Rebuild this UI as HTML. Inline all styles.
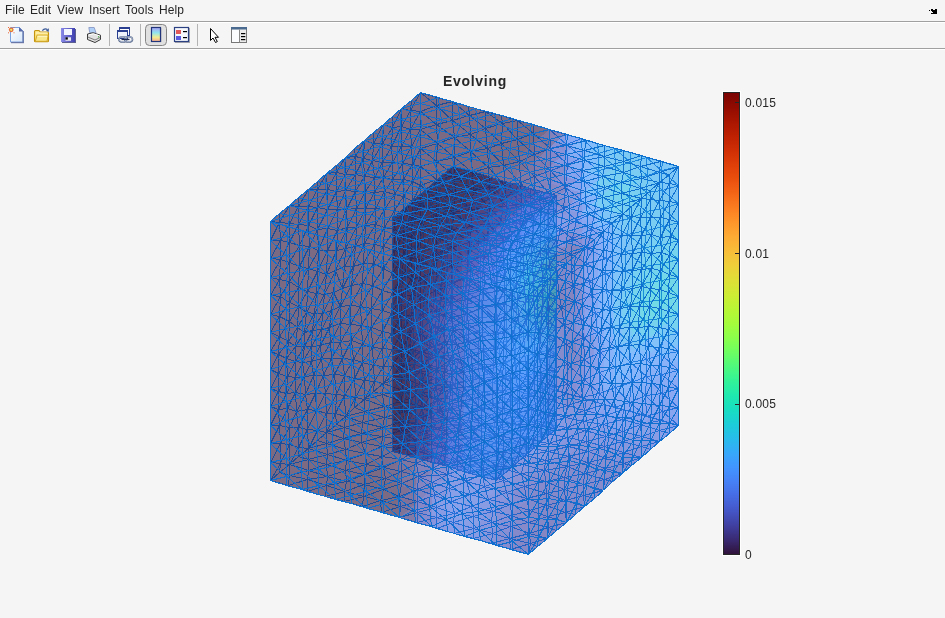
<!DOCTYPE html>
<html><head><meta charset="utf-8">
<style>
html,body{-webkit-font-smoothing:antialiased;margin:0;padding:0;width:945px;height:618px;overflow:hidden;background:#f5f5f5;font-family:"Liberation Sans",sans-serif;}
.abs{position:absolute;}
.gs{will-change:transform;}
#menu span{will-change:transform;position:absolute;top:2px;font-size:12px;color:#262626;line-height:16px;letter-spacing:0.1px}
.hl{position:absolute;left:0;width:945px;height:1px;}
.vs{position:absolute;top:24px;width:1px;height:22px;background:#b4b4b4;}
.lbl{will-change:transform;position:absolute;left:745px;font-size:12px;letter-spacing:0.2px;color:#262626;line-height:14px;}
</style></head><body>
<div id="menu">
<span style="left:5px">File</span>
<span style="left:30px">Edit</span>
<span style="left:57px">View</span>
<span style="left:89px">Insert</span>
<span style="left:125px">Tools</span>
<span style="left:159px">Help</span>
</div>
<svg class="abs" style="left:0;top:0" width="945" height="22">
<g fill="#000" shape-rendering="crispEdges">
<rect x="931" y="9" width="2" height="1"/><rect x="929" y="10" width="1" height="1"/>
<rect x="931" y="10" width="3" height="1"/><rect x="935" y="9" width="2" height="5"/>
<rect x="932" y="11" width="3" height="1"/><rect x="933" y="12" width="4" height="1"/>
<rect x="931" y="13" width="6" height="1"/><rect x="934" y="10" width="1" height="1"/>
</g></svg>
<div class="hl" style="top:21px;background:#a0a0a0"></div>
<div class="hl" style="top:22px;background:#ffffff"></div>
<div class="hl" style="top:48px;background:#a0a0a0"></div>
<div class="hl" style="top:49px;background:#ffffff"></div>
<div class="vs" style="left:109px"></div>
<div class="vs" style="left:140px"></div>
<div class="vs" style="left:197px"></div>
<svg class="abs" style="left:0;top:22px" width="260" height="26" viewBox="0 22 260 26">
<defs>
<linearGradient id="pg" x1="0" y1="0" x2="1" y2="1"><stop offset="0" stop-color="#ffffff"/><stop offset="1" stop-color="#d6e6fa"/></linearGradient>
<linearGradient id="fg" x1="0" y1="0" x2="0" y2="1"><stop offset="0" stop-color="#fff3b0"/><stop offset="1" stop-color="#f2d060"/></linearGradient>
<linearGradient id="sg" x1="0" y1="0" x2="1" y2="0"><stop offset="0" stop-color="#8a8ae8"/><stop offset="1" stop-color="#4040b0"/></linearGradient>
<linearGradient id="cbg" x1="0" y1="0" x2="0" y2="1"><stop offset="0" stop-color="#a99ff6"/><stop offset="0.38" stop-color="#8fe6f0"/><stop offset="0.7" stop-color="#f2ee90"/><stop offset="1" stop-color="#f8a890"/></linearGradient>
</defs>
<!-- new file -->
<path d="M11.5 27.5 H19.5 L23.5 31.5 V42.5 H11.5 Z" fill="#6a78a8" transform="translate(0.5,0.5)"/>
<path d="M10.5 27.5 H19.5 L23 31 V42 H10.5 Z" fill="url(#pg)" stroke="#7aa0e0" stroke-width="1"/>
<path d="M19 27 L23.5 31.5 H19 Z" fill="#5a6aa8"/>
<rect x="22.5" y="31" width="1.2" height="12" fill="#6a78a8"/>
<rect x="11" y="42" width="13" height="1.2" fill="#6a78a8"/>
<circle cx="11.2" cy="29.8" r="2.4" fill="#e8703a"/><circle cx="11.2" cy="29.8" r="1.1" fill="#e8f070"/>
<g fill="#e86a40"><rect x="8" y="27" width="1" height="1"/><rect x="13.5" y="27" width="1" height="1"/><rect x="8" y="32.3" width="1" height="1"/><rect x="13.5" y="32.3" width="1" height="1"/></g>
<!-- open folder -->
<path d="M34.5 31.5 Q34.5 30.5 35.5 30.5 H39 L40.2 32 H47.5 Q48.5 32 48.5 33 V41 Q48.5 41.8 47.5 41.8 H35.5 Q34.5 41.8 34.5 41 Z" fill="#fbe27a" stroke="#c49410" stroke-width="1.1"/>
<path d="M35.8 33 H47.5" stroke="#fff8d0" stroke-width="1"/>
<path d="M37 35.2 H48.2 L47 41.3 H35.3 Z" fill="#fae88c" stroke="#cfa21c" stroke-width="0.9"/>
<path d="M37.5 36.2 H47.2" stroke="#fffbe0" stroke-width="0.9"/>
<path d="M42.3 30.6 Q44.8 27.6 47.4 29.6" fill="none" stroke="#3c5a98" stroke-width="1.2"/>
<path d="M46 30.6 L48.9 28.3 L48.7 31.9 Z" fill="#3c5a98"/>
<!-- save -->
<rect x="62" y="29" width="14" height="14" fill="#5c6090"/>
<rect x="61" y="28" width="14" height="14" fill="url(#sg)"/>
<rect x="64" y="29" width="8" height="6" fill="#f4f6ff"/>
<rect x="65.5" y="37.3" width="5.5" height="3.5" fill="#e8e8f0"/><rect x="65.5" y="37.3" width="2.3" height="2.3" fill="#000"/>
<!-- print -->
<path d="M88.8 27.5 H94.2 L96 32.8 H89.8 Z" fill="#b0d0f8" stroke="#8090c0" stroke-width="0.8"/>
<path d="M87.5 34 L93 32.8 L100.5 35.2 V39.5 L95 42.5 L87.5 39.5 Z" fill="#e2e2e2" stroke="#3a3a3a" stroke-width="1"/>
<path d="M87.8 37 L95 40 L100.3 37.4" fill="none" stroke="#707070" stroke-width="0.9"/>
<path d="M89 34.8 L93.5 33.8 L99.5 35.8" fill="none" stroke="#ffffff" stroke-width="1"/>
<rect x="98" y="36.2" width="1.2" height="1.2" fill="#40b040"/>
<!-- link -->
<rect x="119.5" y="27.5" width="10" height="8" fill="#fff" stroke="#2a3f8f" stroke-width="1"/>
<rect x="119" y="27" width="11" height="2" fill="#2a3f8f"/>
<rect x="117.5" y="30.5" width="10" height="8" fill="#eef2fa" stroke="#2a3f8f" stroke-width="1"/>
<rect x="117" y="30" width="11" height="2" fill="#2a3f8f"/>
<ellipse cx="122.8" cy="39.4" rx="3.9" ry="2.6" fill="none" stroke="#5a6a8a" stroke-width="1.6"/>
<ellipse cx="128.6" cy="39.4" rx="3.9" ry="2.6" fill="none" stroke="#5a6a8a" stroke-width="1.6"/>
<ellipse cx="122.8" cy="39.2" rx="3.9" ry="2.5" fill="none" stroke="#c8d4ec" stroke-width="0.6"/>
<ellipse cx="128.6" cy="39.2" rx="3.9" ry="2.5" fill="none" stroke="#c8d4ec" stroke-width="0.6"/>
<rect x="121.5" y="38.8" width="8" height="1.3" fill="#1e2a50"/>
<!-- colorbar button -->
<rect x="145.5" y="24.5" width="21" height="21" rx="4" fill="#e0e0e0" stroke="#858585" stroke-width="1"/>
<rect x="151.5" y="27.5" width="9" height="14" fill="url(#cbg)" stroke="#22357a" stroke-width="1.2"/>
<rect x="161" y="28" width="0.8" height="14" fill="#b8b8c0"/>
<!-- legend -->
<rect x="175" y="28" width="15" height="15" fill="#a8a8b0"/>
<rect x="174.5" y="27.5" width="14" height="14" fill="#f6f8fc" stroke="#2a4080" stroke-width="1.2"/>
<rect x="176" y="30" width="5" height="4" fill="#e25858"/>
<rect x="176" y="36" width="5" height="4" fill="#5a5ae0"/>
<rect x="183" y="31" width="4" height="1.2" fill="#000"/>
<rect x="183" y="37" width="4" height="1.2" fill="#000"/>
<!-- arrow -->
<path d="M210.5 28.5 V40.5 L213 38 L215.5 42.5 L217.3 41.6 L215 37.3 H218.5 Z" fill="#fff" stroke="#000" stroke-width="1" stroke-linejoin="miter"/>
<!-- property inspector -->
<rect x="231.5" y="27.5" width="15" height="15" fill="#ececec" stroke="#777" stroke-width="1"/>
<rect x="231" y="27" width="16" height="2.5" fill="#4a6a90"/>
<rect x="232" y="30" width="7" height="12" fill="#fafcfe"/>
<rect x="239" y="29.5" width="1" height="13" fill="#888"/>
<rect x="241" y="33" width="4.3" height="1.2" fill="#000"/>
<rect x="241" y="36" width="4.3" height="1.2" fill="#000"/>
<rect x="241" y="39" width="4.3" height="1.2" fill="#000"/>
</svg>
<div class="abs gs" style="left:443px;top:73px;font-size:14px;font-weight:bold;color:#262626;letter-spacing:0.7px">Evolving</div>
<svg class="abs" style="left:0;top:0" width="945" height="618" viewBox="0 0 945 618">
<g fill-opacity="0.375" shape-rendering="crispEdges">
<path d="M420.5 351.5L411 359.5L411 343.5L420.5 335.5Z" fill="#33184a"/>
<path d="M420.5 335.5L411 343.5L411 327L420.5 319Z" fill="#341b51"/>
<path d="M420.5 319L411 327L411 311L420.5 303Z" fill="#341b51"/>
<path d="M420.5 303L411 311L411 295L420.5 287Z" fill="#341b51"/>
<path d="M420.5 287L411 295L411 278.5L420.5 270.5Z" fill="#33184a"/>
<path d="M420.5 270.5L411 278.5L411 262.5L420.5 254.5Z" fill="#321543"/>
<path d="M420.5 254.5L411 262.5L411 246L420.5 238Z" fill="#30123b"/>
<path d="M420.5 238L411 246L411 230L420.5 222Z" fill="#30123b"/>
<path d="M420.5 222L411 230L411 214L420.5 206Z" fill="#30123b"/>
<path d="M420.5 206L411 214L411 197.5L420.5 189.5Z" fill="#30123b"/>
<path d="M420.5 189.5L411 197.5L411 181.5L420.5 173.5Z" fill="#30123b"/>
<path d="M420.5 173.5L411 181.5L411 165.5L420.5 157Z" fill="#30123b"/>
<path d="M420.5 157L411 165.5L411 149L420.5 141Z" fill="#30123b"/>
<path d="M420.5 141L411 149L411 133L420.5 125Z" fill="#30123b"/>
<path d="M420.5 125L411 133L411 117L420.5 108.5Z" fill="#30123b"/>
<path d="M420.5 108.5L411 117L411 100.5L420.5 92.5Z" fill="#30123b"/>
<path d="M411 359.5L402 367.5L402 351.5L411 343.5Z" fill="#30123b"/>
<path d="M411 343.5L402 351.5L402 335L411 327Z" fill="#30123b"/>
<path d="M411 327L402 335L402 319L411 311Z" fill="#321543"/>
<path d="M411 311L402 319L402 303L411 295Z" fill="#33184a"/>
<path d="M411 295L402 303L402 286.5L411 278.5Z" fill="#321543"/>
<path d="M411 278.5L402 286.5L402 270.5L411 262.5Z" fill="#30123b"/>
<path d="M411 262.5L402 270.5L402 254.5L411 246Z" fill="#30123b"/>
<path d="M411 246L402 254.5L402 238L411 230Z" fill="#30123b"/>
<path d="M411 230L402 238L402 222L411 214Z" fill="#30123b"/>
<path d="M411 214L402 222L402 206L411 197.5Z" fill="#30123b"/>
<path d="M411 197.5L402 206L402 189.5L411 181.5Z" fill="#30123b"/>
<path d="M411 181.5L402 189.5L402 173.5L411 165.5Z" fill="#30123b"/>
<path d="M411 165.5L402 173.5L402 157L411 149Z" fill="#30123b"/>
<path d="M411 149L402 157L402 141L411 133Z" fill="#30123b"/>
<path d="M411 133L402 141L402 125L411 117Z" fill="#30123b"/>
<path d="M411 117L402 125L402 108.5L411 100.5Z" fill="#30123b"/>
<path d="M402 367.5L392.5 375.5L392.5 359.5L402 351.5Z" fill="#30123b"/>
<path d="M402 351.5L392.5 359.5L392.5 343.5L402 335Z" fill="#30123b"/>
<path d="M402 335L392.5 343.5L392.5 327L402 319Z" fill="#30123b"/>
<path d="M402 319L392.5 327L392.5 311L402 303Z" fill="#30123b"/>
<path d="M402 303L392.5 311L392.5 295L402 286.5Z" fill="#321543"/>
<path d="M402 286.5L392.5 295L392.5 278.5L402 270.5Z" fill="#30123b"/>
<path d="M402 270.5L392.5 278.5L392.5 262.5L402 254.5Z" fill="#30123b"/>
<path d="M402 254.5L392.5 262.5L392.5 246L402 238Z" fill="#30123b"/>
<path d="M402 238L392.5 246L392.5 230L402 222Z" fill="#30123b"/>
<path d="M402 222L392.5 230L392.5 214L402 206Z" fill="#30123b"/>
<path d="M402 206L392.5 214L392.5 197.5L402 189.5Z" fill="#30123b"/>
<path d="M402 189.5L392.5 197.5L392.5 181.5L402 173.5Z" fill="#30123b"/>
<path d="M402 173.5L392.5 181.5L392.5 165L402 157Z" fill="#30123b"/>
<path d="M402 157L392.5 165L392.5 149L402 141Z" fill="#30123b"/>
<path d="M402 141L392.5 149L392.5 133L402 125Z" fill="#30123b"/>
<path d="M402 125L392.5 133L392.5 116.5L402 108.5Z" fill="#30123b"/>
<path d="M392.5 375.5L383 384L383 367.5L392.5 359.5Z" fill="#30123b"/>
<path d="M392.5 359.5L383 367.5L383 351.5L392.5 343.5Z" fill="#30123b"/>
<path d="M392.5 343.5L383 351.5L383 335L392.5 327Z" fill="#30123b"/>
<path d="M392.5 327L383 335L383 319L392.5 311Z" fill="#30123b"/>
<path d="M392.5 311L383 319L383 303L392.5 295Z" fill="#30123b"/>
<path d="M392.5 295L383 303L383 286.5L392.5 278.5Z" fill="#30123b"/>
<path d="M392.5 278.5L383 286.5L383 270.5L392.5 262.5Z" fill="#30123b"/>
<path d="M392.5 262.5L383 270.5L383 254L392.5 246Z" fill="#30123b"/>
<path d="M392.5 246L383 254L383 238L392.5 230Z" fill="#30123b"/>
<path d="M392.5 230L383 238L383 222L392.5 214Z" fill="#30123b"/>
<path d="M392.5 214L383 222L383 205.5L392.5 197.5Z" fill="#30123b"/>
<path d="M392.5 197.5L383 205.5L383 189.5L392.5 181.5Z" fill="#30123b"/>
<path d="M392.5 181.5L383 189.5L383 173.5L392.5 165Z" fill="#30123b"/>
<path d="M392.5 165L383 173.5L383 157L392.5 149Z" fill="#30123b"/>
<path d="M392.5 149L383 157L383 141L392.5 133Z" fill="#30123b"/>
<path d="M392.5 133L383 141L383 125L392.5 116.5Z" fill="#30123b"/>
<path d="M383 384L373.5 392L373.5 375.5L383 367.5Z" fill="#30123b"/>
<path d="M383 367.5L373.5 375.5L373.5 359.5L383 351.5Z" fill="#30123b"/>
<path d="M383 351.5L373.5 359.5L373.5 343L383 335Z" fill="#30123b"/>
<path d="M383 335L373.5 343L373.5 327L383 319Z" fill="#30123b"/>
<path d="M383 319L373.5 327L373.5 311L383 303Z" fill="#30123b"/>
<path d="M383 303L373.5 311L373.5 294.5L383 286.5Z" fill="#30123b"/>
<path d="M383 286.5L373.5 294.5L373.5 278.5L383 270.5Z" fill="#30123b"/>
<path d="M383 270.5L373.5 278.5L373.5 262.5L383 254Z" fill="#30123b"/>
<path d="M383 254L373.5 262.5L373.5 246L383 238Z" fill="#30123b"/>
<path d="M383 238L373.5 246L373.5 230L383 222Z" fill="#30123b"/>
<path d="M383 222L373.5 230L373.5 214L383 205.5Z" fill="#30123b"/>
<path d="M383 205.5L373.5 214L373.5 197.5L383 189.5Z" fill="#30123b"/>
<path d="M383 189.5L373.5 197.5L373.5 181.5L383 173.5Z" fill="#30123b"/>
<path d="M383 173.5L373.5 181.5L373.5 165L383 157Z" fill="#30123b"/>
<path d="M383 157L373.5 165L373.5 149L383 141Z" fill="#30123b"/>
<path d="M383 141L373.5 149L373.5 133L383 125Z" fill="#30123b"/>
<path d="M373.5 392L364 400L364 383.5L373.5 375.5Z" fill="#30123b"/>
<path d="M373.5 375.5L364 383.5L364 367.5L373.5 359.5Z" fill="#30123b"/>
<path d="M373.5 359.5L364 367.5L364 351.5L373.5 343Z" fill="#30123b"/>
<path d="M373.5 343L364 351.5L364 335L373.5 327Z" fill="#30123b"/>
<path d="M373.5 327L364 335L364 319L373.5 311Z" fill="#30123b"/>
<path d="M373.5 311L364 319L364 303L373.5 294.5Z" fill="#30123b"/>
<path d="M373.5 294.5L364 303L364 286.5L373.5 278.5Z" fill="#30123b"/>
<path d="M373.5 278.5L364 286.5L364 270.5L373.5 262.5Z" fill="#30123b"/>
<path d="M373.5 262.5L364 270.5L364 254L373.5 246Z" fill="#30123b"/>
<path d="M373.5 246L364 254L364 238L373.5 230Z" fill="#30123b"/>
<path d="M373.5 230L364 238L364 222L373.5 214Z" fill="#30123b"/>
<path d="M373.5 214L364 222L364 205.5L373.5 197.5Z" fill="#30123b"/>
<path d="M373.5 197.5L364 205.5L364 189.5L373.5 181.5Z" fill="#30123b"/>
<path d="M373.5 181.5L364 189.5L364 173L373.5 165Z" fill="#30123b"/>
<path d="M373.5 165L364 173L364 157L373.5 149Z" fill="#30123b"/>
<path d="M373.5 149L364 157L364 141L373.5 133Z" fill="#30123b"/>
<path d="M364 400L355 408L355 392L364 383.5Z" fill="#30123b"/>
<path d="M364 383.5L355 392L355 375.5L364 367.5Z" fill="#30123b"/>
<path d="M364 367.5L355 375.5L355 359.5L364 351.5Z" fill="#30123b"/>
<path d="M364 351.5L355 359.5L355 343L364 335Z" fill="#30123b"/>
<path d="M364 335L355 343L355 327L364 319Z" fill="#30123b"/>
<path d="M364 319L355 327L355 311L364 303Z" fill="#30123b"/>
<path d="M364 303L355 311L355 294.5L364 286.5Z" fill="#30123b"/>
<path d="M364 286.5L355 294.5L355 278.5L364 270.5Z" fill="#30123b"/>
<path d="M364 270.5L355 278.5L355 262L364 254Z" fill="#30123b"/>
<path d="M364 254L355 262L355 246L364 238Z" fill="#30123b"/>
<path d="M364 238L355 246L355 230L364 222Z" fill="#30123b"/>
<path d="M364 222L355 230L355 213.5L364 205.5Z" fill="#30123b"/>
<path d="M364 205.5L355 213.5L355 197.5L364 189.5Z" fill="#30123b"/>
<path d="M364 189.5L355 197.5L355 181.5L364 173Z" fill="#30123b"/>
<path d="M364 173L355 181.5L355 165L364 157Z" fill="#30123b"/>
<path d="M364 157L355 165L355 149L364 141Z" fill="#30123b"/>
<path d="M355 408L345.5 416L345.5 400L355 392Z" fill="#30123b"/>
<path d="M355 392L345.5 400L345.5 383.5L355 375.5Z" fill="#30123b"/>
<path d="M355 375.5L345.5 383.5L345.5 367.5L355 359.5Z" fill="#30123b"/>
<path d="M355 359.5L345.5 367.5L345.5 351L355 343Z" fill="#30123b"/>
<path d="M355 343L345.5 351L345.5 335L355 327Z" fill="#30123b"/>
<path d="M355 327L345.5 335L345.5 319L355 311Z" fill="#30123b"/>
<path d="M355 311L345.5 319L345.5 302.5L355 294.5Z" fill="#30123b"/>
<path d="M355 294.5L345.5 302.5L345.5 286.5L355 278.5Z" fill="#30123b"/>
<path d="M355 278.5L345.5 286.5L345.5 270.5L355 262Z" fill="#30123b"/>
<path d="M355 262L345.5 270.5L345.5 254L355 246Z" fill="#30123b"/>
<path d="M355 246L345.5 254L345.5 238L355 230Z" fill="#30123b"/>
<path d="M355 230L345.5 238L345.5 222L355 213.5Z" fill="#30123b"/>
<path d="M355 213.5L345.5 222L345.5 205.5L355 197.5Z" fill="#30123b"/>
<path d="M355 197.5L345.5 205.5L345.5 189.5L355 181.5Z" fill="#30123b"/>
<path d="M355 181.5L345.5 189.5L345.5 173L355 165Z" fill="#30123b"/>
<path d="M355 165L345.5 173L345.5 157L355 149Z" fill="#30123b"/>
<path d="M345.5 416L336 424L336 408L345.5 400Z" fill="#30123b"/>
<path d="M345.5 400L336 408L336 391.5L345.5 383.5Z" fill="#30123b"/>
<path d="M345.5 383.5L336 391.5L336 375.5L345.5 367.5Z" fill="#30123b"/>
<path d="M345.5 367.5L336 375.5L336 359.5L345.5 351Z" fill="#30123b"/>
<path d="M345.5 351L336 359.5L336 343L345.5 335Z" fill="#30123b"/>
<path d="M345.5 335L336 343L336 327L345.5 319Z" fill="#30123b"/>
<path d="M345.5 319L336 327L336 311L345.5 302.5Z" fill="#30123b"/>
<path d="M345.5 302.5L336 311L336 294.5L345.5 286.5Z" fill="#30123b"/>
<path d="M345.5 286.5L336 294.5L336 278.5L345.5 270.5Z" fill="#30123b"/>
<path d="M345.5 270.5L336 278.5L336 262L345.5 254Z" fill="#30123b"/>
<path d="M345.5 254L336 262L336 246L345.5 238Z" fill="#30123b"/>
<path d="M345.5 238L336 246L336 230L345.5 222Z" fill="#30123b"/>
<path d="M345.5 222L336 230L336 213.5L345.5 205.5Z" fill="#30123b"/>
<path d="M345.5 205.5L336 213.5L336 197.5L345.5 189.5Z" fill="#30123b"/>
<path d="M345.5 189.5L336 197.5L336 181L345.5 173Z" fill="#30123b"/>
<path d="M345.5 173L336 181L336 165L345.5 157Z" fill="#30123b"/>
<path d="M336 424L327 432L327 416L336 408Z" fill="#30123b"/>
<path d="M336 408L327 416L327 400L336 391.5Z" fill="#30123b"/>
<path d="M336 391.5L327 400L327 383.5L336 375.5Z" fill="#30123b"/>
<path d="M336 375.5L327 383.5L327 367.5L336 359.5Z" fill="#30123b"/>
<path d="M336 359.5L327 367.5L327 351L336 343Z" fill="#30123b"/>
<path d="M336 343L327 351L327 335L336 327Z" fill="#30123b"/>
<path d="M336 327L327 335L327 319L336 311Z" fill="#30123b"/>
<path d="M336 311L327 319L327 302.5L336 294.5Z" fill="#30123b"/>
<path d="M336 294.5L327 302.5L327 286.5L336 278.5Z" fill="#30123b"/>
<path d="M336 278.5L327 286.5L327 270L336 262Z" fill="#30123b"/>
<path d="M336 262L327 270L327 254L336 246Z" fill="#30123b"/>
<path d="M336 246L327 254L327 238L336 230Z" fill="#30123b"/>
<path d="M336 230L327 238L327 221.5L336 213.5Z" fill="#30123b"/>
<path d="M336 213.5L327 221.5L327 205.5L336 197.5Z" fill="#30123b"/>
<path d="M336 197.5L327 205.5L327 189.5L336 181Z" fill="#30123b"/>
<path d="M336 181L327 189.5L327 173L336 165Z" fill="#30123b"/>
<path d="M327 432L317.5 440L317.5 424L327 416Z" fill="#30123b"/>
<path d="M327 416L317.5 424L317.5 408L327 400Z" fill="#30123b"/>
<path d="M327 400L317.5 408L317.5 391.5L327 383.5Z" fill="#30123b"/>
<path d="M327 383.5L317.5 391.5L317.5 375.5L327 367.5Z" fill="#30123b"/>
<path d="M327 367.5L317.5 375.5L317.5 359L327 351Z" fill="#30123b"/>
<path d="M327 351L317.5 359L317.5 343L327 335Z" fill="#30123b"/>
<path d="M327 335L317.5 343L317.5 327L327 319Z" fill="#30123b"/>
<path d="M327 319L317.5 327L317.5 310.5L327 302.5Z" fill="#30123b"/>
<path d="M327 302.5L317.5 310.5L317.5 294.5L327 286.5Z" fill="#30123b"/>
<path d="M327 286.5L317.5 294.5L317.5 278.5L327 270Z" fill="#30123b"/>
<path d="M327 270L317.5 278.5L317.5 262L327 254Z" fill="#30123b"/>
<path d="M327 254L317.5 262L317.5 246L327 238Z" fill="#30123b"/>
<path d="M327 238L317.5 246L317.5 230L327 221.5Z" fill="#30123b"/>
<path d="M327 221.5L317.5 230L317.5 213.5L327 205.5Z" fill="#30123b"/>
<path d="M327 205.5L317.5 213.5L317.5 197.5L327 189.5Z" fill="#30123b"/>
<path d="M327 189.5L317.5 197.5L317.5 181L327 173Z" fill="#30123b"/>
<path d="M317.5 440L308 448L308 432L317.5 424Z" fill="#30123b"/>
<path d="M317.5 424L308 432L308 416L317.5 408Z" fill="#30123b"/>
<path d="M317.5 408L308 416L308 399.5L317.5 391.5Z" fill="#30123b"/>
<path d="M317.5 391.5L308 399.5L308 383.5L317.5 375.5Z" fill="#30123b"/>
<path d="M317.5 375.5L308 383.5L308 367.5L317.5 359Z" fill="#30123b"/>
<path d="M317.5 359L308 367.5L308 351L317.5 343Z" fill="#30123b"/>
<path d="M317.5 343L308 351L308 335L317.5 327Z" fill="#30123b"/>
<path d="M317.5 327L308 335L308 319L317.5 310.5Z" fill="#30123b"/>
<path d="M317.5 310.5L308 319L308 302.5L317.5 294.5Z" fill="#30123b"/>
<path d="M317.5 294.5L308 302.5L308 286.5L317.5 278.5Z" fill="#30123b"/>
<path d="M317.5 278.5L308 286.5L308 270L317.5 262Z" fill="#30123b"/>
<path d="M317.5 262L308 270L308 254L317.5 246Z" fill="#30123b"/>
<path d="M317.5 246L308 254L308 238L317.5 230Z" fill="#30123b"/>
<path d="M317.5 230L308 238L308 221.5L317.5 213.5Z" fill="#30123b"/>
<path d="M317.5 213.5L308 221.5L308 205.5L317.5 197.5Z" fill="#30123b"/>
<path d="M317.5 197.5L308 205.5L308 189L317.5 181Z" fill="#30123b"/>
<path d="M308 448L298.5 456.5L298.5 440L308 432Z" fill="#30123b"/>
<path d="M308 432L298.5 440L298.5 424L308 416Z" fill="#30123b"/>
<path d="M308 416L298.5 424L298.5 408L308 399.5Z" fill="#30123b"/>
<path d="M308 399.5L298.5 408L298.5 391.5L308 383.5Z" fill="#30123b"/>
<path d="M308 383.5L298.5 391.5L298.5 375.5L308 367.5Z" fill="#30123b"/>
<path d="M308 367.5L298.5 375.5L298.5 359L308 351Z" fill="#30123b"/>
<path d="M308 351L298.5 359L298.5 343L308 335Z" fill="#30123b"/>
<path d="M308 335L298.5 343L298.5 327L308 319Z" fill="#30123b"/>
<path d="M308 319L298.5 327L298.5 310.5L308 302.5Z" fill="#30123b"/>
<path d="M308 302.5L298.5 310.5L298.5 294.5L308 286.5Z" fill="#30123b"/>
<path d="M308 286.5L298.5 294.5L298.5 278L308 270Z" fill="#30123b"/>
<path d="M308 270L298.5 278L298.5 262L308 254Z" fill="#30123b"/>
<path d="M308 254L298.5 262L298.5 246L308 238Z" fill="#30123b"/>
<path d="M308 238L298.5 246L298.5 229.5L308 221.5Z" fill="#30123b"/>
<path d="M308 221.5L298.5 229.5L298.5 213.5L308 205.5Z" fill="#30123b"/>
<path d="M308 205.5L298.5 213.5L298.5 197.5L308 189Z" fill="#30123b"/>
<path d="M298.5 456.5L289 464.5L289 448L298.5 440Z" fill="#30123b"/>
<path d="M298.5 440L289 448L289 432L298.5 424Z" fill="#30123b"/>
<path d="M298.5 424L289 432L289 416L298.5 408Z" fill="#30123b"/>
<path d="M298.5 408L289 416L289 399.5L298.5 391.5Z" fill="#30123b"/>
<path d="M298.5 391.5L289 399.5L289 383.5L298.5 375.5Z" fill="#30123b"/>
<path d="M298.5 375.5L289 383.5L289 367L298.5 359Z" fill="#30123b"/>
<path d="M298.5 359L289 367L289 351L298.5 343Z" fill="#30123b"/>
<path d="M298.5 343L289 351L289 335L298.5 327Z" fill="#30123b"/>
<path d="M298.5 327L289 335L289 318.5L298.5 310.5Z" fill="#30123b"/>
<path d="M298.5 310.5L289 318.5L289 302.5L298.5 294.5Z" fill="#30123b"/>
<path d="M298.5 294.5L289 302.5L289 286.5L298.5 278Z" fill="#30123b"/>
<path d="M298.5 278L289 286.5L289 270L298.5 262Z" fill="#30123b"/>
<path d="M298.5 262L289 270L289 254L298.5 246Z" fill="#30123b"/>
<path d="M298.5 246L289 254L289 238L298.5 229.5Z" fill="#30123b"/>
<path d="M298.5 229.5L289 238L289 221.5L298.5 213.5Z" fill="#30123b"/>
<path d="M298.5 213.5L289 221.5L289 205.5L298.5 197.5Z" fill="#30123b"/>
<path d="M289 464.5L280 472.5L280 456L289 448Z" fill="#30123b"/>
<path d="M289 448L280 456L280 440L289 432Z" fill="#30123b"/>
<path d="M289 432L280 440L280 424L289 416Z" fill="#30123b"/>
<path d="M289 416L280 424L280 407.5L289 399.5Z" fill="#30123b"/>
<path d="M289 399.5L280 407.5L280 391.5L289 383.5Z" fill="#30123b"/>
<path d="M289 383.5L280 391.5L280 375.5L289 367Z" fill="#30123b"/>
<path d="M289 367L280 375.5L280 359L289 351Z" fill="#30123b"/>
<path d="M289 351L280 359L280 343L289 335Z" fill="#30123b"/>
<path d="M289 335L280 343L280 327L289 318.5Z" fill="#30123b"/>
<path d="M289 318.5L280 327L280 310.5L289 302.5Z" fill="#30123b"/>
<path d="M289 302.5L280 310.5L280 294.5L289 286.5Z" fill="#30123b"/>
<path d="M289 286.5L280 294.5L280 278L289 270Z" fill="#30123b"/>
<path d="M289 270L280 278L280 262L289 254Z" fill="#30123b"/>
<path d="M289 254L280 262L280 246L289 238Z" fill="#30123b"/>
<path d="M289 238L280 246L280 229.5L289 221.5Z" fill="#30123b"/>
<path d="M289 221.5L280 229.5L280 213.5L289 205.5Z" fill="#30123b"/>
<path d="M280 472.5L270.5 480.5L270.5 464.5L280 456Z" fill="#30123b"/>
<path d="M280 456L270.5 464.5L270.5 448L280 440Z" fill="#30123b"/>
<path d="M280 440L270.5 448L270.5 432L280 424Z" fill="#30123b"/>
<path d="M280 424L270.5 432L270.5 416L280 407.5Z" fill="#30123b"/>
<path d="M280 407.5L270.5 416L270.5 399.5L280 391.5Z" fill="#30123b"/>
<path d="M280 391.5L270.5 399.5L270.5 383.5L280 375.5Z" fill="#30123b"/>
<path d="M280 375.5L270.5 383.5L270.5 367L280 359Z" fill="#30123b"/>
<path d="M280 359L270.5 367L270.5 351L280 343Z" fill="#30123b"/>
<path d="M280 343L270.5 351L270.5 335L280 327Z" fill="#30123b"/>
<path d="M280 327L270.5 335L270.5 318.5L280 310.5Z" fill="#30123b"/>
<path d="M280 310.5L270.5 318.5L270.5 302.5L280 294.5Z" fill="#30123b"/>
<path d="M280 294.5L270.5 302.5L270.5 286L280 278Z" fill="#30123b"/>
<path d="M280 278L270.5 286L270.5 270L280 262Z" fill="#30123b"/>
<path d="M280 262L270.5 270L270.5 254L280 246Z" fill="#30123b"/>
<path d="M280 246L270.5 254L270.5 237.5L280 229.5Z" fill="#30123b"/>
<path d="M280 229.5L270.5 237.5L270.5 221.5L280 213.5Z" fill="#30123b"/>
<path d="M420.5 351.5L436.5 356L436.5 340L420.5 335.5Z" fill="#372466"/>
<path d="M420.5 335.5L436.5 340L436.5 324L420.5 319Z" fill="#372466"/>
<path d="M420.5 319L436.5 324L436.5 307.5L420.5 303Z" fill="#372466"/>
<path d="M420.5 303L436.5 307.5L436.5 291.5L420.5 287Z" fill="#372466"/>
<path d="M420.5 287L436.5 291.5L436.5 275L420.5 270.5Z" fill="#36215f"/>
<path d="M420.5 270.5L436.5 275L436.5 259L420.5 254.5Z" fill="#341b51"/>
<path d="M420.5 254.5L436.5 259L436.5 243L420.5 238Z" fill="#321543"/>
<path d="M420.5 238L436.5 243L436.5 226.5L420.5 222Z" fill="#30123b"/>
<path d="M420.5 222L436.5 226.5L436.5 210.5L420.5 206Z" fill="#30123b"/>
<path d="M420.5 206L436.5 210.5L436.5 194L420.5 189.5Z" fill="#30123b"/>
<path d="M420.5 189.5L436.5 194L436.5 178L420.5 173.5Z" fill="#30123b"/>
<path d="M420.5 173.5L436.5 178L436.5 162L420.5 157Z" fill="#30123b"/>
<path d="M420.5 157L436.5 162L436.5 145.5L420.5 141Z" fill="#30123b"/>
<path d="M420.5 141L436.5 145.5L436.5 129.5L420.5 125Z" fill="#30123b"/>
<path d="M420.5 125L436.5 129.5L436.5 113.5L420.5 108.5Z" fill="#30123b"/>
<path d="M420.5 108.5L436.5 113.5L436.5 97L420.5 92.5Z" fill="#30123b"/>
<path d="M436.5 356L453 361L453 344.5L436.5 340Z" fill="#3d358b"/>
<path d="M436.5 340L453 344.5L453 328.5L436.5 324Z" fill="#3d358b"/>
<path d="M436.5 324L453 328.5L453 312L436.5 307.5Z" fill="#3c3286"/>
<path d="M436.5 307.5L453 312L453 296L436.5 291.5Z" fill="#3b2f80"/>
<path d="M436.5 291.5L453 296L453 280L436.5 275Z" fill="#3b2f80"/>
<path d="M436.5 275L453 280L453 263.5L436.5 259Z" fill="#392a73"/>
<path d="M436.5 259L453 263.5L453 247.5L436.5 243Z" fill="#372466"/>
<path d="M436.5 243L453 247.5L453 231L436.5 226.5Z" fill="#351e58"/>
<path d="M436.5 226.5L453 231L453 215L436.5 210.5Z" fill="#321543"/>
<path d="M436.5 210.5L453 215L453 199L436.5 194Z" fill="#30123b"/>
<path d="M436.5 194L453 199L453 182.5L436.5 178Z" fill="#30123b"/>
<path d="M436.5 178L453 182.5L453 166.5L436.5 162Z" fill="#30123b"/>
<path d="M436.5 162L453 166.5L453 150.5L436.5 145.5Z" fill="#30123b"/>
<path d="M436.5 145.5L453 150.5L453 134L436.5 129.5Z" fill="#30123b"/>
<path d="M436.5 129.5L453 134L453 118L436.5 113.5Z" fill="#30123b"/>
<path d="M436.5 113.5L453 118L453 102L436.5 97Z" fill="#30123b"/>
<path d="M453 361L469 365.5L469 349L453 344.5Z" fill="#424bb5"/>
<path d="M453 344.5L469 349L469 333L453 328.5Z" fill="#4249b1"/>
<path d="M453 328.5L469 333L469 317L453 312Z" fill="#4146ac"/>
<path d="M453 312L469 317L469 300.5L453 296Z" fill="#4040a2"/>
<path d="M453 296L469 300.5L469 284.5L453 280Z" fill="#4040a2"/>
<path d="M453 280L469 284.5L469 268L453 263.5Z" fill="#3f3e9c"/>
<path d="M453 263.5L469 268L469 252L453 247.5Z" fill="#3f3b97"/>
<path d="M453 247.5L469 252L469 236L453 231Z" fill="#3c3286"/>
<path d="M453 231L469 236L469 219.5L453 215Z" fill="#372466"/>
<path d="M453 215L469 219.5L469 203.5L453 199Z" fill="#33184a"/>
<path d="M453 199L469 203.5L469 187.5L453 182.5Z" fill="#30123b"/>
<path d="M453 182.5L469 187.5L469 171L453 166.5Z" fill="#30123b"/>
<path d="M453 166.5L469 171L469 155L453 150.5Z" fill="#30123b"/>
<path d="M453 150.5L469 155L469 139L453 134Z" fill="#30123b"/>
<path d="M453 134L469 139L469 122.5L453 118Z" fill="#30123b"/>
<path d="M453 118L469 122.5L469 106.5L453 102Z" fill="#30123b"/>
<path d="M469 365.5L485 370L485 354L469 349Z" fill="#4661d6"/>
<path d="M469 349L485 354L485 337.5L469 333Z" fill="#455ed3"/>
<path d="M469 333L485 337.5L485 321.5L469 317Z" fill="#4559cb"/>
<path d="M469 317L485 321.5L485 305L469 300.5Z" fill="#4454c3"/>
<path d="M469 300.5L485 305L485 289L469 284.5Z" fill="#4454c3"/>
<path d="M469 284.5L485 289L485 273L469 268Z" fill="#4454c3"/>
<path d="M469 268L485 273L485 256.5L469 252Z" fill="#4451bf"/>
<path d="M469 252L485 256.5L485 240.5L469 236Z" fill="#4249b1"/>
<path d="M469 236L485 240.5L485 224.5L469 219.5Z" fill="#3f3e9c"/>
<path d="M469 219.5L485 224.5L485 208L469 203.5Z" fill="#3a2d79"/>
<path d="M469 203.5L485 208L485 192L469 187.5Z" fill="#351e58"/>
<path d="M469 187.5L485 192L485 176L469 171Z" fill="#30123b"/>
<path d="M469 171L485 176L485 159.5L469 155Z" fill="#30123b"/>
<path d="M469 155L485 159.5L485 143.5L469 139Z" fill="#30123b"/>
<path d="M469 139L485 143.5L485 127L469 122.5Z" fill="#30123b"/>
<path d="M469 122.5L485 127L485 111L469 106.5Z" fill="#30123b"/>
<path d="M485 370L501 374.5L501 358.5L485 354Z" fill="#4773eb"/>
<path d="M485 354L501 358.5L501 342L485 337.5Z" fill="#4773eb"/>
<path d="M485 337.5L501 342L501 326L485 321.5Z" fill="#476ee6"/>
<path d="M485 321.5L501 326L501 310L485 305Z" fill="#4666dd"/>
<path d="M485 305L501 310L501 293.5L485 289Z" fill="#4664da"/>
<path d="M485 289L501 293.5L501 277.5L485 273Z" fill="#4669e0"/>
<path d="M485 273L501 277.5L501 261.5L485 256.5Z" fill="#4669e0"/>
<path d="M485 256.5L501 261.5L501 245L485 240.5Z" fill="#4664da"/>
<path d="M485 240.5L501 245L501 229L485 224.5Z" fill="#4456c7"/>
<path d="M485 224.5L501 229L501 213L485 208Z" fill="#4143a7"/>
<path d="M485 208L501 213L501 196.5L485 192Z" fill="#3b2f80"/>
<path d="M485 192L501 196.5L501 180.5L485 176Z" fill="#36215f"/>
<path d="M485 176L501 180.5L501 164L485 159.5Z" fill="#321543"/>
<path d="M485 159.5L501 164L501 148L485 143.5Z" fill="#30123b"/>
<path d="M485 143.5L501 148L501 132L485 127Z" fill="#30123b"/>
<path d="M485 127L501 132L501 115.5L485 111Z" fill="#30123b"/>
<path d="M501 374.5L517 379L517 363L501 358.5Z" fill="#4680f6"/>
<path d="M501 358.5L517 363L517 347L501 342Z" fill="#4682f8"/>
<path d="M501 342L517 347L517 330.5L501 326Z" fill="#467df4"/>
<path d="M501 326L517 330.5L517 314.5L501 310Z" fill="#4773eb"/>
<path d="M501 310L517 314.5L517 298.5L501 293.5Z" fill="#4771e9"/>
<path d="M501 293.5L517 298.5L517 282L501 277.5Z" fill="#4778f0"/>
<path d="M501 277.5L517 282L517 266L501 261.5Z" fill="#467df4"/>
<path d="M501 261.5L517 266L517 250L501 245Z" fill="#4778f0"/>
<path d="M501 245L517 250L517 233.5L501 229Z" fill="#466be3"/>
<path d="M501 229L517 233.5L517 217.5L501 213Z" fill="#4559cb"/>
<path d="M501 213L517 217.5L517 201L501 196.5Z" fill="#4143a7"/>
<path d="M501 196.5L517 201L517 185L501 180.5Z" fill="#3b2f80"/>
<path d="M501 180.5L517 185L517 169L501 164Z" fill="#351e58"/>
<path d="M501 164L517 169L517 152.5L501 148Z" fill="#30123b"/>
<path d="M501 148L517 152.5L517 136.5L501 132Z" fill="#30123b"/>
<path d="M501 132L517 136.5L517 120L501 115.5Z" fill="#30123b"/>
<path d="M517 379L533.5 384L533.5 367.5L517 363Z" fill="#4680f6"/>
<path d="M517 363L533.5 367.5L533.5 351.5L517 347Z" fill="#4687fb"/>
<path d="M517 347L533.5 351.5L533.5 335.5L517 330.5Z" fill="#4685fa"/>
<path d="M517 330.5L533.5 335.5L533.5 319L517 314.5Z" fill="#4776ee"/>
<path d="M517 314.5L533.5 319L533.5 303L517 298.5Z" fill="#4771e9"/>
<path d="M517 298.5L533.5 303L533.5 287L517 282Z" fill="#477bf2"/>
<path d="M517 282L533.5 287L533.5 270.5L517 266Z" fill="#4687fb"/>
<path d="M517 266L533.5 270.5L533.5 254.5L517 250Z" fill="#4680f6"/>
<path d="M517 250L533.5 254.5L533.5 238L517 233.5Z" fill="#477bf2"/>
<path d="M517 233.5L533.5 238L533.5 222L517 217.5Z" fill="#476ee6"/>
<path d="M517 217.5L533.5 222L533.5 206L517 201Z" fill="#4456c7"/>
<path d="M517 201L533.5 206L533.5 189.5L517 185Z" fill="#3f3e9c"/>
<path d="M517 185L533.5 189.5L533.5 173.5L517 169Z" fill="#392a73"/>
<path d="M517 169L533.5 173.5L533.5 157L517 152.5Z" fill="#351e58"/>
<path d="M517 152.5L533.5 157L533.5 141L517 136.5Z" fill="#30123b"/>
<path d="M517 136.5L533.5 141L533.5 125L517 120Z" fill="#30123b"/>
<path d="M533.5 384L549.5 388.5L549.5 372.5L533.5 367.5Z" fill="#476ee6"/>
<path d="M533.5 367.5L549.5 372.5L549.5 356L533.5 351.5Z" fill="#4776ee"/>
<path d="M533.5 351.5L549.5 356L549.5 340L533.5 335.5Z" fill="#4778f0"/>
<path d="M533.5 335.5L549.5 340L549.5 324L533.5 319Z" fill="#4669e0"/>
<path d="M533.5 319L549.5 324L549.5 307.5L533.5 303Z" fill="#455ccf"/>
<path d="M533.5 303L549.5 307.5L549.5 291.5L533.5 287Z" fill="#455ed3"/>
<path d="M533.5 287L549.5 291.5L549.5 275L533.5 270.5Z" fill="#4669e0"/>
<path d="M533.5 270.5L549.5 275L549.5 259L533.5 254.5Z" fill="#4669e0"/>
<path d="M533.5 254.5L549.5 259L549.5 243L533.5 238Z" fill="#476ee6"/>
<path d="M533.5 238L549.5 243L549.5 226.5L533.5 222Z" fill="#4778f0"/>
<path d="M533.5 222L549.5 226.5L549.5 210.5L533.5 206Z" fill="#4666dd"/>
<path d="M533.5 206L549.5 210.5L549.5 194L533.5 189.5Z" fill="#4249b1"/>
<path d="M533.5 189.5L549.5 194L549.5 178L533.5 173.5Z" fill="#3e3891"/>
<path d="M533.5 173.5L549.5 178L549.5 162L533.5 157Z" fill="#3b2f80"/>
<path d="M533.5 157L549.5 162L549.5 145.5L533.5 141Z" fill="#38276d"/>
<path d="M533.5 141L549.5 145.5L549.5 129.5L533.5 125Z" fill="#33184a"/>
<path d="M549.5 388.5L565.5 393L565.5 377L549.5 372.5Z" fill="#4454c3"/>
<path d="M549.5 372.5L565.5 377L565.5 361L549.5 356Z" fill="#4454c3"/>
<path d="M549.5 356L565.5 361L565.5 344.5L549.5 340Z" fill="#434eba"/>
<path d="M549.5 340L565.5 344.5L565.5 328.5L549.5 324Z" fill="#434eba"/>
<path d="M549.5 324L565.5 328.5L565.5 312L549.5 307.5Z" fill="#4146ac"/>
<path d="M549.5 307.5L565.5 312L565.5 296L549.5 291.5Z" fill="#3f3b97"/>
<path d="M549.5 291.5L565.5 296L565.5 280L549.5 275Z" fill="#4143a7"/>
<path d="M549.5 275L565.5 280L565.5 263.5L549.5 259Z" fill="#4146ac"/>
<path d="M549.5 259L565.5 263.5L565.5 247.5L549.5 243Z" fill="#4040a2"/>
<path d="M549.5 243L565.5 247.5L565.5 231L549.5 226.5Z" fill="#455ed3"/>
<path d="M549.5 226.5L565.5 231L565.5 215L549.5 210.5Z" fill="#4666dd"/>
<path d="M549.5 210.5L565.5 215L565.5 199L549.5 194Z" fill="#424bb5"/>
<path d="M549.5 194L565.5 199L565.5 182.5L549.5 178Z" fill="#4143a7"/>
<path d="M549.5 178L565.5 182.5L565.5 166.5L549.5 162Z" fill="#424bb5"/>
<path d="M549.5 162L565.5 166.5L565.5 150.5L549.5 145.5Z" fill="#4451bf"/>
<path d="M549.5 145.5L565.5 150.5L565.5 134L549.5 129.5Z" fill="#4249b1"/>
<path d="M565.5 393L582 398L582 381.5L565.5 377Z" fill="#4451bf"/>
<path d="M565.5 377L582 381.5L582 365.5L565.5 361Z" fill="#424bb5"/>
<path d="M565.5 361L582 365.5L582 349L565.5 344.5Z" fill="#4040a2"/>
<path d="M565.5 344.5L582 349L582 333L565.5 328.5Z" fill="#4146ac"/>
<path d="M565.5 328.5L582 333L582 317L565.5 312Z" fill="#434eba"/>
<path d="M565.5 312L582 317L582 300.5L565.5 296Z" fill="#4143a7"/>
<path d="M565.5 296L582 300.5L582 284.5L565.5 280Z" fill="#4146ac"/>
<path d="M565.5 280L582 284.5L582 268L565.5 263.5Z" fill="#434eba"/>
<path d="M565.5 263.5L582 268L582 252L565.5 247.5Z" fill="#4040a2"/>
<path d="M565.5 247.5L582 252L582 236L565.5 231Z" fill="#4146ac"/>
<path d="M565.5 231L582 236L582 219.5L565.5 215Z" fill="#455ed3"/>
<path d="M565.5 215L582 219.5L582 203.5L565.5 199Z" fill="#4661d6"/>
<path d="M565.5 199L582 203.5L582 187.5L565.5 182.5Z" fill="#4664da"/>
<path d="M565.5 182.5L582 187.5L582 171L565.5 166.5Z" fill="#476ee6"/>
<path d="M565.5 166.5L582 171L582 155L565.5 150.5Z" fill="#477bf2"/>
<path d="M565.5 150.5L582 155L582 139L565.5 134Z" fill="#4685fa"/>
<path d="M582 398L598 402.5L598 386L582 381.5Z" fill="#4666dd"/>
<path d="M582 381.5L598 386L598 370L582 365.5Z" fill="#4666dd"/>
<path d="M582 365.5L598 370L598 354L582 349Z" fill="#4661d6"/>
<path d="M582 349L598 354L598 337.5L582 333Z" fill="#4661d6"/>
<path d="M582 333L598 337.5L598 321.5L582 317Z" fill="#4771e9"/>
<path d="M582 317L598 321.5L598 305L582 300.5Z" fill="#4771e9"/>
<path d="M582 300.5L598 305L598 289L582 284.5Z" fill="#476ee6"/>
<path d="M582 284.5L598 289L598 273L582 268Z" fill="#4773eb"/>
<path d="M582 268L598 273L598 256.5L582 252Z" fill="#476ee6"/>
<path d="M582 252L598 256.5L598 240.5L582 236Z" fill="#4666dd"/>
<path d="M582 236L598 240.5L598 224.5L582 219.5Z" fill="#4776ee"/>
<path d="M582 219.5L598 224.5L598 208L582 203.5Z" fill="#458afc"/>
<path d="M582 203.5L598 208L598 192L582 187.5Z" fill="#4196ff"/>
<path d="M582 187.5L598 192L598 176L582 171Z" fill="#4099ff"/>
<path d="M582 171L598 176L598 159.5L582 155Z" fill="#3e9bfe"/>
<path d="M582 155L598 159.5L598 143.5L582 139Z" fill="#3d9efe"/>
<path d="M598 402.5L614 407L614 391L598 386Z" fill="#477bf2"/>
<path d="M598 386L614 391L614 374.5L598 370Z" fill="#4685fa"/>
<path d="M598 370L614 374.5L614 358.5L598 354Z" fill="#4687fb"/>
<path d="M598 354L614 358.5L614 342L598 337.5Z" fill="#4685fa"/>
<path d="M598 337.5L614 342L614 326L598 321.5Z" fill="#458cfd"/>
<path d="M598 321.5L614 326L614 310L598 305Z" fill="#4294ff"/>
<path d="M598 305L614 310L614 293.5L598 289Z" fill="#4294ff"/>
<path d="M598 289L614 293.5L614 277.5L598 273Z" fill="#4294ff"/>
<path d="M598 273L614 277.5L614 261.5L598 256.5Z" fill="#448ffe"/>
<path d="M598 256.5L614 261.5L614 245L598 240.5Z" fill="#458afc"/>
<path d="M598 240.5L614 245L614 229L598 224.5Z" fill="#4391fe"/>
<path d="M598 224.5L614 229L614 213L598 208Z" fill="#3aa3fc"/>
<path d="M598 208L614 213L614 196.5L598 192Z" fill="#2cb7f0"/>
<path d="M598 192L614 196.5L614 180.5L598 176Z" fill="#2cb7f0"/>
<path d="M598 176L614 180.5L614 164L598 159.5Z" fill="#2fb2f4"/>
<path d="M598 159.5L614 164L614 148L598 143.5Z" fill="#33adf7"/>
<path d="M614 407L630 411.5L630 395.5L614 391Z" fill="#4680f6"/>
<path d="M614 391L630 395.5L630 379L614 374.5Z" fill="#458cfd"/>
<path d="M614 374.5L630 379L630 363L614 358.5Z" fill="#4196ff"/>
<path d="M614 358.5L630 363L630 347L614 342Z" fill="#3e9bfe"/>
<path d="M614 342L630 347L630 330.5L614 326Z" fill="#38a5fb"/>
<path d="M614 326L630 330.5L630 314.5L614 310Z" fill="#2fb2f4"/>
<path d="M614 310L630 314.5L630 298.5L614 293.5Z" fill="#2fb2f4"/>
<path d="M614 293.5L630 298.5L630 282L614 277.5Z" fill="#31aff5"/>
<path d="M614 277.5L630 282L630 266L614 261.5Z" fill="#37a8fa"/>
<path d="M614 261.5L630 266L630 250L614 245Z" fill="#38a5fb"/>
<path d="M614 245L630 250L630 233.5L614 229Z" fill="#38a5fb"/>
<path d="M614 229L630 233.5L630 217.5L614 213Z" fill="#31aff5"/>
<path d="M614 213L630 217.5L630 201L614 196.5Z" fill="#2ab9ee"/>
<path d="M614 196.5L630 201L630 185L614 180.5Z" fill="#27bee9"/>
<path d="M614 180.5L630 185L630 169L614 164Z" fill="#2ab9ee"/>
<path d="M614 164L630 169L630 152.5L614 148Z" fill="#2fb2f4"/>
<path d="M630 411.5L646 416L646 400L630 395.5Z" fill="#477bf2"/>
<path d="M630 395.5L646 400L646 384L630 379Z" fill="#4685fa"/>
<path d="M630 379L646 384L646 367.5L630 363Z" fill="#458cfd"/>
<path d="M630 363L646 367.5L646 351.5L630 347Z" fill="#4196ff"/>
<path d="M630 347L646 351.5L646 335.5L630 330.5Z" fill="#35abf8"/>
<path d="M630 330.5L646 335.5L646 319L630 314.5Z" fill="#25c0e7"/>
<path d="M630 314.5L646 319L646 303L630 298.5Z" fill="#22c5e2"/>
<path d="M630 298.5L646 303L646 287L630 282Z" fill="#25c0e7"/>
<path d="M630 282L646 287L646 270.5L630 266Z" fill="#28bceb"/>
<path d="M630 266L646 270.5L646 254.5L630 250Z" fill="#2eb4f2"/>
<path d="M630 250L646 254.5L646 238L630 233.5Z" fill="#2fb2f4"/>
<path d="M630 233.5L646 238L646 222L630 217.5Z" fill="#2fb2f4"/>
<path d="M630 217.5L646 222L646 206L630 201Z" fill="#2eb4f2"/>
<path d="M630 201L646 206L646 189.5L630 185Z" fill="#2cb7f0"/>
<path d="M630 185L646 189.5L646 173.5L630 169Z" fill="#2eb4f2"/>
<path d="M630 169L646 173.5L646 157L630 152.5Z" fill="#31aff5"/>
<path d="M646 416L662.5 421L662.5 404.5L646 400Z" fill="#4773eb"/>
<path d="M646 400L662.5 404.5L662.5 388.5L646 384Z" fill="#477bf2"/>
<path d="M646 384L662.5 388.5L662.5 372.5L646 367.5Z" fill="#4682f8"/>
<path d="M646 367.5L662.5 372.5L662.5 356L646 351.5Z" fill="#458cfd"/>
<path d="M646 351.5L662.5 356L662.5 340L646 335.5Z" fill="#3d9efe"/>
<path d="M646 335.5L662.5 340L662.5 324L646 319Z" fill="#2ab9ee"/>
<path d="M646 319L662.5 324L662.5 307.5L646 303Z" fill="#20c7df"/>
<path d="M646 303L662.5 307.5L662.5 291.5L646 287Z" fill="#1fc9dd"/>
<path d="M646 287L662.5 291.5L662.5 275L646 270.5Z" fill="#22c5e2"/>
<path d="M646 270.5L662.5 275L662.5 259L646 254.5Z" fill="#27bee9"/>
<path d="M646 254.5L662.5 259L662.5 243L646 238Z" fill="#2ab9ee"/>
<path d="M646 238L662.5 243L662.5 226.5L646 222Z" fill="#2eb4f2"/>
<path d="M646 222L662.5 226.5L662.5 210.5L646 206Z" fill="#2eb4f2"/>
<path d="M646 206L662.5 210.5L662.5 194L646 189.5Z" fill="#2fb2f4"/>
<path d="M646 189.5L662.5 194L662.5 178L646 173.5Z" fill="#31aff5"/>
<path d="M646 173.5L662.5 178L662.5 162L646 157Z" fill="#35abf8"/>
<path d="M662.5 421L678.5 425.5L678.5 409.5L662.5 404.5Z" fill="#4771e9"/>
<path d="M662.5 404.5L678.5 409.5L678.5 393L662.5 388.5Z" fill="#4778f0"/>
<path d="M662.5 388.5L678.5 393L678.5 377L662.5 372.5Z" fill="#467df4"/>
<path d="M662.5 372.5L678.5 377L678.5 361L662.5 356Z" fill="#4687fb"/>
<path d="M662.5 356L678.5 361L678.5 344.5L662.5 340Z" fill="#4099ff"/>
<path d="M662.5 340L678.5 344.5L678.5 328.5L662.5 324Z" fill="#33adf7"/>
<path d="M662.5 324L678.5 328.5L678.5 312L662.5 307.5Z" fill="#25c0e7"/>
<path d="M662.5 307.5L678.5 312L678.5 296L662.5 291.5Z" fill="#20c7df"/>
<path d="M662.5 291.5L678.5 296L678.5 280L662.5 275Z" fill="#20c7df"/>
<path d="M662.5 275L678.5 280L678.5 263.5L662.5 259Z" fill="#23c3e4"/>
<path d="M662.5 259L678.5 263.5L678.5 247.5L662.5 243Z" fill="#27bee9"/>
<path d="M662.5 243L678.5 247.5L678.5 231L662.5 226.5Z" fill="#2ab9ee"/>
<path d="M662.5 226.5L678.5 231L678.5 215L662.5 210.5Z" fill="#2fb2f4"/>
<path d="M662.5 210.5L678.5 215L678.5 199L662.5 194Z" fill="#31aff5"/>
<path d="M662.5 194L678.5 199L678.5 182.5L662.5 178Z" fill="#33adf7"/>
<path d="M662.5 178L678.5 182.5L678.5 166.5L662.5 162Z" fill="#35abf8"/>
<path d="M420.5 351.5L436.5 356L427 364L411 359.5Z" fill="#341b51"/>
<path d="M411 359.5L427 364L418 372L402 367.5Z" fill="#30123b"/>
<path d="M402 367.5L418 372L408.5 380.5L392.5 375.5Z" fill="#30123b"/>
<path d="M392.5 375.5L408.5 380.5L399 388.5L383 384Z" fill="#30123b"/>
<path d="M383 384L399 388.5L390 396.5L373.5 392Z" fill="#30123b"/>
<path d="M373.5 392L390 396.5L380.5 404.5L364 400Z" fill="#30123b"/>
<path d="M364 400L380.5 404.5L371 412.5L355 408Z" fill="#30123b"/>
<path d="M355 408L371 412.5L361.5 420.5L345.5 416Z" fill="#30123b"/>
<path d="M345.5 416L361.5 420.5L352 428.5L336 424Z" fill="#30123b"/>
<path d="M336 424L352 428.5L343 437L327 432Z" fill="#30123b"/>
<path d="M327 432L343 437L333.5 445L317.5 440Z" fill="#30123b"/>
<path d="M317.5 440L333.5 445L324 453L308 448Z" fill="#30123b"/>
<path d="M308 448L324 453L315 461L298.5 456.5Z" fill="#30123b"/>
<path d="M298.5 456.5L315 461L305.5 469L289 464.5Z" fill="#30123b"/>
<path d="M289 464.5L305.5 469L296 477L280 472.5Z" fill="#30123b"/>
<path d="M280 472.5L296 477L286.5 485L270.5 480.5Z" fill="#30123b"/>
<path d="M436.5 356L453 361L443.5 369L427 364Z" fill="#3a2d79"/>
<path d="M427 364L443.5 369L434 377L418 372Z" fill="#36215f"/>
<path d="M418 372L434 377L424.5 385L408.5 380.5Z" fill="#321543"/>
<path d="M408.5 380.5L424.5 385L415 393L399 388.5Z" fill="#30123b"/>
<path d="M399 388.5L415 393L406 401L390 396.5Z" fill="#30123b"/>
<path d="M390 396.5L406 401L396.5 409L380.5 404.5Z" fill="#30123b"/>
<path d="M380.5 404.5L396.5 409L387 417L371 412.5Z" fill="#30123b"/>
<path d="M371 412.5L387 417L378 425L361.5 420.5Z" fill="#30123b"/>
<path d="M361.5 420.5L378 425L368.5 433.5L352 428.5Z" fill="#30123b"/>
<path d="M352 428.5L368.5 433.5L359 441.5L343 437Z" fill="#30123b"/>
<path d="M343 437L359 441.5L349.5 449.5L333.5 445Z" fill="#30123b"/>
<path d="M333.5 445L349.5 449.5L340 457.5L324 453Z" fill="#30123b"/>
<path d="M324 453L340 457.5L331 465.5L315 461Z" fill="#30123b"/>
<path d="M315 461L331 465.5L321.5 473.5L305.5 469Z" fill="#30123b"/>
<path d="M305.5 469L321.5 473.5L312 481.5L296 477Z" fill="#30123b"/>
<path d="M296 477L312 481.5L303 490L286.5 485Z" fill="#30123b"/>
<path d="M453 361L469 365.5L459.5 373.5L443.5 369Z" fill="#4143a7"/>
<path d="M443.5 369L459.5 373.5L450 381.5L434 377Z" fill="#3d358b"/>
<path d="M434 377L450 381.5L441 389.5L424.5 385Z" fill="#38276d"/>
<path d="M424.5 385L441 389.5L431.5 397.5L415 393Z" fill="#341b51"/>
<path d="M415 393L431.5 397.5L422 405.5L406 401Z" fill="#30123b"/>
<path d="M406 401L422 405.5L412.5 414L396.5 409Z" fill="#30123b"/>
<path d="M396.5 409L412.5 414L403 422L387 417Z" fill="#30123b"/>
<path d="M387 417L403 422L394 430L378 425Z" fill="#30123b"/>
<path d="M378 425L394 430L384.5 438L368.5 433.5Z" fill="#30123b"/>
<path d="M368.5 433.5L384.5 438L375 446L359 441.5Z" fill="#30123b"/>
<path d="M359 441.5L375 446L366 454L349.5 449.5Z" fill="#30123b"/>
<path d="M349.5 449.5L366 454L356.5 462L340 457.5Z" fill="#30123b"/>
<path d="M340 457.5L356.5 462L347 470L331 465.5Z" fill="#30123b"/>
<path d="M331 465.5L347 470L337.5 478L321.5 473.5Z" fill="#30123b"/>
<path d="M321.5 473.5L337.5 478L328 486.5L312 481.5Z" fill="#30123b"/>
<path d="M312 481.5L328 486.5L319 494.5L303 490Z" fill="#30123b"/>
<path d="M469 365.5L485 370L475.5 378L459.5 373.5Z" fill="#455ccf"/>
<path d="M459.5 373.5L475.5 378L466 386L450 381.5Z" fill="#434eba"/>
<path d="M450 381.5L466 386L457 394L441 389.5Z" fill="#4040a2"/>
<path d="M441 389.5L457 394L447.5 402L431.5 397.5Z" fill="#3c3286"/>
<path d="M431.5 397.5L447.5 402L438 410.5L422 405.5Z" fill="#38276d"/>
<path d="M422 405.5L438 410.5L429 418.5L412.5 414Z" fill="#341b51"/>
<path d="M412.5 414L429 418.5L419.5 426.5L403 422Z" fill="#33184a"/>
<path d="M403 422L419.5 426.5L410 434.5L394 430Z" fill="#33184a"/>
<path d="M394 430L410 434.5L400.5 442.5L384.5 438Z" fill="#321543"/>
<path d="M384.5 438L400.5 442.5L391 450.5L375 446Z" fill="#321543"/>
<path d="M375 446L391 450.5L382 458.5L366 454Z" fill="#321543"/>
<path d="M366 454L382 458.5L372.5 467L356.5 462Z" fill="#30123b"/>
<path d="M356.5 462L372.5 467L363 475L347 470Z" fill="#30123b"/>
<path d="M347 470L363 475L354 483L337.5 478Z" fill="#30123b"/>
<path d="M337.5 478L354 483L344.5 491L328 486.5Z" fill="#30123b"/>
<path d="M328 486.5L344.5 491L335 499L319 494.5Z" fill="#30123b"/>
<path d="M485 370L501 374.5L492 382.5L475.5 378Z" fill="#476ee6"/>
<path d="M475.5 378L492 382.5L482.5 391L466 386Z" fill="#4664da"/>
<path d="M466 386L482.5 391L473 399L457 394Z" fill="#4559cb"/>
<path d="M457 394L473 399L463.5 407L447.5 402Z" fill="#424bb5"/>
<path d="M447.5 402L463.5 407L454 415L438 410.5Z" fill="#4040a2"/>
<path d="M438 410.5L454 415L445 423L429 418.5Z" fill="#3d358b"/>
<path d="M429 418.5L445 423L435.5 431L419.5 426.5Z" fill="#3a2d79"/>
<path d="M419.5 426.5L435.5 431L426 439L410 434.5Z" fill="#38276d"/>
<path d="M410 434.5L426 439L417 447L400.5 442.5Z" fill="#372466"/>
<path d="M400.5 442.5L417 447L407.5 455L391 450.5Z" fill="#351e58"/>
<path d="M391 450.5L407.5 455L398 463.5L382 458.5Z" fill="#341b51"/>
<path d="M382 458.5L398 463.5L388.5 471.5L372.5 467Z" fill="#33184a"/>
<path d="M372.5 467L388.5 471.5L379 479.5L363 475Z" fill="#30123b"/>
<path d="M363 475L379 479.5L370 487.5L354 483Z" fill="#30123b"/>
<path d="M354 483L370 487.5L360.5 495.5L344.5 491Z" fill="#30123b"/>
<path d="M344.5 491L360.5 495.5L351 503.5L335 499Z" fill="#30123b"/>
<path d="M501 374.5L517 379L508 387.5L492 382.5Z" fill="#477bf2"/>
<path d="M492 382.5L508 387.5L498.5 395.5L482.5 391Z" fill="#4773eb"/>
<path d="M482.5 391L498.5 395.5L489 403.5L473 399Z" fill="#4669e0"/>
<path d="M473 399L489 403.5L480 411.5L463.5 407Z" fill="#4661d6"/>
<path d="M463.5 407L480 411.5L470.5 419.5L454 415Z" fill="#4456c7"/>
<path d="M454 415L470.5 419.5L461 427.5L445 423Z" fill="#434eba"/>
<path d="M445 423L461 427.5L451.5 435.5L435.5 431Z" fill="#4143a7"/>
<path d="M435.5 431L451.5 435.5L442 444L426 439Z" fill="#3f3e9c"/>
<path d="M426 439L442 444L433 452L417 447Z" fill="#3d358b"/>
<path d="M417 447L433 452L423.5 460L407.5 455Z" fill="#3b2f80"/>
<path d="M407.5 455L423.5 460L414 468L398 463.5Z" fill="#38276d"/>
<path d="M398 463.5L414 468L405 476L388.5 471.5Z" fill="#351e58"/>
<path d="M388.5 471.5L405 476L395.5 484L379 479.5Z" fill="#321543"/>
<path d="M379 479.5L395.5 484L386 492L370 487.5Z" fill="#30123b"/>
<path d="M370 487.5L386 492L376.5 500L360.5 495.5Z" fill="#30123b"/>
<path d="M360.5 495.5L376.5 500L367 508L351 503.5Z" fill="#30123b"/>
<path d="M517 379L533.5 384L524 392L508 387.5Z" fill="#477bf2"/>
<path d="M508 387.5L524 392L514.5 400L498.5 395.5Z" fill="#4778f0"/>
<path d="M498.5 395.5L514.5 400L505 408L489 403.5Z" fill="#4773eb"/>
<path d="M489 403.5L505 408L496 416L480 411.5Z" fill="#476ee6"/>
<path d="M480 411.5L496 416L486.5 424L470.5 419.5Z" fill="#4666dd"/>
<path d="M470.5 419.5L486.5 424L477 432L461 427.5Z" fill="#4661d6"/>
<path d="M461 427.5L477 432L468 440.5L451.5 435.5Z" fill="#4559cb"/>
<path d="M451.5 435.5L468 440.5L458.5 448.5L442 444Z" fill="#4451bf"/>
<path d="M442 444L458.5 448.5L449 456.5L433 452Z" fill="#424bb5"/>
<path d="M433 452L449 456.5L439.5 464.5L423.5 460Z" fill="#4143a7"/>
<path d="M423.5 460L439.5 464.5L430 472.5L414 468Z" fill="#3f3b97"/>
<path d="M414 468L430 472.5L421 480.5L405 476Z" fill="#3c3286"/>
<path d="M405 476L421 480.5L411.5 488.5L395.5 484Z" fill="#372466"/>
<path d="M395.5 484L411.5 488.5L402 497L386 492Z" fill="#321543"/>
<path d="M386 492L402 497L393 505L376.5 500Z" fill="#30123b"/>
<path d="M376.5 500L393 505L383.5 513L367 508Z" fill="#30123b"/>
<path d="M533.5 384L549.5 388.5L540 396.5L524 392Z" fill="#476ee6"/>
<path d="M524 392L540 396.5L531 404.5L514.5 400Z" fill="#4776ee"/>
<path d="M514.5 400L531 404.5L521.5 412.5L505 408Z" fill="#4776ee"/>
<path d="M505 408L521.5 412.5L512 421L496 416Z" fill="#4773eb"/>
<path d="M496 416L512 421L502.5 429L486.5 424Z" fill="#4771e9"/>
<path d="M486.5 424L502.5 429L493 437L477 432Z" fill="#466be3"/>
<path d="M477 432L493 437L484 445L468 440.5Z" fill="#4666dd"/>
<path d="M468 440.5L484 445L474.5 453L458.5 448.5Z" fill="#4661d6"/>
<path d="M458.5 448.5L474.5 453L465 461L449 456.5Z" fill="#455ccf"/>
<path d="M449 456.5L465 461L456 469L439.5 464.5Z" fill="#4456c7"/>
<path d="M439.5 464.5L456 469L446.5 477L430 472.5Z" fill="#4451bf"/>
<path d="M430 472.5L446.5 477L437 485L421 480.5Z" fill="#424bb5"/>
<path d="M421 480.5L437 485L427.5 493.5L411.5 488.5Z" fill="#4040a2"/>
<path d="M411.5 488.5L427.5 493.5L418 501.5L402 497Z" fill="#3b2f80"/>
<path d="M402 497L418 501.5L409 509.5L393 505Z" fill="#351e58"/>
<path d="M393 505L409 509.5L399.5 517.5L383.5 513Z" fill="#321543"/>
<path d="M549.5 388.5L565.5 393L556 401L540 396.5Z" fill="#455ccf"/>
<path d="M540 396.5L556 401L547 409L531 404.5Z" fill="#4669e0"/>
<path d="M531 404.5L547 409L537.5 417.5L521.5 412.5Z" fill="#4773eb"/>
<path d="M521.5 412.5L537.5 417.5L528 425.5L512 421Z" fill="#4773eb"/>
<path d="M512 421L528 425.5L519 433.5L502.5 429Z" fill="#4771e9"/>
<path d="M502.5 429L519 433.5L509.5 441.5L493 437Z" fill="#476ee6"/>
<path d="M493 437L509.5 441.5L500 449.5L484 445Z" fill="#4669e0"/>
<path d="M484 445L500 449.5L490.5 457.5L474.5 453Z" fill="#4666dd"/>
<path d="M474.5 453L490.5 457.5L481 465.5L465 461Z" fill="#4664da"/>
<path d="M465 461L481 465.5L472 474L456 469Z" fill="#4664da"/>
<path d="M456 469L472 474L462.5 482L446.5 477Z" fill="#4661d6"/>
<path d="M446.5 477L462.5 482L453 490L437 485Z" fill="#4661d6"/>
<path d="M437 485L453 490L444 498L427.5 493.5Z" fill="#455ccf"/>
<path d="M427.5 493.5L444 498L434.5 506L418 501.5Z" fill="#4451bf"/>
<path d="M418 501.5L434.5 506L425 514L409 509.5Z" fill="#4040a2"/>
<path d="M409 509.5L425 514L415.5 522L399.5 517.5Z" fill="#3b2f80"/>
<path d="M565.5 393L582 398L572.5 406L556 401Z" fill="#434eba"/>
<path d="M556 401L572.5 406L563 414L547 409Z" fill="#4559cb"/>
<path d="M547 409L563 414L553.5 422L537.5 417.5Z" fill="#4669e0"/>
<path d="M537.5 417.5L553.5 422L544 430L528 425.5Z" fill="#4771e9"/>
<path d="M528 425.5L544 430L535 438L519 433.5Z" fill="#476ee6"/>
<path d="M519 433.5L535 438L525.5 446L509.5 441.5Z" fill="#466be3"/>
<path d="M509.5 441.5L525.5 446L516 454L500 449.5Z" fill="#4669e0"/>
<path d="M500 449.5L516 454L507 462L490.5 457.5Z" fill="#4666dd"/>
<path d="M490.5 457.5L507 462L497.5 470.5L481 465.5Z" fill="#4664da"/>
<path d="M481 465.5L497.5 470.5L488 478.5L472 474Z" fill="#4664da"/>
<path d="M472 474L488 478.5L478.5 486.5L462.5 482Z" fill="#4666dd"/>
<path d="M462.5 482L478.5 486.5L469 494.5L453 490Z" fill="#4669e0"/>
<path d="M453 490L469 494.5L460 502.5L444 498Z" fill="#466be3"/>
<path d="M444 498L460 502.5L450.5 510.5L434.5 506Z" fill="#4669e0"/>
<path d="M434.5 506L450.5 510.5L441 518.5L425 514Z" fill="#4661d6"/>
<path d="M425 514L441 518.5L432 527L415.5 522Z" fill="#4451bf"/>
<path d="M582 398L598 402.5L588.5 410.5L572.5 406Z" fill="#455ed3"/>
<path d="M572.5 406L588.5 410.5L579 418.5L563 414Z" fill="#4559cb"/>
<path d="M563 414L579 418.5L570 426.5L553.5 422Z" fill="#455ccf"/>
<path d="M553.5 422L570 426.5L560.5 434.5L544 430Z" fill="#4664da"/>
<path d="M544 430L560.5 434.5L551 442.5L535 438Z" fill="#4666dd"/>
<path d="M535 438L551 442.5L541.5 451L525.5 446Z" fill="#4664da"/>
<path d="M525.5 446L541.5 451L532 459L516 454Z" fill="#4661d6"/>
<path d="M516 454L532 459L523 467L507 462Z" fill="#455ed3"/>
<path d="M507 462L523 467L513.5 475L497.5 470.5Z" fill="#455ed3"/>
<path d="M497.5 470.5L513.5 475L504 483L488 478.5Z" fill="#455ed3"/>
<path d="M488 478.5L504 483L495 491L478.5 486.5Z" fill="#4661d6"/>
<path d="M478.5 486.5L495 491L485.5 499L469 494.5Z" fill="#4666dd"/>
<path d="M469 494.5L485.5 499L476 507L460 502.5Z" fill="#4669e0"/>
<path d="M460 502.5L476 507L466.5 515L450.5 510.5Z" fill="#476ee6"/>
<path d="M450.5 510.5L466.5 515L457 523.5L441 518.5Z" fill="#466be3"/>
<path d="M441 518.5L457 523.5L448 531.5L432 527Z" fill="#4664da"/>
<path d="M598 402.5L614 407L604.5 415L588.5 410.5Z" fill="#4771e9"/>
<path d="M588.5 410.5L604.5 415L595 423L579 418.5Z" fill="#4669e0"/>
<path d="M579 418.5L595 423L586 431L570 426.5Z" fill="#4661d6"/>
<path d="M570 426.5L586 431L576.5 439L560.5 434.5Z" fill="#455ccf"/>
<path d="M560.5 434.5L576.5 439L567 447.5L551 442.5Z" fill="#455ccf"/>
<path d="M551 442.5L567 447.5L558 455.5L541.5 451Z" fill="#4559cb"/>
<path d="M541.5 451L558 455.5L548.5 463.5L532 459Z" fill="#4559cb"/>
<path d="M532 459L548.5 463.5L539 471.5L523 467Z" fill="#4456c7"/>
<path d="M523 467L539 471.5L529.5 479.5L513.5 475Z" fill="#4454c3"/>
<path d="M513.5 475L529.5 479.5L520 487.5L504 483Z" fill="#4454c3"/>
<path d="M504 483L520 487.5L511 495.5L495 491Z" fill="#4456c7"/>
<path d="M495 491L511 495.5L501.5 504L485.5 499Z" fill="#455ccf"/>
<path d="M485.5 499L501.5 504L492 512L476 507Z" fill="#4661d6"/>
<path d="M476 507L492 512L483 520L466.5 515Z" fill="#4666dd"/>
<path d="M466.5 515L483 520L473.5 528L457 523.5Z" fill="#4669e0"/>
<path d="M457 523.5L473.5 528L464 536L448 531.5Z" fill="#4666dd"/>
<path d="M614 407L630 411.5L621 419.5L604.5 415Z" fill="#4776ee"/>
<path d="M604.5 415L621 419.5L611.5 428L595 423Z" fill="#4771e9"/>
<path d="M595 423L611.5 428L602 436L586 431Z" fill="#4666dd"/>
<path d="M586 431L602 436L592.5 444L576.5 439Z" fill="#455ed3"/>
<path d="M576.5 439L592.5 444L583 452L567 447.5Z" fill="#4456c7"/>
<path d="M567 447.5L583 452L574 460L558 455.5Z" fill="#4454c3"/>
<path d="M558 455.5L574 460L564.5 468L548.5 463.5Z" fill="#4451bf"/>
<path d="M548.5 463.5L564.5 468L555 476L539 471.5Z" fill="#434eba"/>
<path d="M539 471.5L555 476L546 484L529.5 479.5Z" fill="#424bb5"/>
<path d="M529.5 479.5L546 484L536.5 492L520 487.5Z" fill="#424bb5"/>
<path d="M520 487.5L536.5 492L527 500.5L511 495.5Z" fill="#424bb5"/>
<path d="M511 495.5L527 500.5L517.5 508.5L501.5 504Z" fill="#4451bf"/>
<path d="M501.5 504L517.5 508.5L508 516.5L492 512Z" fill="#4454c3"/>
<path d="M492 512L508 516.5L499 524.5L483 520Z" fill="#4559cb"/>
<path d="M483 520L499 524.5L489.5 532.5L473.5 528Z" fill="#455ed3"/>
<path d="M473.5 528L489.5 532.5L480 540.5L464 536Z" fill="#4661d6"/>
<path d="M630 411.5L646 416L637 424.5L621 419.5Z" fill="#4773eb"/>
<path d="M621 419.5L637 424.5L627.5 432.5L611.5 428Z" fill="#476ee6"/>
<path d="M611.5 428L627.5 432.5L618 440.5L602 436Z" fill="#4666dd"/>
<path d="M602 436L618 440.5L609 448.5L592.5 444Z" fill="#455ed3"/>
<path d="M592.5 444L609 448.5L599.5 456.5L583 452Z" fill="#4456c7"/>
<path d="M583 452L599.5 456.5L590 464.5L574 460Z" fill="#4451bf"/>
<path d="M574 460L590 464.5L580.5 472.5L564.5 468Z" fill="#424bb5"/>
<path d="M564.5 468L580.5 472.5L571 481L555 476Z" fill="#424bb5"/>
<path d="M555 476L571 481L562 489L546 484Z" fill="#4249b1"/>
<path d="M546 484L562 489L552.5 497L536.5 492Z" fill="#4146ac"/>
<path d="M536.5 492L552.5 497L543 505L527 500.5Z" fill="#4146ac"/>
<path d="M527 500.5L543 505L534 513L517.5 508.5Z" fill="#4146ac"/>
<path d="M517.5 508.5L534 513L524.5 521L508 516.5Z" fill="#4249b1"/>
<path d="M508 516.5L524.5 521L515 529L499 524.5Z" fill="#434eba"/>
<path d="M499 524.5L515 529L505.5 537L489.5 532.5Z" fill="#4451bf"/>
<path d="M489.5 532.5L505.5 537L496 545L480 540.5Z" fill="#4456c7"/>
<path d="M646 416L662.5 421L653 429L637 424.5Z" fill="#466be3"/>
<path d="M637 424.5L653 429L643.5 437L627.5 432.5Z" fill="#4669e0"/>
<path d="M627.5 432.5L643.5 437L634 445L618 440.5Z" fill="#4661d6"/>
<path d="M618 440.5L634 445L625 453L609 448.5Z" fill="#455ccf"/>
<path d="M609 448.5L625 453L615.5 461L599.5 456.5Z" fill="#4454c3"/>
<path d="M599.5 456.5L615.5 461L606 469L590 464.5Z" fill="#434eba"/>
<path d="M590 464.5L606 469L597 477.5L580.5 472.5Z" fill="#424bb5"/>
<path d="M580.5 472.5L597 477.5L587.5 485.5L571 481Z" fill="#424bb5"/>
<path d="M571 481L587.5 485.5L578 493.5L562 489Z" fill="#4249b1"/>
<path d="M562 489L578 493.5L568.5 501.5L552.5 497Z" fill="#4146ac"/>
<path d="M552.5 497L568.5 501.5L559 509.5L543 505Z" fill="#4143a7"/>
<path d="M543 505L559 509.5L550 517.5L534 513Z" fill="#4143a7"/>
<path d="M534 513L550 517.5L540.5 525.5L524.5 521Z" fill="#4143a7"/>
<path d="M524.5 521L540.5 525.5L531 534L515 529Z" fill="#4143a7"/>
<path d="M515 529L531 534L522 542L505.5 537Z" fill="#4146ac"/>
<path d="M505.5 537L522 542L512.5 550L496 545Z" fill="#4249b1"/>
<path d="M662.5 421L678.5 425.5L669 433.5L653 429Z" fill="#4669e0"/>
<path d="M653 429L669 433.5L660 441.5L643.5 437Z" fill="#4664da"/>
<path d="M643.5 437L660 441.5L650.5 449.5L634 445Z" fill="#455ed3"/>
<path d="M634 445L650.5 449.5L641 458L625 453Z" fill="#4559cb"/>
<path d="M625 453L641 458L631.5 466L615.5 461Z" fill="#4451bf"/>
<path d="M615.5 461L631.5 466L622 474L606 469Z" fill="#424bb5"/>
<path d="M606 469L622 474L613 482L597 477.5Z" fill="#4249b1"/>
<path d="M597 477.5L613 482L603.5 490L587.5 485.5Z" fill="#4249b1"/>
<path d="M587.5 485.5L603.5 490L594 498L578 493.5Z" fill="#424bb5"/>
<path d="M578 493.5L594 498L585 506L568.5 501.5Z" fill="#4249b1"/>
<path d="M568.5 501.5L585 506L575.5 514L559 509.5Z" fill="#4146ac"/>
<path d="M559 509.5L575.5 514L566 522L550 517.5Z" fill="#4143a7"/>
<path d="M550 517.5L566 522L556.5 530.5L540.5 525.5Z" fill="#4040a2"/>
<path d="M540.5 525.5L556.5 530.5L547 538.5L531 534Z" fill="#4040a2"/>
<path d="M531 534L547 538.5L538 546.5L522 542Z" fill="#4040a2"/>
<path d="M522 542L538 546.5L528.5 554.5L512.5 550Z" fill="#4040a2"/>
</g>
<path d="M420.5 351.5L420.5 333.5M420.5 351.5L411.5 359.5M420.5 351.5L410.5 349.5M420.5 333.5L420.5 314.5M420.5 333.5L410.5 349.5M420.5 333.5L410.5 332.5M420.5 314.5L420.5 296.5M420.5 314.5L410.5 332.5M420.5 314.5L411.5 315.5M420.5 296.5L420.5 277.5M420.5 296.5L411.5 315.5M420.5 296.5L411.5 295.5M420.5 277.5L420.5 259.5M420.5 277.5L411.5 295.5M420.5 277.5L411.5 278.5M420.5 259.5L420.5 240.5M420.5 259.5L411.5 278.5M420.5 259.5L411.5 258.5M420.5 240.5L420.5 222.5M420.5 240.5L411.5 258.5M420.5 240.5L411.5 237.5M420.5 222.5L420.5 203.5M420.5 222.5L411.5 237.5M420.5 222.5L412.5 218.5M420.5 203.5L420.5 185.5M420.5 203.5L412.5 218.5M420.5 203.5L412.5 201.5M420.5 185.5L420.5 166.5M420.5 185.5L412.5 201.5M420.5 185.5L412.5 181.5M420.5 166.5L420.5 148.5M420.5 166.5L412.5 181.5M420.5 166.5L412.5 164.5M420.5 148.5L420.5 129.5M420.5 148.5L412.5 164.5M420.5 148.5L411.5 146.5M420.5 129.5L420.5 111.5M420.5 129.5L411.5 146.5M420.5 129.5L410.5 129.5M420.5 111.5L420.5 92.5M420.5 111.5L410.5 129.5M420.5 111.5L410.5 110.5M420.5 92.5L410.5 110.5M420.5 92.5L411.5 100.5M411.5 359.5L410.5 349.5M411.5 359.5L401.5 367.5M410.5 349.5L410.5 332.5M410.5 349.5L401.5 367.5M410.5 349.5L401.5 350.5M410.5 332.5L411.5 315.5M410.5 332.5L401.5 350.5M410.5 332.5L401.5 333.5M411.5 315.5L411.5 295.5M411.5 315.5L401.5 333.5M411.5 315.5L401.5 315.5M411.5 295.5L411.5 278.5M411.5 295.5L401.5 315.5M411.5 295.5L401.5 296.5M411.5 278.5L411.5 258.5M411.5 278.5L401.5 296.5M411.5 278.5L402.5 276.5M411.5 258.5L411.5 237.5M411.5 258.5L402.5 276.5M411.5 258.5L403.5 254.5M411.5 237.5L412.5 218.5M411.5 237.5L403.5 254.5M411.5 237.5L403.5 233.5M412.5 218.5L412.5 201.5M412.5 218.5L403.5 233.5M412.5 218.5L403.5 213.5M412.5 201.5L412.5 181.5M412.5 201.5L403.5 213.5M412.5 201.5L403.5 196.5M412.5 181.5L412.5 164.5M412.5 181.5L403.5 196.5M412.5 181.5L403.5 179.5M412.5 164.5L411.5 146.5M412.5 164.5L403.5 179.5M412.5 164.5L402.5 163.5M411.5 146.5L410.5 129.5M411.5 146.5L402.5 163.5M411.5 146.5L401.5 146.5M410.5 129.5L410.5 110.5M410.5 129.5L401.5 146.5M410.5 129.5L401.5 126.5M410.5 110.5L411.5 100.5M410.5 110.5L401.5 126.5M410.5 110.5L401.5 108.5M411.5 100.5L401.5 108.5M401.5 367.5L401.5 350.5M401.5 367.5L392.5 375.5M401.5 367.5L392.5 366.5M401.5 350.5L401.5 333.5M401.5 350.5L392.5 366.5M401.5 350.5L392.5 349.5M401.5 333.5L401.5 315.5M401.5 333.5L392.5 349.5M401.5 333.5L391.5 333.5M401.5 315.5L401.5 296.5M401.5 315.5L391.5 333.5M401.5 315.5L391.5 313.5M401.5 296.5L402.5 276.5M401.5 296.5L391.5 313.5M401.5 296.5L392.5 293.5M402.5 276.5L403.5 254.5M402.5 276.5L392.5 293.5M402.5 276.5L392.5 273.5M403.5 254.5L403.5 233.5M403.5 254.5L392.5 273.5M403.5 254.5L394.5 250.5M403.5 233.5L403.5 213.5M403.5 233.5L394.5 250.5M403.5 233.5L394.5 229.5M403.5 213.5L403.5 196.5M403.5 213.5L394.5 229.5M403.5 213.5L394.5 210.5M403.5 196.5L403.5 179.5M403.5 196.5L394.5 210.5M403.5 196.5L394.5 194.5M403.5 179.5L402.5 163.5M403.5 179.5L394.5 194.5M403.5 179.5L392.5 179.5M402.5 163.5L401.5 146.5M402.5 163.5L392.5 179.5M402.5 163.5L392.5 162.5M401.5 146.5L401.5 126.5M401.5 146.5L392.5 162.5M401.5 146.5L391.5 146.5M401.5 126.5L401.5 108.5M401.5 126.5L391.5 146.5M401.5 126.5L392.5 127.5M401.5 108.5L392.5 127.5M401.5 108.5L392.5 116.5M392.5 375.5L392.5 366.5M392.5 375.5L383.5 383.5M392.5 366.5L392.5 349.5M392.5 366.5L383.5 383.5M392.5 366.5L383.5 366.5M392.5 349.5L391.5 333.5M392.5 349.5L383.5 366.5M392.5 349.5L382.5 348.5M391.5 333.5L391.5 313.5M391.5 333.5L382.5 348.5M391.5 333.5L382.5 331.5M391.5 313.5L392.5 293.5M391.5 313.5L382.5 331.5M391.5 313.5L382.5 310.5M392.5 293.5L392.5 273.5M392.5 293.5L382.5 310.5M392.5 293.5L382.5 290.5M392.5 273.5L394.5 250.5M392.5 273.5L382.5 290.5M392.5 273.5L383.5 268.5M394.5 250.5L394.5 229.5M394.5 250.5L383.5 268.5M394.5 250.5L383.5 246.5M394.5 229.5L394.5 210.5M394.5 229.5L383.5 246.5M394.5 229.5L384.5 227.5M394.5 210.5L394.5 194.5M394.5 210.5L384.5 227.5M394.5 210.5L384.5 209.5M394.5 194.5L392.5 179.5M394.5 194.5L384.5 209.5M394.5 194.5L384.5 191.5M392.5 179.5L392.5 162.5M392.5 179.5L384.5 191.5M392.5 179.5L383.5 177.5M392.5 162.5L391.5 146.5M392.5 162.5L383.5 177.5M392.5 162.5L382.5 162.5M391.5 146.5L392.5 127.5M391.5 146.5L382.5 162.5M391.5 146.5L382.5 143.5M392.5 127.5L392.5 116.5M392.5 127.5L382.5 143.5M392.5 127.5L383.5 124.5M392.5 116.5L383.5 124.5M383.5 383.5L383.5 366.5M383.5 383.5L373.5 391.5M383.5 383.5L374.5 381.5M383.5 366.5L382.5 348.5M383.5 366.5L374.5 381.5M383.5 366.5L373.5 365.5M382.5 348.5L382.5 331.5M382.5 348.5L373.5 365.5M382.5 348.5L372.5 347.5M382.5 331.5L382.5 310.5M382.5 331.5L372.5 347.5M382.5 331.5L371.5 327.5M382.5 310.5L382.5 290.5M382.5 310.5L371.5 327.5M382.5 310.5L371.5 308.5M382.5 290.5L383.5 268.5M382.5 290.5L371.5 308.5M382.5 290.5L372.5 285.5M383.5 268.5L383.5 246.5M383.5 268.5L372.5 285.5M383.5 268.5L373.5 263.5M383.5 246.5L384.5 227.5M383.5 246.5L373.5 263.5M383.5 246.5L374.5 244.5M384.5 227.5L384.5 209.5M384.5 227.5L374.5 244.5M384.5 227.5L375.5 224.5M384.5 209.5L384.5 191.5M384.5 209.5L375.5 224.5M384.5 209.5L375.5 208.5M384.5 191.5L383.5 177.5M384.5 191.5L375.5 208.5M384.5 191.5L374.5 192.5M383.5 177.5L382.5 162.5M383.5 177.5L374.5 192.5M383.5 177.5L374.5 177.5M382.5 162.5L382.5 143.5M382.5 162.5L374.5 177.5M382.5 162.5L372.5 160.5M382.5 143.5L383.5 124.5M382.5 143.5L372.5 160.5M382.5 143.5L373.5 143.5M383.5 124.5L373.5 143.5M383.5 124.5L373.5 132.5M373.5 391.5L374.5 381.5M373.5 391.5L364.5 399.5M374.5 381.5L373.5 365.5M374.5 381.5L364.5 399.5M374.5 381.5L364.5 380.5M373.5 365.5L372.5 347.5M373.5 365.5L364.5 380.5M373.5 365.5L362.5 362.5M372.5 347.5L371.5 327.5M372.5 347.5L362.5 362.5M372.5 347.5L362.5 344.5M371.5 327.5L371.5 308.5M371.5 327.5L362.5 344.5M371.5 327.5L361.5 325.5M371.5 308.5L372.5 285.5M371.5 308.5L361.5 325.5M371.5 308.5L360.5 306.5M372.5 285.5L373.5 263.5M372.5 285.5L360.5 306.5M372.5 285.5L362.5 283.5M373.5 263.5L374.5 244.5M373.5 263.5L362.5 283.5M373.5 263.5L363.5 263.5M374.5 244.5L375.5 224.5M374.5 244.5L363.5 263.5M374.5 244.5L364.5 243.5M375.5 224.5L375.5 208.5M375.5 224.5L364.5 243.5M375.5 224.5L365.5 225.5M375.5 208.5L374.5 192.5M375.5 208.5L365.5 225.5M375.5 208.5L365.5 208.5M374.5 192.5L374.5 177.5M374.5 192.5L365.5 208.5M374.5 192.5L365.5 191.5M374.5 177.5L372.5 160.5M374.5 177.5L365.5 191.5M374.5 177.5L364.5 176.5M372.5 160.5L373.5 143.5M372.5 160.5L364.5 176.5M372.5 160.5L363.5 158.5M373.5 143.5L373.5 132.5M373.5 143.5L363.5 158.5M373.5 143.5L364.5 140.5M373.5 132.5L364.5 140.5M364.5 399.5L364.5 380.5M364.5 399.5L354.5 407.5M364.5 399.5L355.5 397.5M364.5 380.5L362.5 362.5M364.5 380.5L355.5 397.5M364.5 380.5L354.5 378.5M362.5 362.5L362.5 344.5M362.5 362.5L354.5 378.5M362.5 362.5L353.5 359.5M362.5 344.5L361.5 325.5M362.5 344.5L353.5 359.5M362.5 344.5L351.5 340.5M361.5 325.5L360.5 306.5M361.5 325.5L351.5 340.5M361.5 325.5L350.5 324.5M360.5 306.5L362.5 283.5M360.5 306.5L350.5 324.5M360.5 306.5L350.5 305.5M362.5 283.5L363.5 263.5M362.5 283.5L350.5 305.5M362.5 283.5L351.5 285.5M363.5 263.5L364.5 243.5M363.5 263.5L351.5 285.5M363.5 263.5L353.5 266.5M364.5 243.5L365.5 225.5M364.5 243.5L353.5 266.5M364.5 243.5L355.5 246.5M365.5 225.5L365.5 208.5M365.5 225.5L355.5 246.5M365.5 225.5L356.5 227.5M365.5 208.5L365.5 191.5M365.5 208.5L356.5 227.5M365.5 208.5L356.5 208.5M365.5 191.5L364.5 176.5M365.5 191.5L356.5 208.5M365.5 191.5L355.5 191.5M364.5 176.5L363.5 158.5M364.5 176.5L355.5 191.5M364.5 176.5L355.5 174.5M363.5 158.5L364.5 140.5M363.5 158.5L355.5 174.5M363.5 158.5L355.5 156.5M364.5 140.5L355.5 156.5M364.5 140.5L354.5 148.5M354.5 407.5L355.5 397.5M354.5 407.5L345.5 416.5M355.5 397.5L354.5 378.5M355.5 397.5L345.5 416.5M355.5 397.5L344.5 395.5M354.5 378.5L353.5 359.5M354.5 378.5L344.5 395.5M354.5 378.5L344.5 375.5M353.5 359.5L351.5 340.5M353.5 359.5L344.5 375.5M353.5 359.5L342.5 358.5M351.5 340.5L350.5 324.5M351.5 340.5L342.5 358.5M351.5 340.5L340.5 342.5M350.5 324.5L350.5 305.5M350.5 324.5L340.5 342.5M350.5 324.5L340.5 323.5M350.5 305.5L351.5 285.5M350.5 305.5L340.5 323.5M350.5 305.5L340.5 306.5M351.5 285.5L353.5 266.5M351.5 285.5L340.5 306.5M351.5 285.5L342.5 288.5M353.5 266.5L355.5 246.5M353.5 266.5L342.5 288.5M353.5 266.5L344.5 266.5M355.5 246.5L356.5 227.5M355.5 246.5L344.5 266.5M355.5 246.5L345.5 248.5M356.5 227.5L356.5 208.5M356.5 227.5L345.5 248.5M356.5 227.5L347.5 227.5M356.5 208.5L355.5 191.5M356.5 208.5L347.5 227.5M356.5 208.5L346.5 209.5M355.5 191.5L355.5 174.5M355.5 191.5L346.5 209.5M355.5 191.5L345.5 190.5M355.5 174.5L355.5 156.5M355.5 174.5L345.5 190.5M355.5 174.5L345.5 174.5M355.5 156.5L354.5 148.5M355.5 156.5L345.5 174.5M355.5 156.5L345.5 157.5M354.5 148.5L345.5 157.5M345.5 416.5L344.5 395.5M345.5 416.5L336.5 424.5M345.5 416.5L335.5 413.5M344.5 395.5L344.5 375.5M344.5 395.5L335.5 413.5M344.5 395.5L336.5 394.5M344.5 375.5L342.5 358.5M344.5 375.5L336.5 394.5M344.5 375.5L334.5 374.5M342.5 358.5L340.5 342.5M342.5 358.5L334.5 374.5M342.5 358.5L331.5 358.5M340.5 342.5L340.5 323.5M340.5 342.5L331.5 358.5M340.5 342.5L330.5 342.5M340.5 323.5L340.5 306.5M340.5 323.5L330.5 342.5M340.5 323.5L329.5 327.5M340.5 306.5L342.5 288.5M340.5 306.5L329.5 327.5M340.5 306.5L331.5 310.5M340.5 306.5L333.5 292.5M342.5 288.5L344.5 266.5M342.5 288.5L333.5 292.5M342.5 288.5L335.5 270.5M344.5 266.5L345.5 248.5M344.5 266.5L335.5 270.5M345.5 248.5L347.5 227.5M345.5 248.5L335.5 270.5M345.5 248.5L336.5 250.5M347.5 227.5L346.5 209.5M347.5 227.5L336.5 250.5M347.5 227.5L337.5 230.5M346.5 209.5L345.5 190.5M346.5 209.5L337.5 230.5M346.5 209.5L337.5 209.5M345.5 190.5L345.5 174.5M345.5 190.5L337.5 209.5M345.5 190.5L336.5 191.5M345.5 174.5L345.5 157.5M345.5 174.5L336.5 191.5M345.5 174.5L336.5 172.5M345.5 157.5L336.5 172.5M345.5 157.5L336.5 165.5M336.5 424.5L335.5 413.5M336.5 424.5L326.5 432.5M335.5 413.5L336.5 394.5M335.5 413.5L326.5 432.5M335.5 413.5L326.5 413.5M336.5 394.5L334.5 374.5M336.5 394.5L326.5 413.5M336.5 394.5L325.5 393.5M334.5 374.5L331.5 358.5M334.5 374.5L325.5 393.5M334.5 374.5L323.5 375.5M331.5 358.5L330.5 342.5M331.5 358.5L323.5 375.5M331.5 358.5L321.5 358.5M330.5 342.5L329.5 327.5M330.5 342.5L321.5 358.5M330.5 342.5L320.5 345.5M329.5 327.5L331.5 310.5M329.5 327.5L320.5 345.5M329.5 327.5L321.5 329.5M331.5 310.5L333.5 292.5M331.5 310.5L321.5 329.5M331.5 310.5L322.5 313.5M333.5 292.5L335.5 270.5M333.5 292.5L322.5 313.5M333.5 292.5L324.5 294.5M335.5 270.5L336.5 250.5M335.5 270.5L324.5 294.5M335.5 270.5L326.5 274.5M336.5 250.5L337.5 230.5M336.5 250.5L326.5 274.5M336.5 250.5L327.5 250.5M337.5 230.5L337.5 209.5M337.5 230.5L327.5 250.5M337.5 230.5L327.5 228.5M337.5 209.5L336.5 191.5M337.5 209.5L327.5 228.5M337.5 209.5L327.5 209.5M336.5 191.5L336.5 172.5M336.5 191.5L327.5 209.5M336.5 191.5L327.5 189.5M336.5 172.5L336.5 165.5M336.5 172.5L327.5 189.5M336.5 172.5L326.5 173.5M336.5 165.5L326.5 173.5M326.5 432.5L326.5 413.5M326.5 432.5L317.5 440.5M326.5 432.5L317.5 430.5M326.5 413.5L325.5 393.5M326.5 413.5L317.5 430.5M326.5 413.5L316.5 410.5M325.5 393.5L323.5 375.5M325.5 393.5L316.5 410.5M325.5 393.5L315.5 393.5M323.5 375.5L321.5 358.5M323.5 375.5L315.5 393.5M323.5 375.5L313.5 375.5M321.5 358.5L320.5 345.5M321.5 358.5L313.5 375.5M321.5 358.5L311.5 361.5M320.5 345.5L321.5 329.5M320.5 345.5L311.5 361.5M320.5 345.5L311.5 346.5M321.5 329.5L322.5 313.5M321.5 329.5L311.5 346.5M321.5 329.5L312.5 330.5M322.5 313.5L324.5 294.5M322.5 313.5L312.5 330.5M322.5 313.5L314.5 313.5M324.5 294.5L326.5 274.5M324.5 294.5L314.5 313.5M324.5 294.5L316.5 293.5M326.5 274.5L327.5 250.5M326.5 274.5L316.5 293.5M326.5 274.5L317.5 271.5M327.5 250.5L327.5 228.5M327.5 250.5L317.5 271.5M327.5 250.5L318.5 250.5M327.5 228.5L327.5 209.5M327.5 228.5L318.5 250.5M327.5 228.5L317.5 229.5M327.5 209.5L327.5 189.5M327.5 209.5L317.5 229.5M327.5 209.5L317.5 207.5M327.5 189.5L326.5 173.5M327.5 189.5L317.5 207.5M327.5 189.5L317.5 189.5M326.5 173.5L317.5 189.5M326.5 173.5L317.5 181.5M317.5 440.5L317.5 430.5M317.5 440.5L308.5 448.5M317.5 430.5L316.5 410.5M317.5 430.5L308.5 448.5M317.5 430.5L307.5 429.5M316.5 410.5L315.5 393.5M316.5 410.5L307.5 429.5M316.5 410.5L307.5 409.5M315.5 393.5L313.5 375.5M315.5 393.5L307.5 409.5M315.5 393.5L305.5 394.5M313.5 375.5L311.5 361.5M313.5 375.5L305.5 394.5M313.5 375.5L304.5 376.5M311.5 361.5L311.5 346.5M311.5 361.5L304.5 376.5M311.5 361.5L302.5 362.5M311.5 346.5L312.5 330.5M311.5 346.5L302.5 362.5M311.5 346.5L304.5 346.5M312.5 330.5L314.5 313.5M312.5 330.5L304.5 346.5M312.5 330.5L304.5 332.5M314.5 313.5L316.5 293.5M314.5 313.5L304.5 332.5M314.5 313.5L306.5 312.5M316.5 293.5L317.5 271.5M316.5 293.5L306.5 312.5M316.5 293.5L307.5 291.5M317.5 271.5L318.5 250.5M317.5 271.5L307.5 291.5M317.5 271.5L308.5 268.5M318.5 250.5L317.5 229.5M318.5 250.5L308.5 268.5M318.5 250.5L309.5 246.5M317.5 229.5L317.5 207.5M317.5 229.5L309.5 246.5M317.5 229.5L308.5 225.5M317.5 207.5L317.5 189.5M317.5 207.5L308.5 225.5M317.5 207.5L308.5 206.5M317.5 189.5L317.5 181.5M317.5 189.5L308.5 206.5M317.5 189.5L308.5 189.5M317.5 181.5L308.5 189.5M308.5 448.5L307.5 429.5M308.5 448.5L298.5 456.5M308.5 448.5L298.5 447.5M307.5 429.5L307.5 409.5M307.5 429.5L298.5 447.5M307.5 429.5L298.5 427.5M307.5 409.5L305.5 394.5M307.5 409.5L298.5 427.5M307.5 409.5L296.5 411.5M305.5 394.5L304.5 376.5M305.5 394.5L296.5 411.5M305.5 394.5L295.5 392.5M304.5 376.5L302.5 362.5M304.5 376.5L295.5 392.5M304.5 376.5L295.5 377.5M302.5 362.5L304.5 346.5M302.5 362.5L295.5 377.5M302.5 362.5L295.5 361.5M304.5 346.5L304.5 332.5M304.5 346.5L295.5 361.5M304.5 346.5L295.5 346.5M304.5 332.5L306.5 312.5M304.5 332.5L295.5 346.5M304.5 332.5L297.5 327.5M306.5 312.5L307.5 291.5M306.5 312.5L297.5 327.5M306.5 312.5L298.5 306.5M307.5 291.5L308.5 268.5M307.5 291.5L298.5 306.5M307.5 291.5L298.5 287.5M308.5 268.5L309.5 246.5M308.5 268.5L298.5 287.5M308.5 268.5L299.5 266.5M309.5 246.5L308.5 225.5M309.5 246.5L299.5 266.5M309.5 246.5L299.5 245.5M308.5 225.5L308.5 206.5M308.5 225.5L299.5 245.5M308.5 225.5L298.5 224.5M308.5 206.5L308.5 189.5M308.5 206.5L298.5 224.5M308.5 206.5L298.5 206.5M308.5 189.5L298.5 206.5M308.5 189.5L298.5 197.5M298.5 456.5L298.5 447.5M298.5 456.5L289.5 464.5M298.5 447.5L298.5 427.5M298.5 447.5L289.5 464.5M298.5 447.5L289.5 444.5M298.5 427.5L296.5 411.5M298.5 427.5L289.5 444.5M298.5 427.5L289.5 427.5M296.5 411.5L295.5 392.5M296.5 411.5L289.5 427.5M296.5 411.5L287.5 408.5M295.5 392.5L295.5 377.5M295.5 392.5L287.5 408.5M295.5 392.5L286.5 393.5M295.5 377.5L295.5 361.5M295.5 377.5L286.5 393.5M295.5 377.5L287.5 376.5M295.5 361.5L295.5 346.5M295.5 361.5L287.5 376.5M295.5 361.5L286.5 358.5M295.5 346.5L297.5 327.5M295.5 346.5L286.5 358.5M295.5 346.5L288.5 341.5M297.5 327.5L298.5 306.5M297.5 327.5L288.5 341.5M297.5 327.5L289.5 321.5M298.5 306.5L298.5 287.5M298.5 306.5L289.5 321.5M298.5 306.5L289.5 302.5M298.5 287.5L299.5 266.5M298.5 287.5L289.5 302.5M298.5 287.5L289.5 281.5M299.5 266.5L299.5 245.5M299.5 266.5L289.5 281.5M299.5 266.5L289.5 262.5M299.5 245.5L298.5 224.5M299.5 245.5L289.5 262.5M299.5 245.5L289.5 242.5M298.5 224.5L298.5 206.5M298.5 224.5L289.5 242.5M298.5 224.5L289.5 223.5M298.5 206.5L298.5 197.5M298.5 206.5L289.5 223.5M298.5 206.5L289.5 205.5M298.5 197.5L289.5 205.5M289.5 464.5L289.5 444.5M289.5 464.5L279.5 472.5M289.5 464.5L280.5 463.5M289.5 444.5L289.5 427.5M289.5 444.5L280.5 463.5M289.5 444.5L280.5 443.5M289.5 427.5L287.5 408.5M289.5 427.5L280.5 443.5M289.5 427.5L279.5 425.5M287.5 408.5L286.5 393.5M287.5 408.5L279.5 425.5M287.5 408.5L278.5 409.5M286.5 393.5L287.5 376.5M286.5 393.5L278.5 409.5M286.5 393.5L278.5 391.5M287.5 376.5L286.5 358.5M287.5 376.5L278.5 391.5M287.5 376.5L278.5 373.5M286.5 358.5L288.5 341.5M286.5 358.5L278.5 373.5M286.5 358.5L278.5 354.5M288.5 341.5L289.5 321.5M288.5 341.5L278.5 354.5M288.5 341.5L279.5 336.5M289.5 321.5L289.5 302.5M289.5 321.5L279.5 336.5M289.5 321.5L279.5 316.5M289.5 302.5L289.5 281.5M289.5 302.5L279.5 316.5M289.5 302.5L280.5 296.5M289.5 281.5L289.5 262.5M289.5 281.5L280.5 296.5M289.5 281.5L279.5 279.5M289.5 262.5L289.5 242.5M289.5 262.5L279.5 279.5M289.5 262.5L280.5 259.5M289.5 242.5L289.5 223.5M289.5 242.5L280.5 259.5M289.5 242.5L280.5 240.5M289.5 223.5L289.5 205.5M289.5 223.5L280.5 240.5M289.5 223.5L279.5 222.5M289.5 205.5L279.5 222.5M289.5 205.5L279.5 213.5M279.5 472.5L280.5 463.5M279.5 472.5L270.5 480.5M280.5 463.5L280.5 443.5M280.5 463.5L270.5 480.5M280.5 463.5L270.5 462.5M280.5 443.5L279.5 425.5M280.5 443.5L270.5 462.5M280.5 443.5L270.5 443.5M279.5 425.5L278.5 409.5M279.5 425.5L270.5 443.5M279.5 425.5L270.5 425.5M278.5 409.5L278.5 391.5M278.5 409.5L270.5 425.5M278.5 409.5L270.5 406.5M278.5 391.5L278.5 373.5M278.5 391.5L270.5 406.5M278.5 391.5L270.5 388.5M278.5 373.5L278.5 354.5M278.5 373.5L270.5 388.5M278.5 373.5L270.5 369.5M278.5 354.5L279.5 336.5M278.5 354.5L270.5 369.5M278.5 354.5L270.5 351.5M279.5 336.5L279.5 316.5M279.5 336.5L270.5 351.5M279.5 336.5L270.5 332.5M279.5 316.5L280.5 296.5M279.5 316.5L270.5 332.5M279.5 316.5L270.5 314.5M280.5 296.5L279.5 279.5M280.5 296.5L270.5 314.5M280.5 296.5L270.5 295.5M279.5 279.5L280.5 259.5M279.5 279.5L270.5 295.5M279.5 279.5L270.5 277.5M280.5 259.5L280.5 240.5M280.5 259.5L270.5 277.5M280.5 259.5L270.5 258.5M280.5 240.5L279.5 222.5M280.5 240.5L270.5 258.5M280.5 240.5L270.5 240.5M279.5 222.5L279.5 213.5M279.5 222.5L270.5 240.5M279.5 222.5L270.5 221.5M279.5 213.5L270.5 221.5M270.5 480.5L270.5 462.5M270.5 462.5L270.5 443.5M270.5 443.5L270.5 425.5M270.5 425.5L270.5 406.5M270.5 406.5L270.5 388.5M270.5 388.5L270.5 369.5M270.5 369.5L270.5 351.5M270.5 351.5L270.5 332.5M270.5 332.5L270.5 314.5M270.5 314.5L270.5 295.5M270.5 295.5L270.5 277.5M270.5 277.5L270.5 258.5M270.5 258.5L270.5 240.5M270.5 240.5L270.5 221.5M420.5 351.5L420.5 333.5M420.5 351.5L436.5 356.5M420.5 351.5L435.5 346.5M420.5 333.5L420.5 314.5M420.5 333.5L435.5 346.5M420.5 333.5L435.5 327.5M420.5 314.5L420.5 296.5M420.5 314.5L435.5 327.5M420.5 314.5L436.5 310.5M420.5 296.5L420.5 277.5M420.5 296.5L436.5 310.5M420.5 296.5L435.5 291.5M420.5 277.5L420.5 259.5M420.5 277.5L435.5 291.5M420.5 277.5L436.5 271.5M420.5 259.5L420.5 240.5M420.5 259.5L436.5 271.5M420.5 259.5L436.5 253.5M420.5 240.5L420.5 222.5M420.5 240.5L436.5 253.5M420.5 240.5L436.5 235.5M420.5 222.5L420.5 203.5M420.5 222.5L436.5 235.5M420.5 222.5L436.5 216.5M420.5 203.5L420.5 185.5M420.5 203.5L436.5 216.5M420.5 203.5L436.5 198.5M420.5 185.5L420.5 166.5M420.5 185.5L436.5 198.5M420.5 185.5L436.5 179.5M420.5 166.5L420.5 148.5M420.5 166.5L436.5 179.5M420.5 166.5L436.5 161.5M420.5 148.5L420.5 129.5M420.5 148.5L436.5 161.5M420.5 148.5L437.5 143.5M420.5 129.5L420.5 111.5M420.5 129.5L437.5 143.5M420.5 129.5L436.5 124.5M420.5 111.5L420.5 92.5M420.5 111.5L436.5 124.5M420.5 111.5L436.5 105.5M420.5 92.5L436.5 105.5M420.5 92.5L436.5 97.5M436.5 356.5L435.5 346.5M436.5 356.5L452.5 360.5M435.5 346.5L435.5 327.5M435.5 346.5L452.5 360.5M435.5 346.5L452.5 340.5M435.5 327.5L436.5 310.5M435.5 327.5L452.5 340.5M435.5 327.5L452.5 322.5M436.5 310.5L435.5 291.5M436.5 310.5L452.5 322.5M436.5 310.5L451.5 303.5M435.5 291.5L436.5 271.5M435.5 291.5L451.5 303.5M435.5 291.5L451.5 283.5M436.5 271.5L436.5 253.5M436.5 271.5L451.5 283.5M436.5 271.5L451.5 265.5M436.5 253.5L436.5 235.5M436.5 253.5L451.5 265.5M436.5 253.5L452.5 247.5M436.5 235.5L436.5 216.5M436.5 235.5L452.5 247.5M436.5 235.5L452.5 229.5M436.5 216.5L436.5 198.5M436.5 216.5L452.5 229.5M436.5 216.5L453.5 212.5M436.5 198.5L436.5 179.5M436.5 198.5L453.5 212.5M436.5 198.5L455.5 194.5M436.5 179.5L436.5 161.5M436.5 179.5L455.5 194.5M436.5 179.5L454.5 175.5M436.5 161.5L437.5 143.5M436.5 161.5L454.5 175.5M436.5 161.5L454.5 157.5M437.5 143.5L436.5 124.5M437.5 143.5L454.5 157.5M437.5 143.5L454.5 137.5M436.5 124.5L436.5 105.5M436.5 124.5L454.5 137.5M436.5 124.5L452.5 120.5M436.5 105.5L436.5 97.5M436.5 105.5L452.5 120.5M436.5 105.5L452.5 101.5M436.5 97.5L452.5 101.5M452.5 360.5L452.5 340.5M452.5 360.5L468.5 365.5M452.5 360.5L468.5 354.5M452.5 340.5L452.5 322.5M452.5 340.5L468.5 354.5M452.5 340.5L466.5 334.5M452.5 322.5L451.5 303.5M452.5 322.5L466.5 334.5M452.5 322.5L466.5 314.5M451.5 303.5L451.5 283.5M451.5 303.5L466.5 314.5M451.5 303.5L465.5 295.5M451.5 283.5L451.5 265.5M451.5 283.5L465.5 295.5M451.5 283.5L467.5 277.5M451.5 265.5L452.5 247.5M451.5 265.5L467.5 277.5M451.5 265.5L467.5 259.5M452.5 247.5L452.5 229.5M452.5 247.5L467.5 259.5M452.5 247.5L469.5 242.5M452.5 229.5L453.5 212.5M452.5 229.5L469.5 242.5M452.5 229.5L471.5 226.5M453.5 212.5L455.5 194.5M453.5 212.5L471.5 226.5M453.5 212.5L471.5 209.5M455.5 194.5L454.5 175.5M455.5 194.5L471.5 209.5M455.5 194.5L473.5 190.5M454.5 175.5L454.5 157.5M454.5 175.5L473.5 190.5M454.5 175.5L472.5 172.5M454.5 157.5L454.5 137.5M454.5 157.5L472.5 172.5M454.5 157.5L470.5 151.5M454.5 137.5L452.5 120.5M454.5 137.5L470.5 151.5M454.5 137.5L470.5 134.5M452.5 120.5L452.5 101.5M452.5 120.5L470.5 134.5M452.5 120.5L469.5 115.5M452.5 101.5L469.5 115.5M452.5 101.5L468.5 106.5M468.5 365.5L468.5 354.5M468.5 365.5L485.5 370.5M468.5 354.5L466.5 334.5M468.5 354.5L485.5 370.5M468.5 354.5L483.5 350.5M466.5 334.5L466.5 314.5M466.5 334.5L483.5 350.5M466.5 334.5L482.5 329.5M466.5 314.5L465.5 295.5M466.5 314.5L482.5 329.5M466.5 314.5L481.5 308.5M465.5 295.5L467.5 277.5M465.5 295.5L481.5 308.5M465.5 295.5L482.5 290.5M467.5 277.5L467.5 259.5M467.5 277.5L482.5 290.5M467.5 277.5L482.5 272.5M467.5 259.5L469.5 242.5M467.5 259.5L482.5 272.5M467.5 259.5L484.5 256.5M469.5 242.5L471.5 226.5M469.5 242.5L484.5 256.5M469.5 242.5L487.5 240.5M471.5 226.5L471.5 209.5M471.5 226.5L487.5 240.5M471.5 226.5L488.5 223.5M471.5 209.5L473.5 190.5M471.5 209.5L488.5 223.5M471.5 209.5L489.5 207.5M473.5 190.5L472.5 172.5M473.5 190.5L489.5 207.5M473.5 190.5L489.5 187.5M472.5 172.5L470.5 151.5M472.5 172.5L489.5 187.5M472.5 172.5L488.5 167.5M470.5 151.5L470.5 134.5M470.5 151.5L488.5 167.5M470.5 151.5L487.5 148.5M470.5 134.5L469.5 115.5M470.5 134.5L487.5 148.5M470.5 134.5L485.5 128.5M469.5 115.5L468.5 106.5M469.5 115.5L485.5 128.5M469.5 115.5L485.5 111.5M468.5 106.5L485.5 111.5M485.5 370.5L483.5 350.5M485.5 370.5L501.5 374.5M485.5 370.5L500.5 365.5M483.5 350.5L482.5 329.5M483.5 350.5L500.5 365.5M483.5 350.5L498.5 343.5M482.5 329.5L481.5 308.5M482.5 329.5L498.5 343.5M482.5 329.5L497.5 323.5M481.5 308.5L482.5 290.5M481.5 308.5L497.5 323.5M481.5 308.5L496.5 304.5M482.5 290.5L482.5 272.5M482.5 290.5L496.5 304.5M482.5 290.5L497.5 286.5M482.5 272.5L484.5 256.5M482.5 272.5L497.5 286.5M482.5 272.5L498.5 268.5M484.5 256.5L487.5 240.5M484.5 256.5L498.5 268.5M484.5 256.5L501.5 255.5M487.5 240.5L488.5 223.5M487.5 240.5L501.5 255.5M487.5 240.5L503.5 240.5M488.5 223.5L489.5 207.5M488.5 223.5L503.5 240.5M488.5 223.5L505.5 224.5M489.5 207.5L489.5 187.5M489.5 207.5L505.5 224.5M489.5 207.5L506.5 206.5M489.5 187.5L488.5 167.5M489.5 187.5L506.5 206.5M489.5 187.5L505.5 186.5M488.5 167.5L487.5 148.5M488.5 167.5L505.5 186.5M488.5 167.5L503.5 165.5M487.5 148.5L485.5 128.5M487.5 148.5L503.5 165.5M487.5 148.5L501.5 143.5M485.5 128.5L485.5 111.5M485.5 128.5L501.5 143.5M485.5 128.5L502.5 123.5M485.5 111.5L502.5 123.5M485.5 111.5L501.5 115.5M501.5 374.5L500.5 365.5M501.5 374.5L517.5 379.5M500.5 365.5L498.5 343.5M500.5 365.5L517.5 379.5M500.5 365.5L515.5 358.5M498.5 343.5L497.5 323.5M498.5 343.5L515.5 358.5M498.5 343.5L515.5 338.5M497.5 323.5L496.5 304.5M497.5 323.5L515.5 338.5M497.5 323.5L513.5 317.5M496.5 304.5L497.5 286.5M496.5 304.5L513.5 317.5M496.5 304.5L514.5 299.5M497.5 286.5L498.5 268.5M497.5 286.5L514.5 299.5M497.5 286.5L513.5 284.5M498.5 268.5L501.5 255.5M498.5 268.5L513.5 284.5M498.5 268.5L516.5 270.5M501.5 255.5L503.5 240.5M501.5 255.5L516.5 270.5M501.5 255.5L518.5 254.5M503.5 240.5L505.5 224.5M503.5 240.5L518.5 254.5M503.5 240.5L519.5 240.5M505.5 224.5L506.5 206.5M505.5 224.5L519.5 240.5M505.5 224.5L520.5 223.5M506.5 206.5L505.5 186.5M506.5 206.5L520.5 223.5M506.5 206.5L521.5 203.5M505.5 186.5L503.5 165.5M505.5 186.5L521.5 203.5M505.5 186.5L520.5 182.5M503.5 165.5L501.5 143.5M503.5 165.5L520.5 182.5M503.5 165.5L519.5 161.5M501.5 143.5L502.5 123.5M501.5 143.5L519.5 161.5M501.5 143.5L517.5 139.5M502.5 123.5L501.5 115.5M502.5 123.5L517.5 139.5M502.5 123.5L517.5 120.5M501.5 115.5L517.5 120.5M517.5 379.5L515.5 358.5M517.5 379.5L533.5 383.5M517.5 379.5L533.5 373.5M515.5 358.5L515.5 338.5M515.5 358.5L533.5 373.5M515.5 358.5L532.5 354.5M515.5 338.5L513.5 317.5M515.5 338.5L532.5 354.5M515.5 338.5L531.5 334.5M513.5 317.5L514.5 299.5M513.5 317.5L531.5 334.5M513.5 317.5L530.5 315.5M514.5 299.5L513.5 284.5M514.5 299.5L530.5 315.5M514.5 299.5L529.5 296.5M513.5 284.5L516.5 270.5M513.5 284.5L529.5 296.5M513.5 284.5L529.5 281.5M516.5 270.5L518.5 254.5M516.5 270.5L529.5 281.5M516.5 270.5L529.5 268.5M518.5 254.5L519.5 240.5M518.5 254.5L529.5 268.5M518.5 254.5L531.5 256.5M519.5 240.5L520.5 223.5M519.5 240.5L531.5 256.5M519.5 240.5L532.5 240.5M520.5 223.5L521.5 203.5M520.5 223.5L532.5 240.5M520.5 223.5L534.5 220.5M521.5 203.5L520.5 182.5M521.5 203.5L534.5 220.5M521.5 203.5L534.5 200.5M520.5 182.5L519.5 161.5M520.5 182.5L534.5 200.5M520.5 182.5L534.5 176.5M519.5 161.5L517.5 139.5M519.5 161.5L534.5 176.5M519.5 161.5L534.5 154.5M517.5 139.5L517.5 120.5M517.5 139.5L534.5 154.5M517.5 139.5L533.5 133.5M517.5 120.5L533.5 133.5M517.5 120.5L533.5 124.5M533.5 383.5L533.5 373.5M533.5 383.5L549.5 388.5M533.5 373.5L532.5 354.5M533.5 373.5L549.5 388.5M533.5 373.5L549.5 369.5M532.5 354.5L531.5 334.5M532.5 354.5L549.5 369.5M532.5 354.5L550.5 349.5M531.5 334.5L530.5 315.5M531.5 334.5L550.5 349.5M531.5 334.5L548.5 330.5M530.5 315.5L529.5 296.5M530.5 315.5L548.5 330.5M530.5 315.5L547.5 310.5M529.5 296.5L529.5 281.5M529.5 296.5L547.5 310.5M529.5 296.5L545.5 295.5M529.5 281.5L529.5 268.5M529.5 281.5L545.5 295.5M529.5 281.5L544.5 281.5M529.5 268.5L531.5 256.5M529.5 268.5L544.5 281.5M529.5 268.5L543.5 267.5M531.5 256.5L532.5 240.5M531.5 256.5L543.5 267.5M531.5 256.5L544.5 252.5M532.5 240.5L534.5 220.5M532.5 240.5L544.5 252.5M532.5 240.5L546.5 236.5M534.5 220.5L534.5 200.5M534.5 220.5L546.5 236.5M534.5 220.5L547.5 215.5M534.5 200.5L534.5 176.5M534.5 200.5L547.5 215.5M534.5 200.5L550.5 195.5M534.5 176.5L534.5 154.5M534.5 176.5L550.5 195.5M534.5 176.5L550.5 170.5M534.5 154.5L533.5 133.5M534.5 154.5L550.5 170.5M534.5 154.5L550.5 148.5M533.5 133.5L533.5 124.5M533.5 133.5L550.5 148.5M533.5 133.5L549.5 129.5M533.5 124.5L549.5 129.5M549.5 388.5L549.5 369.5M549.5 388.5L565.5 393.5M549.5 388.5L567.5 384.5M549.5 369.5L550.5 349.5M549.5 369.5L567.5 384.5M549.5 369.5L567.5 364.5M550.5 349.5L548.5 330.5M550.5 349.5L567.5 364.5M550.5 349.5L566.5 344.5M548.5 330.5L547.5 310.5M548.5 330.5L566.5 344.5M548.5 330.5L564.5 325.5M547.5 310.5L545.5 295.5M547.5 310.5L564.5 325.5M547.5 310.5L561.5 307.5M545.5 295.5L544.5 281.5M545.5 295.5L561.5 307.5M545.5 295.5L558.5 291.5M544.5 281.5L543.5 267.5M544.5 281.5L558.5 291.5M544.5 281.5L557.5 276.5M543.5 267.5L544.5 252.5M543.5 267.5L557.5 276.5M543.5 267.5L556.5 263.5M544.5 252.5L546.5 236.5M544.5 252.5L556.5 263.5M544.5 252.5L556.5 246.5M546.5 236.5L547.5 215.5M546.5 236.5L556.5 246.5M546.5 236.5L560.5 229.5M547.5 215.5L550.5 195.5M547.5 215.5L560.5 229.5M547.5 215.5L563.5 208.5M550.5 195.5L550.5 170.5M550.5 195.5L563.5 208.5M550.5 195.5L565.5 187.5M550.5 170.5L550.5 148.5M550.5 170.5L565.5 187.5M550.5 170.5L567.5 164.5M550.5 148.5L549.5 129.5M550.5 148.5L567.5 164.5M550.5 148.5L566.5 144.5M549.5 129.5L566.5 144.5M549.5 129.5L565.5 134.5M565.5 393.5L567.5 384.5M565.5 393.5L581.5 397.5M567.5 384.5L567.5 364.5M567.5 384.5L581.5 397.5M567.5 384.5L584.5 379.5M567.5 364.5L566.5 344.5M567.5 364.5L584.5 379.5M567.5 364.5L584.5 359.5M566.5 344.5L564.5 325.5M566.5 344.5L584.5 359.5M566.5 344.5L583.5 337.5M564.5 325.5L561.5 307.5M564.5 325.5L583.5 337.5M564.5 325.5L581.5 319.5M561.5 307.5L558.5 291.5M561.5 307.5L581.5 319.5M561.5 307.5L575.5 301.5M558.5 291.5L557.5 276.5M558.5 291.5L575.5 301.5M558.5 291.5L572.5 286.5M557.5 276.5L556.5 263.5M557.5 276.5L572.5 286.5M557.5 276.5L571.5 272.5M556.5 263.5L556.5 246.5M556.5 263.5L571.5 272.5M556.5 263.5L571.5 254.5M556.5 246.5L560.5 229.5M556.5 246.5L571.5 254.5M556.5 246.5L572.5 238.5M560.5 229.5L563.5 208.5M560.5 229.5L572.5 238.5M560.5 229.5L576.5 220.5M563.5 208.5L565.5 187.5M563.5 208.5L576.5 220.5M563.5 208.5L580.5 199.5M565.5 187.5L567.5 164.5M565.5 187.5L580.5 199.5M565.5 187.5L581.5 178.5M567.5 164.5L566.5 144.5M567.5 164.5L581.5 178.5M567.5 164.5L582.5 157.5M566.5 144.5L565.5 134.5M566.5 144.5L582.5 157.5M566.5 144.5L581.5 138.5M565.5 134.5L581.5 138.5M581.5 397.5L584.5 379.5M581.5 397.5L597.5 402.5M581.5 397.5L599.5 393.5M584.5 379.5L584.5 359.5M584.5 379.5L599.5 393.5M584.5 379.5L599.5 372.5M584.5 359.5L583.5 337.5M584.5 359.5L599.5 372.5M584.5 359.5L600.5 352.5M583.5 337.5L581.5 319.5M583.5 337.5L600.5 352.5M583.5 337.5L597.5 332.5M581.5 319.5L575.5 301.5M581.5 319.5L597.5 332.5M581.5 319.5L595.5 313.5M575.5 301.5L572.5 286.5M575.5 301.5L595.5 313.5M575.5 301.5L591.5 295.5M572.5 286.5L571.5 272.5M572.5 286.5L591.5 295.5M572.5 286.5L589.5 281.5M571.5 272.5L571.5 254.5M571.5 272.5L589.5 281.5M571.5 272.5L586.5 263.5M571.5 254.5L572.5 238.5M571.5 254.5L586.5 263.5M571.5 254.5L587.5 248.5M572.5 238.5L576.5 220.5M572.5 238.5L587.5 248.5M572.5 238.5L591.5 229.5M576.5 220.5L580.5 199.5M576.5 220.5L591.5 229.5M576.5 220.5L594.5 212.5M580.5 199.5L581.5 178.5M580.5 199.5L594.5 212.5M580.5 199.5L597.5 192.5M581.5 178.5L582.5 157.5M581.5 178.5L597.5 192.5M581.5 178.5L598.5 170.5M582.5 157.5L581.5 138.5M582.5 157.5L598.5 170.5M582.5 157.5L598.5 153.5M581.5 138.5L598.5 153.5M581.5 138.5L597.5 143.5M597.5 402.5L599.5 393.5M597.5 402.5L614.5 407.5M599.5 393.5L599.5 372.5M599.5 393.5L614.5 407.5M599.5 393.5L615.5 387.5M599.5 372.5L600.5 352.5M599.5 372.5L615.5 387.5M599.5 372.5L615.5 367.5M600.5 352.5L597.5 332.5M600.5 352.5L615.5 367.5M600.5 352.5L616.5 347.5M597.5 332.5L595.5 313.5M597.5 332.5L616.5 347.5M597.5 332.5L612.5 326.5M595.5 313.5L591.5 295.5M595.5 313.5L612.5 326.5M595.5 313.5L609.5 308.5M591.5 295.5L589.5 281.5M591.5 295.5L609.5 308.5M591.5 295.5L606.5 290.5M589.5 281.5L586.5 263.5M589.5 281.5L606.5 290.5M589.5 281.5L605.5 273.5M586.5 263.5L587.5 248.5M586.5 263.5L605.5 273.5M586.5 263.5L606.5 258.5M587.5 248.5L591.5 229.5M587.5 248.5L606.5 258.5M587.5 248.5L607.5 240.5M591.5 229.5L594.5 212.5M591.5 229.5L607.5 240.5M591.5 229.5L609.5 223.5M594.5 212.5L597.5 192.5M594.5 212.5L609.5 223.5M594.5 212.5L612.5 204.5M597.5 192.5L598.5 170.5M597.5 192.5L612.5 204.5M597.5 192.5L614.5 185.5M598.5 170.5L598.5 153.5M598.5 170.5L614.5 185.5M598.5 170.5L615.5 166.5M598.5 153.5L597.5 143.5M598.5 153.5L615.5 166.5M598.5 153.5L614.5 148.5M597.5 143.5L614.5 148.5M614.5 407.5L615.5 387.5M614.5 407.5L630.5 411.5M614.5 407.5L629.5 402.5M615.5 387.5L615.5 367.5M615.5 387.5L629.5 402.5M615.5 387.5L631.5 382.5M615.5 367.5L616.5 347.5M615.5 367.5L631.5 382.5M615.5 367.5L630.5 362.5M616.5 347.5L612.5 326.5M616.5 347.5L630.5 362.5M616.5 347.5L629.5 342.5M612.5 326.5L609.5 308.5M612.5 326.5L629.5 342.5M612.5 326.5L629.5 322.5M609.5 308.5L606.5 290.5M609.5 308.5L629.5 322.5M609.5 308.5L627.5 305.5M606.5 290.5L605.5 273.5M606.5 290.5L627.5 305.5M606.5 290.5L624.5 288.5M605.5 273.5L606.5 258.5M605.5 273.5L624.5 288.5M605.5 273.5L625.5 270.5M606.5 258.5L607.5 240.5M606.5 258.5L625.5 270.5M606.5 258.5L625.5 251.5M607.5 240.5L609.5 223.5M607.5 240.5L625.5 251.5M607.5 240.5L627.5 234.5M609.5 223.5L612.5 204.5M609.5 223.5L627.5 234.5M609.5 223.5L629.5 218.5M612.5 204.5L614.5 185.5M612.5 204.5L629.5 218.5M612.5 204.5L629.5 197.5M614.5 185.5L615.5 166.5M614.5 185.5L629.5 197.5M614.5 185.5L630.5 178.5M615.5 166.5L614.5 148.5M615.5 166.5L630.5 178.5M615.5 166.5L630.5 162.5M614.5 148.5L630.5 162.5M614.5 148.5L630.5 152.5M630.5 411.5L629.5 402.5M630.5 411.5L646.5 416.5M629.5 402.5L631.5 382.5M629.5 402.5L646.5 416.5M629.5 402.5L645.5 395.5M631.5 382.5L630.5 362.5M631.5 382.5L645.5 395.5M631.5 382.5L646.5 376.5M630.5 362.5L629.5 342.5M630.5 362.5L646.5 376.5M630.5 362.5L646.5 359.5M629.5 342.5L629.5 322.5M629.5 342.5L646.5 359.5M629.5 342.5L645.5 339.5M629.5 322.5L627.5 305.5M629.5 322.5L645.5 339.5M629.5 322.5L644.5 320.5M627.5 305.5L624.5 288.5M627.5 305.5L644.5 320.5M627.5 305.5L643.5 301.5M624.5 288.5L625.5 270.5M624.5 288.5L643.5 301.5M624.5 288.5L643.5 283.5M625.5 270.5L625.5 251.5M625.5 270.5L643.5 283.5M625.5 270.5L645.5 266.5M625.5 251.5L627.5 234.5M625.5 251.5L645.5 266.5M625.5 251.5L644.5 247.5M627.5 234.5L629.5 218.5M627.5 234.5L644.5 247.5M627.5 234.5L646.5 230.5M629.5 218.5L629.5 197.5M629.5 218.5L646.5 230.5M629.5 218.5L646.5 211.5M629.5 197.5L630.5 178.5M629.5 197.5L646.5 211.5M629.5 197.5L646.5 192.5M630.5 178.5L630.5 162.5M630.5 178.5L646.5 192.5M630.5 178.5L647.5 175.5M630.5 162.5L630.5 152.5M630.5 162.5L647.5 175.5M630.5 162.5L646.5 157.5M630.5 152.5L646.5 157.5M646.5 416.5L645.5 395.5M646.5 416.5L662.5 420.5M646.5 416.5L662.5 411.5M645.5 395.5L646.5 376.5M645.5 395.5L662.5 411.5M645.5 395.5L662.5 393.5M646.5 376.5L646.5 359.5M646.5 376.5L662.5 393.5M646.5 376.5L661.5 374.5M646.5 359.5L645.5 339.5M646.5 359.5L661.5 374.5M646.5 359.5L661.5 354.5M645.5 339.5L644.5 320.5M645.5 339.5L661.5 354.5M645.5 339.5L662.5 336.5M644.5 320.5L643.5 301.5M644.5 320.5L662.5 336.5M644.5 320.5L661.5 318.5M643.5 301.5L643.5 283.5M643.5 301.5L661.5 318.5M643.5 301.5L661.5 300.5M643.5 283.5L645.5 266.5M643.5 283.5L661.5 300.5M643.5 283.5L661.5 280.5M645.5 266.5L644.5 247.5M645.5 266.5L661.5 280.5M645.5 266.5L662.5 263.5M644.5 247.5L646.5 230.5M644.5 247.5L662.5 263.5M644.5 247.5L661.5 245.5M646.5 230.5L646.5 211.5M646.5 230.5L661.5 245.5M646.5 230.5L663.5 226.5M646.5 211.5L646.5 192.5M646.5 211.5L663.5 226.5M646.5 211.5L663.5 208.5M646.5 192.5L647.5 175.5M646.5 192.5L663.5 208.5M646.5 192.5L662.5 190.5M647.5 175.5L646.5 157.5M647.5 175.5L662.5 190.5M647.5 175.5L661.5 170.5M646.5 157.5L661.5 170.5M646.5 157.5L662.5 161.5M662.5 420.5L662.5 411.5M662.5 420.5L678.5 425.5M662.5 411.5L662.5 393.5M662.5 411.5L678.5 425.5M662.5 411.5L678.5 407.5M662.5 393.5L661.5 374.5M662.5 393.5L678.5 407.5M662.5 393.5L678.5 388.5M661.5 374.5L661.5 354.5M661.5 374.5L678.5 388.5M661.5 374.5L678.5 370.5M661.5 354.5L662.5 336.5M661.5 354.5L678.5 370.5M661.5 354.5L678.5 351.5M662.5 336.5L661.5 318.5M662.5 336.5L678.5 351.5M662.5 336.5L678.5 333.5M661.5 318.5L661.5 300.5M661.5 318.5L678.5 333.5M661.5 318.5L678.5 314.5M661.5 300.5L661.5 280.5M661.5 300.5L678.5 314.5M661.5 300.5L678.5 296.5M661.5 280.5L662.5 263.5M661.5 280.5L678.5 296.5M661.5 280.5L678.5 277.5M662.5 263.5L661.5 245.5M662.5 263.5L678.5 277.5M662.5 263.5L678.5 259.5M661.5 245.5L663.5 226.5M661.5 245.5L678.5 259.5M661.5 245.5L678.5 240.5M663.5 226.5L663.5 208.5M663.5 226.5L678.5 240.5M663.5 226.5L678.5 222.5M663.5 208.5L662.5 190.5M663.5 208.5L678.5 222.5M663.5 208.5L678.5 203.5M662.5 190.5L661.5 170.5M662.5 190.5L678.5 203.5M662.5 190.5L678.5 185.5M661.5 170.5L662.5 161.5M661.5 170.5L678.5 185.5M661.5 170.5L678.5 166.5M662.5 161.5L678.5 166.5M678.5 425.5L678.5 407.5M678.5 407.5L678.5 388.5M678.5 388.5L678.5 370.5M678.5 370.5L678.5 351.5M678.5 351.5L678.5 333.5M678.5 333.5L678.5 314.5M678.5 314.5L678.5 296.5M678.5 296.5L678.5 277.5M678.5 277.5L678.5 259.5M678.5 259.5L678.5 240.5M678.5 240.5L678.5 222.5M678.5 222.5L678.5 203.5M678.5 203.5L678.5 185.5M678.5 185.5L678.5 166.5M420.5 351.5L438.5 356.5M420.5 351.5L411.5 359.5M420.5 351.5L420.5 362.5M438.5 356.5L457.5 362.5M438.5 356.5L420.5 362.5M438.5 356.5L438.5 367.5M457.5 362.5L475.5 367.5M457.5 362.5L438.5 367.5M457.5 362.5L456.5 372.5M475.5 367.5L494.5 372.5M475.5 367.5L456.5 372.5M475.5 367.5L473.5 377.5M494.5 372.5L512.5 377.5M494.5 372.5L473.5 377.5M494.5 372.5L492.5 382.5M512.5 377.5L531.5 383.5M512.5 377.5L492.5 382.5M512.5 377.5L511.5 388.5M531.5 383.5L549.5 388.5M531.5 383.5L511.5 388.5M531.5 383.5L528.5 394.5M549.5 388.5L567.5 393.5M549.5 388.5L528.5 394.5M549.5 388.5L548.5 400.5M567.5 393.5L586.5 399.5M567.5 393.5L548.5 400.5M567.5 393.5L567.5 405.5M586.5 399.5L604.5 404.5M586.5 399.5L567.5 405.5M586.5 399.5L584.5 410.5M604.5 404.5L623.5 409.5M604.5 404.5L584.5 410.5M604.5 404.5L605.5 415.5M623.5 409.5L641.5 414.5M623.5 409.5L605.5 415.5M623.5 409.5L622.5 419.5M641.5 414.5L660.5 420.5M641.5 414.5L622.5 419.5M641.5 414.5L640.5 424.5M660.5 420.5L678.5 425.5M660.5 420.5L640.5 424.5M660.5 420.5L659.5 430.5M678.5 425.5L659.5 430.5M678.5 425.5L669.5 433.5M411.5 359.5L420.5 362.5M411.5 359.5L401.5 367.5M420.5 362.5L438.5 367.5M420.5 362.5L401.5 367.5M420.5 362.5L420.5 372.5M438.5 367.5L456.5 372.5M438.5 367.5L420.5 372.5M438.5 367.5L435.5 378.5M456.5 372.5L473.5 377.5M456.5 372.5L435.5 378.5M456.5 372.5L455.5 383.5M473.5 377.5L492.5 382.5M473.5 377.5L455.5 383.5M473.5 377.5L472.5 388.5M492.5 382.5L511.5 388.5M492.5 382.5L472.5 388.5M492.5 382.5L492.5 394.5M511.5 388.5L528.5 394.5M511.5 388.5L492.5 394.5M511.5 388.5L511.5 400.5M528.5 394.5L548.5 400.5M528.5 394.5L511.5 400.5M528.5 394.5L527.5 406.5M548.5 400.5L567.5 405.5M548.5 400.5L527.5 406.5M548.5 400.5L546.5 412.5M567.5 405.5L584.5 410.5M567.5 405.5L546.5 412.5M567.5 405.5L565.5 417.5M584.5 410.5L605.5 415.5M584.5 410.5L565.5 417.5M584.5 410.5L583.5 421.5M605.5 415.5L622.5 419.5M605.5 415.5L583.5 421.5M605.5 415.5L603.5 424.5M622.5 419.5L640.5 424.5M622.5 419.5L603.5 424.5M622.5 419.5L622.5 431.5M640.5 424.5L659.5 430.5M640.5 424.5L622.5 431.5M640.5 424.5L641.5 436.5M659.5 430.5L669.5 433.5M659.5 430.5L641.5 436.5M659.5 430.5L659.5 441.5M669.5 433.5L659.5 441.5M401.5 367.5L420.5 372.5M401.5 367.5L392.5 375.5M401.5 367.5L401.5 377.5M420.5 372.5L435.5 378.5M420.5 372.5L401.5 377.5M420.5 372.5L419.5 384.5M435.5 378.5L455.5 383.5M435.5 378.5L419.5 384.5M435.5 378.5L436.5 389.5M455.5 383.5L472.5 388.5M455.5 383.5L436.5 389.5M455.5 383.5L456.5 393.5M472.5 388.5L492.5 394.5M472.5 388.5L456.5 393.5M472.5 388.5L475.5 398.5M492.5 394.5L511.5 400.5M492.5 394.5L475.5 398.5M492.5 394.5L493.5 404.5M511.5 400.5L527.5 406.5M511.5 400.5L493.5 404.5M511.5 400.5L510.5 412.5M527.5 406.5L546.5 412.5M527.5 406.5L510.5 412.5M527.5 406.5L527.5 418.5M546.5 412.5L565.5 417.5M546.5 412.5L527.5 418.5M546.5 412.5L545.5 423.5M565.5 417.5L583.5 421.5M565.5 417.5L545.5 423.5M565.5 417.5L566.5 427.5M583.5 421.5L603.5 424.5M583.5 421.5L566.5 427.5M583.5 421.5L585.5 430.5M603.5 424.5L622.5 431.5M603.5 424.5L585.5 430.5M603.5 424.5L605.5 436.5M622.5 431.5L641.5 436.5M622.5 431.5L605.5 436.5M622.5 431.5L622.5 441.5M641.5 436.5L659.5 441.5M641.5 436.5L622.5 441.5M641.5 436.5L641.5 446.5M659.5 441.5L641.5 446.5M659.5 441.5L650.5 449.5M392.5 375.5L401.5 377.5M392.5 375.5L383.5 383.5M401.5 377.5L419.5 384.5M401.5 377.5L383.5 383.5M401.5 377.5L402.5 390.5M419.5 384.5L436.5 389.5M419.5 384.5L402.5 390.5M419.5 384.5L419.5 394.5M436.5 389.5L456.5 393.5M436.5 389.5L419.5 394.5M436.5 389.5L438.5 400.5M456.5 393.5L475.5 398.5M456.5 393.5L438.5 400.5M456.5 393.5L458.5 405.5M475.5 398.5L493.5 404.5M475.5 398.5L458.5 405.5M475.5 398.5L477.5 409.5M493.5 404.5L510.5 412.5M493.5 404.5L477.5 409.5M493.5 404.5L495.5 416.5M510.5 412.5L527.5 418.5M510.5 412.5L495.5 416.5M510.5 412.5L511.5 423.5M527.5 418.5L545.5 423.5M527.5 418.5L511.5 423.5M527.5 418.5L527.5 429.5M545.5 423.5L566.5 427.5M545.5 423.5L527.5 429.5M545.5 423.5L547.5 433.5M566.5 427.5L585.5 430.5M566.5 427.5L547.5 433.5M566.5 427.5L567.5 437.5M585.5 430.5L605.5 436.5M585.5 430.5L567.5 437.5M585.5 430.5L586.5 441.5M605.5 436.5L622.5 441.5M605.5 436.5L586.5 441.5M605.5 436.5L604.5 446.5M622.5 441.5L641.5 446.5M622.5 441.5L604.5 446.5M622.5 441.5L623.5 452.5M641.5 446.5L650.5 449.5M641.5 446.5L623.5 452.5M641.5 446.5L641.5 457.5M650.5 449.5L641.5 457.5M383.5 383.5L402.5 390.5M383.5 383.5L373.5 391.5M383.5 383.5L382.5 394.5M402.5 390.5L419.5 394.5M402.5 390.5L382.5 394.5M402.5 390.5L401.5 401.5M419.5 394.5L438.5 400.5M419.5 394.5L401.5 401.5M419.5 394.5L422.5 406.5M438.5 400.5L458.5 405.5M438.5 400.5L422.5 406.5M438.5 400.5L441.5 410.5M458.5 405.5L477.5 409.5M458.5 405.5L441.5 410.5M458.5 405.5L460.5 415.5M477.5 409.5L495.5 416.5M477.5 409.5L460.5 415.5M477.5 409.5L478.5 420.5M495.5 416.5L511.5 423.5M495.5 416.5L478.5 420.5M495.5 416.5L494.5 426.5M511.5 423.5L527.5 429.5M511.5 423.5L494.5 426.5M511.5 423.5L512.5 433.5M527.5 429.5L547.5 433.5M527.5 429.5L512.5 433.5M527.5 429.5L529.5 439.5M547.5 433.5L567.5 437.5M547.5 433.5L529.5 439.5M547.5 433.5L548.5 443.5M567.5 437.5L586.5 441.5M567.5 437.5L548.5 443.5M567.5 437.5L568.5 446.5M586.5 441.5L604.5 446.5M586.5 441.5L568.5 446.5M586.5 441.5L588.5 451.5M604.5 446.5L623.5 452.5M604.5 446.5L588.5 451.5M604.5 446.5L605.5 458.5M623.5 452.5L641.5 457.5M623.5 452.5L605.5 458.5M623.5 452.5L623.5 463.5M641.5 457.5L623.5 463.5M641.5 457.5L631.5 465.5M373.5 391.5L382.5 394.5M373.5 391.5L364.5 399.5M382.5 394.5L401.5 401.5M382.5 394.5L364.5 399.5M382.5 394.5L384.5 406.5M401.5 401.5L422.5 406.5M401.5 401.5L384.5 406.5M401.5 401.5L404.5 411.5M422.5 406.5L441.5 410.5M422.5 406.5L404.5 411.5M422.5 406.5L423.5 416.5M441.5 410.5L460.5 415.5M441.5 410.5L423.5 416.5M441.5 410.5L443.5 419.5M460.5 415.5L478.5 420.5M460.5 415.5L443.5 419.5M460.5 415.5L460.5 423.5M478.5 420.5L494.5 426.5M478.5 420.5L460.5 423.5M478.5 420.5L477.5 429.5M494.5 426.5L512.5 433.5M494.5 426.5L477.5 429.5M494.5 426.5L491.5 436.5M512.5 433.5L529.5 439.5M512.5 433.5L491.5 436.5M512.5 433.5L510.5 442.5M529.5 439.5L548.5 443.5M529.5 439.5L510.5 442.5M529.5 439.5L527.5 447.5M548.5 443.5L568.5 446.5M548.5 443.5L527.5 447.5M548.5 443.5L548.5 451.5M568.5 446.5L588.5 451.5M568.5 446.5L548.5 451.5M568.5 446.5L568.5 456.5M588.5 451.5L605.5 458.5M588.5 451.5L568.5 456.5M588.5 451.5L587.5 462.5M605.5 458.5L623.5 463.5M605.5 458.5L587.5 462.5M605.5 458.5L605.5 468.5M623.5 463.5L631.5 465.5M623.5 463.5L605.5 468.5M623.5 463.5L622.5 473.5M631.5 465.5L622.5 473.5M364.5 399.5L384.5 406.5M364.5 399.5L354.5 407.5M364.5 399.5L364.5 411.5M384.5 406.5L404.5 411.5M384.5 406.5L364.5 411.5M384.5 406.5L384.5 417.5M404.5 411.5L423.5 416.5M404.5 411.5L384.5 417.5M404.5 411.5L403.5 421.5M423.5 416.5L443.5 419.5M423.5 416.5L403.5 421.5M423.5 416.5L422.5 425.5M443.5 419.5L460.5 423.5M443.5 419.5L422.5 425.5M443.5 419.5L440.5 428.5M460.5 423.5L477.5 429.5M460.5 423.5L440.5 428.5M460.5 423.5L458.5 431.5M477.5 429.5L491.5 436.5M477.5 429.5L458.5 431.5M477.5 429.5L471.5 438.5M491.5 436.5L510.5 442.5M491.5 436.5L471.5 438.5M491.5 436.5L487.5 444.5M510.5 442.5L527.5 447.5M510.5 442.5L487.5 444.5M510.5 442.5L507.5 450.5M527.5 447.5L548.5 451.5M527.5 447.5L507.5 450.5M527.5 447.5L525.5 455.5M548.5 451.5L568.5 456.5M548.5 451.5L525.5 455.5M548.5 451.5L545.5 460.5M568.5 456.5L587.5 462.5M568.5 456.5L545.5 460.5M568.5 456.5L567.5 466.5M587.5 462.5L605.5 468.5M587.5 462.5L567.5 466.5M587.5 462.5L584.5 473.5M605.5 468.5L622.5 473.5M605.5 468.5L584.5 473.5M605.5 468.5L604.5 479.5M622.5 473.5L604.5 479.5M622.5 473.5L612.5 481.5M354.5 407.5L364.5 411.5M354.5 407.5L345.5 416.5M364.5 411.5L384.5 417.5M364.5 411.5L345.5 416.5M364.5 411.5L362.5 422.5M384.5 417.5L403.5 421.5M384.5 417.5L362.5 422.5M384.5 417.5L382.5 427.5M403.5 421.5L422.5 425.5M403.5 421.5L382.5 427.5M403.5 421.5L401.5 430.5M422.5 425.5L440.5 428.5M422.5 425.5L401.5 430.5M422.5 425.5L419.5 432.5M440.5 428.5L458.5 431.5M440.5 428.5L419.5 432.5M440.5 428.5L436.5 435.5M458.5 431.5L471.5 438.5M458.5 431.5L436.5 435.5M458.5 431.5L452.5 440.5M471.5 438.5L487.5 444.5M471.5 438.5L452.5 440.5M471.5 438.5L467.5 447.5M487.5 444.5L507.5 450.5M487.5 444.5L467.5 447.5M487.5 444.5L482.5 453.5M507.5 450.5L525.5 455.5M507.5 450.5L482.5 453.5M507.5 450.5L502.5 458.5M525.5 455.5L545.5 460.5M525.5 455.5L502.5 458.5M525.5 455.5L523.5 464.5M545.5 460.5L567.5 466.5M545.5 460.5L523.5 464.5M545.5 460.5L544.5 470.5M567.5 466.5L584.5 473.5M567.5 466.5L544.5 470.5M567.5 466.5L564.5 477.5M584.5 473.5L604.5 479.5M584.5 473.5L564.5 477.5M584.5 473.5L583.5 484.5M604.5 479.5L612.5 481.5M604.5 479.5L583.5 484.5M604.5 479.5L603.5 490.5M612.5 481.5L603.5 490.5M345.5 416.5L362.5 422.5M345.5 416.5L336.5 424.5M345.5 416.5L344.5 427.5M362.5 422.5L382.5 427.5M362.5 422.5L344.5 427.5M362.5 422.5L361.5 433.5M382.5 427.5L401.5 430.5M382.5 427.5L361.5 433.5M382.5 427.5L382.5 436.5M401.5 430.5L419.5 432.5M401.5 430.5L382.5 436.5M401.5 430.5L399.5 439.5M401.5 430.5L415.5 440.5M419.5 432.5L436.5 435.5M419.5 432.5L415.5 440.5M436.5 435.5L452.5 440.5M436.5 435.5L415.5 440.5M436.5 435.5L431.5 444.5M452.5 440.5L467.5 447.5M452.5 440.5L431.5 444.5M452.5 440.5L446.5 449.5M467.5 447.5L482.5 453.5M467.5 447.5L446.5 449.5M467.5 447.5L461.5 456.5M482.5 453.5L502.5 458.5M482.5 453.5L461.5 456.5M482.5 453.5L480.5 463.5M502.5 458.5L523.5 464.5M502.5 458.5L480.5 463.5M502.5 458.5L500.5 468.5M523.5 464.5L544.5 470.5M523.5 464.5L500.5 468.5M523.5 464.5L521.5 473.5M544.5 470.5L564.5 477.5M544.5 470.5L521.5 473.5M544.5 470.5L545.5 481.5M564.5 477.5L583.5 484.5M564.5 477.5L545.5 481.5M564.5 477.5L564.5 489.5M583.5 484.5L603.5 490.5M583.5 484.5L564.5 489.5M583.5 484.5L583.5 495.5M603.5 490.5L583.5 495.5M603.5 490.5L594.5 498.5M336.5 424.5L344.5 427.5M336.5 424.5L326.5 432.5M344.5 427.5L361.5 433.5M344.5 427.5L326.5 432.5M344.5 427.5L343.5 438.5M361.5 433.5L382.5 436.5M361.5 433.5L343.5 438.5M361.5 433.5L361.5 442.5M382.5 436.5L399.5 439.5M382.5 436.5L361.5 442.5M382.5 436.5L381.5 446.5M399.5 439.5L415.5 440.5M399.5 439.5L381.5 446.5M399.5 439.5L398.5 448.5M415.5 440.5L431.5 444.5M415.5 440.5L398.5 448.5M415.5 440.5L415.5 450.5M431.5 444.5L446.5 449.5M431.5 444.5L415.5 450.5M431.5 444.5L431.5 455.5M446.5 449.5L461.5 456.5M446.5 449.5L431.5 455.5M446.5 449.5L445.5 461.5M461.5 456.5L480.5 463.5M461.5 456.5L445.5 461.5M461.5 456.5L463.5 468.5M480.5 463.5L500.5 468.5M480.5 463.5L463.5 468.5M480.5 463.5L482.5 473.5M500.5 468.5L521.5 473.5M500.5 468.5L482.5 473.5M500.5 468.5L503.5 480.5M521.5 473.5L545.5 481.5M521.5 473.5L503.5 480.5M521.5 473.5L524.5 486.5M545.5 481.5L564.5 489.5M545.5 481.5L524.5 486.5M545.5 481.5L546.5 493.5M564.5 489.5L583.5 495.5M564.5 489.5L546.5 493.5M564.5 489.5L565.5 500.5M583.5 495.5L594.5 498.5M583.5 495.5L565.5 500.5M583.5 495.5L584.5 506.5M594.5 498.5L584.5 506.5M326.5 432.5L343.5 438.5M326.5 432.5L317.5 440.5M326.5 432.5L326.5 443.5M343.5 438.5L361.5 442.5M343.5 438.5L326.5 443.5M343.5 438.5L345.5 449.5M361.5 442.5L381.5 446.5M361.5 442.5L345.5 449.5M361.5 442.5L365.5 453.5M381.5 446.5L398.5 448.5M381.5 446.5L365.5 453.5M381.5 446.5L381.5 456.5M398.5 448.5L415.5 450.5M398.5 448.5L381.5 456.5M398.5 448.5L401.5 459.5M415.5 450.5L431.5 455.5M415.5 450.5L401.5 459.5M415.5 450.5L416.5 463.5M431.5 455.5L445.5 461.5M431.5 455.5L416.5 463.5M431.5 455.5L432.5 468.5M445.5 461.5L463.5 468.5M445.5 461.5L432.5 468.5M445.5 461.5L447.5 474.5M463.5 468.5L482.5 473.5M463.5 468.5L447.5 474.5M463.5 468.5L466.5 481.5M482.5 473.5L503.5 480.5M482.5 473.5L466.5 481.5M482.5 473.5L484.5 486.5M503.5 480.5L524.5 486.5M503.5 480.5L484.5 486.5M503.5 480.5L506.5 492.5M524.5 486.5L546.5 493.5M524.5 486.5L506.5 492.5M524.5 486.5L526.5 498.5M546.5 493.5L565.5 500.5M546.5 493.5L526.5 498.5M546.5 493.5L546.5 505.5M565.5 500.5L584.5 506.5M565.5 500.5L546.5 505.5M565.5 500.5L565.5 512.5M584.5 506.5L565.5 512.5M584.5 506.5L575.5 514.5M317.5 440.5L326.5 443.5M317.5 440.5L308.5 448.5M326.5 443.5L345.5 449.5M326.5 443.5L308.5 448.5M326.5 443.5L327.5 454.5M345.5 449.5L365.5 453.5M345.5 449.5L327.5 454.5M345.5 449.5L346.5 460.5M365.5 453.5L381.5 456.5M365.5 453.5L346.5 460.5M365.5 453.5L366.5 464.5M381.5 456.5L401.5 459.5M381.5 456.5L366.5 464.5M381.5 456.5L383.5 467.5M401.5 459.5L416.5 463.5M401.5 459.5L383.5 467.5M401.5 459.5L401.5 471.5M416.5 463.5L432.5 468.5M416.5 463.5L401.5 471.5M416.5 463.5L418.5 476.5M432.5 468.5L447.5 474.5M432.5 468.5L418.5 476.5M447.5 474.5L466.5 481.5M447.5 474.5L418.5 476.5M447.5 474.5L432.5 482.5M447.5 474.5L449.5 488.5M466.5 481.5L484.5 486.5M466.5 481.5L449.5 488.5M466.5 481.5L470.5 494.5M484.5 486.5L506.5 492.5M484.5 486.5L470.5 494.5M484.5 486.5L488.5 499.5M506.5 492.5L526.5 498.5M506.5 492.5L488.5 499.5M506.5 492.5L510.5 504.5M526.5 498.5L546.5 505.5M526.5 498.5L510.5 504.5M526.5 498.5L529.5 510.5M546.5 505.5L565.5 512.5M546.5 505.5L529.5 510.5M546.5 505.5L547.5 516.5M565.5 512.5L575.5 514.5M565.5 512.5L547.5 516.5M565.5 512.5L566.5 522.5M575.5 514.5L566.5 522.5M308.5 448.5L327.5 454.5M308.5 448.5L298.5 456.5M308.5 448.5L308.5 459.5M327.5 454.5L346.5 460.5M327.5 454.5L308.5 459.5M327.5 454.5L326.5 464.5M346.5 460.5L366.5 464.5M346.5 460.5L326.5 464.5M346.5 460.5L345.5 470.5M366.5 464.5L383.5 467.5M366.5 464.5L345.5 470.5M366.5 464.5L364.5 474.5M383.5 467.5L401.5 471.5M383.5 467.5L364.5 474.5M383.5 467.5L385.5 478.5M401.5 471.5L418.5 476.5M401.5 471.5L385.5 478.5M401.5 471.5L401.5 483.5M418.5 476.5L432.5 482.5M418.5 476.5L401.5 483.5M418.5 476.5L417.5 489.5M432.5 482.5L449.5 488.5M432.5 482.5L417.5 489.5M432.5 482.5L434.5 495.5M449.5 488.5L470.5 494.5M449.5 488.5L434.5 495.5M449.5 488.5L451.5 501.5M470.5 494.5L488.5 499.5M470.5 494.5L451.5 501.5M470.5 494.5L471.5 506.5M488.5 499.5L510.5 504.5M488.5 499.5L471.5 506.5M488.5 499.5L492.5 511.5M510.5 504.5L529.5 510.5M510.5 504.5L492.5 511.5M510.5 504.5L511.5 515.5M529.5 510.5L547.5 516.5M529.5 510.5L511.5 515.5M529.5 510.5L528.5 522.5M547.5 516.5L566.5 522.5M547.5 516.5L528.5 522.5M547.5 516.5L548.5 527.5M566.5 522.5L548.5 527.5M566.5 522.5L556.5 530.5M298.5 456.5L308.5 459.5M298.5 456.5L289.5 464.5M308.5 459.5L326.5 464.5M308.5 459.5L289.5 464.5M308.5 459.5L308.5 470.5M326.5 464.5L345.5 470.5M326.5 464.5L308.5 470.5M326.5 464.5L327.5 476.5M345.5 470.5L364.5 474.5M345.5 470.5L327.5 476.5M345.5 470.5L346.5 481.5M364.5 474.5L385.5 478.5M364.5 474.5L346.5 481.5M364.5 474.5L364.5 484.5M385.5 478.5L401.5 483.5M385.5 478.5L364.5 484.5M385.5 478.5L383.5 489.5M401.5 483.5L417.5 489.5M401.5 483.5L383.5 489.5M401.5 483.5L399.5 496.5M417.5 489.5L434.5 495.5M417.5 489.5L399.5 496.5M417.5 489.5L417.5 501.5M434.5 495.5L451.5 501.5M434.5 495.5L417.5 501.5M434.5 495.5L436.5 507.5M451.5 501.5L471.5 506.5M451.5 501.5L436.5 507.5M451.5 501.5L454.5 513.5M471.5 506.5L492.5 511.5M471.5 506.5L454.5 513.5M471.5 506.5L473.5 516.5M492.5 511.5L511.5 515.5M492.5 511.5L473.5 516.5M492.5 511.5L491.5 522.5M511.5 515.5L528.5 522.5M511.5 515.5L491.5 522.5M511.5 515.5L510.5 526.5M528.5 522.5L548.5 527.5M528.5 522.5L510.5 526.5M528.5 522.5L529.5 533.5M548.5 527.5L556.5 530.5M548.5 527.5L529.5 533.5M548.5 527.5L547.5 538.5M556.5 530.5L547.5 538.5M289.5 464.5L308.5 470.5M289.5 464.5L279.5 472.5M289.5 464.5L289.5 475.5M308.5 470.5L327.5 476.5M308.5 470.5L289.5 475.5M308.5 470.5L307.5 479.5M327.5 476.5L346.5 481.5M327.5 476.5L307.5 479.5M327.5 476.5L326.5 485.5M346.5 481.5L364.5 484.5M346.5 481.5L326.5 485.5M346.5 481.5L344.5 491.5M364.5 484.5L383.5 489.5M364.5 484.5L344.5 491.5M364.5 484.5L363.5 496.5M383.5 489.5L399.5 496.5M383.5 489.5L363.5 496.5M383.5 489.5L380.5 500.5M399.5 496.5L417.5 501.5M399.5 496.5L380.5 500.5M399.5 496.5L400.5 506.5M417.5 501.5L436.5 507.5M417.5 501.5L400.5 506.5M417.5 501.5L417.5 512.5M436.5 507.5L454.5 513.5M436.5 507.5L417.5 512.5M436.5 507.5L436.5 517.5M454.5 513.5L473.5 516.5M454.5 513.5L436.5 517.5M454.5 513.5L453.5 522.5M473.5 516.5L491.5 522.5M473.5 516.5L453.5 522.5M473.5 516.5L473.5 528.5M491.5 522.5L510.5 526.5M491.5 522.5L473.5 528.5M491.5 522.5L492.5 533.5M510.5 526.5L529.5 533.5M510.5 526.5L492.5 533.5M510.5 526.5L509.5 538.5M529.5 533.5L547.5 538.5M529.5 533.5L509.5 538.5M529.5 533.5L530.5 543.5M547.5 538.5L530.5 543.5M547.5 538.5L537.5 546.5M279.5 472.5L289.5 475.5M279.5 472.5L270.5 480.5M289.5 475.5L307.5 479.5M289.5 475.5L270.5 480.5M289.5 475.5L288.5 485.5M307.5 479.5L326.5 485.5M307.5 479.5L288.5 485.5M307.5 479.5L307.5 491.5M326.5 485.5L344.5 491.5M326.5 485.5L307.5 491.5M326.5 485.5L325.5 496.5M344.5 491.5L363.5 496.5M344.5 491.5L325.5 496.5M344.5 491.5L344.5 501.5M363.5 496.5L380.5 500.5M363.5 496.5L344.5 501.5M363.5 496.5L362.5 506.5M380.5 500.5L400.5 506.5M380.5 500.5L362.5 506.5M380.5 500.5L381.5 512.5M400.5 506.5L417.5 512.5M400.5 506.5L381.5 512.5M400.5 506.5L399.5 517.5M417.5 512.5L436.5 517.5M417.5 512.5L399.5 517.5M417.5 512.5L417.5 522.5M436.5 517.5L453.5 522.5M436.5 517.5L417.5 522.5M436.5 517.5L436.5 528.5M453.5 522.5L473.5 528.5M453.5 522.5L436.5 528.5M453.5 522.5L454.5 533.5M473.5 528.5L492.5 533.5M473.5 528.5L454.5 533.5M473.5 528.5L473.5 538.5M492.5 533.5L509.5 538.5M492.5 533.5L473.5 538.5M492.5 533.5L491.5 543.5M509.5 538.5L530.5 543.5M509.5 538.5L491.5 543.5M509.5 538.5L510.5 549.5M530.5 543.5L537.5 546.5M530.5 543.5L510.5 549.5M530.5 543.5L528.5 554.5M537.5 546.5L528.5 554.5M270.5 480.5L288.5 485.5M288.5 485.5L307.5 491.5M307.5 491.5L325.5 496.5M325.5 496.5L344.5 501.5M344.5 501.5L362.5 506.5M362.5 506.5L381.5 512.5M381.5 512.5L399.5 517.5M399.5 517.5L417.5 522.5M417.5 522.5L436.5 528.5M436.5 528.5L454.5 533.5M454.5 533.5L473.5 538.5M473.5 538.5L491.5 543.5M491.5 543.5L510.5 549.5M510.5 549.5L528.5 554.5" fill="none" stroke="#1070d0" stroke-width="1" shape-rendering="crispEdges"/>
<g fill-opacity="0.375" shape-rendering="crispEdges">
<path d="M453 399.5L443 408L443 391.5L453 383Z" fill="#4773eb"/>
<path d="M453 383L443 391.5L443 375L453 366Z" fill="#4773eb"/>
<path d="M453 366L443 375L443 358L453 349.5Z" fill="#4773eb"/>
<path d="M453 349.5L443 358L443 341.5L453 333Z" fill="#4773eb"/>
<path d="M453 333L443 341.5L443 325L453 316Z" fill="#4773eb"/>
<path d="M453 316L443 325L443 308L453 299.5Z" fill="#4664da"/>
<path d="M453 299.5L443 308L443 291.5L453 283Z" fill="#4146ac"/>
<path d="M453 283L443 291.5L443 275L453 266Z" fill="#392a73"/>
<path d="M453 266L443 275L443 258L453 249.5Z" fill="#321543"/>
<path d="M453 249.5L443 258L443 241.5L453 233Z" fill="#30123b"/>
<path d="M453 233L443 241.5L443 225L453 216.5Z" fill="#30123b"/>
<path d="M453 216.5L443 225L443 208L453 199.5Z" fill="#30123b"/>
<path d="M453 199.5L443 208L443 191.5L453 183Z" fill="#30123b"/>
<path d="M453 183L443 191.5L443 175L453 166.5Z" fill="#30123b"/>
<path d="M443 408L433 416.5L433 400L443 391.5Z" fill="#455ccf"/>
<path d="M443 391.5L433 400L433 383.5L443 375Z" fill="#455ccf"/>
<path d="M443 375L433 383.5L433 366.5L443 358Z" fill="#455ccf"/>
<path d="M443 358L433 366.5L433 350L443 341.5Z" fill="#455ccf"/>
<path d="M443 341.5L433 350L433 333.5L443 325Z" fill="#455ccf"/>
<path d="M443 325L433 333.5L433 317L443 308Z" fill="#455ccf"/>
<path d="M443 308L433 317L433 300L443 291.5Z" fill="#3f3e9c"/>
<path d="M443 291.5L433 300L433 283.5L443 275Z" fill="#36215f"/>
<path d="M443 275L433 283.5L433 267L443 258Z" fill="#30123b"/>
<path d="M443 258L433 267L433 250L443 241.5Z" fill="#30123b"/>
<path d="M443 241.5L433 250L433 233.5L443 225Z" fill="#30123b"/>
<path d="M443 225L433 233.5L433 217L443 208Z" fill="#30123b"/>
<path d="M443 208L433 217L433 200L443 191.5Z" fill="#30123b"/>
<path d="M443 191.5L433 200L433 183.5L443 175Z" fill="#30123b"/>
<path d="M433 416.5L423 425L423 408.5L433 400Z" fill="#4143a7"/>
<path d="M433 400L423 408.5L423 392L433 383.5Z" fill="#4143a7"/>
<path d="M433 383.5L423 392L423 375.5L433 366.5Z" fill="#4143a7"/>
<path d="M433 366.5L423 375.5L423 358.5L433 350Z" fill="#4143a7"/>
<path d="M433 350L423 358.5L423 342L433 333.5Z" fill="#4143a7"/>
<path d="M433 333.5L423 342L423 325.5L433 317Z" fill="#4143a7"/>
<path d="M433 317L423 325.5L423 308.5L433 300Z" fill="#3d358b"/>
<path d="M433 300L423 308.5L423 292L433 283.5Z" fill="#351e58"/>
<path d="M433 283.5L423 292L423 275.5L433 267Z" fill="#30123b"/>
<path d="M433 267L423 275.5L423 259L433 250Z" fill="#30123b"/>
<path d="M433 250L423 259L423 242L433 233.5Z" fill="#30123b"/>
<path d="M433 233.5L423 242L423 225.5L433 217Z" fill="#30123b"/>
<path d="M433 217L423 225.5L423 209L433 200Z" fill="#30123b"/>
<path d="M433 200L423 209L423 192L433 183.5Z" fill="#30123b"/>
<path d="M423 425L413 434L413 417L423 408.5Z" fill="#3a2d79"/>
<path d="M423 408.5L413 417L413 400.5L423 392Z" fill="#3a2d79"/>
<path d="M423 392L413 400.5L413 384L423 375.5Z" fill="#3a2d79"/>
<path d="M423 375.5L413 384L413 367L423 358.5Z" fill="#3a2d79"/>
<path d="M423 358.5L413 367L413 350.5L423 342Z" fill="#3a2d79"/>
<path d="M423 342L413 350.5L413 334L423 325.5Z" fill="#3a2d79"/>
<path d="M423 325.5L413 334L413 317.5L423 308.5Z" fill="#3a2d79"/>
<path d="M423 308.5L413 317.5L413 300.5L423 292Z" fill="#33184a"/>
<path d="M423 292L413 300.5L413 284L423 275.5Z" fill="#30123b"/>
<path d="M423 275.5L413 284L413 267.5L423 259Z" fill="#30123b"/>
<path d="M423 259L413 267.5L413 250.5L423 242Z" fill="#30123b"/>
<path d="M423 242L413 250.5L413 234L423 225.5Z" fill="#30123b"/>
<path d="M423 225.5L413 234L413 217.5L423 209Z" fill="#30123b"/>
<path d="M423 209L413 217.5L413 200.5L423 192Z" fill="#30123b"/>
<path d="M413 434L403 442.5L403 426L413 417Z" fill="#341b51"/>
<path d="M413 417L403 426L403 409L413 400.5Z" fill="#341b51"/>
<path d="M413 400.5L403 409L403 392.5L413 384Z" fill="#341b51"/>
<path d="M413 384L403 392.5L403 376L413 367Z" fill="#341b51"/>
<path d="M413 367L403 376L403 359L413 350.5Z" fill="#341b51"/>
<path d="M413 350.5L403 359L403 342.5L413 334Z" fill="#341b51"/>
<path d="M413 334L403 342.5L403 326L413 317.5Z" fill="#341b51"/>
<path d="M413 317.5L403 326L403 309L413 300.5Z" fill="#321543"/>
<path d="M413 300.5L403 309L403 292.5L413 284Z" fill="#30123b"/>
<path d="M413 284L403 292.5L403 276L413 267.5Z" fill="#30123b"/>
<path d="M413 267.5L403 276L403 259.5L413 250.5Z" fill="#30123b"/>
<path d="M413 250.5L403 259.5L403 242.5L413 234Z" fill="#30123b"/>
<path d="M413 234L403 242.5L403 226L413 217.5Z" fill="#30123b"/>
<path d="M413 217.5L403 226L403 209.5L413 200.5Z" fill="#30123b"/>
<path d="M403 442.5L393 451L393 434.5L403 426Z" fill="#30123b"/>
<path d="M403 426L393 434.5L393 418L403 409Z" fill="#30123b"/>
<path d="M403 409L393 418L393 401L403 392.5Z" fill="#30123b"/>
<path d="M403 392.5L393 401L393 384.5L403 376Z" fill="#30123b"/>
<path d="M403 376L393 384.5L393 368L403 359Z" fill="#30123b"/>
<path d="M403 359L393 368L393 351L403 342.5Z" fill="#30123b"/>
<path d="M403 342.5L393 351L393 334.5L403 326Z" fill="#30123b"/>
<path d="M403 326L393 334.5L393 318L403 309Z" fill="#30123b"/>
<path d="M403 309L393 318L393 301L403 292.5Z" fill="#30123b"/>
<path d="M403 292.5L393 301L393 284.5L403 276Z" fill="#30123b"/>
<path d="M403 276L393 284.5L393 268L403 259.5Z" fill="#30123b"/>
<path d="M403 259.5L393 268L393 251L403 242.5Z" fill="#30123b"/>
<path d="M403 242.5L393 251L393 234.5L403 226Z" fill="#30123b"/>
<path d="M403 226L393 234.5L393 218L403 209.5Z" fill="#30123b"/>
<path d="M453 399.5L470 404.5L470 387.5L453 383Z" fill="#458cfd"/>
<path d="M453 383L470 387.5L470 371L453 366Z" fill="#458cfd"/>
<path d="M453 366L470 371L470 354.5L453 349.5Z" fill="#458cfd"/>
<path d="M453 349.5L470 354.5L470 338L453 333Z" fill="#458cfd"/>
<path d="M453 333L470 338L470 321L453 316Z" fill="#458cfd"/>
<path d="M453 316L470 321L470 304.5L453 299.5Z" fill="#4680f6"/>
<path d="M453 299.5L470 304.5L470 288L453 283Z" fill="#4664da"/>
<path d="M453 283L470 288L470 271L453 266Z" fill="#4143a7"/>
<path d="M453 266L470 271L470 254.5L453 249.5Z" fill="#38276d"/>
<path d="M453 249.5L470 254.5L470 238L453 233Z" fill="#321543"/>
<path d="M453 233L470 238L470 221L453 216.5Z" fill="#30123b"/>
<path d="M453 216.5L470 221L470 204.5L453 199.5Z" fill="#30123b"/>
<path d="M453 199.5L470 204.5L470 188L453 183Z" fill="#30123b"/>
<path d="M453 183L470 188L470 171.5L453 166.5Z" fill="#30123b"/>
<path d="M470 404.5L487.5 409.5L487.5 392.5L470 387.5Z" fill="#3e9bfe"/>
<path d="M470 387.5L487.5 392.5L487.5 376L470 371Z" fill="#3e9bfe"/>
<path d="M470 371L487.5 376L487.5 359.5L470 354.5Z" fill="#3e9bfe"/>
<path d="M470 354.5L487.5 359.5L487.5 342.5L470 338Z" fill="#3e9bfe"/>
<path d="M470 338L487.5 342.5L487.5 326L470 321Z" fill="#3e9bfe"/>
<path d="M470 321L487.5 326L487.5 309.5L470 304.5Z" fill="#3e9bfe"/>
<path d="M470 304.5L487.5 309.5L487.5 293L470 288Z" fill="#448ffe"/>
<path d="M470 288L487.5 293L487.5 276L470 271Z" fill="#4776ee"/>
<path d="M470 271L487.5 276L487.5 259.5L470 254.5Z" fill="#4559cb"/>
<path d="M470 254.5L487.5 259.5L487.5 243L470 238Z" fill="#3e3891"/>
<path d="M470 238L487.5 243L487.5 226L470 221Z" fill="#351e58"/>
<path d="M470 221L487.5 226L487.5 209.5L470 204.5Z" fill="#30123b"/>
<path d="M470 204.5L487.5 209.5L487.5 193L470 188Z" fill="#30123b"/>
<path d="M470 188L487.5 193L487.5 176L470 171.5Z" fill="#30123b"/>
<path d="M487.5 409.5L504.5 414L504.5 397.5L487.5 392.5Z" fill="#3e9bfe"/>
<path d="M487.5 392.5L504.5 397.5L504.5 381L487.5 376Z" fill="#3e9bfe"/>
<path d="M487.5 376L504.5 381L504.5 364.5L487.5 359.5Z" fill="#3e9bfe"/>
<path d="M487.5 359.5L504.5 364.5L504.5 347.5L487.5 342.5Z" fill="#3d9efe"/>
<path d="M487.5 342.5L504.5 347.5L504.5 331L487.5 326Z" fill="#3d9efe"/>
<path d="M487.5 326L504.5 331L504.5 314.5L487.5 309.5Z" fill="#3d9efe"/>
<path d="M487.5 309.5L504.5 314.5L504.5 297.5L487.5 293Z" fill="#3ba0fd"/>
<path d="M487.5 293L504.5 297.5L504.5 281L487.5 276Z" fill="#3e9bfe"/>
<path d="M487.5 276L504.5 281L504.5 264.5L487.5 259.5Z" fill="#458afc"/>
<path d="M487.5 259.5L504.5 264.5L504.5 248L487.5 243Z" fill="#476ee6"/>
<path d="M487.5 243L504.5 248L504.5 231L487.5 226Z" fill="#434eba"/>
<path d="M487.5 226L504.5 231L504.5 214.5L487.5 209.5Z" fill="#3b2f80"/>
<path d="M487.5 209.5L504.5 214.5L504.5 198L487.5 193Z" fill="#33184a"/>
<path d="M487.5 193L504.5 198L504.5 181L487.5 176Z" fill="#30123b"/>
<path d="M504.5 414L521.5 419L521.5 402.5L504.5 397.5Z" fill="#3e9bfe"/>
<path d="M504.5 397.5L521.5 402.5L521.5 386L504.5 381Z" fill="#3e9bfe"/>
<path d="M504.5 381L521.5 386L521.5 369L504.5 364.5Z" fill="#3d9efe"/>
<path d="M504.5 364.5L521.5 369L521.5 352.5L504.5 347.5Z" fill="#3d9efe"/>
<path d="M504.5 347.5L521.5 352.5L521.5 336L504.5 331Z" fill="#3aa3fc"/>
<path d="M504.5 331L521.5 336L521.5 319.5L504.5 314.5Z" fill="#35abf8"/>
<path d="M504.5 314.5L521.5 319.5L521.5 302.5L504.5 297.5Z" fill="#2fb2f4"/>
<path d="M504.5 297.5L521.5 302.5L521.5 286L504.5 281Z" fill="#2cb7f0"/>
<path d="M504.5 281L521.5 286L521.5 269.5L504.5 264.5Z" fill="#2fb2f4"/>
<path d="M504.5 264.5L521.5 269.5L521.5 252.5L504.5 248Z" fill="#3ba0fd"/>
<path d="M504.5 248L521.5 252.5L521.5 236L504.5 231Z" fill="#4682f8"/>
<path d="M504.5 231L521.5 236L521.5 219.5L504.5 214.5Z" fill="#4664da"/>
<path d="M504.5 214.5L521.5 219.5L521.5 202.5L504.5 198Z" fill="#4040a2"/>
<path d="M504.5 198L521.5 202.5L521.5 186L504.5 181Z" fill="#372466"/>
<path d="M521.5 419L539 424L539 407.5L521.5 402.5Z" fill="#3e9bfe"/>
<path d="M521.5 402.5L539 407.5L539 391L521.5 386Z" fill="#3e9bfe"/>
<path d="M521.5 386L539 391L539 374L521.5 369Z" fill="#3d9efe"/>
<path d="M521.5 369L539 374L539 357.5L521.5 352.5Z" fill="#3ba0fd"/>
<path d="M521.5 352.5L539 357.5L539 341L521.5 336Z" fill="#35abf8"/>
<path d="M521.5 336L539 341L539 324L521.5 319.5Z" fill="#28bceb"/>
<path d="M521.5 319.5L539 324L539 307.5L521.5 302.5Z" fill="#1bd0d5"/>
<path d="M521.5 302.5L539 307.5L539 291L521.5 286Z" fill="#18dbc5"/>
<path d="M521.5 286L539 291L539 274.5L521.5 269.5Z" fill="#18d9c8"/>
<path d="M521.5 269.5L539 274.5L539 257.5L521.5 252.5Z" fill="#1ecbda"/>
<path d="M521.5 252.5L539 257.5L539 241L521.5 236Z" fill="#2eb4f2"/>
<path d="M521.5 236L539 241L539 224.5L521.5 219.5Z" fill="#4196ff"/>
<path d="M521.5 219.5L539 224.5L539 207.5L521.5 202.5Z" fill="#4776ee"/>
<path d="M521.5 202.5L539 207.5L539 191L521.5 186Z" fill="#4456c7"/>
<path d="M539 424L556 429L556 412.5L539 407.5Z" fill="#3e9bfe"/>
<path d="M539 407.5L556 412.5L556 396L539 391Z" fill="#3e9bfe"/>
<path d="M539 391L556 396L556 379L539 374Z" fill="#3d9efe"/>
<path d="M539 374L556 379L556 362.5L539 357.5Z" fill="#3ba0fd"/>
<path d="M539 357.5L556 362.5L556 346L539 341Z" fill="#35abf8"/>
<path d="M539 341L556 346L556 329L539 324Z" fill="#27bee9"/>
<path d="M539 324L556 329L556 312.5L539 307.5Z" fill="#19d5cd"/>
<path d="M539 307.5L556 312.5L556 296L539 291Z" fill="#1ae4b6"/>
<path d="M539 291L556 296L556 279L539 274.5Z" fill="#1de7b2"/>
<path d="M539 274.5L556 279L556 262.5L539 257.5Z" fill="#18ddc2"/>
<path d="M539 257.5L556 262.5L556 246L539 241Z" fill="#20c7df"/>
<path d="M539 241L556 246L556 229L539 224.5Z" fill="#31aff5"/>
<path d="M539 224.5L556 229L556 212.5L539 207.5Z" fill="#3d9efe"/>
<path d="M539 207.5L556 212.5L556 196L539 191Z" fill="#4685fa"/>
<path d="M453 399.5L470 404.5L460 413L443 408Z" fill="#4685fa"/>
<path d="M443 408L460 413L450 421.5L433 416.5Z" fill="#476ee6"/>
<path d="M433 416.5L450 421.5L440 430L423 425Z" fill="#4456c7"/>
<path d="M423 425L440 430L430 439L413 434Z" fill="#4040a2"/>
<path d="M413 434L430 439L420 447.5L403 442.5Z" fill="#392a73"/>
<path d="M403 442.5L420 447.5L410 456L393 451Z" fill="#33184a"/>
<path d="M470 404.5L487.5 409.5L477.5 418L460 413Z" fill="#4099ff"/>
<path d="M460 413L477.5 418L467.5 426.5L450 421.5Z" fill="#448ffe"/>
<path d="M450 421.5L467.5 426.5L457.5 435L440 430Z" fill="#467df4"/>
<path d="M440 430L457.5 435L447.5 443.5L430 439Z" fill="#4669e0"/>
<path d="M430 439L447.5 443.5L437.5 452.5L420 447.5Z" fill="#4451bf"/>
<path d="M420 447.5L437.5 452.5L427.5 461L410 456Z" fill="#3e3891"/>
<path d="M487.5 409.5L504.5 414L494.5 423L477.5 418Z" fill="#3e9bfe"/>
<path d="M477.5 418L494.5 423L484.5 431.5L467.5 426.5Z" fill="#3e9bfe"/>
<path d="M467.5 426.5L484.5 431.5L474.5 440L457.5 435Z" fill="#4099ff"/>
<path d="M457.5 435L474.5 440L464.5 448.5L447.5 443.5Z" fill="#458cfd"/>
<path d="M447.5 443.5L464.5 448.5L454.5 457L437.5 452.5Z" fill="#4778f0"/>
<path d="M437.5 452.5L454.5 457L444.5 466L427.5 461Z" fill="#4661d6"/>
<path d="M504.5 414L521.5 419L511.5 428L494.5 423Z" fill="#3e9bfe"/>
<path d="M494.5 423L511.5 428L501.5 436.5L484.5 431.5Z" fill="#3e9bfe"/>
<path d="M484.5 431.5L501.5 436.5L491.5 445L474.5 440Z" fill="#3e9bfe"/>
<path d="M474.5 440L491.5 445L481.5 453.5L464.5 448.5Z" fill="#3e9bfe"/>
<path d="M464.5 448.5L481.5 453.5L471.5 462L454.5 457Z" fill="#4196ff"/>
<path d="M454.5 457L471.5 462L461.5 471L444.5 466Z" fill="#4687fb"/>
<path d="M521.5 419L539 424L529 432.5L511.5 428Z" fill="#3e9bfe"/>
<path d="M511.5 428L529 432.5L519 441.5L501.5 436.5Z" fill="#3e9bfe"/>
<path d="M501.5 436.5L519 441.5L509 450L491.5 445Z" fill="#3e9bfe"/>
<path d="M491.5 445L509 450L499 458.5L481.5 453.5Z" fill="#3e9bfe"/>
<path d="M481.5 453.5L499 458.5L489 467L471.5 462Z" fill="#3e9bfe"/>
<path d="M471.5 462L489 467L479 475.5L461.5 471Z" fill="#3e9bfe"/>
<path d="M539 424L556 429L546 437.5L529 432.5Z" fill="#3e9bfe"/>
<path d="M529 432.5L546 437.5L536 446L519 441.5Z" fill="#3e9bfe"/>
<path d="M519 441.5L536 446L526 455L509 450Z" fill="#3e9bfe"/>
<path d="M509 450L526 455L516 463.5L499 458.5Z" fill="#3e9bfe"/>
<path d="M499 458.5L516 463.5L506 472L489 467Z" fill="#3e9bfe"/>
<path d="M489 467L506 472L496 480.5L479 475.5Z" fill="#3e9bfe"/>
</g>
<path d="M452.5 399.5L452.5 384.5M452.5 399.5L445.5 405.5M452.5 399.5L445.5 398.5M452.5 384.5L452.5 370.5M452.5 384.5L445.5 398.5M452.5 384.5L444.5 384.5M452.5 370.5L452.5 355.5M452.5 370.5L444.5 384.5M452.5 370.5L444.5 371.5M452.5 355.5L452.5 341.5M452.5 355.5L444.5 371.5M452.5 355.5L444.5 355.5M452.5 341.5L452.5 326.5M452.5 341.5L444.5 355.5M452.5 341.5L444.5 341.5M452.5 326.5L452.5 312.5M452.5 326.5L444.5 341.5M452.5 326.5L444.5 327.5M452.5 312.5L452.5 297.5M452.5 312.5L444.5 327.5M452.5 312.5L445.5 313.5M452.5 297.5L452.5 282.5M452.5 297.5L445.5 313.5M452.5 297.5L446.5 297.5M452.5 282.5L452.5 268.5M452.5 282.5L446.5 297.5M452.5 282.5L446.5 282.5M452.5 268.5L452.5 253.5M452.5 268.5L446.5 282.5M452.5 268.5L447.5 267.5M452.5 253.5L452.5 239.5M452.5 253.5L447.5 267.5M452.5 253.5L447.5 252.5M452.5 239.5L452.5 224.5M452.5 239.5L447.5 252.5M452.5 239.5L447.5 237.5M452.5 224.5L452.5 210.5M452.5 224.5L447.5 237.5M452.5 224.5L446.5 224.5M452.5 210.5L452.5 195.5M452.5 210.5L446.5 224.5M452.5 210.5L445.5 208.5M452.5 195.5L452.5 180.5M452.5 195.5L445.5 208.5M452.5 195.5L445.5 195.5M452.5 180.5L452.5 166.5M452.5 180.5L445.5 195.5M452.5 180.5L445.5 181.5M452.5 166.5L445.5 181.5M452.5 166.5L445.5 172.5M445.5 405.5L445.5 398.5M445.5 405.5L437.5 412.5M445.5 398.5L444.5 384.5M445.5 398.5L437.5 412.5M445.5 398.5L437.5 398.5M444.5 384.5L444.5 371.5M444.5 384.5L437.5 398.5M444.5 384.5L436.5 384.5M444.5 371.5L444.5 355.5M444.5 371.5L436.5 384.5M444.5 371.5L436.5 370.5M444.5 355.5L444.5 341.5M444.5 355.5L436.5 370.5M444.5 355.5L436.5 357.5M444.5 341.5L444.5 327.5M444.5 341.5L436.5 357.5M444.5 341.5L436.5 345.5M444.5 327.5L445.5 313.5M444.5 327.5L436.5 345.5M444.5 327.5L437.5 331.5M445.5 313.5L446.5 297.5M445.5 313.5L437.5 331.5M445.5 313.5L439.5 315.5M446.5 297.5L446.5 282.5M446.5 297.5L439.5 315.5M446.5 297.5L440.5 300.5M446.5 282.5L447.5 267.5M446.5 282.5L440.5 300.5M446.5 282.5L441.5 284.5M447.5 267.5L447.5 252.5M447.5 267.5L441.5 284.5M447.5 267.5L441.5 268.5M447.5 252.5L447.5 237.5M447.5 252.5L441.5 268.5M447.5 252.5L441.5 252.5M447.5 237.5L446.5 224.5M447.5 237.5L441.5 252.5M447.5 237.5L440.5 236.5M446.5 224.5L445.5 208.5M446.5 224.5L440.5 236.5M446.5 224.5L439.5 222.5M445.5 208.5L445.5 195.5M445.5 208.5L439.5 222.5M445.5 208.5L438.5 208.5M445.5 195.5L445.5 181.5M445.5 195.5L438.5 208.5M445.5 195.5L437.5 193.5M445.5 181.5L445.5 172.5M445.5 181.5L437.5 193.5M445.5 181.5L437.5 179.5M445.5 172.5L437.5 179.5M437.5 412.5L437.5 398.5M437.5 412.5L430.5 418.5M437.5 412.5L430.5 411.5M437.5 398.5L436.5 384.5M437.5 398.5L430.5 411.5M437.5 398.5L429.5 396.5M436.5 384.5L436.5 370.5M436.5 384.5L429.5 396.5M436.5 384.5L428.5 383.5M436.5 370.5L436.5 357.5M436.5 370.5L428.5 383.5M436.5 370.5L428.5 369.5M436.5 357.5L436.5 345.5M436.5 357.5L428.5 369.5M436.5 357.5L428.5 358.5M436.5 345.5L437.5 331.5M436.5 345.5L428.5 358.5M436.5 345.5L429.5 346.5M437.5 331.5L439.5 315.5M437.5 331.5L429.5 346.5M437.5 331.5L430.5 332.5M439.5 315.5L440.5 300.5M439.5 315.5L430.5 332.5M439.5 315.5L432.5 317.5M440.5 300.5L441.5 284.5M440.5 300.5L432.5 317.5M440.5 300.5L433.5 301.5M441.5 284.5L441.5 268.5M441.5 284.5L433.5 301.5M441.5 284.5L433.5 284.5M441.5 268.5L441.5 252.5M441.5 268.5L433.5 284.5M441.5 268.5L433.5 267.5M441.5 252.5L440.5 236.5M441.5 252.5L433.5 267.5M441.5 252.5L433.5 251.5M440.5 236.5L439.5 222.5M440.5 236.5L433.5 251.5M440.5 236.5L432.5 234.5M439.5 222.5L438.5 208.5M439.5 222.5L432.5 234.5M439.5 222.5L431.5 219.5M438.5 208.5L437.5 193.5M438.5 208.5L431.5 219.5M438.5 208.5L430.5 206.5M437.5 193.5L437.5 179.5M437.5 193.5L430.5 206.5M437.5 193.5L429.5 192.5M437.5 179.5L429.5 192.5M437.5 179.5L430.5 185.5M430.5 418.5L430.5 411.5M430.5 418.5L422.5 425.5M430.5 411.5L429.5 396.5M430.5 411.5L422.5 425.5M430.5 411.5L422.5 408.5M429.5 396.5L428.5 383.5M429.5 396.5L422.5 408.5M429.5 396.5L422.5 393.5M428.5 383.5L428.5 369.5M428.5 383.5L422.5 393.5M428.5 383.5L422.5 379.5M428.5 369.5L428.5 358.5M428.5 369.5L422.5 379.5M428.5 369.5L421.5 367.5M428.5 358.5L429.5 346.5M428.5 358.5L421.5 367.5M428.5 358.5L421.5 353.5M429.5 346.5L430.5 332.5M429.5 346.5L421.5 353.5M429.5 346.5L422.5 341.5M430.5 332.5L432.5 317.5M430.5 332.5L422.5 341.5M430.5 332.5L422.5 328.5M432.5 317.5L433.5 301.5M432.5 317.5L422.5 328.5M432.5 317.5L423.5 312.5M433.5 301.5L433.5 284.5M433.5 301.5L423.5 312.5M433.5 301.5L423.5 297.5M433.5 284.5L433.5 267.5M433.5 284.5L423.5 297.5M433.5 284.5L424.5 280.5M433.5 267.5L433.5 251.5M433.5 267.5L424.5 280.5M433.5 267.5L423.5 263.5M433.5 251.5L432.5 234.5M433.5 251.5L423.5 263.5M433.5 251.5L424.5 247.5M432.5 234.5L431.5 219.5M432.5 234.5L424.5 247.5M432.5 234.5L423.5 231.5M431.5 219.5L430.5 206.5M431.5 219.5L423.5 231.5M431.5 219.5L422.5 217.5M430.5 206.5L429.5 192.5M430.5 206.5L422.5 217.5M430.5 206.5L422.5 204.5M429.5 192.5L430.5 185.5M429.5 192.5L422.5 204.5M429.5 192.5L422.5 192.5M430.5 185.5L422.5 192.5M422.5 425.5L422.5 408.5M422.5 425.5L415.5 431.5M422.5 425.5L415.5 422.5M422.5 408.5L422.5 393.5M422.5 408.5L415.5 422.5M422.5 408.5L415.5 407.5M422.5 393.5L422.5 379.5M422.5 393.5L415.5 407.5M422.5 393.5L415.5 392.5M422.5 379.5L421.5 367.5M422.5 379.5L415.5 392.5M422.5 379.5L415.5 377.5M421.5 367.5L421.5 353.5M421.5 367.5L415.5 377.5M421.5 367.5L414.5 364.5M421.5 353.5L422.5 341.5M421.5 353.5L414.5 364.5M421.5 353.5L413.5 351.5M422.5 341.5L422.5 328.5M422.5 341.5L413.5 351.5M422.5 341.5L413.5 338.5M422.5 328.5L423.5 312.5M422.5 328.5L413.5 338.5M422.5 328.5L413.5 323.5M423.5 312.5L423.5 297.5M423.5 312.5L413.5 323.5M423.5 312.5L413.5 307.5M423.5 297.5L424.5 280.5M423.5 297.5L413.5 307.5M423.5 297.5L413.5 292.5M424.5 280.5L423.5 263.5M424.5 280.5L413.5 292.5M424.5 280.5L414.5 277.5M423.5 263.5L424.5 247.5M423.5 263.5L414.5 277.5M423.5 263.5L414.5 262.5M424.5 247.5L423.5 231.5M424.5 247.5L414.5 262.5M424.5 247.5L415.5 245.5M423.5 231.5L422.5 217.5M423.5 231.5L415.5 245.5M423.5 231.5L414.5 232.5M422.5 217.5L422.5 204.5M422.5 217.5L414.5 232.5M422.5 217.5L414.5 218.5M422.5 204.5L422.5 192.5M422.5 204.5L414.5 218.5M422.5 204.5L415.5 205.5M422.5 192.5L415.5 205.5M422.5 192.5L415.5 198.5M415.5 431.5L415.5 422.5M415.5 431.5L407.5 438.5M415.5 422.5L415.5 407.5M415.5 422.5L407.5 438.5M415.5 422.5L408.5 422.5M415.5 407.5L415.5 392.5M415.5 407.5L408.5 422.5M415.5 407.5L408.5 408.5M415.5 392.5L415.5 377.5M415.5 392.5L408.5 408.5M415.5 392.5L408.5 392.5M415.5 377.5L414.5 364.5M415.5 377.5L408.5 392.5M415.5 377.5L406.5 380.5M414.5 364.5L413.5 351.5M414.5 364.5L406.5 380.5M414.5 364.5L406.5 365.5M413.5 351.5L413.5 338.5M413.5 351.5L406.5 365.5M413.5 351.5L406.5 349.5M413.5 338.5L413.5 323.5M413.5 338.5L406.5 349.5M413.5 338.5L406.5 335.5M413.5 323.5L413.5 307.5M413.5 323.5L406.5 335.5M413.5 323.5L406.5 320.5M413.5 307.5L413.5 292.5M413.5 307.5L406.5 320.5M413.5 307.5L406.5 306.5M413.5 292.5L414.5 277.5M413.5 292.5L406.5 306.5M413.5 292.5L406.5 291.5M414.5 277.5L414.5 262.5M414.5 277.5L406.5 291.5M414.5 277.5L406.5 276.5M414.5 262.5L415.5 245.5M414.5 262.5L406.5 276.5M414.5 262.5L406.5 263.5M415.5 245.5L414.5 232.5M415.5 245.5L406.5 263.5M415.5 245.5L407.5 249.5M414.5 232.5L414.5 218.5M414.5 232.5L407.5 249.5M414.5 232.5L407.5 233.5M414.5 218.5L415.5 205.5M414.5 218.5L407.5 233.5M414.5 218.5L408.5 220.5M415.5 205.5L415.5 198.5M415.5 205.5L408.5 220.5M415.5 205.5L407.5 205.5M415.5 198.5L407.5 205.5M407.5 438.5L408.5 422.5M407.5 438.5L400.5 444.5M407.5 438.5L400.5 437.5M408.5 422.5L408.5 408.5M408.5 422.5L400.5 437.5M408.5 422.5L400.5 424.5M408.5 408.5L408.5 392.5M408.5 408.5L400.5 424.5M408.5 408.5L400.5 409.5M408.5 392.5L406.5 380.5M408.5 392.5L400.5 409.5M408.5 392.5L400.5 394.5M406.5 380.5L406.5 365.5M406.5 380.5L400.5 394.5M406.5 380.5L399.5 379.5M406.5 365.5L406.5 349.5M406.5 365.5L399.5 379.5M406.5 365.5L399.5 363.5M406.5 349.5L406.5 335.5M406.5 349.5L399.5 363.5M406.5 349.5L399.5 350.5M406.5 335.5L406.5 320.5M406.5 335.5L399.5 350.5M406.5 335.5L399.5 334.5M406.5 320.5L406.5 306.5M406.5 320.5L399.5 334.5M406.5 320.5L399.5 320.5M406.5 306.5L406.5 291.5M406.5 306.5L399.5 320.5M406.5 306.5L399.5 305.5M406.5 291.5L406.5 276.5M406.5 291.5L399.5 305.5M406.5 291.5L399.5 291.5M406.5 276.5L406.5 263.5M406.5 276.5L399.5 291.5M406.5 276.5L400.5 278.5M406.5 263.5L407.5 249.5M406.5 263.5L400.5 278.5M406.5 263.5L400.5 263.5M407.5 249.5L407.5 233.5M407.5 249.5L400.5 263.5M407.5 249.5L399.5 249.5M407.5 233.5L408.5 220.5M407.5 233.5L399.5 249.5M407.5 233.5L400.5 234.5M408.5 220.5L407.5 205.5M408.5 220.5L400.5 234.5M408.5 220.5L400.5 219.5M407.5 205.5L400.5 219.5M407.5 205.5L400.5 211.5M400.5 444.5L400.5 437.5M400.5 444.5L392.5 451.5M400.5 437.5L400.5 424.5M400.5 437.5L392.5 451.5M400.5 437.5L392.5 436.5M400.5 424.5L400.5 409.5M400.5 424.5L392.5 436.5M400.5 424.5L392.5 421.5M400.5 409.5L400.5 394.5M400.5 409.5L392.5 421.5M400.5 409.5L392.5 407.5M400.5 394.5L399.5 379.5M400.5 394.5L392.5 407.5M400.5 394.5L392.5 392.5M399.5 379.5L399.5 363.5M399.5 379.5L392.5 392.5M399.5 379.5L392.5 378.5M399.5 363.5L399.5 350.5M399.5 363.5L392.5 378.5M399.5 363.5L392.5 363.5M399.5 350.5L399.5 334.5M399.5 350.5L392.5 363.5M399.5 350.5L392.5 349.5M399.5 334.5L399.5 320.5M399.5 334.5L392.5 349.5M399.5 334.5L392.5 334.5M399.5 320.5L399.5 305.5M399.5 320.5L392.5 334.5M399.5 320.5L392.5 319.5M399.5 305.5L399.5 291.5M399.5 305.5L392.5 319.5M399.5 305.5L392.5 305.5M399.5 291.5L400.5 278.5M399.5 291.5L392.5 305.5M399.5 291.5L392.5 290.5M400.5 278.5L400.5 263.5M400.5 278.5L392.5 290.5M400.5 278.5L392.5 276.5M400.5 263.5L399.5 249.5M400.5 263.5L392.5 276.5M400.5 263.5L392.5 261.5M399.5 249.5L400.5 234.5M399.5 249.5L392.5 261.5M399.5 249.5L392.5 247.5M400.5 234.5L400.5 219.5M400.5 234.5L392.5 247.5M400.5 234.5L392.5 232.5M400.5 219.5L400.5 211.5M400.5 219.5L392.5 232.5M400.5 219.5L392.5 217.5M400.5 211.5L392.5 217.5M392.5 451.5L392.5 436.5M392.5 436.5L392.5 421.5M392.5 421.5L392.5 407.5M392.5 407.5L392.5 392.5M392.5 392.5L392.5 378.5M392.5 378.5L392.5 363.5M392.5 363.5L392.5 349.5M392.5 349.5L392.5 334.5M392.5 334.5L392.5 319.5M392.5 319.5L392.5 305.5M392.5 305.5L392.5 290.5M392.5 290.5L392.5 276.5M392.5 276.5L392.5 261.5M392.5 261.5L392.5 247.5M392.5 247.5L392.5 232.5M392.5 232.5L392.5 217.5M452.5 399.5L452.5 384.5M452.5 399.5L465.5 403.5M452.5 399.5L466.5 395.5M452.5 384.5L452.5 370.5M452.5 384.5L466.5 395.5M452.5 384.5L465.5 381.5M452.5 370.5L452.5 355.5M452.5 370.5L465.5 381.5M452.5 370.5L464.5 366.5M452.5 355.5L452.5 341.5M452.5 355.5L464.5 366.5M452.5 355.5L464.5 350.5M452.5 341.5L452.5 326.5M452.5 341.5L464.5 350.5M452.5 341.5L463.5 335.5M452.5 326.5L452.5 312.5M452.5 326.5L463.5 335.5M452.5 326.5L464.5 321.5M452.5 312.5L452.5 297.5M452.5 312.5L464.5 321.5M452.5 312.5L463.5 305.5M452.5 297.5L452.5 282.5M452.5 297.5L463.5 305.5M452.5 297.5L465.5 291.5M452.5 282.5L452.5 268.5M452.5 282.5L465.5 291.5M452.5 282.5L466.5 276.5M452.5 268.5L452.5 253.5M452.5 268.5L466.5 276.5M452.5 268.5L468.5 263.5M452.5 253.5L452.5 239.5M452.5 253.5L468.5 263.5M452.5 253.5L467.5 248.5M452.5 239.5L452.5 224.5M452.5 239.5L467.5 248.5M452.5 239.5L466.5 233.5M452.5 224.5L452.5 210.5M452.5 224.5L466.5 233.5M452.5 224.5L465.5 220.5M452.5 210.5L452.5 195.5M452.5 210.5L465.5 220.5M452.5 210.5L465.5 206.5M452.5 195.5L452.5 180.5M452.5 195.5L465.5 206.5M452.5 195.5L465.5 191.5M452.5 180.5L452.5 166.5M452.5 180.5L465.5 191.5M452.5 180.5L466.5 177.5M452.5 166.5L466.5 177.5M452.5 166.5L465.5 170.5M465.5 403.5L466.5 395.5M465.5 403.5L478.5 406.5M466.5 395.5L465.5 381.5M466.5 395.5L478.5 406.5M466.5 395.5L478.5 393.5M465.5 381.5L464.5 366.5M465.5 381.5L478.5 393.5M465.5 381.5L479.5 378.5M464.5 366.5L464.5 350.5M464.5 366.5L479.5 378.5M464.5 366.5L478.5 364.5M464.5 350.5L463.5 335.5M464.5 350.5L478.5 364.5M464.5 350.5L478.5 348.5M463.5 335.5L464.5 321.5M463.5 335.5L478.5 348.5M463.5 335.5L479.5 332.5M464.5 321.5L463.5 305.5M464.5 321.5L479.5 332.5M464.5 321.5L478.5 317.5M463.5 305.5L465.5 291.5M463.5 305.5L478.5 317.5M463.5 305.5L479.5 300.5M465.5 291.5L466.5 276.5M465.5 291.5L479.5 300.5M465.5 291.5L480.5 286.5M466.5 276.5L468.5 263.5M466.5 276.5L480.5 286.5M466.5 276.5L480.5 270.5M468.5 263.5L467.5 248.5M468.5 263.5L480.5 270.5M468.5 263.5L480.5 256.5M467.5 248.5L466.5 233.5M467.5 248.5L480.5 256.5M467.5 248.5L478.5 242.5M466.5 233.5L465.5 220.5M466.5 233.5L478.5 242.5M466.5 233.5L477.5 228.5M465.5 220.5L465.5 206.5M465.5 220.5L477.5 228.5M465.5 220.5L477.5 214.5M465.5 206.5L465.5 191.5M465.5 206.5L477.5 214.5M465.5 206.5L476.5 202.5M465.5 191.5L466.5 177.5M465.5 191.5L476.5 202.5M465.5 191.5L477.5 188.5M466.5 177.5L465.5 170.5M466.5 177.5L477.5 188.5M466.5 177.5L478.5 173.5M465.5 170.5L478.5 173.5M478.5 406.5L478.5 393.5M478.5 406.5L491.5 410.5M478.5 406.5L492.5 403.5M478.5 393.5L479.5 378.5M478.5 393.5L492.5 403.5M478.5 393.5L492.5 390.5M479.5 378.5L478.5 364.5M479.5 378.5L492.5 390.5M479.5 378.5L492.5 377.5M478.5 364.5L478.5 348.5M478.5 364.5L492.5 377.5M478.5 364.5L493.5 364.5M478.5 348.5L479.5 332.5M478.5 348.5L493.5 364.5M478.5 348.5L494.5 348.5M479.5 332.5L478.5 317.5M479.5 332.5L494.5 348.5M479.5 332.5L494.5 333.5M478.5 317.5L479.5 300.5M478.5 317.5L494.5 333.5M478.5 317.5L495.5 316.5M479.5 300.5L480.5 286.5M479.5 300.5L495.5 316.5M479.5 300.5L494.5 299.5M480.5 286.5L480.5 270.5M480.5 286.5L494.5 299.5M480.5 286.5L494.5 281.5M480.5 270.5L480.5 256.5M480.5 270.5L494.5 281.5M480.5 270.5L492.5 266.5M480.5 256.5L478.5 242.5M480.5 256.5L492.5 266.5M480.5 256.5L490.5 252.5M478.5 242.5L477.5 228.5M478.5 242.5L490.5 252.5M478.5 242.5L488.5 237.5M477.5 228.5L477.5 214.5M477.5 228.5L488.5 237.5M477.5 228.5L487.5 225.5M477.5 214.5L476.5 202.5M477.5 214.5L487.5 225.5M477.5 214.5L487.5 212.5M476.5 202.5L477.5 188.5M476.5 202.5L487.5 212.5M476.5 202.5L489.5 199.5M477.5 188.5L478.5 173.5M477.5 188.5L489.5 199.5M477.5 188.5L490.5 184.5M478.5 173.5L490.5 184.5M478.5 173.5L491.5 177.5M491.5 410.5L492.5 403.5M491.5 410.5L504.5 414.5M492.5 403.5L492.5 390.5M492.5 403.5L504.5 414.5M492.5 403.5L504.5 402.5M492.5 390.5L492.5 377.5M492.5 390.5L504.5 402.5M492.5 390.5L505.5 390.5M492.5 377.5L493.5 364.5M492.5 377.5L505.5 390.5M492.5 377.5L505.5 377.5M493.5 364.5L494.5 348.5M493.5 364.5L505.5 377.5M493.5 364.5L505.5 362.5M494.5 348.5L494.5 333.5M494.5 348.5L505.5 362.5M494.5 348.5L506.5 347.5M494.5 333.5L495.5 316.5M494.5 333.5L506.5 347.5M494.5 333.5L506.5 330.5M495.5 316.5L494.5 299.5M495.5 316.5L506.5 330.5M495.5 316.5L506.5 312.5M494.5 299.5L494.5 281.5M494.5 299.5L506.5 312.5M494.5 299.5L506.5 295.5M494.5 281.5L492.5 266.5M494.5 281.5L506.5 295.5M494.5 281.5L506.5 279.5M492.5 266.5L490.5 252.5M492.5 266.5L506.5 279.5M492.5 266.5L504.5 264.5M490.5 252.5L488.5 237.5M490.5 252.5L504.5 264.5M490.5 252.5L503.5 250.5M488.5 237.5L487.5 225.5M488.5 237.5L503.5 250.5M488.5 237.5L502.5 236.5M487.5 225.5L487.5 212.5M487.5 225.5L502.5 236.5M487.5 225.5L500.5 223.5M487.5 212.5L489.5 199.5M487.5 212.5L500.5 223.5M487.5 212.5L502.5 210.5M489.5 199.5L490.5 184.5M489.5 199.5L502.5 210.5M489.5 199.5L502.5 197.5M490.5 184.5L491.5 177.5M490.5 184.5L502.5 197.5M490.5 184.5L504.5 181.5M491.5 177.5L504.5 181.5M504.5 414.5L504.5 402.5M504.5 414.5L517.5 417.5M504.5 414.5L517.5 412.5M504.5 402.5L505.5 390.5M504.5 402.5L517.5 412.5M504.5 402.5L517.5 400.5M505.5 390.5L505.5 377.5M505.5 390.5L517.5 400.5M505.5 390.5L517.5 386.5M505.5 377.5L505.5 362.5M505.5 377.5L517.5 386.5M505.5 377.5L515.5 372.5M505.5 362.5L506.5 347.5M505.5 362.5L515.5 372.5M505.5 362.5L514.5 357.5M506.5 347.5L506.5 330.5M506.5 347.5L514.5 357.5M506.5 347.5L513.5 340.5M506.5 330.5L506.5 312.5M506.5 330.5L513.5 340.5M506.5 330.5L515.5 325.5M506.5 312.5L506.5 295.5M506.5 312.5L515.5 325.5M506.5 312.5L516.5 307.5M506.5 295.5L506.5 279.5M506.5 295.5L516.5 307.5M506.5 295.5L519.5 291.5M506.5 279.5L504.5 264.5M506.5 279.5L519.5 291.5M506.5 279.5L520.5 276.5M504.5 264.5L503.5 250.5M504.5 264.5L520.5 276.5M504.5 264.5L520.5 262.5M503.5 250.5L502.5 236.5M503.5 250.5L520.5 262.5M503.5 250.5L520.5 248.5M502.5 236.5L500.5 223.5M502.5 236.5L520.5 248.5M502.5 236.5L518.5 236.5M500.5 223.5L502.5 210.5M500.5 223.5L518.5 236.5M500.5 223.5L516.5 222.5M502.5 210.5L502.5 197.5M502.5 210.5L516.5 222.5M502.5 210.5L516.5 206.5M502.5 197.5L504.5 181.5M502.5 197.5L516.5 206.5M502.5 197.5L516.5 192.5M504.5 181.5L516.5 192.5M504.5 181.5L517.5 184.5M517.5 417.5L517.5 412.5M517.5 417.5L530.5 421.5M517.5 412.5L517.5 400.5M517.5 412.5L530.5 421.5M517.5 412.5L531.5 409.5M517.5 400.5L517.5 386.5M517.5 400.5L531.5 409.5M517.5 400.5L529.5 393.5M517.5 386.5L515.5 372.5M517.5 386.5L529.5 393.5M517.5 386.5L527.5 380.5M515.5 372.5L514.5 357.5M515.5 372.5L527.5 380.5M515.5 372.5L525.5 365.5M514.5 357.5L513.5 340.5M514.5 357.5L525.5 365.5M514.5 357.5L524.5 348.5M513.5 340.5L515.5 325.5M513.5 340.5L524.5 348.5M513.5 340.5L523.5 332.5M515.5 325.5L516.5 307.5M515.5 325.5L523.5 332.5M515.5 325.5L526.5 317.5M516.5 307.5L519.5 291.5M516.5 307.5L526.5 317.5M516.5 307.5L529.5 301.5M519.5 291.5L520.5 276.5M519.5 291.5L529.5 301.5M519.5 291.5L533.5 287.5M520.5 276.5L520.5 262.5M520.5 276.5L533.5 287.5M520.5 276.5L534.5 274.5M520.5 262.5L520.5 248.5M520.5 262.5L534.5 274.5M520.5 262.5L536.5 260.5M520.5 248.5L518.5 236.5M520.5 248.5L536.5 260.5M520.5 248.5L533.5 246.5M518.5 236.5L516.5 222.5M518.5 236.5L533.5 246.5M518.5 236.5L533.5 232.5M516.5 222.5L516.5 206.5M516.5 222.5L533.5 232.5M516.5 222.5L531.5 218.5M516.5 206.5L516.5 192.5M516.5 206.5L531.5 218.5M516.5 206.5L530.5 204.5M516.5 192.5L517.5 184.5M516.5 192.5L530.5 204.5M516.5 192.5L530.5 188.5M517.5 184.5L530.5 188.5M530.5 421.5L531.5 409.5M530.5 421.5L543.5 425.5M530.5 421.5L543.5 418.5M531.5 409.5L529.5 393.5M531.5 409.5L543.5 418.5M531.5 409.5L543.5 404.5M529.5 393.5L527.5 380.5M529.5 393.5L543.5 404.5M529.5 393.5L542.5 388.5M527.5 380.5L525.5 365.5M527.5 380.5L542.5 388.5M527.5 380.5L541.5 374.5M525.5 365.5L524.5 348.5M525.5 365.5L541.5 374.5M525.5 365.5L539.5 358.5M524.5 348.5L523.5 332.5M524.5 348.5L539.5 358.5M524.5 348.5L539.5 342.5M523.5 332.5L526.5 317.5M523.5 332.5L539.5 342.5M523.5 332.5L540.5 328.5M526.5 317.5L529.5 301.5M526.5 317.5L540.5 328.5M526.5 317.5L541.5 313.5M529.5 301.5L533.5 287.5M529.5 301.5L541.5 313.5M529.5 301.5L543.5 299.5M533.5 287.5L534.5 274.5M533.5 287.5L543.5 299.5M533.5 287.5L544.5 285.5M534.5 274.5L536.5 260.5M534.5 274.5L544.5 285.5M534.5 274.5L545.5 270.5M536.5 260.5L533.5 246.5M536.5 260.5L545.5 270.5M536.5 260.5L546.5 257.5M533.5 246.5L533.5 232.5M533.5 246.5L546.5 257.5M533.5 246.5L544.5 242.5M533.5 232.5L531.5 218.5M533.5 232.5L544.5 242.5M533.5 232.5L544.5 228.5M531.5 218.5L530.5 204.5M531.5 218.5L544.5 228.5M531.5 218.5L544.5 213.5M530.5 204.5L530.5 188.5M530.5 204.5L544.5 213.5M530.5 204.5L543.5 198.5M530.5 188.5L543.5 198.5M530.5 188.5L543.5 192.5M543.5 425.5L543.5 418.5M543.5 425.5L556.5 429.5M543.5 418.5L543.5 404.5M543.5 418.5L556.5 429.5M543.5 418.5L556.5 414.5M543.5 404.5L542.5 388.5M543.5 404.5L556.5 414.5M543.5 404.5L556.5 399.5M542.5 388.5L541.5 374.5M542.5 388.5L556.5 399.5M542.5 388.5L556.5 385.5M541.5 374.5L539.5 358.5M541.5 374.5L556.5 385.5M541.5 374.5L556.5 370.5M539.5 358.5L539.5 342.5M539.5 358.5L556.5 370.5M539.5 358.5L556.5 356.5M539.5 342.5L540.5 328.5M539.5 342.5L556.5 356.5M539.5 342.5L556.5 341.5M540.5 328.5L541.5 313.5M540.5 328.5L556.5 341.5M540.5 328.5L556.5 327.5M541.5 313.5L543.5 299.5M541.5 313.5L556.5 327.5M541.5 313.5L556.5 312.5M543.5 299.5L544.5 285.5M543.5 299.5L556.5 312.5M543.5 299.5L556.5 297.5M544.5 285.5L545.5 270.5M544.5 285.5L556.5 297.5M544.5 285.5L556.5 283.5M545.5 270.5L546.5 257.5M545.5 270.5L556.5 283.5M545.5 270.5L556.5 268.5M546.5 257.5L544.5 242.5M546.5 257.5L556.5 268.5M546.5 257.5L556.5 254.5M544.5 242.5L544.5 228.5M544.5 242.5L556.5 254.5M544.5 242.5L556.5 239.5M544.5 228.5L544.5 213.5M544.5 228.5L556.5 239.5M544.5 228.5L556.5 225.5M544.5 213.5L543.5 198.5M544.5 213.5L556.5 225.5M544.5 213.5L556.5 210.5M543.5 198.5L543.5 192.5M543.5 198.5L556.5 210.5M543.5 198.5L556.5 195.5M543.5 192.5L556.5 195.5M556.5 429.5L556.5 414.5M556.5 414.5L556.5 399.5M556.5 399.5L556.5 385.5M556.5 385.5L556.5 370.5M556.5 370.5L556.5 356.5M556.5 356.5L556.5 341.5M556.5 341.5L556.5 327.5M556.5 327.5L556.5 312.5M556.5 312.5L556.5 297.5M556.5 297.5L556.5 283.5M556.5 283.5L556.5 268.5M556.5 268.5L556.5 254.5M556.5 254.5L556.5 239.5M556.5 239.5L556.5 225.5M556.5 225.5L556.5 210.5M556.5 210.5L556.5 195.5M452.5 399.5L467.5 403.5M452.5 399.5L445.5 405.5M452.5 399.5L452.5 409.5M467.5 403.5L482.5 407.5M467.5 403.5L452.5 409.5M467.5 403.5L469.5 413.5M482.5 407.5L497.5 412.5M482.5 407.5L469.5 413.5M482.5 407.5L486.5 416.5M497.5 412.5L511.5 416.5M497.5 412.5L486.5 416.5M497.5 412.5L501.5 421.5M511.5 416.5L526.5 420.5M511.5 416.5L501.5 421.5M511.5 416.5L516.5 424.5M526.5 420.5L541.5 424.5M526.5 420.5L516.5 424.5M526.5 420.5L528.5 428.5M541.5 424.5L556.5 429.5M541.5 424.5L528.5 428.5M541.5 424.5L540.5 433.5M556.5 429.5L540.5 433.5M556.5 429.5L548.5 435.5M445.5 405.5L452.5 409.5M445.5 405.5L437.5 412.5M452.5 409.5L469.5 413.5M452.5 409.5L437.5 412.5M452.5 409.5L449.5 417.5M469.5 413.5L486.5 416.5M469.5 413.5L449.5 417.5M469.5 413.5L468.5 420.5M486.5 416.5L501.5 421.5M486.5 416.5L468.5 420.5M486.5 416.5L484.5 424.5M501.5 421.5L516.5 424.5M501.5 421.5L484.5 424.5M501.5 421.5L498.5 428.5M516.5 424.5L528.5 428.5M516.5 424.5L498.5 428.5M516.5 424.5L514.5 431.5M528.5 428.5L540.5 433.5M528.5 428.5L514.5 431.5M528.5 428.5L525.5 437.5M540.5 433.5L548.5 435.5M540.5 433.5L525.5 437.5M540.5 433.5L541.5 441.5M548.5 435.5L541.5 441.5M437.5 412.5L449.5 417.5M437.5 412.5L430.5 418.5M449.5 417.5L468.5 420.5M449.5 417.5L430.5 418.5M449.5 417.5L436.5 421.5M449.5 417.5L446.5 424.5M449.5 417.5L462.5 425.5M468.5 420.5L484.5 424.5M468.5 420.5L462.5 425.5M468.5 420.5L475.5 429.5M484.5 424.5L498.5 428.5M484.5 424.5L475.5 429.5M484.5 424.5L493.5 433.5M498.5 428.5L514.5 431.5M498.5 428.5L493.5 433.5M514.5 431.5L525.5 437.5M514.5 431.5L493.5 433.5M514.5 431.5L511.5 438.5M525.5 437.5L541.5 441.5M525.5 437.5L511.5 438.5M525.5 437.5L525.5 446.5M541.5 441.5L525.5 446.5M541.5 441.5L533.5 448.5M430.5 418.5L436.5 421.5M430.5 418.5L422.5 425.5M436.5 421.5L446.5 424.5M436.5 421.5L422.5 425.5M436.5 421.5L433.5 429.5M446.5 424.5L462.5 425.5M446.5 424.5L433.5 429.5M446.5 424.5L446.5 430.5M462.5 425.5L475.5 429.5M462.5 425.5L446.5 430.5M462.5 425.5L456.5 433.5M475.5 429.5L493.5 433.5M475.5 429.5L456.5 433.5M475.5 429.5L471.5 438.5M493.5 433.5L511.5 438.5M493.5 433.5L471.5 438.5M493.5 433.5L495.5 442.5M511.5 438.5L525.5 446.5M511.5 438.5L495.5 442.5M511.5 438.5L512.5 449.5M525.5 446.5L533.5 448.5M525.5 446.5L512.5 449.5M525.5 446.5L526.5 454.5M533.5 448.5L526.5 454.5M422.5 425.5L433.5 429.5M422.5 425.5L415.5 431.5M433.5 429.5L446.5 430.5M433.5 429.5L415.5 431.5M433.5 429.5L422.5 434.5M433.5 429.5L436.5 437.5M446.5 430.5L456.5 433.5M446.5 430.5L436.5 437.5M446.5 430.5L450.5 439.5M456.5 433.5L471.5 438.5M456.5 433.5L450.5 439.5M471.5 438.5L495.5 442.5M471.5 438.5L450.5 439.5M471.5 438.5L463.5 445.5M471.5 438.5L479.5 449.5M495.5 442.5L512.5 449.5M495.5 442.5L479.5 449.5M495.5 442.5L498.5 453.5M512.5 449.5L526.5 454.5M512.5 449.5L498.5 453.5M512.5 449.5L511.5 459.5M526.5 454.5L511.5 459.5M526.5 454.5L518.5 461.5M415.5 431.5L422.5 434.5M415.5 431.5L407.5 438.5M422.5 434.5L436.5 437.5M422.5 434.5L407.5 438.5M422.5 434.5L423.5 443.5M436.5 437.5L450.5 439.5M436.5 437.5L423.5 443.5M436.5 437.5L442.5 446.5M450.5 439.5L463.5 445.5M450.5 439.5L442.5 446.5M463.5 445.5L479.5 449.5M463.5 445.5L442.5 446.5M463.5 445.5L457.5 451.5M479.5 449.5L498.5 453.5M479.5 449.5L457.5 451.5M479.5 449.5L469.5 457.5M479.5 449.5L485.5 460.5M498.5 453.5L511.5 459.5M498.5 453.5L485.5 460.5M498.5 453.5L498.5 463.5M511.5 459.5L518.5 461.5M511.5 459.5L498.5 463.5M511.5 459.5L511.5 467.5M518.5 461.5L511.5 467.5M407.5 438.5L423.5 443.5M407.5 438.5L400.5 444.5M407.5 438.5L407.5 446.5M423.5 443.5L442.5 446.5M423.5 443.5L407.5 446.5M423.5 443.5L424.5 450.5M442.5 446.5L457.5 451.5M442.5 446.5L424.5 450.5M442.5 446.5L441.5 455.5M457.5 451.5L469.5 457.5M457.5 451.5L441.5 455.5M457.5 451.5L456.5 461.5M469.5 457.5L485.5 460.5M469.5 457.5L456.5 461.5M469.5 457.5L469.5 465.5M485.5 460.5L498.5 463.5M485.5 460.5L469.5 465.5M485.5 460.5L482.5 468.5M498.5 463.5L511.5 467.5M498.5 463.5L482.5 468.5M498.5 463.5L496.5 472.5M511.5 467.5L496.5 472.5M511.5 467.5L503.5 474.5M400.5 444.5L407.5 446.5M400.5 444.5L392.5 451.5M407.5 446.5L424.5 450.5M407.5 446.5L392.5 451.5M407.5 446.5L407.5 455.5M424.5 450.5L441.5 455.5M424.5 450.5L407.5 455.5M424.5 450.5L422.5 459.5M441.5 455.5L456.5 461.5M441.5 455.5L422.5 459.5M441.5 455.5L437.5 463.5M456.5 461.5L469.5 465.5M456.5 461.5L437.5 463.5M456.5 461.5L451.5 467.5M469.5 465.5L482.5 468.5M469.5 465.5L451.5 467.5M469.5 465.5L466.5 472.5M482.5 468.5L496.5 472.5M482.5 468.5L466.5 472.5M482.5 468.5L481.5 476.5M496.5 472.5L503.5 474.5M496.5 472.5L481.5 476.5M496.5 472.5L496.5 480.5M503.5 474.5L496.5 480.5M392.5 451.5L407.5 455.5M407.5 455.5L422.5 459.5M422.5 459.5L437.5 463.5M437.5 463.5L451.5 467.5M451.5 467.5L466.5 472.5M466.5 472.5L481.5 476.5M481.5 476.5L496.5 480.5" fill="none" stroke="#1070d0" stroke-width="1" shape-rendering="crispEdges"/>
<g fill-opacity="0.375" shape-rendering="crispEdges">
<path d="M556 429L546 437.5L546 421L556 412.5Z" fill="#3e9bfe"/>
<path d="M556 412.5L546 421L546 404.5L556 396Z" fill="#3e9bfe"/>
<path d="M556 396L546 404.5L546 387.5L556 379Z" fill="#3e9bfe"/>
<path d="M556 379L546 387.5L546 371L556 362.5Z" fill="#3d9efe"/>
<path d="M556 362.5L546 371L546 354.5L556 346Z" fill="#38a5fb"/>
<path d="M556 346L546 354.5L546 338L556 329Z" fill="#2fb2f4"/>
<path d="M556 329L546 338L546 321L556 312.5Z" fill="#1fc9dd"/>
<path d="M556 312.5L546 321L546 304.5L556 296Z" fill="#18dec0"/>
<path d="M556 296L546 304.5L546 288L556 279Z" fill="#1ce6b4"/>
<path d="M556 279L546 288L546 271L556 262.5Z" fill="#19e2bb"/>
<path d="M556 262.5L546 271L546 254.5L556 246Z" fill="#1bd0d5"/>
<path d="M556 246L546 254.5L546 238L556 229Z" fill="#2cb7f0"/>
<path d="M556 229L546 238L546 221L556 212.5Z" fill="#38a5fb"/>
<path d="M556 212.5L546 221L546 204.5L556 196Z" fill="#4294ff"/>
<path d="M546 437.5L536 446L536 429.5L546 421Z" fill="#3e9bfe"/>
<path d="M546 421L536 429.5L536 413L546 404.5Z" fill="#3e9bfe"/>
<path d="M546 404.5L536 413L536 396.5L546 387.5Z" fill="#3e9bfe"/>
<path d="M546 387.5L536 396.5L536 379.5L546 371Z" fill="#3d9efe"/>
<path d="M546 371L536 379.5L536 363L546 354.5Z" fill="#3ba0fd"/>
<path d="M546 354.5L536 363L536 346.5L546 338Z" fill="#35abf8"/>
<path d="M546 338L536 346.5L536 329.5L546 321Z" fill="#27bee9"/>
<path d="M546 321L536 329.5L536 313L546 304.5Z" fill="#19d5cd"/>
<path d="M546 304.5L536 313L536 296.5L546 288Z" fill="#1ae4b6"/>
<path d="M546 288L536 296.5L536 280L546 271Z" fill="#1de7b2"/>
<path d="M546 271L536 280L536 263L546 254.5Z" fill="#18dbc5"/>
<path d="M546 254.5L536 263L536 246.5L546 238Z" fill="#22c5e2"/>
<path d="M546 238L536 246.5L536 230L546 221Z" fill="#33adf7"/>
<path d="M546 221L536 230L536 213L546 204.5Z" fill="#4294ff"/>
<path d="M536 446L526 455L526 438L536 429.5Z" fill="#3e9bfe"/>
<path d="M536 429.5L526 438L526 421.5L536 413Z" fill="#3e9bfe"/>
<path d="M536 413L526 421.5L526 405L536 396.5Z" fill="#3e9bfe"/>
<path d="M536 396.5L526 405L526 388L536 379.5Z" fill="#3e9bfe"/>
<path d="M536 379.5L526 388L526 371.5L536 363Z" fill="#3d9efe"/>
<path d="M536 363L526 371.5L526 355L536 346.5Z" fill="#3aa3fc"/>
<path d="M536 346.5L526 355L526 338.5L536 329.5Z" fill="#31aff5"/>
<path d="M536 329.5L526 338.5L526 321.5L536 313Z" fill="#23c3e4"/>
<path d="M536 313L526 321.5L526 305L536 296.5Z" fill="#1ad4d0"/>
<path d="M536 296.5L526 305L526 288.5L536 280Z" fill="#18ddc2"/>
<path d="M536 280L526 288.5L526 271.5L536 263Z" fill="#18d7ca"/>
<path d="M536 263L526 271.5L526 255L536 246.5Z" fill="#20c7df"/>
<path d="M536 246.5L526 255L526 238.5L536 230Z" fill="#31aff5"/>
<path d="M536 230L526 238.5L526 222L536 213Z" fill="#448ffe"/>
<path d="M526 455L516 463.5L516 447L526 438Z" fill="#3e9bfe"/>
<path d="M526 438L516 447L516 430L526 421.5Z" fill="#3e9bfe"/>
<path d="M526 421.5L516 430L516 413.5L526 405Z" fill="#3e9bfe"/>
<path d="M526 405L516 413.5L516 397L526 388Z" fill="#3e9bfe"/>
<path d="M526 388L516 397L516 380L526 371.5Z" fill="#3e9bfe"/>
<path d="M526 371.5L516 380L516 363.5L526 355Z" fill="#3d9efe"/>
<path d="M526 355L516 363.5L516 347L526 338.5Z" fill="#3aa3fc"/>
<path d="M526 338.5L516 347L516 330L526 321.5Z" fill="#33adf7"/>
<path d="M526 321.5L516 330L516 313.5L526 305Z" fill="#28bceb"/>
<path d="M526 305L516 313.5L516 297L526 288.5Z" fill="#22c5e2"/>
<path d="M526 288.5L516 297L516 280.5L526 271.5Z" fill="#20c7df"/>
<path d="M526 271.5L516 280.5L516 263.5L526 255Z" fill="#27bee9"/>
<path d="M526 255L516 263.5L516 247L526 238.5Z" fill="#37a8fa"/>
<path d="M526 238.5L516 247L516 230.5L526 222Z" fill="#458afc"/>
<path d="M516 463.5L506 472L506 455.5L516 447Z" fill="#3e9bfe"/>
<path d="M516 447L506 455.5L506 439L516 430Z" fill="#3e9bfe"/>
<path d="M516 430L506 439L506 422L516 413.5Z" fill="#3e9bfe"/>
<path d="M516 413.5L506 422L506 405.5L516 397Z" fill="#3e9bfe"/>
<path d="M516 397L506 405.5L506 389L516 380Z" fill="#3e9bfe"/>
<path d="M516 380L506 389L506 372L516 363.5Z" fill="#3e9bfe"/>
<path d="M516 363.5L506 372L506 355.5L516 347Z" fill="#3d9efe"/>
<path d="M516 347L506 355.5L506 339L516 330Z" fill="#3ba0fd"/>
<path d="M516 330L506 339L506 322L516 313.5Z" fill="#37a8fa"/>
<path d="M516 313.5L506 322L506 305.5L516 297Z" fill="#33adf7"/>
<path d="M516 297L506 305.5L506 289L516 280.5Z" fill="#2fb2f4"/>
<path d="M516 280.5L506 289L506 272L516 263.5Z" fill="#31aff5"/>
<path d="M516 263.5L506 272L506 255.5L516 247Z" fill="#3d9efe"/>
<path d="M516 247L506 255.5L506 239L516 230.5Z" fill="#4680f6"/>
<path d="M506 472L496 480.5L496 464L506 455.5Z" fill="#3e9bfe"/>
<path d="M506 455.5L496 464L496 447.5L506 439Z" fill="#3e9bfe"/>
<path d="M506 439L496 447.5L496 430.5L506 422Z" fill="#3e9bfe"/>
<path d="M506 422L496 430.5L496 414L506 405.5Z" fill="#3e9bfe"/>
<path d="M506 405.5L496 414L496 397.5L506 389Z" fill="#3e9bfe"/>
<path d="M506 389L496 397.5L496 381L506 372Z" fill="#3e9bfe"/>
<path d="M506 372L496 381L496 364L506 355.5Z" fill="#3e9bfe"/>
<path d="M506 355.5L496 364L496 347.5L506 339Z" fill="#3d9efe"/>
<path d="M506 339L496 347.5L496 331L506 322Z" fill="#3d9efe"/>
<path d="M506 322L496 331L496 314L506 305.5Z" fill="#3ba0fd"/>
<path d="M506 305.5L496 314L496 297.5L506 289Z" fill="#3aa3fc"/>
<path d="M506 289L496 297.5L496 281L506 272Z" fill="#3aa3fc"/>
<path d="M506 272L496 281L496 264L506 255.5Z" fill="#4391fe"/>
<path d="M506 255.5L496 264L496 247.5L506 239Z" fill="#4776ee"/>
<path d="M393 451L410 456L410 439.5L393 434.5Z" fill="#30123b"/>
<path d="M393 434.5L410 439.5L410 422.5L393 418Z" fill="#30123b"/>
<path d="M393 418L410 422.5L410 406L393 401Z" fill="#30123b"/>
<path d="M393 401L410 406L410 389.5L393 384.5Z" fill="#30123b"/>
<path d="M393 384.5L410 389.5L410 372.5L393 368Z" fill="#30123b"/>
<path d="M393 368L410 372.5L410 356L393 351Z" fill="#30123b"/>
<path d="M393 351L410 356L410 339.5L393 334.5Z" fill="#30123b"/>
<path d="M393 334.5L410 339.5L410 323L393 318Z" fill="#30123b"/>
<path d="M393 318L410 323L410 306L393 301Z" fill="#30123b"/>
<path d="M393 301L410 306L410 289.5L393 284.5Z" fill="#30123b"/>
<path d="M393 284.5L410 289.5L410 273L393 268Z" fill="#30123b"/>
<path d="M393 268L410 273L410 256L393 251Z" fill="#30123b"/>
<path d="M393 251L410 256L410 239.5L393 234.5Z" fill="#30123b"/>
<path d="M393 234.5L410 239.5L410 223L393 218Z" fill="#30123b"/>
<path d="M410 456L427.5 461L427.5 444.5L410 439.5Z" fill="#3a2d79"/>
<path d="M410 439.5L427.5 444.5L427.5 427.5L410 422.5Z" fill="#3a2d79"/>
<path d="M410 422.5L427.5 427.5L427.5 411L410 406Z" fill="#3a2d79"/>
<path d="M410 406L427.5 411L427.5 394.5L410 389.5Z" fill="#3a2d79"/>
<path d="M410 389.5L427.5 394.5L427.5 377.5L410 372.5Z" fill="#3a2d79"/>
<path d="M410 372.5L427.5 377.5L427.5 361L410 356Z" fill="#3a2d79"/>
<path d="M410 356L427.5 361L427.5 344.5L410 339.5Z" fill="#3a2d79"/>
<path d="M410 339.5L427.5 344.5L427.5 327.5L410 323Z" fill="#3a2d79"/>
<path d="M410 323L427.5 327.5L427.5 311L410 306Z" fill="#392a73"/>
<path d="M410 306L427.5 311L427.5 294.5L410 289.5Z" fill="#321543"/>
<path d="M410 289.5L427.5 294.5L427.5 278L410 273Z" fill="#30123b"/>
<path d="M410 273L427.5 278L427.5 261L410 256Z" fill="#30123b"/>
<path d="M410 256L427.5 261L427.5 244.5L410 239.5Z" fill="#30123b"/>
<path d="M410 239.5L427.5 244.5L427.5 228L410 223Z" fill="#30123b"/>
<path d="M427.5 461L444.5 466L444.5 449L427.5 444.5Z" fill="#4456c7"/>
<path d="M427.5 444.5L444.5 449L444.5 432.5L427.5 427.5Z" fill="#4456c7"/>
<path d="M427.5 427.5L444.5 432.5L444.5 416L427.5 411Z" fill="#4456c7"/>
<path d="M427.5 411L444.5 416L444.5 399L427.5 394.5Z" fill="#4456c7"/>
<path d="M427.5 394.5L444.5 399L444.5 382.5L427.5 377.5Z" fill="#4456c7"/>
<path d="M427.5 377.5L444.5 382.5L444.5 366L427.5 361Z" fill="#4456c7"/>
<path d="M427.5 361L444.5 366L444.5 349.5L427.5 344.5Z" fill="#4456c7"/>
<path d="M427.5 344.5L444.5 349.5L444.5 332.5L427.5 327.5Z" fill="#4456c7"/>
<path d="M427.5 327.5L444.5 332.5L444.5 316L427.5 311Z" fill="#4456c7"/>
<path d="M427.5 311L444.5 316L444.5 299.5L427.5 294.5Z" fill="#3f3b97"/>
<path d="M427.5 294.5L444.5 299.5L444.5 282.5L427.5 278Z" fill="#36215f"/>
<path d="M427.5 278L444.5 282.5L444.5 266L427.5 261Z" fill="#30123b"/>
<path d="M427.5 261L444.5 266L444.5 249.5L427.5 244.5Z" fill="#30123b"/>
<path d="M427.5 244.5L444.5 249.5L444.5 233L427.5 228Z" fill="#30123b"/>
<path d="M444.5 466L461.5 471L461.5 454L444.5 449Z" fill="#467df4"/>
<path d="M444.5 449L461.5 454L461.5 437.5L444.5 432.5Z" fill="#467df4"/>
<path d="M444.5 432.5L461.5 437.5L461.5 421L444.5 416Z" fill="#467df4"/>
<path d="M444.5 416L461.5 421L461.5 404L444.5 399Z" fill="#467df4"/>
<path d="M444.5 399L461.5 404L461.5 387.5L444.5 382.5Z" fill="#467df4"/>
<path d="M444.5 382.5L461.5 387.5L461.5 371L444.5 366Z" fill="#467df4"/>
<path d="M444.5 366L461.5 371L461.5 354L444.5 349.5Z" fill="#467df4"/>
<path d="M444.5 349.5L461.5 354L461.5 337.5L444.5 332.5Z" fill="#467df4"/>
<path d="M444.5 332.5L461.5 337.5L461.5 321L444.5 316Z" fill="#467df4"/>
<path d="M444.5 316L461.5 321L461.5 304.5L444.5 299.5Z" fill="#476ee6"/>
<path d="M444.5 299.5L461.5 304.5L461.5 287.5L444.5 282.5Z" fill="#434eba"/>
<path d="M444.5 282.5L461.5 287.5L461.5 271L444.5 266Z" fill="#3b2f80"/>
<path d="M444.5 266L461.5 271L461.5 254.5L444.5 249.5Z" fill="#33184a"/>
<path d="M444.5 249.5L461.5 254.5L461.5 237.5L444.5 233Z" fill="#30123b"/>
<path d="M461.5 471L479 475.5L479 459L461.5 454Z" fill="#4196ff"/>
<path d="M461.5 454L479 459L479 442.5L461.5 437.5Z" fill="#4196ff"/>
<path d="M461.5 437.5L479 442.5L479 426L461.5 421Z" fill="#4196ff"/>
<path d="M461.5 421L479 426L479 409L461.5 404Z" fill="#4196ff"/>
<path d="M461.5 404L479 409L479 392.5L461.5 387.5Z" fill="#4196ff"/>
<path d="M461.5 387.5L479 392.5L479 376L461.5 371Z" fill="#4196ff"/>
<path d="M461.5 371L479 376L479 359L461.5 354Z" fill="#4196ff"/>
<path d="M461.5 354L479 359L479 342.5L461.5 337.5Z" fill="#4196ff"/>
<path d="M461.5 337.5L479 342.5L479 326L461.5 321Z" fill="#4196ff"/>
<path d="M461.5 321L479 326L479 309L461.5 304.5Z" fill="#4294ff"/>
<path d="M461.5 304.5L479 309L479 292.5L461.5 287.5Z" fill="#467df4"/>
<path d="M461.5 287.5L479 292.5L479 276L461.5 271Z" fill="#4661d6"/>
<path d="M461.5 271L479 276L479 259.5L461.5 254.5Z" fill="#4143a7"/>
<path d="M461.5 254.5L479 259.5L479 242.5L461.5 237.5Z" fill="#38276d"/>
<path d="M479 475.5L496 480.5L496 464L479 459Z" fill="#3e9bfe"/>
<path d="M479 459L496 464L496 447.5L479 442.5Z" fill="#3e9bfe"/>
<path d="M479 442.5L496 447.5L496 430.5L479 426Z" fill="#3e9bfe"/>
<path d="M479 426L496 430.5L496 414L479 409Z" fill="#3e9bfe"/>
<path d="M479 409L496 414L496 397.5L479 392.5Z" fill="#3e9bfe"/>
<path d="M479 392.5L496 397.5L496 381L479 376Z" fill="#3e9bfe"/>
<path d="M479 376L496 381L496 364L479 359Z" fill="#3e9bfe"/>
<path d="M479 359L496 364L496 347.5L479 342.5Z" fill="#3e9bfe"/>
<path d="M479 342.5L496 347.5L496 331L479 326Z" fill="#3e9bfe"/>
<path d="M479 326L496 331L496 314L479 309Z" fill="#3d9efe"/>
<path d="M479 309L496 314L496 297.5L479 292.5Z" fill="#3e9bfe"/>
<path d="M479 292.5L496 297.5L496 281L479 276Z" fill="#448ffe"/>
<path d="M479 276L496 281L496 264L479 259.5Z" fill="#4776ee"/>
<path d="M479 259.5L496 264L496 247.5L479 242.5Z" fill="#4456c7"/>
<path d="M453 166.5L470 171.5L460 180L443 175Z" fill="#30123b"/>
<path d="M443 175L460 180L450 188.5L433 183.5Z" fill="#30123b"/>
<path d="M433 183.5L450 188.5L440 197L423 192Z" fill="#30123b"/>
<path d="M423 192L440 197L430 205.5L413 200.5Z" fill="#30123b"/>
<path d="M413 200.5L430 205.5L420 214.5L403 209.5Z" fill="#30123b"/>
<path d="M403 209.5L420 214.5L410 223L393 218Z" fill="#30123b"/>
<path d="M470 171.5L487.5 176L477.5 185L460 180Z" fill="#30123b"/>
<path d="M460 180L477.5 185L467.5 193.5L450 188.5Z" fill="#30123b"/>
<path d="M450 188.5L467.5 193.5L457.5 202L440 197Z" fill="#30123b"/>
<path d="M440 197L457.5 202L447.5 210.5L430 205.5Z" fill="#30123b"/>
<path d="M430 205.5L447.5 210.5L437.5 219L420 214.5Z" fill="#30123b"/>
<path d="M420 214.5L437.5 219L427.5 228L410 223Z" fill="#30123b"/>
<path d="M487.5 176L504.5 181L494.5 190L477.5 185Z" fill="#30123b"/>
<path d="M477.5 185L494.5 190L484.5 198.5L467.5 193.5Z" fill="#30123b"/>
<path d="M467.5 193.5L484.5 198.5L474.5 207L457.5 202Z" fill="#30123b"/>
<path d="M457.5 202L474.5 207L464.5 215.5L447.5 210.5Z" fill="#30123b"/>
<path d="M447.5 210.5L464.5 215.5L454.5 224L437.5 219Z" fill="#30123b"/>
<path d="M437.5 219L454.5 224L444.5 233L427.5 228Z" fill="#30123b"/>
<path d="M504.5 181L521.5 186L511.5 194.5L494.5 190Z" fill="#33184a"/>
<path d="M494.5 190L511.5 194.5L501.5 203.5L484.5 198.5Z" fill="#321543"/>
<path d="M484.5 198.5L501.5 203.5L491.5 212L474.5 207Z" fill="#30123b"/>
<path d="M474.5 207L491.5 212L481.5 220.5L464.5 215.5Z" fill="#30123b"/>
<path d="M464.5 215.5L481.5 220.5L471.5 229L454.5 224Z" fill="#30123b"/>
<path d="M454.5 224L471.5 229L461.5 237.5L444.5 233Z" fill="#30123b"/>
<path d="M521.5 186L539 191L529 199.5L511.5 194.5Z" fill="#4040a2"/>
<path d="M511.5 194.5L529 199.5L519 208L501.5 203.5Z" fill="#3f3b97"/>
<path d="M501.5 203.5L519 208L509 217L491.5 212Z" fill="#3c3286"/>
<path d="M491.5 212L509 217L499 225.5L481.5 220.5Z" fill="#392a73"/>
<path d="M481.5 220.5L499 225.5L489 234L471.5 229Z" fill="#372466"/>
<path d="M471.5 229L489 234L479 242.5L461.5 237.5Z" fill="#351e58"/>
<path d="M539 191L556 196L546 204.5L529 199.5Z" fill="#4776ee"/>
<path d="M529 199.5L546 204.5L536 213L519 208Z" fill="#476ee6"/>
<path d="M519 208L536 213L526 222L509 217Z" fill="#4666dd"/>
<path d="M509 217L526 222L516 230.5L499 225.5Z" fill="#455ed3"/>
<path d="M499 225.5L516 230.5L506 239L489 234Z" fill="#4454c3"/>
<path d="M489 234L506 239L496 247.5L479 242.5Z" fill="#424bb5"/>
</g>
<path d="M556.5 429.5L556.5 414.5M556.5 429.5L548.5 435.5M556.5 429.5L548.5 427.5M556.5 414.5L556.5 399.5M556.5 414.5L548.5 427.5M556.5 414.5L548.5 415.5M556.5 399.5L556.5 385.5M556.5 399.5L548.5 415.5M556.5 399.5L548.5 399.5M556.5 385.5L556.5 370.5M556.5 385.5L548.5 399.5M556.5 385.5L547.5 384.5M556.5 370.5L556.5 356.5M556.5 370.5L547.5 384.5M556.5 370.5L547.5 370.5M556.5 356.5L556.5 341.5M556.5 356.5L547.5 370.5M556.5 356.5L547.5 354.5M556.5 341.5L556.5 327.5M556.5 341.5L547.5 354.5M556.5 341.5L547.5 338.5M556.5 327.5L556.5 312.5M556.5 327.5L547.5 338.5M556.5 327.5L548.5 322.5M556.5 312.5L556.5 297.5M556.5 312.5L548.5 322.5M556.5 312.5L548.5 308.5M556.5 297.5L556.5 283.5M556.5 297.5L548.5 308.5M556.5 297.5L549.5 293.5M556.5 283.5L556.5 268.5M556.5 283.5L549.5 293.5M556.5 283.5L550.5 278.5M556.5 268.5L556.5 254.5M556.5 268.5L550.5 278.5M556.5 268.5L549.5 265.5M556.5 254.5L556.5 239.5M556.5 254.5L549.5 265.5M556.5 254.5L548.5 252.5M556.5 239.5L556.5 225.5M556.5 239.5L548.5 252.5M556.5 239.5L548.5 238.5M556.5 225.5L556.5 210.5M556.5 225.5L548.5 238.5M556.5 225.5L548.5 224.5M556.5 210.5L556.5 195.5M556.5 210.5L548.5 224.5M556.5 210.5L548.5 209.5M556.5 195.5L548.5 209.5M556.5 195.5L548.5 202.5M548.5 435.5L548.5 427.5M548.5 435.5L541.5 441.5M548.5 427.5L548.5 415.5M548.5 427.5L541.5 441.5M548.5 427.5L541.5 426.5M548.5 415.5L548.5 399.5M548.5 415.5L541.5 426.5M548.5 415.5L540.5 411.5M548.5 399.5L547.5 384.5M548.5 399.5L540.5 411.5M548.5 399.5L540.5 397.5M547.5 384.5L547.5 370.5M547.5 384.5L540.5 397.5M547.5 384.5L540.5 381.5M547.5 370.5L547.5 354.5M547.5 370.5L540.5 381.5M547.5 370.5L540.5 366.5M547.5 354.5L547.5 338.5M547.5 354.5L540.5 366.5M547.5 354.5L539.5 352.5M547.5 338.5L548.5 322.5M547.5 338.5L539.5 352.5M547.5 338.5L540.5 335.5M548.5 322.5L548.5 308.5M548.5 322.5L540.5 335.5M548.5 322.5L541.5 319.5M548.5 308.5L549.5 293.5M548.5 308.5L541.5 319.5M548.5 308.5L542.5 305.5M549.5 293.5L550.5 278.5M549.5 293.5L542.5 305.5M549.5 293.5L542.5 290.5M550.5 278.5L549.5 265.5M550.5 278.5L542.5 290.5M550.5 278.5L542.5 277.5M549.5 265.5L548.5 252.5M549.5 265.5L542.5 277.5M549.5 265.5L541.5 264.5M548.5 252.5L548.5 238.5M548.5 252.5L541.5 264.5M548.5 252.5L540.5 250.5M548.5 238.5L548.5 224.5M548.5 238.5L540.5 250.5M548.5 238.5L540.5 237.5M548.5 224.5L548.5 209.5M548.5 224.5L540.5 237.5M548.5 224.5L540.5 224.5M548.5 209.5L548.5 202.5M548.5 209.5L540.5 224.5M548.5 209.5L541.5 208.5M548.5 202.5L541.5 208.5M541.5 441.5L541.5 426.5M541.5 441.5L533.5 448.5M541.5 441.5L533.5 440.5M541.5 426.5L540.5 411.5M541.5 426.5L533.5 440.5M541.5 426.5L534.5 424.5M540.5 411.5L540.5 397.5M540.5 411.5L534.5 424.5M540.5 411.5L535.5 408.5M540.5 397.5L540.5 381.5M540.5 397.5L535.5 408.5M540.5 397.5L534.5 395.5M540.5 381.5L540.5 366.5M540.5 381.5L534.5 395.5M540.5 381.5L534.5 380.5M540.5 366.5L539.5 352.5M540.5 366.5L534.5 380.5M540.5 366.5L534.5 367.5M539.5 352.5L540.5 335.5M539.5 352.5L534.5 367.5M539.5 352.5L534.5 355.5M540.5 335.5L541.5 319.5M540.5 335.5L534.5 355.5M540.5 335.5L534.5 340.5M540.5 335.5L535.5 325.5M541.5 319.5L542.5 305.5M541.5 319.5L535.5 325.5M542.5 305.5L542.5 290.5M542.5 305.5L535.5 325.5M542.5 305.5L534.5 310.5M542.5 290.5L542.5 277.5M542.5 290.5L534.5 310.5M542.5 290.5L533.5 297.5M542.5 277.5L541.5 264.5M542.5 277.5L533.5 297.5M542.5 277.5L533.5 281.5M541.5 264.5L540.5 250.5M541.5 264.5L533.5 281.5M541.5 264.5L532.5 266.5M540.5 250.5L540.5 237.5M540.5 250.5L532.5 266.5M540.5 250.5L531.5 253.5M540.5 237.5L540.5 224.5M540.5 237.5L531.5 253.5M540.5 237.5L532.5 238.5M540.5 224.5L541.5 208.5M540.5 224.5L532.5 238.5M540.5 224.5L533.5 222.5M541.5 208.5L533.5 222.5M541.5 208.5L533.5 215.5M533.5 448.5L533.5 440.5M533.5 448.5L526.5 454.5M533.5 440.5L534.5 424.5M533.5 440.5L526.5 454.5M533.5 440.5L526.5 438.5M534.5 424.5L535.5 408.5M534.5 424.5L526.5 438.5M534.5 424.5L528.5 424.5M535.5 408.5L534.5 395.5M535.5 408.5L528.5 424.5M535.5 408.5L527.5 410.5M534.5 395.5L534.5 380.5M534.5 395.5L527.5 410.5M534.5 395.5L527.5 397.5M534.5 380.5L534.5 367.5M534.5 380.5L527.5 397.5M534.5 380.5L527.5 386.5M534.5 380.5L527.5 374.5M534.5 367.5L534.5 355.5M534.5 367.5L527.5 374.5M534.5 367.5L527.5 361.5M534.5 355.5L534.5 340.5M534.5 355.5L527.5 361.5M534.5 355.5L528.5 348.5M534.5 340.5L535.5 325.5M534.5 340.5L528.5 348.5M534.5 340.5L527.5 333.5M535.5 325.5L534.5 310.5M535.5 325.5L527.5 333.5M535.5 325.5L526.5 318.5M534.5 310.5L533.5 297.5M534.5 310.5L526.5 318.5M533.5 297.5L533.5 281.5M533.5 297.5L526.5 318.5M533.5 297.5L525.5 302.5M533.5 281.5L532.5 266.5M533.5 281.5L525.5 302.5M533.5 281.5L524.5 286.5M532.5 266.5L531.5 253.5M532.5 266.5L524.5 286.5M532.5 266.5L523.5 270.5M531.5 253.5L532.5 238.5M531.5 253.5L523.5 270.5M531.5 253.5L523.5 254.5M532.5 238.5L533.5 222.5M532.5 238.5L523.5 254.5M532.5 238.5L524.5 237.5M533.5 222.5L533.5 215.5M533.5 222.5L524.5 237.5M533.5 222.5L526.5 221.5M533.5 215.5L526.5 221.5M526.5 454.5L526.5 438.5M526.5 454.5L518.5 461.5M526.5 454.5L519.5 452.5M526.5 438.5L528.5 424.5M526.5 438.5L519.5 452.5M526.5 438.5L520.5 437.5M528.5 424.5L527.5 410.5M528.5 424.5L520.5 437.5M528.5 424.5L520.5 424.5M527.5 410.5L527.5 397.5M527.5 410.5L520.5 424.5M527.5 410.5L519.5 412.5M527.5 397.5L527.5 386.5M527.5 397.5L519.5 412.5M527.5 397.5L519.5 399.5M527.5 386.5L527.5 374.5M527.5 386.5L519.5 399.5M527.5 386.5L519.5 387.5M527.5 374.5L527.5 361.5M527.5 374.5L519.5 387.5M527.5 374.5L519.5 373.5M527.5 361.5L528.5 348.5M527.5 361.5L519.5 373.5M527.5 361.5L519.5 361.5M528.5 348.5L527.5 333.5M528.5 348.5L519.5 361.5M528.5 348.5L520.5 346.5M527.5 333.5L526.5 318.5M527.5 333.5L520.5 346.5M527.5 333.5L519.5 332.5M526.5 318.5L525.5 302.5M526.5 318.5L519.5 332.5M526.5 318.5L518.5 315.5M525.5 302.5L524.5 286.5M525.5 302.5L518.5 315.5M525.5 302.5L517.5 300.5M524.5 286.5L523.5 270.5M524.5 286.5L517.5 300.5M524.5 286.5L516.5 284.5M523.5 270.5L523.5 254.5M523.5 270.5L516.5 284.5M523.5 270.5L516.5 268.5M523.5 254.5L524.5 237.5M523.5 254.5L516.5 268.5M523.5 254.5L516.5 253.5M524.5 237.5L526.5 221.5M524.5 237.5L516.5 253.5M524.5 237.5L517.5 236.5M526.5 221.5L517.5 236.5M526.5 221.5L518.5 228.5M518.5 461.5L519.5 452.5M518.5 461.5L511.5 467.5M519.5 452.5L520.5 437.5M519.5 452.5L511.5 467.5M519.5 452.5L511.5 453.5M520.5 437.5L520.5 424.5M520.5 437.5L511.5 453.5M520.5 437.5L511.5 438.5M520.5 424.5L519.5 412.5M520.5 424.5L511.5 438.5M520.5 424.5L511.5 423.5M519.5 412.5L519.5 399.5M519.5 412.5L511.5 423.5M519.5 412.5L510.5 409.5M519.5 399.5L519.5 387.5M519.5 399.5L510.5 409.5M519.5 399.5L510.5 395.5M519.5 387.5L519.5 373.5M519.5 387.5L510.5 395.5M519.5 387.5L510.5 381.5M519.5 373.5L519.5 361.5M519.5 373.5L510.5 381.5M519.5 361.5L520.5 346.5M519.5 361.5L510.5 381.5M519.5 361.5L511.5 367.5M520.5 346.5L519.5 332.5M520.5 346.5L511.5 367.5M520.5 346.5L511.5 351.5M519.5 332.5L518.5 315.5M519.5 332.5L511.5 351.5M519.5 332.5L512.5 335.5M518.5 315.5L517.5 300.5M518.5 315.5L512.5 335.5M518.5 315.5L511.5 323.5M518.5 315.5L511.5 307.5M517.5 300.5L516.5 284.5M517.5 300.5L511.5 307.5M517.5 300.5L511.5 293.5M516.5 284.5L516.5 268.5M516.5 284.5L511.5 293.5M516.5 284.5L510.5 279.5M516.5 268.5L516.5 253.5M516.5 268.5L510.5 279.5M516.5 268.5L510.5 265.5M516.5 253.5L517.5 236.5M516.5 253.5L510.5 265.5M516.5 253.5L510.5 248.5M517.5 236.5L518.5 228.5M517.5 236.5L510.5 248.5M517.5 236.5L511.5 234.5M518.5 228.5L511.5 234.5M511.5 467.5L511.5 453.5M511.5 467.5L503.5 474.5M511.5 467.5L503.5 466.5M511.5 453.5L511.5 438.5M511.5 453.5L503.5 466.5M511.5 453.5L503.5 452.5M511.5 438.5L511.5 423.5M511.5 438.5L503.5 452.5M511.5 438.5L503.5 436.5M511.5 423.5L510.5 409.5M511.5 423.5L503.5 436.5M511.5 423.5L502.5 422.5M510.5 409.5L510.5 395.5M510.5 409.5L502.5 422.5M510.5 409.5L502.5 408.5M510.5 395.5L510.5 381.5M510.5 395.5L502.5 408.5M510.5 395.5L502.5 392.5M510.5 381.5L511.5 367.5M510.5 381.5L502.5 392.5M510.5 381.5L502.5 377.5M511.5 367.5L511.5 351.5M511.5 367.5L502.5 377.5M511.5 367.5L503.5 362.5M511.5 351.5L512.5 335.5M511.5 351.5L503.5 362.5M511.5 351.5L503.5 347.5M512.5 335.5L511.5 323.5M512.5 335.5L503.5 347.5M512.5 335.5L504.5 332.5M511.5 323.5L511.5 307.5M511.5 323.5L504.5 332.5M511.5 323.5L504.5 316.5M511.5 307.5L511.5 293.5M511.5 307.5L504.5 316.5M511.5 307.5L504.5 303.5M511.5 293.5L510.5 279.5M511.5 293.5L504.5 303.5M511.5 293.5L504.5 289.5M510.5 279.5L510.5 265.5M510.5 279.5L504.5 289.5M510.5 279.5L504.5 275.5M510.5 265.5L510.5 248.5M510.5 265.5L504.5 275.5M510.5 265.5L503.5 262.5M510.5 248.5L511.5 234.5M510.5 248.5L503.5 262.5M510.5 248.5L503.5 248.5M511.5 234.5L503.5 248.5M511.5 234.5L503.5 241.5M503.5 474.5L503.5 466.5M503.5 474.5L496.5 480.5M503.5 466.5L503.5 452.5M503.5 466.5L496.5 480.5M503.5 466.5L496.5 466.5M503.5 452.5L503.5 436.5M503.5 452.5L496.5 466.5M503.5 452.5L496.5 451.5M503.5 436.5L502.5 422.5M503.5 436.5L496.5 451.5M503.5 436.5L496.5 436.5M502.5 422.5L502.5 408.5M502.5 422.5L496.5 436.5M502.5 422.5L496.5 422.5M502.5 408.5L502.5 392.5M502.5 408.5L496.5 422.5M502.5 408.5L496.5 407.5M502.5 392.5L502.5 377.5M502.5 392.5L496.5 407.5M502.5 392.5L496.5 393.5M502.5 377.5L503.5 362.5M502.5 377.5L496.5 393.5M502.5 377.5L496.5 378.5M503.5 362.5L503.5 347.5M503.5 362.5L496.5 378.5M503.5 362.5L496.5 364.5M503.5 347.5L504.5 332.5M503.5 347.5L496.5 364.5M503.5 347.5L496.5 349.5M504.5 332.5L504.5 316.5M504.5 332.5L496.5 349.5M504.5 332.5L496.5 334.5M504.5 316.5L504.5 303.5M504.5 316.5L496.5 334.5M504.5 316.5L496.5 320.5M504.5 303.5L504.5 289.5M504.5 303.5L496.5 320.5M504.5 303.5L496.5 305.5M504.5 289.5L504.5 275.5M504.5 289.5L496.5 305.5M504.5 289.5L496.5 291.5M504.5 275.5L503.5 262.5M504.5 275.5L496.5 291.5M504.5 275.5L496.5 276.5M503.5 262.5L503.5 248.5M503.5 262.5L496.5 276.5M503.5 262.5L496.5 262.5M503.5 248.5L503.5 241.5M503.5 248.5L496.5 262.5M503.5 248.5L496.5 247.5M503.5 241.5L496.5 247.5M496.5 480.5L496.5 466.5M496.5 466.5L496.5 451.5M496.5 451.5L496.5 436.5M496.5 436.5L496.5 422.5M496.5 422.5L496.5 407.5M496.5 407.5L496.5 393.5M496.5 393.5L496.5 378.5M496.5 378.5L496.5 364.5M496.5 364.5L496.5 349.5M496.5 349.5L496.5 334.5M496.5 334.5L496.5 320.5M496.5 320.5L496.5 305.5M496.5 305.5L496.5 291.5M496.5 291.5L496.5 276.5M496.5 276.5L496.5 262.5M496.5 262.5L496.5 247.5M392.5 451.5L392.5 436.5M392.5 451.5L405.5 454.5M392.5 451.5L406.5 447.5M392.5 436.5L392.5 421.5M392.5 436.5L406.5 447.5M392.5 436.5L404.5 434.5M392.5 421.5L392.5 407.5M392.5 421.5L404.5 434.5M392.5 421.5L404.5 420.5M392.5 407.5L392.5 392.5M392.5 407.5L404.5 420.5M392.5 407.5L403.5 404.5M392.5 392.5L392.5 378.5M392.5 392.5L403.5 404.5M392.5 392.5L404.5 391.5M392.5 378.5L392.5 363.5M392.5 378.5L404.5 391.5M392.5 378.5L405.5 378.5M392.5 363.5L392.5 349.5M392.5 363.5L405.5 378.5M392.5 363.5L405.5 362.5M392.5 349.5L392.5 334.5M392.5 349.5L405.5 362.5M392.5 349.5L407.5 348.5M392.5 334.5L392.5 319.5M392.5 334.5L407.5 348.5M392.5 334.5L406.5 333.5M392.5 319.5L392.5 305.5M392.5 319.5L406.5 333.5M392.5 319.5L405.5 318.5M392.5 305.5L392.5 290.5M392.5 305.5L405.5 318.5M392.5 305.5L406.5 302.5M392.5 290.5L392.5 276.5M392.5 290.5L406.5 302.5M392.5 290.5L406.5 287.5M392.5 276.5L392.5 261.5M392.5 276.5L406.5 287.5M392.5 276.5L406.5 273.5M392.5 261.5L392.5 247.5M392.5 261.5L406.5 273.5M392.5 261.5L406.5 257.5M392.5 247.5L392.5 232.5M392.5 247.5L406.5 257.5M392.5 247.5L406.5 243.5M392.5 232.5L392.5 217.5M392.5 232.5L406.5 243.5M392.5 232.5L405.5 228.5M392.5 217.5L405.5 228.5M392.5 217.5L405.5 221.5M405.5 454.5L406.5 447.5M405.5 454.5L418.5 458.5M406.5 447.5L404.5 434.5M406.5 447.5L418.5 458.5M406.5 447.5L417.5 445.5M404.5 434.5L404.5 420.5M404.5 434.5L417.5 445.5M404.5 434.5L417.5 432.5M404.5 420.5L403.5 404.5M404.5 420.5L417.5 432.5M404.5 420.5L417.5 418.5M403.5 404.5L404.5 391.5M403.5 404.5L417.5 418.5M403.5 404.5L416.5 405.5M404.5 391.5L405.5 378.5M404.5 391.5L416.5 405.5M404.5 391.5L419.5 392.5M405.5 378.5L405.5 362.5M405.5 378.5L419.5 392.5M405.5 378.5L420.5 378.5M405.5 362.5L407.5 348.5M405.5 362.5L420.5 378.5M405.5 362.5L420.5 363.5M407.5 348.5L406.5 333.5M407.5 348.5L420.5 363.5M407.5 348.5L420.5 347.5M406.5 333.5L405.5 318.5M406.5 333.5L420.5 347.5M406.5 333.5L418.5 332.5M405.5 318.5L406.5 302.5M405.5 318.5L418.5 332.5M405.5 318.5L417.5 315.5M406.5 302.5L406.5 287.5M406.5 302.5L417.5 315.5M406.5 302.5L416.5 299.5M406.5 287.5L406.5 273.5M406.5 287.5L416.5 299.5M406.5 287.5L417.5 283.5M406.5 273.5L406.5 257.5M406.5 273.5L417.5 283.5M406.5 273.5L419.5 269.5M406.5 257.5L406.5 243.5M406.5 257.5L419.5 269.5M406.5 257.5L420.5 254.5M406.5 243.5L405.5 228.5M406.5 243.5L420.5 254.5M406.5 243.5L419.5 240.5M405.5 228.5L405.5 221.5M405.5 228.5L419.5 240.5M405.5 228.5L418.5 225.5M405.5 221.5L418.5 225.5M418.5 458.5L417.5 445.5M418.5 458.5L431.5 462.5M418.5 458.5L432.5 455.5M417.5 445.5L417.5 432.5M417.5 445.5L432.5 455.5M417.5 445.5L431.5 440.5M417.5 432.5L417.5 418.5M417.5 432.5L431.5 440.5M417.5 432.5L431.5 425.5M417.5 418.5L416.5 405.5M417.5 418.5L431.5 425.5M417.5 418.5L431.5 411.5M416.5 405.5L419.5 392.5M416.5 405.5L431.5 411.5M419.5 392.5L420.5 378.5M419.5 392.5L431.5 411.5M419.5 392.5L434.5 397.5M419.5 392.5L435.5 384.5M420.5 378.5L420.5 363.5M420.5 378.5L435.5 384.5M420.5 378.5L436.5 369.5M420.5 363.5L420.5 347.5M420.5 363.5L436.5 369.5M420.5 363.5L435.5 354.5M420.5 347.5L418.5 332.5M420.5 347.5L435.5 354.5M420.5 347.5L432.5 338.5M418.5 332.5L417.5 315.5M418.5 332.5L432.5 338.5M418.5 332.5L428.5 321.5M417.5 315.5L416.5 299.5M417.5 315.5L428.5 321.5M417.5 315.5L425.5 305.5M416.5 299.5L417.5 283.5M416.5 299.5L425.5 305.5M416.5 299.5L426.5 291.5M417.5 283.5L419.5 269.5M417.5 283.5L426.5 291.5M417.5 283.5L428.5 276.5M419.5 269.5L420.5 254.5M419.5 269.5L428.5 276.5M419.5 269.5L430.5 263.5M420.5 254.5L419.5 240.5M420.5 254.5L430.5 263.5M420.5 254.5L432.5 249.5M419.5 240.5L418.5 225.5M419.5 240.5L432.5 249.5M419.5 240.5L431.5 234.5M418.5 225.5L431.5 234.5M418.5 225.5L431.5 229.5M431.5 462.5L432.5 455.5M431.5 462.5L444.5 465.5M432.5 455.5L431.5 440.5M432.5 455.5L444.5 465.5M432.5 455.5L445.5 449.5M431.5 440.5L431.5 425.5M431.5 440.5L445.5 449.5M431.5 440.5L446.5 434.5M431.5 425.5L431.5 411.5M431.5 425.5L446.5 434.5M431.5 425.5L446.5 419.5M431.5 411.5L434.5 397.5M431.5 411.5L446.5 419.5M434.5 397.5L435.5 384.5M434.5 397.5L446.5 419.5M434.5 397.5L449.5 404.5M434.5 397.5L450.5 388.5M435.5 384.5L436.5 369.5M435.5 384.5L450.5 388.5M436.5 369.5L435.5 354.5M436.5 369.5L450.5 388.5M436.5 369.5L451.5 374.5M436.5 369.5L449.5 360.5M435.5 354.5L432.5 338.5M435.5 354.5L449.5 360.5M435.5 354.5L446.5 344.5M432.5 338.5L428.5 321.5M432.5 338.5L446.5 344.5M432.5 338.5L441.5 329.5M428.5 321.5L425.5 305.5M428.5 321.5L441.5 329.5M428.5 321.5L438.5 315.5M425.5 305.5L426.5 291.5M425.5 305.5L438.5 315.5M425.5 305.5L436.5 301.5M426.5 291.5L428.5 276.5M426.5 291.5L436.5 301.5M426.5 291.5L436.5 286.5M428.5 276.5L430.5 263.5M428.5 276.5L436.5 286.5M428.5 276.5L440.5 274.5M430.5 263.5L432.5 249.5M430.5 263.5L440.5 274.5M430.5 263.5L442.5 259.5M432.5 249.5L431.5 234.5M432.5 249.5L442.5 259.5M432.5 249.5L444.5 247.5M431.5 234.5L431.5 229.5M431.5 234.5L444.5 247.5M431.5 234.5L444.5 232.5M431.5 229.5L444.5 232.5M444.5 465.5L445.5 449.5M444.5 465.5L457.5 469.5M444.5 465.5L457.5 461.5M445.5 449.5L446.5 434.5M445.5 449.5L457.5 461.5M445.5 449.5L458.5 446.5M446.5 434.5L446.5 419.5M446.5 434.5L458.5 446.5M446.5 434.5L458.5 430.5M446.5 419.5L449.5 404.5M446.5 419.5L458.5 430.5M446.5 419.5L460.5 417.5M449.5 404.5L450.5 388.5M449.5 404.5L460.5 417.5M449.5 404.5L461.5 400.5M450.5 388.5L451.5 374.5M450.5 388.5L461.5 400.5M450.5 388.5L463.5 387.5M451.5 374.5L449.5 360.5M451.5 374.5L463.5 387.5M451.5 374.5L463.5 372.5M449.5 360.5L446.5 344.5M449.5 360.5L463.5 372.5M449.5 360.5L460.5 359.5M449.5 360.5L456.5 344.5M446.5 344.5L441.5 329.5M446.5 344.5L456.5 344.5M446.5 344.5L453.5 330.5M441.5 329.5L438.5 315.5M441.5 329.5L453.5 330.5M441.5 329.5L451.5 317.5M438.5 315.5L436.5 301.5M438.5 315.5L451.5 317.5M436.5 301.5L436.5 286.5M436.5 301.5L451.5 317.5M436.5 301.5L450.5 302.5M436.5 286.5L440.5 274.5M436.5 286.5L450.5 302.5M436.5 286.5L451.5 288.5M440.5 274.5L442.5 259.5M440.5 274.5L451.5 288.5M440.5 274.5L455.5 274.5M442.5 259.5L444.5 247.5M442.5 259.5L455.5 274.5M442.5 259.5L456.5 259.5M444.5 247.5L444.5 232.5M444.5 247.5L456.5 259.5M444.5 247.5L457.5 243.5M444.5 232.5L457.5 243.5M444.5 232.5L457.5 236.5M457.5 469.5L457.5 461.5M457.5 469.5L470.5 473.5M457.5 461.5L458.5 446.5M457.5 461.5L470.5 473.5M457.5 461.5L470.5 458.5M458.5 446.5L458.5 430.5M458.5 446.5L470.5 458.5M458.5 446.5L470.5 443.5M458.5 430.5L460.5 417.5M458.5 430.5L470.5 443.5M458.5 430.5L470.5 427.5M460.5 417.5L461.5 400.5M460.5 417.5L470.5 427.5M460.5 417.5L471.5 413.5M461.5 400.5L463.5 387.5M461.5 400.5L471.5 413.5M461.5 400.5L472.5 399.5M463.5 387.5L463.5 372.5M463.5 387.5L472.5 399.5M463.5 387.5L472.5 385.5M463.5 372.5L460.5 359.5M463.5 372.5L472.5 385.5M463.5 372.5L472.5 370.5M460.5 359.5L456.5 344.5M460.5 359.5L472.5 370.5M460.5 359.5L471.5 356.5M456.5 344.5L453.5 330.5M456.5 344.5L471.5 356.5M456.5 344.5L468.5 341.5M453.5 330.5L451.5 317.5M453.5 330.5L468.5 341.5M453.5 330.5L468.5 328.5M451.5 317.5L450.5 302.5M451.5 317.5L468.5 328.5M451.5 317.5L467.5 313.5M450.5 302.5L451.5 288.5M450.5 302.5L467.5 313.5M450.5 302.5L467.5 299.5M451.5 288.5L455.5 274.5M451.5 288.5L467.5 299.5M451.5 288.5L469.5 285.5M455.5 274.5L456.5 259.5M455.5 274.5L469.5 285.5M455.5 274.5L470.5 271.5M456.5 259.5L457.5 243.5M456.5 259.5L470.5 271.5M456.5 259.5L469.5 256.5M457.5 243.5L457.5 236.5M457.5 243.5L469.5 256.5M457.5 243.5L470.5 240.5M457.5 236.5L470.5 240.5M470.5 473.5L470.5 458.5M470.5 473.5L483.5 476.5M470.5 473.5L483.5 469.5M470.5 458.5L470.5 443.5M470.5 458.5L483.5 469.5M470.5 458.5L481.5 454.5M470.5 443.5L470.5 427.5M470.5 443.5L481.5 454.5M470.5 443.5L481.5 439.5M470.5 427.5L471.5 413.5M470.5 427.5L481.5 439.5M470.5 427.5L481.5 424.5M471.5 413.5L472.5 399.5M471.5 413.5L481.5 424.5M471.5 413.5L481.5 409.5M472.5 399.5L472.5 385.5M472.5 399.5L481.5 409.5M472.5 399.5L482.5 395.5M472.5 385.5L472.5 370.5M472.5 385.5L482.5 395.5M472.5 385.5L484.5 380.5M472.5 370.5L471.5 356.5M472.5 370.5L484.5 380.5M472.5 370.5L484.5 367.5M471.5 356.5L468.5 341.5M471.5 356.5L484.5 367.5M471.5 356.5L483.5 351.5M468.5 341.5L468.5 328.5M468.5 341.5L483.5 351.5M468.5 341.5L482.5 336.5M468.5 328.5L467.5 313.5M468.5 328.5L482.5 336.5M468.5 328.5L482.5 322.5M467.5 313.5L467.5 299.5M467.5 313.5L482.5 322.5M467.5 313.5L482.5 307.5M467.5 299.5L469.5 285.5M467.5 299.5L482.5 307.5M467.5 299.5L483.5 293.5M469.5 285.5L470.5 271.5M469.5 285.5L483.5 293.5M469.5 285.5L484.5 280.5M470.5 271.5L469.5 256.5M470.5 271.5L484.5 280.5M470.5 271.5L483.5 266.5M469.5 256.5L470.5 240.5M469.5 256.5L483.5 266.5M469.5 256.5L483.5 251.5M470.5 240.5L483.5 251.5M470.5 240.5L483.5 243.5M483.5 476.5L483.5 469.5M483.5 476.5L496.5 480.5M483.5 469.5L481.5 454.5M483.5 469.5L496.5 480.5M483.5 469.5L496.5 466.5M481.5 454.5L481.5 439.5M481.5 454.5L496.5 466.5M481.5 454.5L496.5 451.5M481.5 439.5L481.5 424.5M481.5 439.5L496.5 451.5M481.5 439.5L496.5 436.5M481.5 424.5L481.5 409.5M481.5 424.5L496.5 436.5M481.5 424.5L496.5 422.5M481.5 409.5L482.5 395.5M481.5 409.5L496.5 422.5M481.5 409.5L496.5 407.5M482.5 395.5L484.5 380.5M482.5 395.5L496.5 407.5M482.5 395.5L496.5 393.5M484.5 380.5L484.5 367.5M484.5 380.5L496.5 393.5M484.5 380.5L496.5 378.5M484.5 367.5L483.5 351.5M484.5 367.5L496.5 378.5M484.5 367.5L496.5 364.5M483.5 351.5L482.5 336.5M483.5 351.5L496.5 364.5M483.5 351.5L496.5 349.5M482.5 336.5L482.5 322.5M482.5 336.5L496.5 349.5M482.5 336.5L496.5 334.5M482.5 322.5L482.5 307.5M482.5 322.5L496.5 334.5M482.5 322.5L496.5 320.5M482.5 307.5L483.5 293.5M482.5 307.5L496.5 320.5M482.5 307.5L496.5 305.5M483.5 293.5L484.5 280.5M483.5 293.5L496.5 305.5M483.5 293.5L496.5 291.5M484.5 280.5L483.5 266.5M484.5 280.5L496.5 291.5M484.5 280.5L496.5 276.5M483.5 266.5L483.5 251.5M483.5 266.5L496.5 276.5M483.5 266.5L496.5 262.5M483.5 251.5L483.5 243.5M483.5 251.5L496.5 262.5M483.5 251.5L496.5 247.5M483.5 243.5L496.5 247.5M496.5 480.5L496.5 466.5M496.5 466.5L496.5 451.5M496.5 451.5L496.5 436.5M496.5 436.5L496.5 422.5M496.5 422.5L496.5 407.5M496.5 407.5L496.5 393.5M496.5 393.5L496.5 378.5M496.5 378.5L496.5 364.5M496.5 364.5L496.5 349.5M496.5 349.5L496.5 334.5M496.5 334.5L496.5 320.5M496.5 320.5L496.5 305.5M496.5 305.5L496.5 291.5M496.5 291.5L496.5 276.5M496.5 276.5L496.5 262.5M496.5 262.5L496.5 247.5M452.5 166.5L467.5 170.5M452.5 166.5L445.5 172.5M452.5 166.5L452.5 174.5M467.5 170.5L482.5 174.5M467.5 170.5L452.5 174.5M467.5 170.5L468.5 178.5M482.5 174.5L497.5 179.5M482.5 174.5L468.5 178.5M482.5 174.5L484.5 183.5M497.5 179.5L511.5 183.5M497.5 179.5L484.5 183.5M497.5 179.5L501.5 188.5M511.5 183.5L526.5 187.5M511.5 183.5L501.5 188.5M511.5 183.5L514.5 192.5M526.5 187.5L541.5 191.5M526.5 187.5L514.5 192.5M526.5 187.5L525.5 196.5M541.5 191.5L556.5 195.5M541.5 191.5L525.5 196.5M541.5 191.5L539.5 200.5M556.5 195.5L539.5 200.5M556.5 195.5L548.5 202.5M445.5 172.5L452.5 174.5M445.5 172.5L437.5 179.5M452.5 174.5L468.5 178.5M452.5 174.5L437.5 179.5M452.5 174.5L451.5 181.5M468.5 178.5L484.5 183.5M468.5 178.5L451.5 181.5M468.5 178.5L470.5 185.5M484.5 183.5L501.5 188.5M484.5 183.5L470.5 185.5M484.5 183.5L486.5 190.5M501.5 188.5L514.5 192.5M501.5 188.5L486.5 190.5M501.5 188.5L499.5 196.5M514.5 192.5L525.5 196.5M514.5 192.5L499.5 196.5M514.5 192.5L510.5 201.5M525.5 196.5L539.5 200.5M525.5 196.5L510.5 201.5M525.5 196.5L523.5 205.5M539.5 200.5L548.5 202.5M539.5 200.5L523.5 205.5M539.5 200.5L541.5 208.5M548.5 202.5L541.5 208.5M437.5 179.5L451.5 181.5M437.5 179.5L430.5 185.5M437.5 179.5L436.5 186.5M451.5 181.5L470.5 185.5M451.5 181.5L436.5 186.5M451.5 181.5L453.5 188.5M470.5 185.5L486.5 190.5M470.5 185.5L453.5 188.5M470.5 185.5L468.5 191.5M486.5 190.5L499.5 196.5M486.5 190.5L468.5 191.5M486.5 190.5L481.5 196.5M499.5 196.5L510.5 201.5M499.5 196.5L481.5 196.5M499.5 196.5L493.5 204.5M510.5 201.5L523.5 205.5M510.5 201.5L493.5 204.5M510.5 201.5L505.5 210.5M523.5 205.5L541.5 208.5M523.5 205.5L505.5 210.5M523.5 205.5L524.5 214.5M541.5 208.5L524.5 214.5M541.5 208.5L533.5 215.5M430.5 185.5L436.5 186.5M430.5 185.5L422.5 192.5M436.5 186.5L453.5 188.5M436.5 186.5L422.5 192.5M436.5 186.5L438.5 194.5M453.5 188.5L468.5 191.5M453.5 188.5L438.5 194.5M453.5 188.5L454.5 195.5M468.5 191.5L481.5 196.5M468.5 191.5L454.5 195.5M468.5 191.5L463.5 197.5M481.5 196.5L493.5 204.5M481.5 196.5L463.5 197.5M481.5 196.5L475.5 205.5M493.5 204.5L505.5 210.5M493.5 204.5L475.5 205.5M493.5 204.5L490.5 213.5M505.5 210.5L524.5 214.5M505.5 210.5L490.5 213.5M505.5 210.5L507.5 219.5M524.5 214.5L533.5 215.5M524.5 214.5L507.5 219.5M524.5 214.5L526.5 221.5M533.5 215.5L526.5 221.5M422.5 192.5L438.5 194.5M422.5 192.5L415.5 198.5M422.5 192.5L424.5 201.5M438.5 194.5L454.5 195.5M438.5 194.5L424.5 201.5M438.5 194.5L440.5 202.5M438.5 194.5L450.5 202.5M454.5 195.5L463.5 197.5M454.5 195.5L450.5 202.5M463.5 197.5L475.5 205.5M463.5 197.5L450.5 202.5M463.5 197.5L460.5 208.5M475.5 205.5L490.5 213.5M475.5 205.5L460.5 208.5M475.5 205.5L474.5 216.5M490.5 213.5L507.5 219.5M490.5 213.5L474.5 216.5M490.5 213.5L493.5 224.5M507.5 219.5L526.5 221.5M507.5 219.5L493.5 224.5M507.5 219.5L510.5 227.5M507.5 219.5L518.5 228.5M526.5 221.5L518.5 228.5M415.5 198.5L424.5 201.5M415.5 198.5L407.5 205.5M424.5 201.5L440.5 202.5M424.5 201.5L407.5 205.5M424.5 201.5L425.5 208.5M440.5 202.5L450.5 202.5M440.5 202.5L425.5 208.5M440.5 202.5L439.5 210.5M450.5 202.5L460.5 208.5M450.5 202.5L439.5 210.5M460.5 208.5L474.5 216.5M460.5 208.5L439.5 210.5M460.5 208.5L448.5 213.5M460.5 208.5L462.5 220.5M474.5 216.5L493.5 224.5M474.5 216.5L462.5 220.5M474.5 216.5L479.5 226.5M493.5 224.5L510.5 227.5M493.5 224.5L479.5 226.5M493.5 224.5L496.5 232.5M510.5 227.5L518.5 228.5M510.5 227.5L496.5 232.5M510.5 227.5L511.5 234.5M518.5 228.5L511.5 234.5M407.5 205.5L425.5 208.5M407.5 205.5L400.5 211.5M407.5 205.5L408.5 213.5M425.5 208.5L439.5 210.5M425.5 208.5L408.5 213.5M425.5 208.5L424.5 217.5M439.5 210.5L448.5 213.5M439.5 210.5L424.5 217.5M439.5 210.5L438.5 221.5M448.5 213.5L462.5 220.5M448.5 213.5L438.5 221.5M448.5 213.5L450.5 224.5M462.5 220.5L479.5 226.5M462.5 220.5L450.5 224.5M462.5 220.5L466.5 230.5M479.5 226.5L496.5 232.5M479.5 226.5L466.5 230.5M479.5 226.5L482.5 235.5M496.5 232.5L511.5 234.5M496.5 232.5L482.5 235.5M496.5 232.5L496.5 239.5M511.5 234.5L496.5 239.5M511.5 234.5L503.5 241.5M400.5 211.5L408.5 213.5M400.5 211.5L392.5 217.5M408.5 213.5L424.5 217.5M408.5 213.5L392.5 217.5M408.5 213.5L407.5 222.5M424.5 217.5L438.5 221.5M424.5 217.5L407.5 222.5M424.5 217.5L422.5 226.5M438.5 221.5L450.5 224.5M438.5 221.5L422.5 226.5M438.5 221.5L437.5 230.5M450.5 224.5L466.5 230.5M450.5 224.5L437.5 230.5M450.5 224.5L451.5 234.5M466.5 230.5L482.5 235.5M466.5 230.5L451.5 234.5M466.5 230.5L466.5 239.5M482.5 235.5L496.5 239.5M482.5 235.5L466.5 239.5M482.5 235.5L481.5 243.5M496.5 239.5L503.5 241.5M496.5 239.5L481.5 243.5M496.5 239.5L496.5 247.5M503.5 241.5L496.5 247.5M392.5 217.5L407.5 222.5M407.5 222.5L422.5 226.5M422.5 226.5L437.5 230.5M437.5 230.5L451.5 234.5M451.5 234.5L466.5 239.5M466.5 239.5L481.5 243.5M481.5 243.5L496.5 247.5" fill="none" stroke="#1070d0" stroke-width="1" shape-rendering="crispEdges"/>
<g fill-opacity="0.375" shape-rendering="crispEdges">
<path d="M678.5 425.5L669 433.5L669 417.5L678.5 409.5Z" fill="#476ee6"/>
<path d="M678.5 409.5L669 417.5L669 401L678.5 393Z" fill="#4776ee"/>
<path d="M678.5 393L669 401L669 385L678.5 377Z" fill="#477bf2"/>
<path d="M678.5 377L669 385L669 369L678.5 361Z" fill="#4685fa"/>
<path d="M678.5 361L669 369L669 352.5L678.5 344.5Z" fill="#4391fe"/>
<path d="M678.5 344.5L669 352.5L669 336.5L678.5 328.5Z" fill="#38a5fb"/>
<path d="M678.5 328.5L669 336.5L669 320L678.5 312Z" fill="#2ab9ee"/>
<path d="M678.5 312L669 320L669 304L678.5 296Z" fill="#22c5e2"/>
<path d="M678.5 296L669 304L669 288L678.5 280Z" fill="#20c7df"/>
<path d="M678.5 280L669 288L669 271.5L678.5 263.5Z" fill="#22c5e2"/>
<path d="M678.5 263.5L669 271.5L669 255.5L678.5 247.5Z" fill="#25c0e7"/>
<path d="M678.5 247.5L669 255.5L669 239.5L678.5 231Z" fill="#28bceb"/>
<path d="M678.5 231L669 239.5L669 223L678.5 215Z" fill="#2eb4f2"/>
<path d="M678.5 215L669 223L669 207L678.5 199Z" fill="#31aff5"/>
<path d="M678.5 199L669 207L669 191L678.5 182.5Z" fill="#33adf7"/>
<path d="M678.5 182.5L669 191L669 174.5L678.5 166.5Z" fill="#35abf8"/>
<path d="M669 433.5L660 441.5L660 425.5L669 417.5Z" fill="#4669e0"/>
<path d="M669 417.5L660 425.5L660 409L669 401Z" fill="#4771e9"/>
<path d="M669 401L660 409L660 393L669 385Z" fill="#4778f0"/>
<path d="M669 385L660 393L660 377L669 369Z" fill="#4680f6"/>
<path d="M669 369L660 377L660 360.5L669 352.5Z" fill="#458afc"/>
<path d="M669 352.5L660 360.5L660 344.5L669 336.5Z" fill="#4099ff"/>
<path d="M669 336.5L660 344.5L660 328.5L669 320Z" fill="#2fb2f4"/>
<path d="M669 320L660 328.5L660 312L669 304Z" fill="#23c3e4"/>
<path d="M669 304L660 312L660 296L669 288Z" fill="#1fc9dd"/>
<path d="M669 288L660 296L660 280L669 271.5Z" fill="#20c7df"/>
<path d="M669 271.5L660 280L660 263.5L669 255.5Z" fill="#23c3e4"/>
<path d="M669 255.5L660 263.5L660 247.5L669 239.5Z" fill="#28bceb"/>
<path d="M669 239.5L660 247.5L660 231L669 223Z" fill="#2cb7f0"/>
<path d="M669 223L660 231L660 215L669 207Z" fill="#2fb2f4"/>
<path d="M669 207L660 215L660 199L669 191Z" fill="#31aff5"/>
<path d="M669 191L660 199L660 182.5L669 174.5Z" fill="#33adf7"/>
<path d="M660 441.5L650.5 449.5L650.5 433.5L660 425.5Z" fill="#4664da"/>
<path d="M660 425.5L650.5 433.5L650.5 417.5L660 409Z" fill="#466be3"/>
<path d="M660 409L650.5 417.5L650.5 401L660 393Z" fill="#4776ee"/>
<path d="M660 393L650.5 401L650.5 385L660 377Z" fill="#467df4"/>
<path d="M660 377L650.5 385L650.5 369L660 360.5Z" fill="#4685fa"/>
<path d="M660 360.5L650.5 369L650.5 352.5L660 344.5Z" fill="#448ffe"/>
<path d="M660 344.5L650.5 352.5L650.5 336.5L660 328.5Z" fill="#37a8fa"/>
<path d="M660 328.5L650.5 336.5L650.5 320L660 312Z" fill="#25c0e7"/>
<path d="M660 312L650.5 320L650.5 304L660 296Z" fill="#1fc9dd"/>
<path d="M660 296L650.5 304L650.5 288L660 280Z" fill="#1fc9dd"/>
<path d="M660 280L650.5 288L650.5 271.5L660 263.5Z" fill="#23c3e4"/>
<path d="M660 263.5L650.5 271.5L650.5 255.5L660 247.5Z" fill="#27bee9"/>
<path d="M660 247.5L650.5 255.5L650.5 239L660 231Z" fill="#2ab9ee"/>
<path d="M660 231L650.5 239L650.5 223L660 215Z" fill="#2eb4f2"/>
<path d="M660 215L650.5 223L650.5 207L660 199Z" fill="#2fb2f4"/>
<path d="M660 199L650.5 207L650.5 190.5L660 182.5Z" fill="#2fb2f4"/>
<path d="M650.5 449.5L641 458L641 441.5L650.5 433.5Z" fill="#455ccf"/>
<path d="M650.5 433.5L641 441.5L641 425.5L650.5 417.5Z" fill="#4669e0"/>
<path d="M650.5 417.5L641 425.5L641 409L650.5 401Z" fill="#4773eb"/>
<path d="M650.5 401L641 409L641 393L650.5 385Z" fill="#467df4"/>
<path d="M650.5 385L641 393L641 377L650.5 369Z" fill="#4685fa"/>
<path d="M650.5 369L641 377L641 360.5L650.5 352.5Z" fill="#458cfd"/>
<path d="M650.5 352.5L641 360.5L641 344.5L650.5 336.5Z" fill="#3e9bfe"/>
<path d="M650.5 336.5L641 344.5L641 328L650.5 320Z" fill="#2ab9ee"/>
<path d="M650.5 320L641 328L641 312L650.5 304Z" fill="#20c7df"/>
<path d="M650.5 304L641 312L641 296L650.5 288Z" fill="#20c7df"/>
<path d="M650.5 288L641 296L641 279.5L650.5 271.5Z" fill="#23c3e4"/>
<path d="M650.5 271.5L641 279.5L641 263.5L650.5 255.5Z" fill="#28bceb"/>
<path d="M650.5 255.5L641 263.5L641 247.5L650.5 239Z" fill="#2cb7f0"/>
<path d="M650.5 239L641 247.5L641 231L650.5 223Z" fill="#2eb4f2"/>
<path d="M650.5 223L641 231L641 215L650.5 207Z" fill="#2eb4f2"/>
<path d="M650.5 207L641 215L641 199L650.5 190.5Z" fill="#2eb4f2"/>
<path d="M641 458L631.5 466L631.5 449.5L641 441.5Z" fill="#4456c7"/>
<path d="M641 441.5L631.5 449.5L631.5 433.5L641 425.5Z" fill="#4664da"/>
<path d="M641 425.5L631.5 433.5L631.5 417L641 409Z" fill="#476ee6"/>
<path d="M641 409L631.5 417L631.5 401L641 393Z" fill="#477bf2"/>
<path d="M641 393L631.5 401L631.5 385L641 377Z" fill="#4685fa"/>
<path d="M641 377L631.5 385L631.5 368.5L641 360.5Z" fill="#448ffe"/>
<path d="M641 360.5L631.5 368.5L631.5 352.5L641 344.5Z" fill="#4099ff"/>
<path d="M641 344.5L631.5 352.5L631.5 336.5L641 328Z" fill="#33adf7"/>
<path d="M641 328L631.5 336.5L631.5 320L641 312Z" fill="#25c0e7"/>
<path d="M641 312L631.5 320L631.5 304L641 296Z" fill="#23c3e4"/>
<path d="M641 296L631.5 304L631.5 288L641 279.5Z" fill="#25c0e7"/>
<path d="M641 279.5L631.5 288L631.5 271.5L641 263.5Z" fill="#2ab9ee"/>
<path d="M641 263.5L631.5 271.5L631.5 255.5L641 247.5Z" fill="#2fb2f4"/>
<path d="M641 247.5L631.5 255.5L631.5 239L641 231Z" fill="#2fb2f4"/>
<path d="M641 231L631.5 239L631.5 223L641 215Z" fill="#2fb2f4"/>
<path d="M641 215L631.5 223L631.5 207L641 199Z" fill="#2cb7f0"/>
<path d="M631.5 466L622 474L622 457.5L631.5 449.5Z" fill="#434eba"/>
<path d="M631.5 449.5L622 457.5L622 441.5L631.5 433.5Z" fill="#455ccf"/>
<path d="M631.5 433.5L622 441.5L622 425.5L631.5 417Z" fill="#466be3"/>
<path d="M631.5 417L622 425.5L622 409L631.5 401Z" fill="#4776ee"/>
<path d="M631.5 401L622 409L622 393L631.5 385Z" fill="#4682f8"/>
<path d="M631.5 385L622 393L622 377L631.5 368.5Z" fill="#448ffe"/>
<path d="M631.5 368.5L622 377L622 360.5L631.5 352.5Z" fill="#4196ff"/>
<path d="M631.5 352.5L622 360.5L622 344.5L631.5 336.5Z" fill="#3ba0fd"/>
<path d="M631.5 336.5L622 344.5L622 328L631.5 320Z" fill="#31aff5"/>
<path d="M631.5 320L622 328L622 312L631.5 304Z" fill="#2ab9ee"/>
<path d="M631.5 304L622 312L622 296L631.5 288Z" fill="#2ab9ee"/>
<path d="M631.5 288L622 296L622 279.5L631.5 271.5Z" fill="#2fb2f4"/>
<path d="M631.5 271.5L622 279.5L622 263.5L631.5 255.5Z" fill="#33adf7"/>
<path d="M631.5 255.5L622 263.5L622 247L631.5 239Z" fill="#35abf8"/>
<path d="M631.5 239L622 247L622 231L631.5 223Z" fill="#35abf8"/>
<path d="M631.5 223L622 231L622 215L631.5 207Z" fill="#2fb2f4"/>
<path d="M622 474L613 482L613 466L622 457.5Z" fill="#424bb5"/>
<path d="M622 457.5L613 466L613 449.5L622 441.5Z" fill="#4456c7"/>
<path d="M622 441.5L613 449.5L613 433.5L622 425.5Z" fill="#4664da"/>
<path d="M622 425.5L613 433.5L613 417L622 409Z" fill="#4771e9"/>
<path d="M622 409L613 417L613 401L622 393Z" fill="#467df4"/>
<path d="M622 393L613 401L613 385L622 377Z" fill="#4687fb"/>
<path d="M622 377L613 385L613 368.5L622 360.5Z" fill="#4294ff"/>
<path d="M622 360.5L613 368.5L613 352.5L622 344.5Z" fill="#4196ff"/>
<path d="M622 344.5L613 352.5L613 336L622 328Z" fill="#3d9efe"/>
<path d="M622 328L613 336L613 320L622 312Z" fill="#37a8fa"/>
<path d="M622 312L613 320L613 304L622 296Z" fill="#35abf8"/>
<path d="M622 296L613 304L613 287.5L622 279.5Z" fill="#37a8fa"/>
<path d="M622 279.5L613 287.5L613 271.5L622 263.5Z" fill="#3aa3fc"/>
<path d="M622 263.5L613 271.5L613 255.5L622 247Z" fill="#3d9efe"/>
<path d="M622 247L613 255.5L613 239L622 231Z" fill="#3d9efe"/>
<path d="M622 231L613 239L613 223L622 215Z" fill="#37a8fa"/>
<path d="M613 482L603.5 490L603.5 474L613 466Z" fill="#4249b1"/>
<path d="M613 466L603.5 474L603.5 457.5L613 449.5Z" fill="#434eba"/>
<path d="M613 449.5L603.5 457.5L603.5 441.5L613 433.5Z" fill="#455ccf"/>
<path d="M613 433.5L603.5 441.5L603.5 425L613 417Z" fill="#466be3"/>
<path d="M613 417L603.5 425L603.5 409L613 401Z" fill="#4776ee"/>
<path d="M613 401L603.5 409L603.5 393L613 385Z" fill="#467df4"/>
<path d="M613 385L603.5 393L603.5 376.5L613 368.5Z" fill="#4687fb"/>
<path d="M613 368.5L603.5 376.5L603.5 360.5L613 352.5Z" fill="#458cfd"/>
<path d="M613 352.5L603.5 360.5L603.5 344.5L613 336Z" fill="#458afc"/>
<path d="M613 336L603.5 344.5L603.5 328L613 320Z" fill="#4391fe"/>
<path d="M613 320L603.5 328L603.5 312L613 304Z" fill="#4099ff"/>
<path d="M613 304L603.5 312L603.5 296L613 287.5Z" fill="#4099ff"/>
<path d="M613 287.5L603.5 296L603.5 279.5L613 271.5Z" fill="#4196ff"/>
<path d="M613 271.5L603.5 279.5L603.5 263.5L613 255.5Z" fill="#4294ff"/>
<path d="M613 255.5L603.5 263.5L603.5 247L613 239Z" fill="#448ffe"/>
<path d="M613 239L603.5 247L603.5 231L613 223Z" fill="#4294ff"/>
<path d="M603.5 490L594 498L594 482L603.5 474Z" fill="#4249b1"/>
<path d="M603.5 474L594 482L594 465.5L603.5 457.5Z" fill="#424bb5"/>
<path d="M603.5 457.5L594 465.5L594 449.5L603.5 441.5Z" fill="#4454c3"/>
<path d="M603.5 441.5L594 449.5L594 433.5L603.5 425Z" fill="#4661d6"/>
<path d="M603.5 425L594 433.5L594 417L603.5 409Z" fill="#466be3"/>
<path d="M603.5 409L594 417L594 401L603.5 393Z" fill="#4771e9"/>
<path d="M603.5 393L594 401L594 385L603.5 376.5Z" fill="#4776ee"/>
<path d="M603.5 376.5L594 385L594 368.5L603.5 360.5Z" fill="#4778f0"/>
<path d="M603.5 360.5L594 368.5L594 352.5L603.5 344.5Z" fill="#4776ee"/>
<path d="M603.5 344.5L594 352.5L594 336L603.5 328Z" fill="#4778f0"/>
<path d="M603.5 328L594 336L594 320L603.5 312Z" fill="#4685fa"/>
<path d="M603.5 312L594 320L594 304L603.5 296Z" fill="#4685fa"/>
<path d="M603.5 296L594 304L594 287.5L603.5 279.5Z" fill="#4685fa"/>
<path d="M603.5 279.5L594 287.5L594 271.5L603.5 263.5Z" fill="#4685fa"/>
<path d="M603.5 263.5L594 271.5L594 255L603.5 247Z" fill="#4680f6"/>
<path d="M603.5 247L594 255L594 239L603.5 231Z" fill="#467df4"/>
<path d="M594 498L585 506L585 490L594 482Z" fill="#424bb5"/>
<path d="M594 482L585 490L585 474L594 465.5Z" fill="#424bb5"/>
<path d="M594 465.5L585 474L585 457.5L594 449.5Z" fill="#434eba"/>
<path d="M594 449.5L585 457.5L585 441.5L594 433.5Z" fill="#4559cb"/>
<path d="M594 433.5L585 441.5L585 425L594 417Z" fill="#4664da"/>
<path d="M594 417L585 425L585 409L594 401Z" fill="#4666dd"/>
<path d="M594 401L585 409L585 393L594 385Z" fill="#4664da"/>
<path d="M594 385L585 393L585 376.5L594 368.5Z" fill="#4666dd"/>
<path d="M594 368.5L585 376.5L585 360.5L594 352.5Z" fill="#4661d6"/>
<path d="M594 352.5L585 360.5L585 344L594 336Z" fill="#455ed3"/>
<path d="M594 336L585 344L585 328L594 320Z" fill="#466be3"/>
<path d="M594 320L585 328L585 312L594 304Z" fill="#4773eb"/>
<path d="M594 304L585 312L585 295.5L594 287.5Z" fill="#466be3"/>
<path d="M594 287.5L585 295.5L585 279.5L594 271.5Z" fill="#4771e9"/>
<path d="M594 271.5L585 279.5L585 263.5L594 255Z" fill="#4771e9"/>
<path d="M594 255L585 263.5L585 247L594 239Z" fill="#4666dd"/>
<path d="M585 506L575.5 514L575.5 498L585 490Z" fill="#4249b1"/>
<path d="M585 490L575.5 498L575.5 482L585 474Z" fill="#4249b1"/>
<path d="M585 474L575.5 482L575.5 465.5L585 457.5Z" fill="#424bb5"/>
<path d="M585 457.5L575.5 465.5L575.5 449.5L585 441.5Z" fill="#4454c3"/>
<path d="M585 441.5L575.5 449.5L575.5 433L585 425Z" fill="#455ccf"/>
<path d="M585 425L575.5 433L575.5 417L585 409Z" fill="#455ed3"/>
<path d="M585 409L575.5 417L575.5 401L585 393Z" fill="#4559cb"/>
<path d="M585 393L575.5 401L575.5 384.5L585 376.5Z" fill="#4456c7"/>
<path d="M585 376.5L575.5 384.5L575.5 368.5L585 360.5Z" fill="#4454c3"/>
<path d="M585 360.5L575.5 368.5L575.5 352.5L585 344Z" fill="#424bb5"/>
<path d="M585 344L575.5 352.5L575.5 336L585 328Z" fill="#4451bf"/>
<path d="M585 328L575.5 336L575.5 320L585 312Z" fill="#455ccf"/>
<path d="M585 312L575.5 320L575.5 304L585 295.5Z" fill="#4456c7"/>
<path d="M585 295.5L575.5 304L575.5 287.5L585 279.5Z" fill="#4454c3"/>
<path d="M585 279.5L575.5 287.5L575.5 271.5L585 263.5Z" fill="#455ccf"/>
<path d="M585 263.5L575.5 271.5L575.5 255L585 247Z" fill="#4451bf"/>
<path d="M575.5 514L566 522L566 506L575.5 498Z" fill="#4146ac"/>
<path d="M575.5 498L566 506L566 490L575.5 482Z" fill="#4249b1"/>
<path d="M575.5 482L566 490L566 473.5L575.5 465.5Z" fill="#4249b1"/>
<path d="M575.5 465.5L566 473.5L566 457.5L575.5 449.5Z" fill="#434eba"/>
<path d="M575.5 449.5L566 457.5L566 441.5L575.5 433Z" fill="#4559cb"/>
<path d="M575.5 433L566 441.5L566 425L575.5 417Z" fill="#455ed3"/>
<path d="M575.5 417L566 425L566 409L575.5 401Z" fill="#4559cb"/>
<path d="M575.5 401L566 409L566 393L575.5 384.5Z" fill="#434eba"/>
<path d="M575.5 384.5L566 393L566 376.5L575.5 368.5Z" fill="#434eba"/>
<path d="M575.5 368.5L566 376.5L566 360.5L575.5 352.5Z" fill="#4146ac"/>
<path d="M575.5 352.5L566 360.5L566 344L575.5 336Z" fill="#3f3e9c"/>
<path d="M575.5 336L566 344L566 328L575.5 320Z" fill="#4249b1"/>
<path d="M575.5 320L566 328L566 312L575.5 304Z" fill="#4146ac"/>
<path d="M575.5 304L566 312L566 295.5L575.5 287.5Z" fill="#3f3b97"/>
<path d="M575.5 287.5L566 295.5L566 279.5L575.5 271.5Z" fill="#4146ac"/>
<path d="M575.5 271.5L566 279.5L566 263L575.5 255Z" fill="#4146ac"/>
<path d="M566 522L556.5 530.5L556.5 514L566 506Z" fill="#4143a7"/>
<path d="M566 506L556.5 514L556.5 498L566 490Z" fill="#4146ac"/>
<path d="M566 490L556.5 498L556.5 482L566 473.5Z" fill="#4249b1"/>
<path d="M566 473.5L556.5 482L556.5 465.5L566 457.5Z" fill="#424bb5"/>
<path d="M566 457.5L556.5 465.5L556.5 449.5L566 441.5Z" fill="#4454c3"/>
<path d="M566 441.5L556.5 449.5L556.5 433L566 425Z" fill="#455ed3"/>
<path d="M566 425L556.5 433L556.5 417L566 409Z" fill="#4661d6"/>
<path d="M566 409L556.5 417L556.5 401L566 393Z" fill="#4456c7"/>
<path d="M566 393L556.5 401L556.5 384.5L566 376.5Z" fill="#4451bf"/>
<path d="M566 376.5L556.5 384.5L556.5 368.5L566 360.5Z" fill="#434eba"/>
<path d="M566 360.5L556.5 368.5L556.5 352L566 344Z" fill="#4146ac"/>
<path d="M566 344L556.5 352L556.5 336L566 328Z" fill="#4146ac"/>
<path d="M566 328L556.5 336L556.5 320L566 312Z" fill="#4146ac"/>
<path d="M566 312L556.5 320L556.5 303.5L566 295.5Z" fill="#3e3891"/>
<path d="M566 295.5L556.5 303.5L556.5 287.5L566 279.5Z" fill="#3f3b97"/>
<path d="M566 279.5L556.5 287.5L556.5 271.5L566 263Z" fill="#4143a7"/>
<path d="M556.5 530.5L547 538.5L547 522L556.5 514Z" fill="#4040a2"/>
<path d="M556.5 514L547 522L547 506L556.5 498Z" fill="#4143a7"/>
<path d="M556.5 498L547 506L547 490L556.5 482Z" fill="#4146ac"/>
<path d="M556.5 482L547 490L547 473.5L556.5 465.5Z" fill="#4249b1"/>
<path d="M556.5 465.5L547 473.5L547 457.5L556.5 449.5Z" fill="#4454c3"/>
<path d="M556.5 449.5L547 457.5L547 441L556.5 433Z" fill="#455ed3"/>
<path d="M556.5 433L547 441L547 425L556.5 417Z" fill="#4666dd"/>
<path d="M556.5 417L547 425L547 409L556.5 401Z" fill="#4664da"/>
<path d="M556.5 401L547 409L547 392.5L556.5 384.5Z" fill="#455ccf"/>
<path d="M556.5 384.5L547 392.5L547 376.5L556.5 368.5Z" fill="#455ccf"/>
<path d="M556.5 368.5L547 376.5L547 360.5L556.5 352Z" fill="#455ed3"/>
<path d="M556.5 352L547 360.5L547 344L556.5 336Z" fill="#455ed3"/>
<path d="M556.5 336L547 344L547 328L556.5 320Z" fill="#4456c7"/>
<path d="M556.5 320L547 328L547 312L556.5 303.5Z" fill="#424bb5"/>
<path d="M556.5 303.5L547 312L547 295.5L556.5 287.5Z" fill="#4143a7"/>
<path d="M556.5 287.5L547 295.5L547 279.5L556.5 271.5Z" fill="#434eba"/>
<path d="M547 538.5L538 546.5L538 530L547 522Z" fill="#4040a2"/>
<path d="M547 522L538 530L538 514L547 506Z" fill="#4143a7"/>
<path d="M547 506L538 514L538 498L547 490Z" fill="#4146ac"/>
<path d="M547 490L538 498L538 481.5L547 473.5Z" fill="#4249b1"/>
<path d="M547 473.5L538 481.5L538 465.5L547 457.5Z" fill="#4451bf"/>
<path d="M547 457.5L538 465.5L538 449.5L547 441Z" fill="#455ccf"/>
<path d="M547 441L538 449.5L538 433L547 425Z" fill="#4669e0"/>
<path d="M547 425L538 433L538 417L547 409Z" fill="#476ee6"/>
<path d="M547 409L538 417L538 401L547 392.5Z" fill="#466be3"/>
<path d="M547 392.5L538 401L538 384.5L547 376.5Z" fill="#4669e0"/>
<path d="M547 376.5L538 384.5L538 368.5L547 360.5Z" fill="#476ee6"/>
<path d="M547 360.5L538 368.5L538 352L547 344Z" fill="#4778f0"/>
<path d="M547 344L538 352L538 336L547 328Z" fill="#4771e9"/>
<path d="M547 328L538 336L538 320L547 312Z" fill="#4661d6"/>
<path d="M547 312L538 320L538 303.5L547 295.5Z" fill="#4559cb"/>
<path d="M547 295.5L538 303.5L538 287.5L547 279.5Z" fill="#455ed3"/>
<path d="M538 546.5L528.5 554.5L528.5 538.5L538 530Z" fill="#4040a2"/>
<path d="M538 530L528.5 538.5L528.5 522L538 514Z" fill="#4143a7"/>
<path d="M538 514L528.5 522L528.5 506L538 498Z" fill="#4146ac"/>
<path d="M538 498L528.5 506L528.5 490L538 481.5Z" fill="#4249b1"/>
<path d="M538 481.5L528.5 490L528.5 473.5L538 465.5Z" fill="#434eba"/>
<path d="M538 465.5L528.5 473.5L528.5 457.5L538 449.5Z" fill="#4559cb"/>
<path d="M538 449.5L528.5 457.5L528.5 441L538 433Z" fill="#4666dd"/>
<path d="M538 433L528.5 441L528.5 425L538 417Z" fill="#4771e9"/>
<path d="M538 417L528.5 425L528.5 409L538 401Z" fill="#4773eb"/>
<path d="M538 401L528.5 409L528.5 392.5L538 384.5Z" fill="#4771e9"/>
<path d="M538 384.5L528.5 392.5L528.5 376.5L538 368.5Z" fill="#4776ee"/>
<path d="M538 368.5L528.5 376.5L528.5 360L538 352Z" fill="#4680f6"/>
<path d="M538 352L528.5 360L528.5 344L538 336Z" fill="#4685fa"/>
<path d="M538 336L528.5 344L528.5 328L538 320Z" fill="#4776ee"/>
<path d="M538 320L528.5 328L528.5 311.5L538 303.5Z" fill="#4669e0"/>
<path d="M538 303.5L528.5 311.5L528.5 295.5L538 287.5Z" fill="#466be3"/>
<path d="M270.5 480.5L286.5 485L286.5 469L270.5 464.5Z" fill="#30123b"/>
<path d="M270.5 464.5L286.5 469L286.5 453L270.5 448Z" fill="#30123b"/>
<path d="M270.5 448L286.5 453L286.5 436.5L270.5 432Z" fill="#30123b"/>
<path d="M270.5 432L286.5 436.5L286.5 420.5L270.5 416Z" fill="#30123b"/>
<path d="M270.5 416L286.5 420.5L286.5 404L270.5 399.5Z" fill="#30123b"/>
<path d="M270.5 399.5L286.5 404L286.5 388L270.5 383.5Z" fill="#30123b"/>
<path d="M270.5 383.5L286.5 388L286.5 372L270.5 367Z" fill="#30123b"/>
<path d="M270.5 367L286.5 372L286.5 355.5L270.5 351Z" fill="#30123b"/>
<path d="M270.5 351L286.5 355.5L286.5 339.5L270.5 335Z" fill="#30123b"/>
<path d="M270.5 335L286.5 339.5L286.5 323L270.5 318.5Z" fill="#30123b"/>
<path d="M270.5 318.5L286.5 323L286.5 307L270.5 302.5Z" fill="#30123b"/>
<path d="M270.5 302.5L286.5 307L286.5 291L270.5 286Z" fill="#30123b"/>
<path d="M270.5 286L286.5 291L286.5 274.5L270.5 270Z" fill="#30123b"/>
<path d="M270.5 270L286.5 274.5L286.5 258.5L270.5 254Z" fill="#30123b"/>
<path d="M270.5 254L286.5 258.5L286.5 242.5L270.5 237.5Z" fill="#30123b"/>
<path d="M270.5 237.5L286.5 242.5L286.5 226L270.5 221.5Z" fill="#30123b"/>
<path d="M286.5 485L303 490L303 473.5L286.5 469Z" fill="#30123b"/>
<path d="M286.5 469L303 473.5L303 457.5L286.5 453Z" fill="#30123b"/>
<path d="M286.5 453L303 457.5L303 441L286.5 436.5Z" fill="#30123b"/>
<path d="M286.5 436.5L303 441L303 425L286.5 420.5Z" fill="#30123b"/>
<path d="M286.5 420.5L303 425L303 409L286.5 404Z" fill="#30123b"/>
<path d="M286.5 404L303 409L303 392.5L286.5 388Z" fill="#30123b"/>
<path d="M286.5 388L303 392.5L303 376.5L286.5 372Z" fill="#30123b"/>
<path d="M286.5 372L303 376.5L303 360L286.5 355.5Z" fill="#30123b"/>
<path d="M286.5 355.5L303 360L303 344L286.5 339.5Z" fill="#30123b"/>
<path d="M286.5 339.5L303 344L303 328L286.5 323Z" fill="#30123b"/>
<path d="M286.5 323L303 328L303 311.5L286.5 307Z" fill="#30123b"/>
<path d="M286.5 307L303 311.5L303 295.5L286.5 291Z" fill="#30123b"/>
<path d="M286.5 291L303 295.5L303 279.5L286.5 274.5Z" fill="#30123b"/>
<path d="M286.5 274.5L303 279.5L303 263L286.5 258.5Z" fill="#30123b"/>
<path d="M286.5 258.5L303 263L303 247L286.5 242.5Z" fill="#30123b"/>
<path d="M286.5 242.5L303 247L303 231L286.5 226Z" fill="#30123b"/>
<path d="M303 490L319 494.5L319 478L303 473.5Z" fill="#30123b"/>
<path d="M303 473.5L319 478L319 462L303 457.5Z" fill="#30123b"/>
<path d="M303 457.5L319 462L319 446L303 441Z" fill="#30123b"/>
<path d="M303 441L319 446L319 429.5L303 425Z" fill="#30123b"/>
<path d="M303 425L319 429.5L319 413.5L303 409Z" fill="#30123b"/>
<path d="M303 409L319 413.5L319 397L303 392.5Z" fill="#30123b"/>
<path d="M303 392.5L319 397L319 381L303 376.5Z" fill="#30123b"/>
<path d="M303 376.5L319 381L319 365L303 360Z" fill="#30123b"/>
<path d="M303 360L319 365L319 348.5L303 344Z" fill="#30123b"/>
<path d="M303 344L319 348.5L319 332.5L303 328Z" fill="#30123b"/>
<path d="M303 328L319 332.5L319 316.5L303 311.5Z" fill="#30123b"/>
<path d="M303 311.5L319 316.5L319 300L303 295.5Z" fill="#30123b"/>
<path d="M303 295.5L319 300L319 284L303 279.5Z" fill="#30123b"/>
<path d="M303 279.5L319 284L319 268L303 263Z" fill="#30123b"/>
<path d="M303 263L319 268L319 251.5L303 247Z" fill="#30123b"/>
<path d="M303 247L319 251.5L319 235.5L303 231Z" fill="#30123b"/>
<path d="M319 494.5L335 499L335 483L319 478Z" fill="#30123b"/>
<path d="M319 478L335 483L335 466.5L319 462Z" fill="#30123b"/>
<path d="M319 462L335 466.5L335 450.5L319 446Z" fill="#30123b"/>
<path d="M319 446L335 450.5L335 434L319 429.5Z" fill="#30123b"/>
<path d="M319 429.5L335 434L335 418L319 413.5Z" fill="#30123b"/>
<path d="M319 413.5L335 418L335 402L319 397Z" fill="#30123b"/>
<path d="M319 397L335 402L335 385.5L319 381Z" fill="#30123b"/>
<path d="M319 381L335 385.5L335 369.5L319 365Z" fill="#30123b"/>
<path d="M319 365L335 369.5L335 353.5L319 348.5Z" fill="#30123b"/>
<path d="M319 348.5L335 353.5L335 337L319 332.5Z" fill="#30123b"/>
<path d="M319 332.5L335 337L335 321L319 316.5Z" fill="#30123b"/>
<path d="M319 316.5L335 321L335 305L319 300Z" fill="#30123b"/>
<path d="M319 300L335 305L335 288.5L319 284Z" fill="#30123b"/>
<path d="M319 284L335 288.5L335 272.5L319 268Z" fill="#30123b"/>
<path d="M319 268L335 272.5L335 256L319 251.5Z" fill="#30123b"/>
<path d="M319 251.5L335 256L335 240L319 235.5Z" fill="#30123b"/>
<path d="M335 499L351 503.5L351 487.5L335 483Z" fill="#30123b"/>
<path d="M335 483L351 487.5L351 471L335 466.5Z" fill="#30123b"/>
<path d="M335 466.5L351 471L351 455L335 450.5Z" fill="#30123b"/>
<path d="M335 450.5L351 455L351 439L335 434Z" fill="#30123b"/>
<path d="M335 434L351 439L351 422.5L335 418Z" fill="#30123b"/>
<path d="M335 418L351 422.5L351 406.5L335 402Z" fill="#30123b"/>
<path d="M335 402L351 406.5L351 390.5L335 385.5Z" fill="#30123b"/>
<path d="M335 385.5L351 390.5L351 374L335 369.5Z" fill="#30123b"/>
<path d="M335 369.5L351 374L351 358L335 353.5Z" fill="#30123b"/>
<path d="M335 353.5L351 358L351 342L335 337Z" fill="#30123b"/>
<path d="M335 337L351 342L351 325.5L335 321Z" fill="#30123b"/>
<path d="M335 321L351 325.5L351 309.5L335 305Z" fill="#30123b"/>
<path d="M335 305L351 309.5L351 293L335 288.5Z" fill="#30123b"/>
<path d="M335 288.5L351 293L351 277L335 272.5Z" fill="#30123b"/>
<path d="M335 272.5L351 277L351 261L335 256Z" fill="#30123b"/>
<path d="M335 256L351 261L351 244.5L335 240Z" fill="#30123b"/>
<path d="M351 503.5L367 508L367 492L351 487.5Z" fill="#30123b"/>
<path d="M351 487.5L367 492L367 476L351 471Z" fill="#30123b"/>
<path d="M351 471L367 476L367 459.5L351 455Z" fill="#30123b"/>
<path d="M351 455L367 459.5L367 443.5L351 439Z" fill="#30123b"/>
<path d="M351 439L367 443.5L367 427.5L351 422.5Z" fill="#30123b"/>
<path d="M351 422.5L367 427.5L367 411L351 406.5Z" fill="#30123b"/>
<path d="M351 406.5L367 411L367 395L351 390.5Z" fill="#30123b"/>
<path d="M351 390.5L367 395L367 379L351 374Z" fill="#30123b"/>
<path d="M351 374L367 379L367 362.5L351 358Z" fill="#30123b"/>
<path d="M351 358L367 362.5L367 346.5L351 342Z" fill="#30123b"/>
<path d="M351 342L367 346.5L367 330L351 325.5Z" fill="#30123b"/>
<path d="M351 325.5L367 330L367 314L351 309.5Z" fill="#30123b"/>
<path d="M351 309.5L367 314L367 298L351 293Z" fill="#30123b"/>
<path d="M351 293L367 298L367 281.5L351 277Z" fill="#30123b"/>
<path d="M351 277L367 281.5L367 265.5L351 261Z" fill="#30123b"/>
<path d="M351 261L367 265.5L367 249L351 244.5Z" fill="#30123b"/>
<path d="M367 508L383.5 513L383.5 496.5L367 492Z" fill="#30123b"/>
<path d="M367 492L383.5 496.5L383.5 480.5L367 476Z" fill="#30123b"/>
<path d="M367 476L383.5 480.5L383.5 464.5L367 459.5Z" fill="#30123b"/>
<path d="M367 459.5L383.5 464.5L383.5 448L367 443.5Z" fill="#321543"/>
<path d="M367 443.5L383.5 448L383.5 432L367 427.5Z" fill="#30123b"/>
<path d="M367 427.5L383.5 432L383.5 416L367 411Z" fill="#30123b"/>
<path d="M367 411L383.5 416L383.5 399.5L367 395Z" fill="#30123b"/>
<path d="M367 395L383.5 399.5L383.5 383.5L367 379Z" fill="#30123b"/>
<path d="M367 379L383.5 383.5L383.5 367L367 362.5Z" fill="#30123b"/>
<path d="M367 362.5L383.5 367L383.5 351L367 346.5Z" fill="#30123b"/>
<path d="M367 346.5L383.5 351L383.5 335L367 330Z" fill="#30123b"/>
<path d="M367 330L383.5 335L383.5 318.5L367 314Z" fill="#30123b"/>
<path d="M367 314L383.5 318.5L383.5 302.5L367 298Z" fill="#30123b"/>
<path d="M367 298L383.5 302.5L383.5 286L367 281.5Z" fill="#30123b"/>
<path d="M367 281.5L383.5 286L383.5 270L367 265.5Z" fill="#30123b"/>
<path d="M367 265.5L383.5 270L383.5 254L367 249Z" fill="#30123b"/>
<path d="M383.5 513L399.5 517.5L399.5 501.5L383.5 496.5Z" fill="#30123b"/>
<path d="M383.5 496.5L399.5 501.5L399.5 485L383.5 480.5Z" fill="#30123b"/>
<path d="M383.5 480.5L399.5 485L399.5 469L383.5 464.5Z" fill="#33184a"/>
<path d="M383.5 464.5L399.5 469L399.5 453L383.5 448Z" fill="#33184a"/>
<path d="M383.5 448L399.5 453L399.5 436.5L383.5 432Z" fill="#33184a"/>
<path d="M383.5 432L399.5 436.5L399.5 420.5L383.5 416Z" fill="#30123b"/>
<path d="M383.5 416L399.5 420.5L399.5 404L383.5 399.5Z" fill="#30123b"/>
<path d="M383.5 399.5L399.5 404L399.5 388L383.5 383.5Z" fill="#30123b"/>
<path d="M383.5 383.5L399.5 388L399.5 372L383.5 367Z" fill="#30123b"/>
<path d="M383.5 367L399.5 372L399.5 355.5L383.5 351Z" fill="#30123b"/>
<path d="M383.5 351L399.5 355.5L399.5 339.5L383.5 335Z" fill="#30123b"/>
<path d="M383.5 335L399.5 339.5L399.5 323L383.5 318.5Z" fill="#30123b"/>
<path d="M383.5 318.5L399.5 323L399.5 307L383.5 302.5Z" fill="#30123b"/>
<path d="M383.5 302.5L399.5 307L399.5 291L383.5 286Z" fill="#30123b"/>
<path d="M383.5 286L399.5 291L399.5 274.5L383.5 270Z" fill="#30123b"/>
<path d="M383.5 270L399.5 274.5L399.5 258.5L383.5 254Z" fill="#30123b"/>
<path d="M399.5 517.5L415.5 522L415.5 506L399.5 501.5Z" fill="#38276d"/>
<path d="M399.5 501.5L415.5 506L415.5 490L399.5 485Z" fill="#36215f"/>
<path d="M399.5 485L415.5 490L415.5 473.5L399.5 469Z" fill="#372466"/>
<path d="M399.5 469L415.5 473.5L415.5 457.5L399.5 453Z" fill="#372466"/>
<path d="M399.5 453L415.5 457.5L415.5 441L399.5 436.5Z" fill="#36215f"/>
<path d="M399.5 436.5L415.5 441L415.5 425L399.5 420.5Z" fill="#33184a"/>
<path d="M399.5 420.5L415.5 425L415.5 409L399.5 404Z" fill="#30123b"/>
<path d="M399.5 404L415.5 409L415.5 392.5L399.5 388Z" fill="#30123b"/>
<path d="M399.5 388L415.5 392.5L415.5 376.5L399.5 372Z" fill="#30123b"/>
<path d="M399.5 372L415.5 376.5L415.5 360L399.5 355.5Z" fill="#30123b"/>
<path d="M399.5 355.5L415.5 360L415.5 344L399.5 339.5Z" fill="#30123b"/>
<path d="M399.5 339.5L415.5 344L415.5 328L399.5 323Z" fill="#321543"/>
<path d="M399.5 323L415.5 328L415.5 311.5L399.5 307Z" fill="#33184a"/>
<path d="M399.5 307L415.5 311.5L415.5 295.5L399.5 291Z" fill="#33184a"/>
<path d="M399.5 291L415.5 295.5L415.5 279.5L399.5 274.5Z" fill="#321543"/>
<path d="M399.5 274.5L415.5 279.5L415.5 263L399.5 258.5Z" fill="#30123b"/>
<path d="M415.5 522L432 527L432 510.5L415.5 506Z" fill="#4249b1"/>
<path d="M415.5 506L432 510.5L432 494.5L415.5 490Z" fill="#4143a7"/>
<path d="M415.5 490L432 494.5L432 478L415.5 473.5Z" fill="#3f3e9c"/>
<path d="M415.5 473.5L432 478L432 462L415.5 457.5Z" fill="#3e3891"/>
<path d="M415.5 457.5L432 462L432 446L415.5 441Z" fill="#3c3286"/>
<path d="M415.5 441L432 446L432 429.5L415.5 425Z" fill="#392a73"/>
<path d="M415.5 425L432 429.5L432 413.5L415.5 409Z" fill="#351e58"/>
<path d="M415.5 409L432 413.5L432 397L415.5 392.5Z" fill="#321543"/>
<path d="M415.5 392.5L432 397L432 381L415.5 376.5Z" fill="#321543"/>
<path d="M415.5 376.5L432 381L432 365L415.5 360Z" fill="#33184a"/>
<path d="M415.5 360L432 365L432 348.5L415.5 344Z" fill="#351e58"/>
<path d="M415.5 344L432 348.5L432 332.5L415.5 328Z" fill="#36215f"/>
<path d="M415.5 328L432 332.5L432 316.5L415.5 311.5Z" fill="#36215f"/>
<path d="M415.5 311.5L432 316.5L432 300L415.5 295.5Z" fill="#36215f"/>
<path d="M415.5 295.5L432 300L432 284L415.5 279.5Z" fill="#351e58"/>
<path d="M415.5 279.5L432 284L432 268L415.5 263Z" fill="#341b51"/>
<path d="M432 527L448 531.5L448 515L432 510.5Z" fill="#4661d6"/>
<path d="M432 510.5L448 515L448 499L432 494.5Z" fill="#4664da"/>
<path d="M432 494.5L448 499L448 483L432 478Z" fill="#4559cb"/>
<path d="M432 478L448 483L448 466.5L432 462Z" fill="#434eba"/>
<path d="M432 462L448 466.5L448 450.5L432 446Z" fill="#4146ac"/>
<path d="M432 446L448 450.5L448 434L432 429.5Z" fill="#3f3e9c"/>
<path d="M432 429.5L448 434L448 418L432 413.5Z" fill="#3d358b"/>
<path d="M432 413.5L448 418L448 402L432 397Z" fill="#3b2f80"/>
<path d="M432 397L448 402L448 385.5L432 381Z" fill="#392a73"/>
<path d="M432 381L448 385.5L448 369.5L432 365Z" fill="#3a2d79"/>
<path d="M432 365L448 369.5L448 353.5L432 348.5Z" fill="#3a2d79"/>
<path d="M432 348.5L448 353.5L448 337L432 332.5Z" fill="#3b2f80"/>
<path d="M432 332.5L448 337L448 321L432 316.5Z" fill="#3b2f80"/>
<path d="M432 316.5L448 321L448 305L432 300Z" fill="#3a2d79"/>
<path d="M432 300L448 305L448 288.5L432 284Z" fill="#3a2d79"/>
<path d="M432 284L448 288.5L448 272.5L432 268Z" fill="#392a73"/>
<path d="M448 531.5L464 536L464 520L448 515Z" fill="#4669e0"/>
<path d="M448 515L464 520L464 503.5L448 499Z" fill="#476ee6"/>
<path d="M448 499L464 503.5L464 487.5L448 483Z" fill="#4669e0"/>
<path d="M448 483L464 487.5L464 471L448 466.5Z" fill="#4661d6"/>
<path d="M448 466.5L464 471L464 455L448 450.5Z" fill="#4559cb"/>
<path d="M448 450.5L464 455L464 439L448 434Z" fill="#4454c3"/>
<path d="M448 434L464 439L464 422.5L448 418Z" fill="#434eba"/>
<path d="M448 418L464 422.5L464 406.5L448 402Z" fill="#4249b1"/>
<path d="M448 402L464 406.5L464 390.5L448 385.5Z" fill="#4146ac"/>
<path d="M448 385.5L464 390.5L464 374L448 369.5Z" fill="#4143a7"/>
<path d="M448 369.5L464 374L464 358L448 353.5Z" fill="#4143a7"/>
<path d="M448 353.5L464 358L464 342L448 337Z" fill="#4143a7"/>
<path d="M448 337L464 342L464 325.5L448 321Z" fill="#4040a2"/>
<path d="M448 321L464 325.5L464 309.5L448 305Z" fill="#3f3e9c"/>
<path d="M448 305L464 309.5L464 293L448 288.5Z" fill="#3f3b97"/>
<path d="M448 288.5L464 293L464 277L448 272.5Z" fill="#3f3b97"/>
<path d="M464 536L480 540.5L480 524.5L464 520Z" fill="#4664da"/>
<path d="M464 520L480 524.5L480 508L464 503.5Z" fill="#4669e0"/>
<path d="M464 503.5L480 508L480 492L464 487.5Z" fill="#4669e0"/>
<path d="M464 487.5L480 492L480 476L464 471Z" fill="#4666dd"/>
<path d="M464 471L480 476L480 459.5L464 455Z" fill="#4664da"/>
<path d="M464 455L480 459.5L480 443.5L464 439Z" fill="#4661d6"/>
<path d="M464 439L480 443.5L480 427.5L464 422.5Z" fill="#455ed3"/>
<path d="M464 422.5L480 427.5L480 411L464 406.5Z" fill="#455ed3"/>
<path d="M464 406.5L480 411L480 395L464 390.5Z" fill="#455ccf"/>
<path d="M464 390.5L480 395L480 379L464 374Z" fill="#455ccf"/>
<path d="M464 374L480 379L480 362.5L464 358Z" fill="#455ccf"/>
<path d="M464 358L480 362.5L480 346.5L464 342Z" fill="#4559cb"/>
<path d="M464 342L480 346.5L480 330L464 325.5Z" fill="#4456c7"/>
<path d="M464 325.5L480 330L480 314L464 309.5Z" fill="#4451bf"/>
<path d="M464 309.5L480 314L480 298L464 293Z" fill="#434eba"/>
<path d="M464 293L480 298L480 281.5L464 277Z" fill="#424bb5"/>
<path d="M480 540.5L496 545L496 529L480 524.5Z" fill="#4559cb"/>
<path d="M480 524.5L496 529L496 513L480 508Z" fill="#455ed3"/>
<path d="M480 508L496 513L496 496.5L480 492Z" fill="#4661d6"/>
<path d="M480 492L496 496.5L496 480.5L480 476Z" fill="#4664da"/>
<path d="M480 476L496 480.5L496 464.5L480 459.5Z" fill="#4664da"/>
<path d="M480 459.5L496 464.5L496 448L480 443.5Z" fill="#4666dd"/>
<path d="M480 443.5L496 448L496 432L480 427.5Z" fill="#4669e0"/>
<path d="M480 427.5L496 432L496 416L480 411Z" fill="#466be3"/>
<path d="M480 411L496 416L496 399.5L480 395Z" fill="#466be3"/>
<path d="M480 395L496 399.5L496 383.5L480 379Z" fill="#466be3"/>
<path d="M480 379L496 383.5L496 367L480 362.5Z" fill="#476ee6"/>
<path d="M480 362.5L496 367L496 351L480 346.5Z" fill="#476ee6"/>
<path d="M480 346.5L496 351L496 335L480 330Z" fill="#466be3"/>
<path d="M480 330L496 335L496 318.5L480 314Z" fill="#4664da"/>
<path d="M480 314L496 318.5L496 302.5L480 298Z" fill="#455ed3"/>
<path d="M480 298L496 302.5L496 286L480 281.5Z" fill="#4661d6"/>
<path d="M496 545L512.5 550L512.5 533.5L496 529Z" fill="#434eba"/>
<path d="M496 529L512.5 533.5L512.5 517.5L496 513Z" fill="#4451bf"/>
<path d="M496 513L512.5 517.5L512.5 501.5L496 496.5Z" fill="#4456c7"/>
<path d="M496 496.5L512.5 501.5L512.5 485L496 480.5Z" fill="#4559cb"/>
<path d="M496 480.5L512.5 485L512.5 469L496 464.5Z" fill="#455ed3"/>
<path d="M496 464.5L512.5 469L512.5 453L496 448Z" fill="#4664da"/>
<path d="M496 448L512.5 453L512.5 436.5L496 432Z" fill="#466be3"/>
<path d="M496 432L512.5 436.5L512.5 420.5L496 416Z" fill="#4771e9"/>
<path d="M496 416L512.5 420.5L512.5 404L496 399.5Z" fill="#4773eb"/>
<path d="M496 399.5L512.5 404L512.5 388L496 383.5Z" fill="#4776ee"/>
<path d="M496 383.5L512.5 388L512.5 372L496 367Z" fill="#477bf2"/>
<path d="M496 367L512.5 372L512.5 355.5L496 351Z" fill="#4680f6"/>
<path d="M496 351L512.5 355.5L512.5 339.5L496 335Z" fill="#467df4"/>
<path d="M496 335L512.5 339.5L512.5 323L496 318.5Z" fill="#4776ee"/>
<path d="M496 318.5L512.5 323L512.5 307L496 302.5Z" fill="#476ee6"/>
<path d="M496 302.5L512.5 307L512.5 291L496 286Z" fill="#476ee6"/>
<path d="M512.5 550L528.5 554.5L528.5 538.5L512.5 533.5Z" fill="#4143a7"/>
<path d="M512.5 533.5L528.5 538.5L528.5 522L512.5 517.5Z" fill="#4249b1"/>
<path d="M512.5 517.5L528.5 522L528.5 506L512.5 501.5Z" fill="#424bb5"/>
<path d="M512.5 501.5L528.5 506L528.5 490L512.5 485Z" fill="#434eba"/>
<path d="M512.5 485L528.5 490L528.5 473.5L512.5 469Z" fill="#4454c3"/>
<path d="M512.5 469L528.5 473.5L528.5 457.5L512.5 453Z" fill="#455ccf"/>
<path d="M512.5 453L528.5 457.5L528.5 441L512.5 436.5Z" fill="#4666dd"/>
<path d="M512.5 436.5L528.5 441L528.5 425L512.5 420.5Z" fill="#4771e9"/>
<path d="M512.5 420.5L528.5 425L528.5 409L512.5 404Z" fill="#4776ee"/>
<path d="M512.5 404L528.5 409L528.5 392.5L512.5 388Z" fill="#4778f0"/>
<path d="M512.5 388L528.5 392.5L528.5 376.5L512.5 372Z" fill="#467df4"/>
<path d="M512.5 372L528.5 376.5L528.5 360L512.5 355.5Z" fill="#4685fa"/>
<path d="M512.5 355.5L528.5 360L528.5 344L512.5 339.5Z" fill="#4687fb"/>
<path d="M512.5 339.5L528.5 344L528.5 328L512.5 323Z" fill="#467df4"/>
<path d="M512.5 323L528.5 328L528.5 311.5L512.5 307Z" fill="#4773eb"/>
<path d="M512.5 307L528.5 311.5L528.5 295.5L512.5 291Z" fill="#4776ee"/>
<path d="M420.5 92.5L436.5 97L427 105L411 100.5Z" fill="#30123b"/>
<path d="M411 100.5L427 105L418 113L402 108.5Z" fill="#30123b"/>
<path d="M402 108.5L418 113L408.5 121.5L392.5 116.5Z" fill="#30123b"/>
<path d="M392.5 116.5L408.5 121.5L399 129.5L383 125Z" fill="#30123b"/>
<path d="M383 125L399 129.5L390 137.5L373.5 133Z" fill="#30123b"/>
<path d="M373.5 133L390 137.5L380.5 145.5L364 141Z" fill="#30123b"/>
<path d="M364 141L380.5 145.5L371 153.5L355 149Z" fill="#30123b"/>
<path d="M355 149L371 153.5L361.5 161.5L345.5 157Z" fill="#30123b"/>
<path d="M345.5 157L361.5 161.5L352 169.5L336 165Z" fill="#30123b"/>
<path d="M336 165L352 169.5L343 178L327 173Z" fill="#30123b"/>
<path d="M327 173L343 178L333.5 186L317.5 181Z" fill="#30123b"/>
<path d="M317.5 181L333.5 186L324 194L308 189Z" fill="#30123b"/>
<path d="M308 189L324 194L315 202L298.5 197.5Z" fill="#30123b"/>
<path d="M298.5 197.5L315 202L305.5 210L289 205.5Z" fill="#30123b"/>
<path d="M289 205.5L305.5 210L296 218L280 213.5Z" fill="#30123b"/>
<path d="M280 213.5L296 218L286.5 226L270.5 221.5Z" fill="#30123b"/>
<path d="M436.5 97L453 102L443.5 110L427 105Z" fill="#30123b"/>
<path d="M427 105L443.5 110L434 118L418 113Z" fill="#30123b"/>
<path d="M418 113L434 118L424.5 126L408.5 121.5Z" fill="#30123b"/>
<path d="M408.5 121.5L424.5 126L415 134L399 129.5Z" fill="#30123b"/>
<path d="M399 129.5L415 134L406 142L390 137.5Z" fill="#30123b"/>
<path d="M390 137.5L406 142L396.5 150L380.5 145.5Z" fill="#30123b"/>
<path d="M380.5 145.5L396.5 150L387 158L371 153.5Z" fill="#30123b"/>
<path d="M371 153.5L387 158L378 166L361.5 161.5Z" fill="#30123b"/>
<path d="M361.5 161.5L378 166L368.5 174.5L352 169.5Z" fill="#30123b"/>
<path d="M352 169.5L368.5 174.5L359 182.5L343 178Z" fill="#30123b"/>
<path d="M343 178L359 182.5L349.5 190.5L333.5 186Z" fill="#30123b"/>
<path d="M333.5 186L349.5 190.5L340 198.5L324 194Z" fill="#30123b"/>
<path d="M324 194L340 198.5L331 206.5L315 202Z" fill="#30123b"/>
<path d="M315 202L331 206.5L321.5 214.5L305.5 210Z" fill="#30123b"/>
<path d="M305.5 210L321.5 214.5L312 222.5L296 218Z" fill="#30123b"/>
<path d="M296 218L312 222.5L303 231L286.5 226Z" fill="#30123b"/>
<path d="M453 102L469 106.5L459.5 114.5L443.5 110Z" fill="#30123b"/>
<path d="M443.5 110L459.5 114.5L450 122.5L434 118Z" fill="#30123b"/>
<path d="M434 118L450 122.5L441 130.5L424.5 126Z" fill="#30123b"/>
<path d="M424.5 126L441 130.5L431.5 138.5L415 134Z" fill="#30123b"/>
<path d="M415 134L431.5 138.5L422 146.5L406 142Z" fill="#30123b"/>
<path d="M406 142L422 146.5L412.5 155L396.5 150Z" fill="#30123b"/>
<path d="M396.5 150L412.5 155L403 163L387 158Z" fill="#30123b"/>
<path d="M387 158L403 163L394 171L378 166Z" fill="#30123b"/>
<path d="M378 166L394 171L384.5 179L368.5 174.5Z" fill="#30123b"/>
<path d="M368.5 174.5L384.5 179L375 187L359 182.5Z" fill="#30123b"/>
<path d="M359 182.5L375 187L366 195L349.5 190.5Z" fill="#30123b"/>
<path d="M349.5 190.5L366 195L356.5 203L340 198.5Z" fill="#30123b"/>
<path d="M340 198.5L356.5 203L347 211L331 206.5Z" fill="#30123b"/>
<path d="M331 206.5L347 211L337.5 219L321.5 214.5Z" fill="#30123b"/>
<path d="M321.5 214.5L337.5 219L328 227.5L312 222.5Z" fill="#30123b"/>
<path d="M312 222.5L328 227.5L319 235.5L303 231Z" fill="#30123b"/>
<path d="M469 106.5L485 111L475.5 119L459.5 114.5Z" fill="#30123b"/>
<path d="M459.5 114.5L475.5 119L466 127L450 122.5Z" fill="#30123b"/>
<path d="M450 122.5L466 127L457 135L441 130.5Z" fill="#30123b"/>
<path d="M441 130.5L457 135L447.5 143L431.5 138.5Z" fill="#30123b"/>
<path d="M431.5 138.5L447.5 143L438 151.5L422 146.5Z" fill="#30123b"/>
<path d="M422 146.5L438 151.5L429 159.5L412.5 155Z" fill="#30123b"/>
<path d="M412.5 155L429 159.5L419.5 167.5L403 163Z" fill="#30123b"/>
<path d="M403 163L419.5 167.5L410 175.5L394 171Z" fill="#30123b"/>
<path d="M394 171L410 175.5L400.5 183.5L384.5 179Z" fill="#30123b"/>
<path d="M384.5 179L400.5 183.5L391 191.5L375 187Z" fill="#30123b"/>
<path d="M375 187L391 191.5L382 199.5L366 195Z" fill="#30123b"/>
<path d="M366 195L382 199.5L372.5 208L356.5 203Z" fill="#30123b"/>
<path d="M356.5 203L372.5 208L363 216L347 211Z" fill="#30123b"/>
<path d="M347 211L363 216L354 224L337.5 219Z" fill="#30123b"/>
<path d="M337.5 219L354 224L344.5 232L328 227.5Z" fill="#30123b"/>
<path d="M328 227.5L344.5 232L335 240L319 235.5Z" fill="#30123b"/>
<path d="M485 111L501 115.5L492 123.5L475.5 119Z" fill="#30123b"/>
<path d="M475.5 119L492 123.5L482.5 132L466 127Z" fill="#30123b"/>
<path d="M466 127L482.5 132L473 140L457 135Z" fill="#30123b"/>
<path d="M457 135L473 140L463.5 148L447.5 143Z" fill="#30123b"/>
<path d="M447.5 143L463.5 148L454 156L438 151.5Z" fill="#30123b"/>
<path d="M438 151.5L454 156L445 164L429 159.5Z" fill="#30123b"/>
<path d="M429 159.5L445 164L435.5 172L419.5 167.5Z" fill="#30123b"/>
<path d="M419.5 167.5L435.5 172L426 180L410 175.5Z" fill="#30123b"/>
<path d="M410 175.5L426 180L417 188L400.5 183.5Z" fill="#30123b"/>
<path d="M400.5 183.5L417 188L407.5 196L391 191.5Z" fill="#30123b"/>
<path d="M391 191.5L407.5 196L398 204.5L382 199.5Z" fill="#30123b"/>
<path d="M382 199.5L398 204.5L388.5 212.5L372.5 208Z" fill="#30123b"/>
<path d="M372.5 208L388.5 212.5L379 220.5L363 216Z" fill="#30123b"/>
<path d="M363 216L379 220.5L370 228.5L354 224Z" fill="#30123b"/>
<path d="M354 224L370 228.5L360.5 236.5L344.5 232Z" fill="#30123b"/>
<path d="M344.5 232L360.5 236.5L351 244.5L335 240Z" fill="#30123b"/>
<path d="M501 115.5L517 120L508 128.5L492 123.5Z" fill="#30123b"/>
<path d="M492 123.5L508 128.5L498.5 136.5L482.5 132Z" fill="#30123b"/>
<path d="M482.5 132L498.5 136.5L489 144.5L473 140Z" fill="#30123b"/>
<path d="M473 140L489 144.5L480 152.5L463.5 148Z" fill="#30123b"/>
<path d="M463.5 148L480 152.5L470.5 160.5L454 156Z" fill="#30123b"/>
<path d="M454 156L470.5 160.5L461 168.5L445 164Z" fill="#30123b"/>
<path d="M445 164L461 168.5L451.5 176.5L435.5 172Z" fill="#30123b"/>
<path d="M435.5 172L451.5 176.5L442 185L426 180Z" fill="#30123b"/>
<path d="M426 180L442 185L433 193L417 188Z" fill="#30123b"/>
<path d="M417 188L433 193L423.5 201L407.5 196Z" fill="#30123b"/>
<path d="M407.5 196L423.5 201L414 209L398 204.5Z" fill="#30123b"/>
<path d="M398 204.5L414 209L405 217L388.5 212.5Z" fill="#30123b"/>
<path d="M388.5 212.5L405 217L395.5 225L379 220.5Z" fill="#30123b"/>
<path d="M379 220.5L395.5 225L386 233L370 228.5Z" fill="#30123b"/>
<path d="M370 228.5L386 233L376.5 241L360.5 236.5Z" fill="#30123b"/>
<path d="M360.5 236.5L376.5 241L367 249L351 244.5Z" fill="#30123b"/>
<path d="M517 120L533.5 125L524 133L508 128.5Z" fill="#30123b"/>
<path d="M508 128.5L524 133L514.5 141L498.5 136.5Z" fill="#30123b"/>
<path d="M498.5 136.5L514.5 141L505 149L489 144.5Z" fill="#30123b"/>
<path d="M489 144.5L505 149L496 157L480 152.5Z" fill="#30123b"/>
<path d="M480 152.5L496 157L486.5 165L470.5 160.5Z" fill="#30123b"/>
<path d="M470.5 160.5L486.5 165L477 173L461 168.5Z" fill="#30123b"/>
<path d="M461 168.5L477 173L468 181.5L451.5 176.5Z" fill="#30123b"/>
<path d="M451.5 176.5L468 181.5L458.5 189.5L442 185Z" fill="#30123b"/>
<path d="M442 185L458.5 189.5L449 197.5L433 193Z" fill="#30123b"/>
<path d="M433 193L449 197.5L439.5 205.5L423.5 201Z" fill="#30123b"/>
<path d="M423.5 201L439.5 205.5L430 213.5L414 209Z" fill="#30123b"/>
<path d="M414 209L430 213.5L421 221.5L405 217Z" fill="#30123b"/>
<path d="M405 217L421 221.5L411.5 229.5L395.5 225Z" fill="#30123b"/>
<path d="M395.5 225L411.5 229.5L402 238L386 233Z" fill="#30123b"/>
<path d="M386 233L402 238L393 246L376.5 241Z" fill="#30123b"/>
<path d="M376.5 241L393 246L383.5 254L367 249Z" fill="#30123b"/>
<path d="M533.5 125L549.5 129.5L540 137.5L524 133Z" fill="#30123b"/>
<path d="M524 133L540 137.5L531 145.5L514.5 141Z" fill="#30123b"/>
<path d="M514.5 141L531 145.5L521.5 153.5L505 149Z" fill="#30123b"/>
<path d="M505 149L521.5 153.5L512 162L496 157Z" fill="#30123b"/>
<path d="M496 157L512 162L502.5 170L486.5 165Z" fill="#30123b"/>
<path d="M486.5 165L502.5 170L493 178L477 173Z" fill="#321543"/>
<path d="M477 173L493 178L484 186L468 181.5Z" fill="#321543"/>
<path d="M468 181.5L484 186L474.5 194L458.5 189.5Z" fill="#30123b"/>
<path d="M458.5 189.5L474.5 194L465 202L449 197.5Z" fill="#30123b"/>
<path d="M449 197.5L465 202L456 210L439.5 205.5Z" fill="#30123b"/>
<path d="M439.5 205.5L456 210L446.5 218L430 213.5Z" fill="#30123b"/>
<path d="M430 213.5L446.5 218L437 226L421 221.5Z" fill="#30123b"/>
<path d="M421 221.5L437 226L427.5 234.5L411.5 229.5Z" fill="#30123b"/>
<path d="M411.5 229.5L427.5 234.5L418 242.5L402 238Z" fill="#30123b"/>
<path d="M402 238L418 242.5L409 250.5L393 246Z" fill="#30123b"/>
<path d="M393 246L409 250.5L399.5 258.5L383.5 254Z" fill="#30123b"/>
<path d="M549.5 129.5L565.5 134L556 142L540 137.5Z" fill="#3c3286"/>
<path d="M540 137.5L556 142L547 150L531 145.5Z" fill="#372466"/>
<path d="M531 145.5L547 150L537.5 158.5L521.5 153.5Z" fill="#351e58"/>
<path d="M521.5 153.5L537.5 158.5L528 166.5L512 162Z" fill="#341b51"/>
<path d="M512 162L528 166.5L519 174.5L502.5 170Z" fill="#341b51"/>
<path d="M502.5 170L519 174.5L509.5 182.5L493 178Z" fill="#351e58"/>
<path d="M493 178L509.5 182.5L500 190.5L484 186Z" fill="#36215f"/>
<path d="M484 186L500 190.5L490.5 198.5L474.5 194Z" fill="#36215f"/>
<path d="M474.5 194L490.5 198.5L481 206.5L465 202Z" fill="#36215f"/>
<path d="M465 202L481 206.5L472 215L456 210Z" fill="#351e58"/>
<path d="M456 210L472 215L462.5 223L446.5 218Z" fill="#341b51"/>
<path d="M446.5 218L462.5 223L453 231L437 226Z" fill="#341b51"/>
<path d="M437 226L453 231L444 239L427.5 234.5Z" fill="#33184a"/>
<path d="M427.5 234.5L444 239L434.5 247L418 242.5Z" fill="#321543"/>
<path d="M418 242.5L434.5 247L425 255L409 250.5Z" fill="#30123b"/>
<path d="M409 250.5L425 255L415.5 263L399.5 258.5Z" fill="#30123b"/>
<path d="M565.5 134L582 139L572.5 147L556 142Z" fill="#4778f0"/>
<path d="M556 142L572.5 147L563 155L547 150Z" fill="#4456c7"/>
<path d="M547 150L563 155L553.5 163L537.5 158.5Z" fill="#3f3e9c"/>
<path d="M537.5 158.5L553.5 163L544 171L528 166.5Z" fill="#3a2d79"/>
<path d="M528 166.5L544 171L535 179L519 174.5Z" fill="#392a73"/>
<path d="M519 174.5L535 179L525.5 187L509.5 182.5Z" fill="#392a73"/>
<path d="M509.5 182.5L525.5 187L516 195L500 190.5Z" fill="#3b2f80"/>
<path d="M500 190.5L516 195L507 203L490.5 198.5Z" fill="#3c3286"/>
<path d="M490.5 198.5L507 203L497.5 211.5L481 206.5Z" fill="#3d358b"/>
<path d="M481 206.5L497.5 211.5L488 219.5L472 215Z" fill="#3d358b"/>
<path d="M472 215L488 219.5L478.5 227.5L462.5 223Z" fill="#3c3286"/>
<path d="M462.5 223L478.5 227.5L469 235.5L453 231Z" fill="#3a2d79"/>
<path d="M453 231L469 235.5L460 243.5L444 239Z" fill="#392a73"/>
<path d="M444 239L460 243.5L450.5 251.5L434.5 247Z" fill="#372466"/>
<path d="M434.5 247L450.5 251.5L441 259.5L425 255Z" fill="#351e58"/>
<path d="M425 255L441 259.5L432 268L415.5 263Z" fill="#341b51"/>
<path d="M582 139L598 143.5L588.5 151.5L572.5 147Z" fill="#4099ff"/>
<path d="M572.5 147L588.5 151.5L579 159.5L563 155Z" fill="#4685fa"/>
<path d="M563 155L579 159.5L570 167.5L553.5 163Z" fill="#4666dd"/>
<path d="M553.5 163L570 167.5L560.5 175.5L544 171Z" fill="#424bb5"/>
<path d="M544 171L560.5 175.5L551 183.5L535 179Z" fill="#3f3b97"/>
<path d="M535 179L551 183.5L541.5 192L525.5 187Z" fill="#3e3891"/>
<path d="M525.5 187L541.5 192L532 200L516 195Z" fill="#3f3b97"/>
<path d="M516 195L532 200L523 208L507 203Z" fill="#4143a7"/>
<path d="M507 203L523 208L513.5 216L497.5 211.5Z" fill="#4249b1"/>
<path d="M497.5 211.5L513.5 216L504 224L488 219.5Z" fill="#424bb5"/>
<path d="M488 219.5L504 224L495 232L478.5 227.5Z" fill="#4249b1"/>
<path d="M478.5 227.5L495 232L485.5 240L469 235.5Z" fill="#4146ac"/>
<path d="M469 235.5L485.5 240L476 248L460 243.5Z" fill="#4040a2"/>
<path d="M460 243.5L476 248L466.5 256L450.5 251.5Z" fill="#3e3891"/>
<path d="M450.5 251.5L466.5 256L457 264.5L441 259.5Z" fill="#3c3286"/>
<path d="M441 259.5L457 264.5L448 272.5L432 268Z" fill="#392a73"/>
<path d="M598 143.5L614 148L604.5 156L588.5 151.5Z" fill="#35abf8"/>
<path d="M588.5 151.5L604.5 156L595 164L579 159.5Z" fill="#3ba0fd"/>
<path d="M579 159.5L595 164L586 172L570 167.5Z" fill="#458cfd"/>
<path d="M570 167.5L586 172L576.5 180L560.5 175.5Z" fill="#4771e9"/>
<path d="M560.5 175.5L576.5 180L567 188.5L551 183.5Z" fill="#4451bf"/>
<path d="M551 183.5L567 188.5L558 196.5L541.5 192Z" fill="#4040a2"/>
<path d="M541.5 192L558 196.5L548.5 204.5L532 200Z" fill="#4146ac"/>
<path d="M532 200L548.5 204.5L539 212.5L523 208Z" fill="#4451bf"/>
<path d="M523 208L539 212.5L529.5 220.5L513.5 216Z" fill="#455ccf"/>
<path d="M513.5 216L529.5 220.5L520 228.5L504 224Z" fill="#4661d6"/>
<path d="M504 224L520 228.5L511 236.5L495 232Z" fill="#4661d6"/>
<path d="M495 232L511 236.5L501.5 245L485.5 240Z" fill="#455ed3"/>
<path d="M485.5 240L501.5 245L492 253L476 248Z" fill="#4559cb"/>
<path d="M476 248L492 253L483 261L466.5 256Z" fill="#4451bf"/>
<path d="M466.5 256L483 261L473.5 269L457 264.5Z" fill="#4249b1"/>
<path d="M457 264.5L473.5 269L464 277L448 272.5Z" fill="#3f3e9c"/>
<path d="M614 148L630 152.5L621 160.5L604.5 156Z" fill="#31aff5"/>
<path d="M604.5 156L621 160.5L611.5 169L595 164Z" fill="#31aff5"/>
<path d="M595 164L611.5 169L602 177L586 172Z" fill="#35abf8"/>
<path d="M586 172L602 177L592.5 185L576.5 180Z" fill="#4196ff"/>
<path d="M576.5 180L592.5 185L583 193L567 188.5Z" fill="#477bf2"/>
<path d="M567 188.5L583 193L574 201L558 196.5Z" fill="#4559cb"/>
<path d="M558 196.5L574 201L564.5 209L548.5 204.5Z" fill="#4249b1"/>
<path d="M548.5 204.5L564.5 209L555 217L539 212.5Z" fill="#4559cb"/>
<path d="M539 212.5L555 217L546 225L529.5 220.5Z" fill="#466be3"/>
<path d="M529.5 220.5L546 225L536.5 233L520 228.5Z" fill="#4773eb"/>
<path d="M520 228.5L536.5 233L527 241.5L511 236.5Z" fill="#4773eb"/>
<path d="M511 236.5L527 241.5L517.5 249.5L501.5 245Z" fill="#4773eb"/>
<path d="M501.5 245L517.5 249.5L508 257.5L492 253Z" fill="#4771e9"/>
<path d="M492 253L508 257.5L499 265.5L483 261Z" fill="#466be3"/>
<path d="M483 261L499 265.5L489.5 273.5L473.5 269Z" fill="#4661d6"/>
<path d="M473.5 269L489.5 273.5L480 281.5L464 277Z" fill="#4454c3"/>
<path d="M630 152.5L646 157L637 165.5L621 160.5Z" fill="#31aff5"/>
<path d="M621 160.5L637 165.5L627.5 173.5L611.5 169Z" fill="#2eb4f2"/>
<path d="M611.5 169L627.5 173.5L618 181.5L602 177Z" fill="#2ab9ee"/>
<path d="M602 177L618 181.5L609 189.5L592.5 185Z" fill="#2cb7f0"/>
<path d="M592.5 185L609 189.5L599.5 197.5L583 193Z" fill="#37a8fa"/>
<path d="M583 193L599.5 197.5L590 205.5L574 201Z" fill="#458afc"/>
<path d="M574 201L590 205.5L580.5 213.5L564.5 209Z" fill="#466be3"/>
<path d="M564.5 209L580.5 213.5L571 222L555 217Z" fill="#455ed3"/>
<path d="M555 217L571 222L562 230L546 225Z" fill="#4666dd"/>
<path d="M546 225L562 230L552.5 238L536.5 233Z" fill="#4776ee"/>
<path d="M536.5 233L552.5 238L543 246L527 241.5Z" fill="#4776ee"/>
<path d="M527 241.5L543 246L534 254L517.5 249.5Z" fill="#4778f0"/>
<path d="M517.5 249.5L534 254L524.5 262L508 257.5Z" fill="#467df4"/>
<path d="M508 257.5L524.5 262L515 270L499 265.5Z" fill="#467df4"/>
<path d="M499 265.5L515 270L505.5 278L489.5 273.5Z" fill="#4776ee"/>
<path d="M489.5 273.5L505.5 278L496 286L480 281.5Z" fill="#4669e0"/>
<path d="M646 157L662.5 162L653 170L637 165.5Z" fill="#35abf8"/>
<path d="M637 165.5L653 170L643.5 178L627.5 173.5Z" fill="#2fb2f4"/>
<path d="M627.5 173.5L643.5 178L634 186L618 181.5Z" fill="#2ab9ee"/>
<path d="M618 181.5L634 186L625 194L609 189.5Z" fill="#27bee9"/>
<path d="M609 189.5L625 194L615.5 202L599.5 197.5Z" fill="#27bee9"/>
<path d="M599.5 197.5L615.5 202L606 210L590 205.5Z" fill="#2fb2f4"/>
<path d="M590 205.5L606 210L597 218.5L580.5 213.5Z" fill="#4294ff"/>
<path d="M580.5 213.5L597 218.5L587.5 226.5L571 222Z" fill="#4776ee"/>
<path d="M571 222L587.5 226.5L578 234.5L562 230Z" fill="#455ed3"/>
<path d="M562 230L578 234.5L568.5 242.5L552.5 238Z" fill="#4451bf"/>
<path d="M552.5 238L568.5 242.5L559 250.5L543 246Z" fill="#4451bf"/>
<path d="M543 246L559 250.5L550 258.5L534 254Z" fill="#455ed3"/>
<path d="M534 254L550 258.5L540.5 266.5L524.5 262Z" fill="#4773eb"/>
<path d="M524.5 262L540.5 266.5L531 275L515 270Z" fill="#4682f8"/>
<path d="M515 270L531 275L522 283L505.5 278Z" fill="#4685fa"/>
<path d="M505.5 278L522 283L512.5 291L496 286Z" fill="#477bf2"/>
<path d="M662.5 162L678.5 166.5L669 174.5L653 170Z" fill="#35abf8"/>
<path d="M653 170L669 174.5L660 182.5L643.5 178Z" fill="#33adf7"/>
<path d="M643.5 178L660 182.5L650.5 190.5L634 186Z" fill="#2fb2f4"/>
<path d="M634 186L650.5 190.5L641 199L625 194Z" fill="#2cb7f0"/>
<path d="M625 194L641 199L631.5 207L615.5 202Z" fill="#28bceb"/>
<path d="M615.5 202L631.5 207L622 215L606 210Z" fill="#2ab9ee"/>
<path d="M606 210L622 215L613 223L597 218.5Z" fill="#35abf8"/>
<path d="M597 218.5L613 223L603.5 231L587.5 226.5Z" fill="#4391fe"/>
<path d="M587.5 226.5L603.5 231L594 239L578 234.5Z" fill="#4773eb"/>
<path d="M578 234.5L594 239L585 247L568.5 242.5Z" fill="#4456c7"/>
<path d="M568.5 242.5L585 247L575.5 255L559 250.5Z" fill="#3f3b97"/>
<path d="M559 250.5L575.5 255L566 263L550 258.5Z" fill="#3e3891"/>
<path d="M550 258.5L566 263L556.5 271.5L540.5 266.5Z" fill="#434eba"/>
<path d="M540.5 266.5L556.5 271.5L547 279.5L531 275Z" fill="#4666dd"/>
<path d="M531 275L547 279.5L538 287.5L522 283Z" fill="#477bf2"/>
<path d="M522 283L538 287.5L528.5 295.5L512.5 291Z" fill="#467df4"/>
</g>
<path d="M678.5 425.5L678.5 407.5M678.5 425.5L669.5 433.5M678.5 425.5L669.5 423.5M678.5 407.5L678.5 388.5M678.5 407.5L669.5 423.5M678.5 407.5L669.5 406.5M678.5 388.5L678.5 370.5M678.5 388.5L669.5 406.5M678.5 388.5L668.5 387.5M678.5 370.5L678.5 351.5M678.5 370.5L668.5 387.5M678.5 370.5L669.5 367.5M678.5 351.5L678.5 333.5M678.5 351.5L669.5 367.5M678.5 351.5L668.5 348.5M678.5 333.5L678.5 314.5M678.5 333.5L668.5 348.5M678.5 333.5L668.5 329.5M678.5 314.5L678.5 296.5M678.5 314.5L668.5 329.5M678.5 314.5L668.5 311.5M678.5 296.5L678.5 277.5M678.5 296.5L668.5 311.5M678.5 296.5L668.5 292.5M678.5 277.5L678.5 259.5M678.5 277.5L668.5 292.5M678.5 277.5L669.5 274.5M678.5 259.5L678.5 240.5M678.5 259.5L669.5 274.5M678.5 259.5L669.5 255.5M678.5 240.5L678.5 222.5M678.5 240.5L669.5 255.5M678.5 240.5L670.5 236.5M678.5 222.5L678.5 203.5M678.5 222.5L670.5 236.5M678.5 222.5L669.5 219.5M678.5 203.5L678.5 185.5M678.5 203.5L669.5 219.5M678.5 203.5L669.5 201.5M678.5 185.5L678.5 166.5M678.5 185.5L669.5 201.5M678.5 185.5L669.5 183.5M678.5 166.5L669.5 183.5M678.5 166.5L669.5 174.5M669.5 433.5L669.5 423.5M669.5 433.5L659.5 441.5M669.5 423.5L669.5 406.5M669.5 423.5L659.5 441.5M669.5 423.5L659.5 423.5M669.5 406.5L668.5 387.5M669.5 406.5L659.5 423.5M669.5 406.5L659.5 405.5M668.5 387.5L669.5 367.5M668.5 387.5L659.5 405.5M668.5 387.5L660.5 384.5M669.5 367.5L668.5 348.5M669.5 367.5L660.5 384.5M669.5 367.5L659.5 365.5M668.5 348.5L668.5 329.5M668.5 348.5L659.5 365.5M668.5 348.5L659.5 347.5M668.5 329.5L668.5 311.5M668.5 329.5L659.5 347.5M668.5 329.5L658.5 327.5M668.5 311.5L668.5 292.5M668.5 311.5L658.5 327.5M668.5 311.5L659.5 308.5M668.5 292.5L669.5 274.5M668.5 292.5L659.5 308.5M668.5 292.5L659.5 289.5M669.5 274.5L669.5 255.5M669.5 274.5L659.5 289.5M669.5 274.5L660.5 270.5M669.5 255.5L670.5 236.5M669.5 255.5L660.5 270.5M669.5 255.5L661.5 252.5M670.5 236.5L669.5 219.5M670.5 236.5L661.5 252.5M670.5 236.5L660.5 237.5M669.5 219.5L669.5 201.5M669.5 219.5L660.5 237.5M669.5 219.5L660.5 217.5M669.5 201.5L669.5 183.5M669.5 201.5L660.5 217.5M669.5 201.5L659.5 200.5M669.5 183.5L669.5 174.5M669.5 183.5L659.5 200.5M669.5 183.5L659.5 182.5M669.5 174.5L659.5 182.5M659.5 441.5L659.5 423.5M659.5 441.5L650.5 449.5M659.5 441.5L650.5 440.5M659.5 423.5L659.5 405.5M659.5 423.5L650.5 440.5M659.5 423.5L650.5 423.5M659.5 405.5L660.5 384.5M659.5 405.5L650.5 423.5M659.5 405.5L651.5 404.5M660.5 384.5L659.5 365.5M660.5 384.5L651.5 404.5M660.5 384.5L651.5 383.5M659.5 365.5L659.5 347.5M659.5 365.5L651.5 383.5M659.5 365.5L650.5 365.5M659.5 347.5L658.5 327.5M659.5 347.5L650.5 365.5M659.5 347.5L648.5 346.5M658.5 327.5L659.5 308.5M658.5 327.5L648.5 346.5M658.5 327.5L648.5 326.5M659.5 308.5L659.5 289.5M659.5 308.5L648.5 326.5M659.5 308.5L649.5 306.5M659.5 289.5L660.5 270.5M659.5 289.5L649.5 306.5M659.5 289.5L650.5 288.5M660.5 270.5L661.5 252.5M660.5 270.5L650.5 288.5M660.5 270.5L651.5 268.5M661.5 252.5L660.5 237.5M661.5 252.5L651.5 268.5M661.5 252.5L651.5 253.5M660.5 237.5L660.5 217.5M660.5 237.5L651.5 253.5M660.5 237.5L651.5 234.5M660.5 217.5L659.5 200.5M660.5 217.5L651.5 234.5M660.5 217.5L650.5 217.5M659.5 200.5L659.5 182.5M659.5 200.5L650.5 217.5M659.5 200.5L650.5 199.5M659.5 182.5L650.5 199.5M659.5 182.5L650.5 190.5M650.5 449.5L650.5 440.5M650.5 449.5L641.5 457.5M650.5 440.5L650.5 423.5M650.5 440.5L641.5 457.5M650.5 440.5L641.5 440.5M650.5 423.5L651.5 404.5M650.5 423.5L641.5 440.5M650.5 423.5L641.5 422.5M651.5 404.5L651.5 383.5M651.5 404.5L641.5 422.5M651.5 404.5L642.5 403.5M651.5 383.5L650.5 365.5M651.5 383.5L642.5 403.5M651.5 383.5L641.5 382.5M650.5 365.5L648.5 346.5M650.5 365.5L641.5 382.5M650.5 365.5L640.5 363.5M648.5 346.5L648.5 326.5M648.5 346.5L640.5 363.5M648.5 346.5L639.5 344.5M648.5 326.5L649.5 306.5M648.5 326.5L639.5 344.5M648.5 326.5L638.5 327.5M649.5 306.5L650.5 288.5M649.5 306.5L638.5 327.5M649.5 306.5L639.5 306.5M650.5 288.5L651.5 268.5M650.5 288.5L639.5 306.5M650.5 288.5L641.5 286.5M651.5 268.5L651.5 253.5M651.5 268.5L641.5 286.5M651.5 268.5L641.5 269.5M651.5 253.5L651.5 234.5M651.5 253.5L641.5 269.5M651.5 253.5L641.5 252.5M651.5 234.5L650.5 217.5M651.5 234.5L641.5 252.5M651.5 234.5L641.5 235.5M650.5 217.5L650.5 199.5M650.5 217.5L641.5 235.5M650.5 217.5L640.5 217.5M650.5 199.5L650.5 190.5M650.5 199.5L640.5 217.5M650.5 199.5L641.5 198.5M650.5 190.5L641.5 198.5M641.5 457.5L641.5 440.5M641.5 457.5L631.5 465.5M641.5 457.5L632.5 457.5M641.5 440.5L641.5 422.5M641.5 440.5L632.5 457.5M641.5 440.5L633.5 440.5M641.5 422.5L642.5 403.5M641.5 422.5L633.5 440.5M641.5 422.5L633.5 419.5M642.5 403.5L641.5 382.5M642.5 403.5L633.5 419.5M642.5 403.5L633.5 402.5M641.5 382.5L640.5 363.5M641.5 382.5L633.5 402.5M641.5 382.5L632.5 382.5M640.5 363.5L639.5 344.5M640.5 363.5L632.5 382.5M640.5 363.5L630.5 364.5M639.5 344.5L638.5 327.5M639.5 344.5L630.5 364.5M639.5 344.5L628.5 345.5M638.5 327.5L639.5 306.5M638.5 327.5L628.5 345.5M638.5 327.5L629.5 327.5M639.5 306.5L641.5 286.5M639.5 306.5L629.5 327.5M639.5 306.5L630.5 306.5M641.5 286.5L641.5 269.5M641.5 286.5L630.5 306.5M641.5 286.5L632.5 288.5M641.5 269.5L641.5 252.5M641.5 269.5L632.5 288.5M641.5 269.5L632.5 270.5M641.5 252.5L641.5 235.5M641.5 252.5L632.5 270.5M641.5 252.5L632.5 253.5M641.5 235.5L640.5 217.5M641.5 235.5L632.5 253.5M641.5 235.5L631.5 235.5M640.5 217.5L641.5 198.5M640.5 217.5L631.5 235.5M640.5 217.5L631.5 216.5M641.5 198.5L631.5 216.5M641.5 198.5L631.5 206.5M631.5 465.5L632.5 457.5M631.5 465.5L622.5 473.5M632.5 457.5L633.5 440.5M632.5 457.5L622.5 473.5M632.5 457.5L622.5 457.5M633.5 440.5L633.5 419.5M633.5 440.5L622.5 457.5M633.5 440.5L624.5 437.5M633.5 419.5L633.5 402.5M633.5 419.5L624.5 437.5M633.5 419.5L625.5 417.5M633.5 402.5L632.5 382.5M633.5 402.5L625.5 417.5M633.5 402.5L624.5 401.5M632.5 382.5L630.5 364.5M632.5 382.5L624.5 401.5M632.5 382.5L622.5 383.5M630.5 364.5L628.5 345.5M630.5 364.5L622.5 383.5M630.5 364.5L620.5 365.5M628.5 345.5L629.5 327.5M628.5 345.5L620.5 365.5M628.5 345.5L618.5 346.5M629.5 327.5L630.5 306.5M629.5 327.5L618.5 346.5M629.5 327.5L619.5 328.5M630.5 306.5L632.5 288.5M630.5 306.5L619.5 328.5M630.5 306.5L620.5 308.5M632.5 288.5L632.5 270.5M632.5 288.5L620.5 308.5M632.5 288.5L621.5 290.5M632.5 270.5L632.5 253.5M632.5 270.5L621.5 290.5M632.5 270.5L622.5 271.5M632.5 253.5L631.5 235.5M632.5 253.5L622.5 271.5M632.5 253.5L621.5 254.5M631.5 235.5L631.5 216.5M631.5 235.5L621.5 254.5M631.5 235.5L621.5 235.5M631.5 216.5L631.5 206.5M631.5 216.5L621.5 235.5M631.5 216.5L622.5 214.5M631.5 206.5L622.5 214.5M622.5 473.5L622.5 457.5M622.5 473.5L612.5 481.5M622.5 473.5L613.5 472.5M622.5 457.5L624.5 437.5M622.5 457.5L613.5 472.5M622.5 457.5L615.5 454.5M624.5 437.5L625.5 417.5M624.5 437.5L615.5 454.5M624.5 437.5L616.5 434.5M625.5 417.5L624.5 401.5M625.5 417.5L616.5 434.5M625.5 417.5L616.5 417.5M624.5 401.5L622.5 383.5M624.5 401.5L616.5 417.5M624.5 401.5L614.5 399.5M622.5 383.5L620.5 365.5M622.5 383.5L614.5 399.5M622.5 383.5L611.5 383.5M620.5 365.5L618.5 346.5M620.5 365.5L611.5 383.5M620.5 365.5L609.5 367.5M618.5 346.5L619.5 328.5M618.5 346.5L609.5 367.5M618.5 346.5L609.5 347.5M619.5 328.5L620.5 308.5M619.5 328.5L609.5 347.5M619.5 328.5L610.5 327.5M620.5 308.5L621.5 290.5M620.5 308.5L610.5 327.5M620.5 308.5L610.5 310.5M621.5 290.5L622.5 271.5M621.5 290.5L610.5 310.5M621.5 290.5L612.5 290.5M622.5 271.5L621.5 254.5M622.5 271.5L612.5 290.5M622.5 271.5L612.5 270.5M621.5 254.5L621.5 235.5M621.5 254.5L612.5 270.5M621.5 254.5L612.5 251.5M621.5 235.5L622.5 214.5M621.5 235.5L612.5 251.5M621.5 235.5L612.5 233.5M622.5 214.5L612.5 233.5M622.5 214.5L612.5 222.5M612.5 481.5L613.5 472.5M612.5 481.5L603.5 490.5M613.5 472.5L615.5 454.5M613.5 472.5L603.5 490.5M613.5 472.5L604.5 470.5M615.5 454.5L616.5 434.5M615.5 454.5L604.5 470.5M615.5 454.5L607.5 450.5M616.5 434.5L616.5 417.5M616.5 434.5L607.5 450.5M616.5 434.5L608.5 433.5M616.5 417.5L614.5 399.5M616.5 417.5L608.5 433.5M616.5 417.5L606.5 415.5M614.5 399.5L611.5 383.5M614.5 399.5L606.5 415.5M614.5 399.5L604.5 399.5M611.5 383.5L609.5 367.5M611.5 383.5L604.5 399.5M611.5 383.5L601.5 382.5M609.5 367.5L609.5 347.5M609.5 367.5L601.5 382.5M609.5 367.5L598.5 367.5M609.5 347.5L610.5 327.5M609.5 347.5L598.5 367.5M609.5 347.5L599.5 349.5M610.5 327.5L610.5 310.5M610.5 327.5L599.5 349.5M610.5 327.5L601.5 328.5M610.5 310.5L612.5 290.5M610.5 310.5L601.5 328.5M610.5 310.5L602.5 309.5M612.5 290.5L612.5 270.5M612.5 290.5L602.5 309.5M612.5 290.5L602.5 289.5M612.5 270.5L612.5 251.5M612.5 270.5L602.5 289.5M612.5 270.5L602.5 270.5M612.5 251.5L612.5 233.5M612.5 251.5L602.5 270.5M612.5 251.5L603.5 250.5M612.5 233.5L612.5 222.5M612.5 233.5L603.5 250.5M612.5 233.5L603.5 231.5M612.5 222.5L603.5 231.5M603.5 490.5L604.5 470.5M603.5 490.5L594.5 498.5M603.5 490.5L594.5 489.5M604.5 470.5L607.5 450.5M604.5 470.5L594.5 489.5M604.5 470.5L596.5 469.5M607.5 450.5L608.5 433.5M607.5 450.5L596.5 469.5M607.5 450.5L598.5 448.5M608.5 433.5L606.5 415.5M608.5 433.5L598.5 448.5M608.5 433.5L598.5 430.5M606.5 415.5L604.5 399.5M606.5 415.5L598.5 430.5M606.5 415.5L596.5 414.5M604.5 399.5L601.5 382.5M604.5 399.5L596.5 414.5M604.5 399.5L594.5 399.5M601.5 382.5L598.5 367.5M601.5 382.5L594.5 399.5M601.5 382.5L590.5 385.5M598.5 367.5L599.5 349.5M598.5 367.5L590.5 385.5M598.5 367.5L590.5 366.5M599.5 349.5L601.5 328.5M599.5 349.5L590.5 366.5M599.5 349.5L589.5 347.5M601.5 328.5L602.5 309.5M601.5 328.5L589.5 347.5M601.5 328.5L591.5 326.5M602.5 309.5L602.5 289.5M602.5 309.5L591.5 326.5M602.5 309.5L592.5 307.5M602.5 289.5L602.5 270.5M602.5 289.5L592.5 307.5M602.5 289.5L592.5 289.5M602.5 270.5L603.5 250.5M602.5 270.5L592.5 289.5M602.5 270.5L593.5 267.5M603.5 250.5L603.5 231.5M603.5 250.5L593.5 267.5M603.5 250.5L593.5 248.5M603.5 231.5L593.5 248.5M603.5 231.5L594.5 239.5M594.5 498.5L594.5 489.5M594.5 498.5L584.5 506.5M594.5 489.5L596.5 469.5M594.5 489.5L584.5 506.5M594.5 489.5L586.5 484.5M596.5 469.5L598.5 448.5M596.5 469.5L586.5 484.5M596.5 469.5L588.5 465.5M598.5 448.5L598.5 430.5M598.5 448.5L588.5 465.5M598.5 448.5L588.5 446.5M598.5 430.5L596.5 414.5M598.5 430.5L588.5 446.5M598.5 430.5L588.5 428.5M596.5 414.5L594.5 399.5M596.5 414.5L588.5 428.5M596.5 414.5L585.5 414.5M594.5 399.5L590.5 385.5M594.5 399.5L585.5 414.5M594.5 399.5L582.5 400.5M590.5 385.5L590.5 366.5M590.5 385.5L582.5 400.5M590.5 385.5L581.5 383.5M590.5 366.5L589.5 347.5M590.5 366.5L581.5 383.5M590.5 366.5L580.5 365.5M589.5 347.5L591.5 326.5M589.5 347.5L580.5 365.5M589.5 347.5L581.5 345.5M591.5 326.5L592.5 307.5M591.5 326.5L581.5 345.5M591.5 326.5L583.5 325.5M592.5 307.5L592.5 289.5M592.5 307.5L583.5 325.5M592.5 307.5L582.5 304.5M592.5 289.5L593.5 267.5M592.5 289.5L582.5 304.5M592.5 289.5L583.5 284.5M593.5 267.5L593.5 248.5M593.5 267.5L583.5 284.5M593.5 267.5L583.5 265.5M593.5 248.5L594.5 239.5M593.5 248.5L583.5 265.5M593.5 248.5L584.5 247.5M594.5 239.5L584.5 247.5M584.5 506.5L586.5 484.5M584.5 506.5L575.5 514.5M584.5 506.5L576.5 502.5M586.5 484.5L588.5 465.5M586.5 484.5L576.5 502.5M586.5 484.5L577.5 483.5M588.5 465.5L588.5 446.5M588.5 465.5L577.5 483.5M588.5 465.5L579.5 463.5M588.5 446.5L588.5 428.5M588.5 446.5L579.5 463.5M588.5 446.5L579.5 445.5M588.5 428.5L585.5 414.5M588.5 428.5L579.5 445.5M588.5 428.5L577.5 428.5M585.5 414.5L582.5 400.5M585.5 414.5L577.5 428.5M585.5 414.5L575.5 414.5M582.5 400.5L581.5 383.5M582.5 400.5L575.5 414.5M582.5 400.5L572.5 398.5M581.5 383.5L580.5 365.5M581.5 383.5L572.5 398.5M581.5 383.5L571.5 382.5M580.5 365.5L581.5 345.5M580.5 365.5L571.5 382.5M580.5 365.5L571.5 363.5M581.5 345.5L583.5 325.5M581.5 345.5L571.5 363.5M581.5 345.5L572.5 342.5M583.5 325.5L582.5 304.5M583.5 325.5L572.5 342.5M583.5 325.5L573.5 322.5M582.5 304.5L583.5 284.5M582.5 304.5L573.5 322.5M582.5 304.5L574.5 301.5M583.5 284.5L583.5 265.5M583.5 284.5L574.5 301.5M583.5 284.5L574.5 283.5M583.5 265.5L584.5 247.5M583.5 265.5L574.5 283.5M583.5 265.5L574.5 265.5M584.5 247.5L574.5 265.5M584.5 247.5L575.5 255.5M575.5 514.5L576.5 502.5M575.5 514.5L566.5 522.5M576.5 502.5L577.5 483.5M576.5 502.5L566.5 522.5M576.5 502.5L566.5 501.5M577.5 483.5L579.5 463.5M577.5 483.5L566.5 501.5M577.5 483.5L568.5 481.5M579.5 463.5L579.5 445.5M579.5 463.5L568.5 481.5M579.5 463.5L569.5 460.5M579.5 445.5L577.5 428.5M579.5 445.5L569.5 460.5M579.5 445.5L568.5 444.5M577.5 428.5L575.5 414.5M577.5 428.5L568.5 444.5M577.5 428.5L567.5 429.5M575.5 414.5L572.5 398.5M575.5 414.5L567.5 429.5M575.5 414.5L564.5 415.5M572.5 398.5L571.5 382.5M572.5 398.5L564.5 415.5M572.5 398.5L562.5 399.5M571.5 382.5L571.5 363.5M571.5 382.5L562.5 399.5M571.5 382.5L563.5 378.5M571.5 363.5L572.5 342.5M571.5 363.5L563.5 378.5M571.5 363.5L564.5 360.5M572.5 342.5L573.5 322.5M572.5 342.5L564.5 360.5M572.5 342.5L564.5 338.5M573.5 322.5L574.5 301.5M573.5 322.5L564.5 338.5M573.5 322.5L565.5 319.5M574.5 301.5L574.5 283.5M574.5 301.5L565.5 319.5M574.5 301.5L565.5 300.5M574.5 283.5L574.5 265.5M574.5 283.5L565.5 300.5M574.5 283.5L565.5 280.5M574.5 265.5L575.5 255.5M574.5 265.5L565.5 280.5M574.5 265.5L566.5 263.5M575.5 255.5L566.5 263.5M566.5 522.5L566.5 501.5M566.5 522.5L556.5 530.5M566.5 522.5L556.5 519.5M566.5 501.5L568.5 481.5M566.5 501.5L556.5 519.5M566.5 501.5L558.5 500.5M568.5 481.5L569.5 460.5M568.5 481.5L558.5 500.5M568.5 481.5L558.5 480.5M569.5 460.5L568.5 444.5M569.5 460.5L558.5 480.5M569.5 460.5L559.5 462.5M568.5 444.5L567.5 429.5M568.5 444.5L559.5 462.5M568.5 444.5L557.5 446.5M567.5 429.5L564.5 415.5M567.5 429.5L557.5 446.5M567.5 429.5L555.5 430.5M564.5 415.5L562.5 399.5M564.5 415.5L555.5 430.5M564.5 415.5L554.5 413.5M562.5 399.5L563.5 378.5M562.5 399.5L554.5 413.5M562.5 399.5L554.5 396.5M563.5 378.5L564.5 360.5M563.5 378.5L554.5 396.5M563.5 378.5L554.5 377.5M564.5 360.5L564.5 338.5M564.5 360.5L554.5 377.5M564.5 360.5L555.5 358.5M564.5 338.5L565.5 319.5M564.5 338.5L555.5 358.5M564.5 338.5L555.5 336.5M565.5 319.5L565.5 300.5M565.5 319.5L555.5 336.5M565.5 319.5L555.5 317.5M565.5 300.5L565.5 280.5M565.5 300.5L555.5 317.5M565.5 300.5L556.5 298.5M565.5 280.5L566.5 263.5M565.5 280.5L556.5 298.5M565.5 280.5L556.5 279.5M566.5 263.5L556.5 279.5M566.5 263.5L556.5 271.5M556.5 530.5L556.5 519.5M556.5 530.5L547.5 538.5M556.5 519.5L558.5 500.5M556.5 519.5L547.5 538.5M556.5 519.5L547.5 519.5M558.5 500.5L558.5 480.5M558.5 500.5L547.5 519.5M558.5 500.5L548.5 498.5M558.5 480.5L559.5 462.5M558.5 480.5L548.5 498.5M558.5 480.5L549.5 481.5M559.5 462.5L557.5 446.5M559.5 462.5L549.5 481.5M559.5 462.5L548.5 463.5M557.5 446.5L555.5 430.5M557.5 446.5L548.5 463.5M557.5 446.5L548.5 446.5M555.5 430.5L554.5 413.5M555.5 430.5L548.5 446.5M555.5 430.5L546.5 429.5M554.5 413.5L554.5 396.5M554.5 413.5L546.5 429.5M554.5 413.5L545.5 412.5M554.5 396.5L554.5 377.5M554.5 396.5L545.5 412.5M554.5 396.5L545.5 393.5M554.5 377.5L555.5 358.5M554.5 377.5L545.5 393.5M554.5 377.5L546.5 373.5M555.5 358.5L555.5 336.5M555.5 358.5L546.5 373.5M555.5 358.5L546.5 355.5M555.5 336.5L555.5 317.5M555.5 336.5L546.5 355.5M555.5 336.5L547.5 334.5M555.5 317.5L556.5 298.5M555.5 317.5L547.5 334.5M555.5 317.5L546.5 316.5M556.5 298.5L556.5 279.5M556.5 298.5L546.5 316.5M556.5 298.5L547.5 297.5M556.5 279.5L556.5 271.5M556.5 279.5L547.5 297.5M556.5 279.5L547.5 279.5M556.5 271.5L547.5 279.5M547.5 538.5L547.5 519.5M547.5 538.5L537.5 546.5M547.5 538.5L538.5 537.5M547.5 519.5L548.5 498.5M547.5 519.5L538.5 537.5M547.5 519.5L538.5 518.5M548.5 498.5L549.5 481.5M548.5 498.5L538.5 518.5M548.5 498.5L538.5 499.5M549.5 481.5L548.5 463.5M549.5 481.5L538.5 499.5M549.5 481.5L538.5 481.5M548.5 463.5L548.5 446.5M548.5 463.5L538.5 481.5M548.5 463.5L537.5 464.5M548.5 446.5L546.5 429.5M548.5 446.5L537.5 464.5M548.5 446.5L537.5 446.5M546.5 429.5L545.5 412.5M546.5 429.5L537.5 446.5M546.5 429.5L537.5 427.5M545.5 412.5L545.5 393.5M545.5 412.5L537.5 427.5M545.5 412.5L537.5 409.5M545.5 393.5L546.5 373.5M545.5 393.5L537.5 409.5M545.5 393.5L537.5 391.5M546.5 373.5L546.5 355.5M546.5 373.5L537.5 391.5M546.5 373.5L537.5 372.5M546.5 355.5L547.5 334.5M546.5 355.5L537.5 372.5M546.5 355.5L537.5 353.5M547.5 334.5L546.5 316.5M547.5 334.5L537.5 353.5M547.5 334.5L538.5 332.5M546.5 316.5L547.5 297.5M546.5 316.5L538.5 332.5M546.5 316.5L537.5 316.5M547.5 297.5L547.5 279.5M547.5 297.5L537.5 316.5M547.5 297.5L537.5 296.5M547.5 279.5L537.5 296.5M547.5 279.5L537.5 287.5M537.5 546.5L538.5 537.5M537.5 546.5L528.5 554.5M538.5 537.5L538.5 518.5M538.5 537.5L528.5 554.5M538.5 537.5L528.5 536.5M538.5 518.5L538.5 499.5M538.5 518.5L528.5 536.5M538.5 518.5L528.5 517.5M538.5 499.5L538.5 481.5M538.5 499.5L528.5 517.5M538.5 499.5L528.5 499.5M538.5 481.5L537.5 464.5M538.5 481.5L528.5 499.5M538.5 481.5L528.5 480.5M537.5 464.5L537.5 446.5M537.5 464.5L528.5 480.5M537.5 464.5L528.5 462.5M537.5 446.5L537.5 427.5M537.5 446.5L528.5 462.5M537.5 446.5L528.5 443.5M537.5 427.5L537.5 409.5M537.5 427.5L528.5 443.5M537.5 427.5L528.5 425.5M537.5 409.5L537.5 391.5M537.5 409.5L528.5 425.5M537.5 409.5L528.5 406.5M537.5 391.5L537.5 372.5M537.5 391.5L528.5 406.5M537.5 391.5L528.5 388.5M537.5 372.5L537.5 353.5M537.5 372.5L528.5 388.5M537.5 372.5L528.5 369.5M537.5 353.5L538.5 332.5M537.5 353.5L528.5 369.5M537.5 353.5L528.5 351.5M538.5 332.5L537.5 316.5M538.5 332.5L528.5 351.5M538.5 332.5L528.5 332.5M537.5 316.5L537.5 296.5M537.5 316.5L528.5 332.5M537.5 316.5L528.5 314.5M537.5 296.5L537.5 287.5M537.5 296.5L528.5 314.5M537.5 296.5L528.5 295.5M537.5 287.5L528.5 295.5M528.5 554.5L528.5 536.5M528.5 536.5L528.5 517.5M528.5 517.5L528.5 499.5M528.5 499.5L528.5 480.5M528.5 480.5L528.5 462.5M528.5 462.5L528.5 443.5M528.5 443.5L528.5 425.5M528.5 425.5L528.5 406.5M528.5 406.5L528.5 388.5M528.5 388.5L528.5 369.5M528.5 369.5L528.5 351.5M528.5 351.5L528.5 332.5M528.5 332.5L528.5 314.5M528.5 314.5L528.5 295.5M270.5 480.5L270.5 462.5M270.5 480.5L286.5 485.5M270.5 480.5L286.5 476.5M270.5 462.5L270.5 443.5M270.5 462.5L286.5 476.5M270.5 462.5L286.5 458.5M270.5 443.5L270.5 425.5M270.5 443.5L286.5 458.5M270.5 443.5L286.5 439.5M270.5 425.5L270.5 406.5M270.5 425.5L286.5 439.5M270.5 425.5L285.5 420.5M270.5 406.5L270.5 388.5M270.5 406.5L285.5 420.5M270.5 406.5L286.5 401.5M270.5 388.5L270.5 369.5M270.5 388.5L286.5 401.5M270.5 388.5L285.5 384.5M270.5 369.5L270.5 351.5M270.5 369.5L285.5 384.5M270.5 369.5L285.5 364.5M270.5 351.5L270.5 332.5M270.5 351.5L285.5 364.5M270.5 351.5L286.5 347.5M270.5 332.5L270.5 314.5M270.5 332.5L286.5 347.5M270.5 332.5L285.5 328.5M270.5 314.5L270.5 295.5M270.5 314.5L285.5 328.5M270.5 314.5L286.5 309.5M270.5 295.5L270.5 277.5M270.5 295.5L286.5 309.5M270.5 295.5L285.5 292.5M270.5 277.5L270.5 258.5M270.5 277.5L285.5 292.5M270.5 277.5L287.5 273.5M270.5 258.5L270.5 240.5M270.5 258.5L287.5 273.5M270.5 258.5L286.5 255.5M270.5 240.5L270.5 221.5M270.5 240.5L286.5 255.5M270.5 240.5L287.5 236.5M270.5 221.5L287.5 236.5M270.5 221.5L286.5 226.5M286.5 485.5L286.5 476.5M286.5 485.5L302.5 489.5M286.5 476.5L286.5 458.5M286.5 476.5L302.5 489.5M286.5 476.5L301.5 471.5M286.5 458.5L286.5 439.5M286.5 458.5L301.5 471.5M286.5 458.5L302.5 453.5M286.5 439.5L285.5 420.5M286.5 439.5L302.5 453.5M286.5 439.5L302.5 435.5M285.5 420.5L286.5 401.5M285.5 420.5L302.5 435.5M285.5 420.5L301.5 416.5M286.5 401.5L285.5 384.5M286.5 401.5L301.5 416.5M286.5 401.5L300.5 397.5M285.5 384.5L285.5 364.5M285.5 384.5L300.5 397.5M285.5 384.5L301.5 377.5M285.5 364.5L286.5 347.5M285.5 364.5L301.5 377.5M285.5 364.5L301.5 359.5M286.5 347.5L285.5 328.5M286.5 347.5L301.5 359.5M286.5 347.5L301.5 343.5M285.5 328.5L286.5 309.5M285.5 328.5L301.5 343.5M285.5 328.5L302.5 325.5M286.5 309.5L285.5 292.5M286.5 309.5L302.5 325.5M286.5 309.5L301.5 306.5M285.5 292.5L287.5 273.5M285.5 292.5L301.5 306.5M285.5 292.5L302.5 289.5M287.5 273.5L286.5 255.5M287.5 273.5L302.5 289.5M287.5 273.5L303.5 270.5M286.5 255.5L287.5 236.5M286.5 255.5L303.5 270.5M286.5 255.5L302.5 249.5M287.5 236.5L286.5 226.5M287.5 236.5L302.5 249.5M287.5 236.5L302.5 230.5M286.5 226.5L302.5 230.5M302.5 489.5L301.5 471.5M302.5 489.5L318.5 494.5M302.5 489.5L318.5 485.5M301.5 471.5L302.5 453.5M301.5 471.5L318.5 485.5M301.5 471.5L318.5 469.5M302.5 453.5L302.5 435.5M302.5 453.5L318.5 469.5M302.5 453.5L316.5 450.5M302.5 435.5L301.5 416.5M302.5 435.5L316.5 450.5M302.5 435.5L317.5 430.5M301.5 416.5L300.5 397.5M301.5 416.5L317.5 430.5M301.5 416.5L316.5 410.5M300.5 397.5L301.5 377.5M300.5 397.5L316.5 410.5M300.5 397.5L316.5 388.5M301.5 377.5L301.5 359.5M301.5 377.5L316.5 388.5M301.5 377.5L316.5 370.5M301.5 359.5L301.5 343.5M301.5 359.5L316.5 370.5M301.5 359.5L316.5 354.5M301.5 343.5L302.5 325.5M301.5 343.5L316.5 354.5M301.5 343.5L316.5 338.5M302.5 325.5L301.5 306.5M302.5 325.5L316.5 338.5M302.5 325.5L316.5 322.5M301.5 306.5L302.5 289.5M301.5 306.5L316.5 322.5M301.5 306.5L317.5 305.5M302.5 289.5L303.5 270.5M302.5 289.5L317.5 305.5M302.5 289.5L318.5 285.5M303.5 270.5L302.5 249.5M303.5 270.5L318.5 285.5M303.5 270.5L319.5 266.5M302.5 249.5L302.5 230.5M302.5 249.5L319.5 266.5M302.5 249.5L319.5 246.5M302.5 230.5L319.5 246.5M302.5 230.5L318.5 235.5M318.5 494.5L318.5 485.5M318.5 494.5L335.5 499.5M318.5 485.5L318.5 469.5M318.5 485.5L335.5 499.5M318.5 485.5L334.5 482.5M318.5 469.5L316.5 450.5M318.5 469.5L334.5 482.5M318.5 469.5L334.5 465.5M316.5 450.5L317.5 430.5M316.5 450.5L334.5 465.5M316.5 450.5L332.5 445.5M317.5 430.5L316.5 410.5M317.5 430.5L332.5 445.5M317.5 430.5L332.5 423.5M316.5 410.5L316.5 388.5M316.5 410.5L332.5 423.5M316.5 410.5L332.5 402.5M316.5 388.5L316.5 370.5M316.5 388.5L332.5 402.5M316.5 388.5L333.5 384.5M316.5 370.5L316.5 354.5M316.5 370.5L333.5 384.5M316.5 370.5L331.5 365.5M316.5 354.5L316.5 338.5M316.5 354.5L331.5 365.5M316.5 354.5L333.5 350.5M316.5 338.5L316.5 322.5M316.5 338.5L333.5 350.5M316.5 338.5L333.5 336.5M316.5 322.5L317.5 305.5M316.5 322.5L333.5 336.5M316.5 322.5L332.5 319.5M317.5 305.5L318.5 285.5M317.5 305.5L332.5 319.5M317.5 305.5L333.5 301.5M318.5 285.5L319.5 266.5M318.5 285.5L333.5 301.5M318.5 285.5L334.5 282.5M319.5 266.5L319.5 246.5M319.5 266.5L334.5 282.5M319.5 266.5L335.5 261.5M319.5 246.5L318.5 235.5M319.5 246.5L335.5 261.5M319.5 246.5L335.5 240.5M318.5 235.5L335.5 240.5M335.5 499.5L334.5 482.5M335.5 499.5L351.5 503.5M335.5 499.5L350.5 495.5M334.5 482.5L334.5 465.5M334.5 482.5L350.5 495.5M334.5 482.5L350.5 478.5M334.5 465.5L332.5 445.5M334.5 465.5L350.5 478.5M334.5 465.5L348.5 458.5M332.5 445.5L332.5 423.5M332.5 445.5L348.5 458.5M332.5 445.5L349.5 437.5M332.5 423.5L332.5 402.5M332.5 423.5L349.5 437.5M332.5 423.5L349.5 418.5M332.5 402.5L333.5 384.5M332.5 402.5L349.5 418.5M332.5 402.5L350.5 397.5M333.5 384.5L331.5 365.5M333.5 384.5L350.5 397.5M333.5 384.5L351.5 380.5M331.5 365.5L333.5 350.5M331.5 365.5L351.5 380.5M331.5 365.5L351.5 364.5M333.5 350.5L333.5 336.5M333.5 350.5L351.5 364.5M333.5 350.5L350.5 348.5M333.5 336.5L332.5 319.5M333.5 336.5L350.5 348.5M333.5 336.5L350.5 334.5M332.5 319.5L333.5 301.5M332.5 319.5L350.5 334.5M332.5 319.5L349.5 317.5M333.5 301.5L334.5 282.5M333.5 301.5L349.5 317.5M333.5 301.5L350.5 297.5M334.5 282.5L335.5 261.5M334.5 282.5L350.5 297.5M334.5 282.5L349.5 276.5M335.5 261.5L335.5 240.5M335.5 261.5L349.5 276.5M335.5 261.5L351.5 254.5M335.5 240.5L351.5 254.5M335.5 240.5L351.5 244.5M351.5 503.5L350.5 495.5M351.5 503.5L367.5 508.5M350.5 495.5L350.5 478.5M350.5 495.5L367.5 508.5M350.5 495.5L366.5 491.5M350.5 478.5L348.5 458.5M350.5 478.5L366.5 491.5M350.5 478.5L364.5 473.5M348.5 458.5L349.5 437.5M348.5 458.5L364.5 473.5M348.5 458.5L365.5 453.5M349.5 437.5L349.5 418.5M349.5 437.5L365.5 453.5M349.5 437.5L367.5 433.5M349.5 418.5L350.5 397.5M349.5 418.5L367.5 433.5M349.5 418.5L368.5 413.5M350.5 397.5L351.5 380.5M350.5 397.5L368.5 413.5M350.5 397.5L370.5 393.5M351.5 380.5L351.5 364.5M351.5 380.5L370.5 393.5M351.5 380.5L369.5 375.5M351.5 364.5L350.5 348.5M351.5 364.5L369.5 375.5M351.5 364.5L369.5 360.5M350.5 348.5L350.5 334.5M350.5 348.5L369.5 360.5M350.5 348.5L369.5 345.5M350.5 334.5L349.5 317.5M350.5 334.5L369.5 345.5M350.5 334.5L367.5 328.5M349.5 317.5L350.5 297.5M349.5 317.5L367.5 328.5M349.5 317.5L366.5 311.5M350.5 297.5L349.5 276.5M350.5 297.5L366.5 311.5M350.5 297.5L365.5 290.5M349.5 276.5L351.5 254.5M349.5 276.5L365.5 290.5M349.5 276.5L367.5 269.5M351.5 254.5L351.5 244.5M351.5 254.5L367.5 269.5M351.5 254.5L367.5 249.5M351.5 244.5L367.5 249.5M367.5 508.5L366.5 491.5M367.5 508.5L383.5 512.5M367.5 508.5L383.5 503.5M366.5 491.5L364.5 473.5M366.5 491.5L383.5 503.5M366.5 491.5L381.5 486.5M364.5 473.5L365.5 453.5M364.5 473.5L381.5 486.5M364.5 473.5L381.5 466.5M365.5 453.5L367.5 433.5M365.5 453.5L381.5 466.5M365.5 453.5L383.5 446.5M367.5 433.5L368.5 413.5M367.5 433.5L383.5 446.5M367.5 433.5L385.5 428.5M368.5 413.5L370.5 393.5M368.5 413.5L385.5 428.5M368.5 413.5L388.5 409.5M370.5 393.5L369.5 375.5M370.5 393.5L388.5 409.5M370.5 393.5L390.5 392.5M369.5 375.5L369.5 360.5M369.5 375.5L390.5 392.5M369.5 375.5L389.5 375.5M369.5 360.5L369.5 345.5M369.5 360.5L389.5 375.5M369.5 360.5L387.5 357.5M369.5 345.5L367.5 328.5M369.5 345.5L387.5 357.5M369.5 345.5L385.5 340.5M367.5 328.5L366.5 311.5M367.5 328.5L385.5 340.5M367.5 328.5L382.5 320.5M366.5 311.5L365.5 290.5M366.5 311.5L382.5 320.5M366.5 311.5L381.5 302.5M365.5 290.5L367.5 269.5M365.5 290.5L381.5 302.5M365.5 290.5L382.5 283.5M367.5 269.5L367.5 249.5M367.5 269.5L382.5 283.5M367.5 269.5L381.5 262.5M367.5 249.5L381.5 262.5M367.5 249.5L383.5 253.5M383.5 512.5L383.5 503.5M383.5 512.5L399.5 517.5M383.5 503.5L381.5 486.5M383.5 503.5L399.5 517.5M383.5 503.5L398.5 498.5M381.5 486.5L381.5 466.5M381.5 486.5L398.5 498.5M381.5 486.5L397.5 479.5M381.5 466.5L383.5 446.5M381.5 466.5L397.5 479.5M381.5 466.5L399.5 460.5M383.5 446.5L385.5 428.5M383.5 446.5L399.5 460.5M383.5 446.5L402.5 443.5M385.5 428.5L388.5 409.5M385.5 428.5L402.5 443.5M385.5 428.5L405.5 426.5M388.5 409.5L390.5 392.5M388.5 409.5L405.5 426.5M388.5 409.5L409.5 409.5M390.5 392.5L389.5 375.5M390.5 392.5L409.5 409.5M390.5 392.5L410.5 389.5M389.5 375.5L387.5 357.5M389.5 375.5L410.5 389.5M389.5 375.5L409.5 372.5M387.5 357.5L385.5 340.5M387.5 357.5L409.5 372.5M387.5 357.5L404.5 351.5M385.5 340.5L382.5 320.5M385.5 340.5L404.5 351.5M385.5 340.5L400.5 331.5M382.5 320.5L381.5 302.5M382.5 320.5L400.5 331.5M382.5 320.5L398.5 313.5M381.5 302.5L382.5 283.5M381.5 302.5L398.5 313.5M381.5 302.5L397.5 294.5M382.5 283.5L381.5 262.5M382.5 283.5L397.5 294.5M382.5 283.5L398.5 277.5M381.5 262.5L383.5 253.5M381.5 262.5L398.5 277.5M381.5 262.5L399.5 258.5M383.5 253.5L399.5 258.5M399.5 517.5L398.5 498.5M399.5 517.5L415.5 522.5M399.5 517.5L414.5 510.5M398.5 498.5L397.5 479.5M398.5 498.5L414.5 510.5M398.5 498.5L413.5 491.5M397.5 479.5L399.5 460.5M397.5 479.5L413.5 491.5M397.5 479.5L413.5 473.5M399.5 460.5L402.5 443.5M399.5 460.5L413.5 473.5M399.5 460.5L416.5 456.5M402.5 443.5L405.5 426.5M402.5 443.5L416.5 456.5M402.5 443.5L421.5 441.5M405.5 426.5L409.5 409.5M405.5 426.5L421.5 441.5M405.5 426.5L426.5 424.5M409.5 409.5L410.5 389.5M409.5 409.5L426.5 424.5M409.5 409.5L429.5 407.5M410.5 389.5L409.5 372.5M410.5 389.5L429.5 407.5M410.5 389.5L428.5 387.5M409.5 372.5L404.5 351.5M409.5 372.5L428.5 387.5M409.5 372.5L425.5 366.5M404.5 351.5L400.5 331.5M404.5 351.5L425.5 366.5M404.5 351.5L420.5 343.5M400.5 331.5L398.5 313.5M400.5 331.5L420.5 343.5M400.5 331.5L415.5 323.5M398.5 313.5L397.5 294.5M398.5 313.5L415.5 323.5M398.5 313.5L413.5 304.5M397.5 294.5L398.5 277.5M397.5 294.5L413.5 304.5M397.5 294.5L411.5 287.5M398.5 277.5L399.5 258.5M398.5 277.5L411.5 287.5M398.5 277.5L415.5 272.5M399.5 258.5L415.5 272.5M399.5 258.5L415.5 263.5M415.5 522.5L414.5 510.5M415.5 522.5L431.5 526.5M414.5 510.5L413.5 491.5M414.5 510.5L431.5 526.5M414.5 510.5L429.5 506.5M413.5 491.5L413.5 473.5M413.5 491.5L429.5 506.5M413.5 491.5L430.5 487.5M413.5 473.5L416.5 456.5M413.5 473.5L430.5 487.5M413.5 473.5L432.5 469.5M416.5 456.5L421.5 441.5M416.5 456.5L432.5 469.5M416.5 456.5L435.5 454.5M421.5 441.5L426.5 424.5M421.5 441.5L435.5 454.5M421.5 441.5L440.5 439.5M426.5 424.5L429.5 407.5M426.5 424.5L440.5 439.5M426.5 424.5L443.5 422.5M429.5 407.5L428.5 387.5M429.5 407.5L443.5 422.5M429.5 407.5L445.5 404.5M428.5 387.5L425.5 366.5M428.5 387.5L445.5 404.5M428.5 387.5L442.5 381.5M425.5 366.5L420.5 343.5M425.5 366.5L442.5 381.5M425.5 366.5L438.5 356.5M420.5 343.5L415.5 323.5M420.5 343.5L438.5 356.5M420.5 343.5L434.5 336.5M415.5 323.5L413.5 304.5M415.5 323.5L434.5 336.5M415.5 323.5L429.5 315.5M413.5 304.5L411.5 287.5M413.5 304.5L429.5 315.5M413.5 304.5L428.5 299.5M411.5 287.5L415.5 272.5M411.5 287.5L428.5 299.5M411.5 287.5L430.5 284.5M415.5 272.5L415.5 263.5M415.5 272.5L430.5 284.5M415.5 272.5L431.5 267.5M415.5 263.5L431.5 267.5M431.5 526.5L429.5 506.5M431.5 526.5L447.5 531.5M431.5 526.5L446.5 519.5M429.5 506.5L430.5 487.5M429.5 506.5L446.5 519.5M429.5 506.5L445.5 498.5M430.5 487.5L432.5 469.5M430.5 487.5L445.5 498.5M430.5 487.5L447.5 482.5M432.5 469.5L435.5 454.5M432.5 469.5L447.5 482.5M432.5 469.5L448.5 466.5M435.5 454.5L440.5 439.5M435.5 454.5L448.5 466.5M435.5 454.5L454.5 452.5M440.5 439.5L443.5 422.5M440.5 439.5L454.5 452.5M440.5 439.5L456.5 436.5M443.5 422.5L445.5 404.5M443.5 422.5L456.5 436.5M443.5 422.5L459.5 419.5M445.5 404.5L442.5 381.5M445.5 404.5L459.5 419.5M445.5 404.5L458.5 397.5M442.5 381.5L438.5 356.5M442.5 381.5L458.5 397.5M442.5 381.5L456.5 372.5M438.5 356.5L434.5 336.5M438.5 356.5L456.5 372.5M438.5 356.5L452.5 351.5M434.5 336.5L429.5 315.5M434.5 336.5L452.5 351.5M434.5 336.5L448.5 329.5M429.5 315.5L428.5 299.5M429.5 315.5L448.5 329.5M429.5 315.5L445.5 310.5M428.5 299.5L430.5 284.5M428.5 299.5L445.5 310.5M428.5 299.5L445.5 295.5M430.5 284.5L431.5 267.5M430.5 284.5L445.5 295.5M430.5 284.5L446.5 280.5M431.5 267.5L446.5 280.5M431.5 267.5L447.5 272.5M447.5 531.5L446.5 519.5M447.5 531.5L464.5 536.5M446.5 519.5L445.5 498.5M446.5 519.5L464.5 536.5M446.5 519.5L462.5 513.5M445.5 498.5L447.5 482.5M445.5 498.5L462.5 513.5M445.5 498.5L463.5 495.5M447.5 482.5L448.5 466.5M447.5 482.5L463.5 495.5M447.5 482.5L463.5 478.5M448.5 466.5L454.5 452.5M448.5 466.5L463.5 478.5M448.5 466.5L465.5 462.5M454.5 452.5L456.5 436.5M454.5 452.5L465.5 462.5M454.5 452.5L470.5 448.5M456.5 436.5L459.5 419.5M456.5 436.5L470.5 448.5M456.5 436.5L471.5 431.5M459.5 419.5L458.5 397.5M459.5 419.5L471.5 431.5M459.5 419.5L472.5 410.5M458.5 397.5L456.5 372.5M458.5 397.5L472.5 410.5M458.5 397.5L472.5 388.5M456.5 372.5L452.5 351.5M456.5 372.5L472.5 388.5M456.5 372.5L468.5 365.5M452.5 351.5L448.5 329.5M452.5 351.5L468.5 365.5M452.5 351.5L465.5 345.5M448.5 329.5L445.5 310.5M448.5 329.5L465.5 345.5M448.5 329.5L462.5 324.5M445.5 310.5L445.5 295.5M445.5 310.5L462.5 324.5M445.5 310.5L461.5 308.5M445.5 295.5L446.5 280.5M445.5 295.5L461.5 308.5M445.5 295.5L462.5 293.5M446.5 280.5L447.5 272.5M446.5 280.5L462.5 293.5M446.5 280.5L464.5 277.5M447.5 272.5L464.5 277.5M464.5 536.5L462.5 513.5M464.5 536.5L480.5 540.5M464.5 536.5L479.5 530.5M462.5 513.5L463.5 495.5M462.5 513.5L479.5 530.5M462.5 513.5L478.5 511.5M463.5 495.5L463.5 478.5M463.5 495.5L478.5 511.5M463.5 495.5L478.5 492.5M463.5 478.5L465.5 462.5M463.5 478.5L478.5 492.5M463.5 478.5L481.5 476.5M465.5 462.5L470.5 448.5M465.5 462.5L481.5 476.5M465.5 462.5L481.5 459.5M470.5 448.5L471.5 431.5M470.5 448.5L481.5 459.5M470.5 448.5L484.5 441.5M471.5 431.5L472.5 410.5M471.5 431.5L484.5 441.5M471.5 431.5L485.5 422.5M472.5 410.5L472.5 388.5M472.5 410.5L485.5 422.5M472.5 410.5L484.5 403.5M472.5 388.5L468.5 365.5M472.5 388.5L484.5 403.5M472.5 388.5L484.5 382.5M468.5 365.5L465.5 345.5M468.5 365.5L484.5 382.5M468.5 365.5L481.5 360.5M465.5 345.5L462.5 324.5M465.5 345.5L481.5 360.5M465.5 345.5L480.5 340.5M462.5 324.5L461.5 308.5M462.5 324.5L480.5 340.5M462.5 324.5L478.5 322.5M461.5 308.5L462.5 293.5M461.5 308.5L478.5 322.5M461.5 308.5L478.5 306.5M462.5 293.5L464.5 277.5M462.5 293.5L478.5 306.5M462.5 293.5L480.5 289.5M464.5 277.5L480.5 289.5M464.5 277.5L480.5 281.5M480.5 540.5L479.5 530.5M480.5 540.5L496.5 545.5M479.5 530.5L478.5 511.5M479.5 530.5L496.5 545.5M479.5 530.5L496.5 525.5M478.5 511.5L478.5 492.5M478.5 511.5L496.5 525.5M478.5 511.5L495.5 506.5M478.5 492.5L481.5 476.5M478.5 492.5L495.5 506.5M478.5 492.5L495.5 488.5M481.5 476.5L481.5 459.5M481.5 476.5L495.5 488.5M481.5 476.5L495.5 470.5M481.5 459.5L484.5 441.5M481.5 459.5L495.5 470.5M481.5 459.5L498.5 452.5M484.5 441.5L485.5 422.5M484.5 441.5L498.5 452.5M484.5 441.5L498.5 436.5M485.5 422.5L484.5 403.5M485.5 422.5L498.5 436.5M485.5 422.5L497.5 415.5M484.5 403.5L484.5 382.5M484.5 403.5L497.5 415.5M484.5 403.5L497.5 396.5M484.5 382.5L481.5 360.5M484.5 382.5L497.5 396.5M484.5 382.5L497.5 377.5M481.5 360.5L480.5 340.5M481.5 360.5L497.5 377.5M481.5 360.5L495.5 357.5M480.5 340.5L478.5 322.5M480.5 340.5L495.5 357.5M480.5 340.5L495.5 339.5M478.5 322.5L478.5 306.5M478.5 322.5L495.5 339.5M478.5 322.5L494.5 322.5M478.5 306.5L480.5 289.5M478.5 306.5L494.5 322.5M478.5 306.5L495.5 304.5M480.5 289.5L480.5 281.5M480.5 289.5L495.5 304.5M480.5 289.5L496.5 286.5M480.5 281.5L496.5 286.5M496.5 545.5L496.5 525.5M496.5 545.5L512.5 549.5M496.5 545.5L512.5 541.5M496.5 525.5L495.5 506.5M496.5 525.5L512.5 541.5M496.5 525.5L512.5 520.5M495.5 506.5L495.5 488.5M495.5 506.5L512.5 520.5M495.5 506.5L512.5 503.5M495.5 488.5L495.5 470.5M495.5 488.5L512.5 503.5M495.5 488.5L512.5 484.5M495.5 470.5L498.5 452.5M495.5 470.5L512.5 484.5M495.5 470.5L512.5 467.5M498.5 452.5L498.5 436.5M498.5 452.5L512.5 467.5M498.5 452.5L511.5 448.5M498.5 436.5L497.5 415.5M498.5 436.5L511.5 448.5M498.5 436.5L512.5 429.5M497.5 415.5L497.5 396.5M497.5 415.5L512.5 429.5M497.5 415.5L512.5 410.5M497.5 396.5L497.5 377.5M497.5 396.5L512.5 410.5M497.5 396.5L512.5 391.5M497.5 377.5L495.5 357.5M497.5 377.5L512.5 391.5M497.5 377.5L512.5 372.5M495.5 357.5L495.5 339.5M495.5 357.5L512.5 372.5M495.5 357.5L511.5 355.5M495.5 339.5L494.5 322.5M495.5 339.5L511.5 355.5M495.5 339.5L511.5 336.5M494.5 322.5L495.5 304.5M494.5 322.5L511.5 336.5M494.5 322.5L511.5 318.5M495.5 304.5L496.5 286.5M495.5 304.5L511.5 318.5M495.5 304.5L512.5 300.5M496.5 286.5L512.5 300.5M496.5 286.5L512.5 290.5M512.5 549.5L512.5 541.5M512.5 549.5L528.5 554.5M512.5 541.5L512.5 520.5M512.5 541.5L528.5 554.5M512.5 541.5L528.5 536.5M512.5 520.5L512.5 503.5M512.5 520.5L528.5 536.5M512.5 520.5L528.5 517.5M512.5 503.5L512.5 484.5M512.5 503.5L528.5 517.5M512.5 503.5L528.5 499.5M512.5 484.5L512.5 467.5M512.5 484.5L528.5 499.5M512.5 484.5L528.5 480.5M512.5 467.5L511.5 448.5M512.5 467.5L528.5 480.5M512.5 467.5L528.5 462.5M511.5 448.5L512.5 429.5M511.5 448.5L528.5 462.5M511.5 448.5L528.5 443.5M512.5 429.5L512.5 410.5M512.5 429.5L528.5 443.5M512.5 429.5L528.5 425.5M512.5 410.5L512.5 391.5M512.5 410.5L528.5 425.5M512.5 410.5L528.5 406.5M512.5 391.5L512.5 372.5M512.5 391.5L528.5 406.5M512.5 391.5L528.5 388.5M512.5 372.5L511.5 355.5M512.5 372.5L528.5 388.5M512.5 372.5L528.5 369.5M511.5 355.5L511.5 336.5M511.5 355.5L528.5 369.5M511.5 355.5L528.5 351.5M511.5 336.5L511.5 318.5M511.5 336.5L528.5 351.5M511.5 336.5L528.5 332.5M511.5 318.5L512.5 300.5M511.5 318.5L528.5 332.5M511.5 318.5L528.5 314.5M512.5 300.5L512.5 290.5M512.5 300.5L528.5 314.5M512.5 300.5L528.5 295.5M512.5 290.5L528.5 295.5M528.5 554.5L528.5 536.5M528.5 536.5L528.5 517.5M528.5 517.5L528.5 499.5M528.5 499.5L528.5 480.5M528.5 480.5L528.5 462.5M528.5 462.5L528.5 443.5M528.5 443.5L528.5 425.5M528.5 425.5L528.5 406.5M528.5 406.5L528.5 388.5M528.5 388.5L528.5 369.5M528.5 369.5L528.5 351.5M528.5 351.5L528.5 332.5M528.5 332.5L528.5 314.5M528.5 314.5L528.5 295.5M420.5 92.5L438.5 97.5M420.5 92.5L411.5 100.5M420.5 92.5L420.5 103.5M438.5 97.5L457.5 103.5M438.5 97.5L420.5 103.5M438.5 97.5L439.5 108.5M457.5 103.5L475.5 108.5M457.5 103.5L439.5 108.5M457.5 103.5L459.5 114.5M475.5 108.5L494.5 113.5M475.5 108.5L459.5 114.5M475.5 108.5L477.5 118.5M494.5 113.5L512.5 118.5M494.5 113.5L477.5 118.5M494.5 113.5L496.5 123.5M512.5 118.5L531.5 124.5M512.5 118.5L496.5 123.5M512.5 118.5L512.5 129.5M531.5 124.5L549.5 129.5M531.5 124.5L512.5 129.5M531.5 124.5L529.5 134.5M549.5 129.5L567.5 134.5M549.5 129.5L529.5 134.5M549.5 129.5L549.5 139.5M567.5 134.5L586.5 140.5M567.5 134.5L549.5 139.5M567.5 134.5L566.5 145.5M586.5 140.5L604.5 145.5M586.5 140.5L566.5 145.5M586.5 140.5L584.5 150.5M604.5 145.5L623.5 150.5M604.5 145.5L584.5 150.5M604.5 145.5L604.5 156.5M623.5 150.5L641.5 155.5M623.5 150.5L604.5 156.5M623.5 150.5L623.5 161.5M641.5 155.5L660.5 161.5M641.5 155.5L623.5 161.5M641.5 155.5L640.5 166.5M660.5 161.5L678.5 166.5M660.5 161.5L640.5 166.5M660.5 161.5L659.5 172.5M678.5 166.5L659.5 172.5M678.5 166.5L669.5 174.5M411.5 100.5L420.5 103.5M411.5 100.5L401.5 108.5M420.5 103.5L439.5 108.5M420.5 103.5L401.5 108.5M420.5 103.5L420.5 114.5M439.5 108.5L459.5 114.5M439.5 108.5L420.5 114.5M439.5 108.5L441.5 119.5M459.5 114.5L477.5 118.5M459.5 114.5L441.5 119.5M459.5 114.5L460.5 124.5M477.5 118.5L496.5 123.5M477.5 118.5L460.5 124.5M477.5 118.5L477.5 129.5M496.5 123.5L512.5 129.5M496.5 123.5L477.5 129.5M496.5 123.5L495.5 134.5M512.5 129.5L529.5 134.5M512.5 129.5L495.5 134.5M512.5 129.5L511.5 138.5M529.5 134.5L549.5 139.5M529.5 134.5L511.5 138.5M529.5 134.5L529.5 143.5M549.5 139.5L566.5 145.5M549.5 139.5L529.5 143.5M549.5 139.5L546.5 149.5M566.5 145.5L584.5 150.5M566.5 145.5L546.5 149.5M566.5 145.5L565.5 154.5M584.5 150.5L604.5 156.5M584.5 150.5L565.5 154.5M584.5 150.5L584.5 160.5M604.5 156.5L623.5 161.5M604.5 156.5L584.5 160.5M604.5 156.5L604.5 166.5M623.5 161.5L640.5 166.5M623.5 161.5L604.5 166.5M623.5 161.5L623.5 172.5M640.5 166.5L659.5 172.5M640.5 166.5L623.5 172.5M640.5 166.5L641.5 178.5M659.5 172.5L669.5 174.5M659.5 172.5L641.5 178.5M659.5 172.5L659.5 182.5M669.5 174.5L659.5 182.5M401.5 108.5L420.5 114.5M401.5 108.5L392.5 116.5M401.5 108.5L400.5 119.5M420.5 114.5L441.5 119.5M420.5 114.5L400.5 119.5M420.5 114.5L421.5 125.5M441.5 119.5L460.5 124.5M441.5 119.5L421.5 125.5M441.5 119.5L439.5 130.5M460.5 124.5L477.5 129.5M460.5 124.5L439.5 130.5M460.5 124.5L456.5 135.5M477.5 129.5L495.5 134.5M477.5 129.5L456.5 135.5M477.5 129.5L476.5 139.5M495.5 134.5L511.5 138.5M495.5 134.5L476.5 139.5M495.5 134.5L491.5 143.5M511.5 138.5L529.5 143.5M511.5 138.5L491.5 143.5M511.5 138.5L510.5 148.5M529.5 143.5L546.5 149.5M529.5 143.5L510.5 148.5M529.5 143.5L528.5 153.5M546.5 149.5L565.5 154.5M546.5 149.5L528.5 153.5M546.5 149.5L546.5 159.5M565.5 154.5L584.5 160.5M565.5 154.5L546.5 159.5M565.5 154.5L564.5 165.5M584.5 160.5L604.5 166.5M584.5 160.5L564.5 165.5M584.5 160.5L582.5 170.5M604.5 166.5L623.5 172.5M604.5 166.5L582.5 170.5M604.5 166.5L602.5 176.5M623.5 172.5L641.5 178.5M623.5 172.5L602.5 176.5M623.5 172.5L621.5 182.5M641.5 178.5L659.5 182.5M641.5 178.5L621.5 182.5M641.5 178.5L640.5 188.5M659.5 182.5L640.5 188.5M659.5 182.5L650.5 190.5M392.5 116.5L400.5 119.5M392.5 116.5L383.5 124.5M400.5 119.5L421.5 125.5M400.5 119.5L383.5 124.5M400.5 119.5L400.5 131.5M421.5 125.5L439.5 130.5M421.5 125.5L400.5 131.5M421.5 125.5L419.5 136.5M439.5 130.5L456.5 135.5M439.5 130.5L419.5 136.5M439.5 130.5L437.5 141.5M456.5 135.5L476.5 139.5M456.5 135.5L437.5 141.5M456.5 135.5L453.5 145.5M476.5 139.5L491.5 143.5M476.5 139.5L453.5 145.5M476.5 139.5L472.5 150.5M491.5 143.5L510.5 148.5M491.5 143.5L472.5 150.5M491.5 143.5L489.5 153.5M510.5 148.5L528.5 153.5M510.5 148.5L489.5 153.5M510.5 148.5L508.5 158.5M528.5 153.5L546.5 159.5M528.5 153.5L508.5 158.5M528.5 153.5L525.5 162.5M546.5 159.5L564.5 165.5M546.5 159.5L525.5 162.5M546.5 159.5L544.5 168.5M564.5 165.5L582.5 170.5M564.5 165.5L544.5 168.5M564.5 165.5L564.5 174.5M582.5 170.5L602.5 176.5M582.5 170.5L564.5 174.5M582.5 170.5L584.5 181.5M602.5 176.5L621.5 182.5M602.5 176.5L584.5 181.5M602.5 176.5L604.5 187.5M621.5 182.5L640.5 188.5M621.5 182.5L604.5 187.5M621.5 182.5L621.5 193.5M640.5 188.5L650.5 190.5M640.5 188.5L621.5 193.5M640.5 188.5L641.5 198.5M650.5 190.5L641.5 198.5M383.5 124.5L400.5 131.5M383.5 124.5L373.5 132.5M383.5 124.5L382.5 136.5M400.5 131.5L419.5 136.5M400.5 131.5L382.5 136.5M400.5 131.5L398.5 141.5M419.5 136.5L437.5 141.5M419.5 136.5L398.5 141.5M419.5 136.5L415.5 147.5M437.5 141.5L453.5 145.5M437.5 141.5L415.5 147.5M437.5 141.5L434.5 151.5M453.5 145.5L472.5 150.5M453.5 145.5L434.5 151.5M453.5 145.5L452.5 155.5M472.5 150.5L489.5 153.5M472.5 150.5L452.5 155.5M472.5 150.5L470.5 158.5M489.5 153.5L508.5 158.5M489.5 153.5L470.5 158.5M489.5 153.5L490.5 163.5M508.5 158.5L525.5 162.5M508.5 158.5L490.5 163.5M508.5 158.5L510.5 167.5M525.5 162.5L544.5 168.5M525.5 162.5L510.5 167.5M525.5 162.5L529.5 172.5M544.5 168.5L564.5 174.5M544.5 168.5L529.5 172.5M544.5 168.5L547.5 178.5M564.5 174.5L584.5 181.5M564.5 174.5L547.5 178.5M564.5 174.5L564.5 184.5M584.5 181.5L604.5 187.5M584.5 181.5L564.5 184.5M584.5 181.5L585.5 191.5M604.5 187.5L621.5 193.5M604.5 187.5L585.5 191.5M604.5 187.5L602.5 197.5M621.5 193.5L641.5 198.5M621.5 193.5L602.5 197.5M621.5 193.5L622.5 204.5M641.5 198.5L622.5 204.5M641.5 198.5L631.5 206.5M373.5 132.5L382.5 136.5M373.5 132.5L364.5 140.5M382.5 136.5L398.5 141.5M382.5 136.5L364.5 140.5M382.5 136.5L379.5 146.5M398.5 141.5L415.5 147.5M398.5 141.5L379.5 146.5M398.5 141.5L397.5 152.5M415.5 147.5L434.5 151.5M415.5 147.5L397.5 152.5M415.5 147.5L413.5 156.5M434.5 151.5L452.5 155.5M434.5 151.5L413.5 156.5M434.5 151.5L433.5 162.5M452.5 155.5L470.5 158.5M452.5 155.5L433.5 162.5M452.5 155.5L453.5 166.5M470.5 158.5L490.5 163.5M470.5 158.5L453.5 166.5M470.5 158.5L472.5 170.5M490.5 163.5L510.5 167.5M490.5 163.5L472.5 170.5M490.5 163.5L494.5 175.5M510.5 167.5L529.5 172.5M510.5 167.5L494.5 175.5M510.5 167.5L514.5 179.5M529.5 172.5L547.5 178.5M529.5 172.5L514.5 179.5M529.5 172.5L531.5 184.5M547.5 178.5L564.5 184.5M547.5 178.5L531.5 184.5M547.5 178.5L550.5 190.5M564.5 184.5L585.5 191.5M564.5 184.5L550.5 190.5M564.5 184.5L568.5 196.5M585.5 191.5L602.5 197.5M585.5 191.5L568.5 196.5M585.5 191.5L585.5 202.5M602.5 197.5L622.5 204.5M602.5 197.5L585.5 202.5M602.5 197.5L603.5 209.5M622.5 204.5L631.5 206.5M622.5 204.5L603.5 209.5M622.5 204.5L622.5 214.5M631.5 206.5L622.5 214.5M364.5 140.5L379.5 146.5M364.5 140.5L354.5 148.5M364.5 140.5L362.5 151.5M379.5 146.5L397.5 152.5M379.5 146.5L362.5 151.5M379.5 146.5L379.5 158.5M397.5 152.5L413.5 156.5M397.5 152.5L379.5 158.5M397.5 152.5L397.5 162.5M413.5 156.5L433.5 162.5M413.5 156.5L397.5 162.5M413.5 156.5L414.5 167.5M433.5 162.5L453.5 166.5M433.5 162.5L414.5 167.5M433.5 162.5L438.5 172.5M453.5 166.5L472.5 170.5M453.5 166.5L438.5 172.5M453.5 166.5L460.5 176.5M472.5 170.5L494.5 175.5M472.5 170.5L460.5 176.5M472.5 170.5L480.5 181.5M494.5 175.5L514.5 179.5M494.5 175.5L480.5 181.5M494.5 175.5L501.5 186.5M514.5 179.5L531.5 184.5M514.5 179.5L501.5 186.5M514.5 179.5L521.5 191.5M531.5 184.5L550.5 190.5M531.5 184.5L521.5 191.5M531.5 184.5L538.5 197.5M550.5 190.5L568.5 196.5M550.5 190.5L538.5 197.5M550.5 190.5L553.5 202.5M568.5 196.5L585.5 202.5M568.5 196.5L553.5 202.5M568.5 196.5L569.5 208.5M585.5 202.5L603.5 209.5M585.5 202.5L569.5 208.5M585.5 202.5L587.5 213.5M603.5 209.5L622.5 214.5M603.5 209.5L587.5 213.5M603.5 209.5L601.5 220.5M622.5 214.5L601.5 220.5M622.5 214.5L612.5 222.5M354.5 148.5L362.5 151.5M354.5 148.5L345.5 157.5M362.5 151.5L379.5 158.5M362.5 151.5L345.5 157.5M362.5 151.5L361.5 162.5M379.5 158.5L397.5 162.5M379.5 158.5L361.5 162.5M379.5 158.5L378.5 168.5M397.5 162.5L414.5 167.5M397.5 162.5L378.5 168.5M397.5 162.5L399.5 173.5M414.5 167.5L438.5 172.5M414.5 167.5L399.5 173.5M414.5 167.5L419.5 178.5M438.5 172.5L460.5 176.5M438.5 172.5L419.5 178.5M438.5 172.5L443.5 182.5M460.5 176.5L480.5 181.5M460.5 176.5L443.5 182.5M460.5 176.5L466.5 189.5M480.5 181.5L501.5 186.5M480.5 181.5L466.5 189.5M480.5 181.5L488.5 194.5M501.5 186.5L521.5 191.5M501.5 186.5L488.5 194.5M501.5 186.5L506.5 199.5M521.5 191.5L538.5 197.5M521.5 191.5L506.5 199.5M521.5 191.5L526.5 205.5M538.5 197.5L553.5 202.5M538.5 197.5L526.5 205.5M553.5 202.5L569.5 208.5M553.5 202.5L526.5 205.5M553.5 202.5L540.5 210.5M553.5 202.5L553.5 215.5M569.5 208.5L587.5 213.5M569.5 208.5L553.5 215.5M569.5 208.5L569.5 220.5M587.5 213.5L601.5 220.5M587.5 213.5L569.5 220.5M587.5 213.5L587.5 225.5M601.5 220.5L612.5 222.5M601.5 220.5L587.5 225.5M601.5 220.5L603.5 231.5M612.5 222.5L603.5 231.5M345.5 157.5L361.5 162.5M345.5 157.5L336.5 165.5M345.5 157.5L344.5 167.5M361.5 162.5L378.5 168.5M361.5 162.5L344.5 167.5M361.5 162.5L362.5 172.5M378.5 168.5L399.5 173.5M378.5 168.5L362.5 172.5M378.5 168.5L382.5 177.5M399.5 173.5L419.5 178.5M399.5 173.5L382.5 177.5M399.5 173.5L402.5 183.5M419.5 178.5L443.5 182.5M419.5 178.5L402.5 183.5M419.5 178.5L426.5 189.5M443.5 182.5L466.5 189.5M443.5 182.5L426.5 189.5M443.5 182.5L448.5 194.5M466.5 189.5L488.5 194.5M466.5 189.5L448.5 194.5M466.5 189.5L472.5 200.5M488.5 194.5L506.5 199.5M488.5 194.5L472.5 200.5M488.5 194.5L493.5 206.5M506.5 199.5L526.5 205.5M506.5 199.5L493.5 206.5M506.5 199.5L510.5 212.5M526.5 205.5L540.5 210.5M526.5 205.5L510.5 212.5M526.5 205.5L524.5 217.5M540.5 210.5L553.5 215.5M540.5 210.5L524.5 217.5M540.5 210.5L540.5 223.5M553.5 215.5L569.5 220.5M553.5 215.5L540.5 223.5M553.5 215.5L554.5 227.5M569.5 220.5L587.5 225.5M569.5 220.5L554.5 227.5M569.5 220.5L567.5 231.5M587.5 225.5L603.5 231.5M587.5 225.5L567.5 231.5M587.5 225.5L586.5 236.5M603.5 231.5L586.5 236.5M603.5 231.5L594.5 239.5M336.5 165.5L344.5 167.5M336.5 165.5L326.5 173.5M344.5 167.5L362.5 172.5M344.5 167.5L326.5 173.5M344.5 167.5L345.5 177.5M362.5 172.5L382.5 177.5M362.5 172.5L345.5 177.5M362.5 172.5L364.5 183.5M382.5 177.5L402.5 183.5M382.5 177.5L364.5 183.5M382.5 177.5L383.5 187.5M402.5 183.5L426.5 189.5M402.5 183.5L383.5 187.5M402.5 183.5L405.5 192.5M426.5 189.5L448.5 194.5M426.5 189.5L405.5 192.5M426.5 189.5L427.5 198.5M448.5 194.5L472.5 200.5M448.5 194.5L427.5 198.5M448.5 194.5L450.5 205.5M472.5 200.5L493.5 206.5M472.5 200.5L450.5 205.5M472.5 200.5L469.5 212.5M493.5 206.5L510.5 212.5M493.5 206.5L469.5 212.5M493.5 206.5L488.5 218.5M510.5 212.5L524.5 217.5M510.5 212.5L488.5 218.5M510.5 212.5L504.5 224.5M524.5 217.5L540.5 223.5M524.5 217.5L504.5 224.5M524.5 217.5L520.5 229.5M540.5 223.5L554.5 227.5M540.5 223.5L520.5 229.5M540.5 223.5L534.5 234.5M554.5 227.5L567.5 231.5M554.5 227.5L534.5 234.5M554.5 227.5L550.5 238.5M567.5 231.5L586.5 236.5M567.5 231.5L550.5 238.5M567.5 231.5L566.5 242.5M586.5 236.5L594.5 239.5M586.5 236.5L566.5 242.5M586.5 236.5L584.5 247.5M594.5 239.5L584.5 247.5M326.5 173.5L345.5 177.5M326.5 173.5L317.5 181.5M326.5 173.5L325.5 183.5M345.5 177.5L364.5 183.5M345.5 177.5L325.5 183.5M345.5 177.5L344.5 187.5M364.5 183.5L383.5 187.5M364.5 183.5L344.5 187.5M364.5 183.5L364.5 192.5M383.5 187.5L405.5 192.5M383.5 187.5L364.5 192.5M383.5 187.5L386.5 197.5M405.5 192.5L427.5 198.5M405.5 192.5L386.5 197.5M405.5 192.5L405.5 203.5M427.5 198.5L450.5 205.5M427.5 198.5L405.5 203.5M427.5 198.5L427.5 209.5M450.5 205.5L469.5 212.5M450.5 205.5L427.5 209.5M450.5 205.5L446.5 216.5M469.5 212.5L488.5 218.5M469.5 212.5L446.5 216.5M469.5 212.5L465.5 222.5M488.5 218.5L504.5 224.5M488.5 218.5L465.5 222.5M488.5 218.5L483.5 228.5M504.5 224.5L520.5 229.5M504.5 224.5L483.5 228.5M504.5 224.5L498.5 234.5M520.5 229.5L534.5 234.5M520.5 229.5L498.5 234.5M520.5 229.5L513.5 240.5M534.5 234.5L550.5 238.5M534.5 234.5L513.5 240.5M534.5 234.5L530.5 245.5M550.5 238.5L566.5 242.5M550.5 238.5L530.5 245.5M550.5 238.5L546.5 249.5M566.5 242.5L584.5 247.5M566.5 242.5L546.5 249.5M566.5 242.5L565.5 253.5M584.5 247.5L565.5 253.5M584.5 247.5L575.5 255.5M317.5 181.5L325.5 183.5M317.5 181.5L308.5 189.5M325.5 183.5L344.5 187.5M325.5 183.5L308.5 189.5M325.5 183.5L326.5 194.5M344.5 187.5L364.5 192.5M344.5 187.5L326.5 194.5M344.5 187.5L346.5 197.5M364.5 192.5L386.5 197.5M364.5 192.5L346.5 197.5M364.5 192.5L364.5 202.5M386.5 197.5L405.5 203.5M386.5 197.5L364.5 202.5M386.5 197.5L384.5 208.5M405.5 203.5L427.5 209.5M405.5 203.5L384.5 208.5M405.5 203.5L403.5 213.5M427.5 209.5L446.5 216.5M427.5 209.5L403.5 213.5M427.5 209.5L421.5 219.5M446.5 216.5L465.5 222.5M446.5 216.5L421.5 219.5M446.5 216.5L440.5 225.5M465.5 222.5L483.5 228.5M465.5 222.5L440.5 225.5M465.5 222.5L456.5 232.5M483.5 228.5L498.5 234.5M483.5 228.5L456.5 232.5M483.5 228.5L475.5 238.5M498.5 234.5L513.5 240.5M498.5 234.5L475.5 238.5M498.5 234.5L491.5 244.5M513.5 240.5L530.5 245.5M513.5 240.5L491.5 244.5M513.5 240.5L508.5 250.5M530.5 245.5L546.5 249.5M530.5 245.5L508.5 250.5M530.5 245.5L526.5 254.5M546.5 249.5L565.5 253.5M546.5 249.5L526.5 254.5M546.5 249.5L546.5 258.5M565.5 253.5L575.5 255.5M565.5 253.5L546.5 258.5M565.5 253.5L566.5 263.5M575.5 255.5L566.5 263.5M308.5 189.5L326.5 194.5M308.5 189.5L298.5 197.5M308.5 189.5L308.5 200.5M326.5 194.5L346.5 197.5M326.5 194.5L308.5 200.5M326.5 194.5L327.5 204.5M346.5 197.5L364.5 202.5M346.5 197.5L327.5 204.5M346.5 197.5L344.5 208.5M364.5 202.5L384.5 208.5M364.5 202.5L344.5 208.5M364.5 202.5L364.5 213.5M384.5 208.5L403.5 213.5M384.5 208.5L364.5 213.5M384.5 208.5L382.5 218.5M403.5 213.5L421.5 219.5M403.5 213.5L382.5 218.5M403.5 213.5L401.5 223.5M421.5 219.5L440.5 225.5M421.5 219.5L401.5 223.5M421.5 219.5L417.5 229.5M440.5 225.5L456.5 232.5M440.5 225.5L417.5 229.5M440.5 225.5L435.5 236.5M456.5 232.5L475.5 238.5M456.5 232.5L435.5 236.5M456.5 232.5L452.5 241.5M475.5 238.5L491.5 244.5M475.5 238.5L452.5 241.5M475.5 238.5L471.5 248.5M491.5 244.5L508.5 250.5M491.5 244.5L471.5 248.5M491.5 244.5L488.5 253.5M508.5 250.5L526.5 254.5M508.5 250.5L488.5 253.5M508.5 250.5L507.5 259.5M526.5 254.5L546.5 258.5M526.5 254.5L507.5 259.5M526.5 254.5L527.5 264.5M546.5 258.5L566.5 263.5M546.5 258.5L527.5 264.5M546.5 258.5L546.5 269.5M566.5 263.5L546.5 269.5M566.5 263.5L556.5 271.5M298.5 197.5L308.5 200.5M298.5 197.5L289.5 205.5M308.5 200.5L327.5 204.5M308.5 200.5L289.5 205.5M308.5 200.5L307.5 210.5M327.5 204.5L344.5 208.5M327.5 204.5L307.5 210.5M327.5 204.5L327.5 215.5M344.5 208.5L364.5 213.5M344.5 208.5L327.5 215.5M344.5 208.5L345.5 219.5M364.5 213.5L382.5 218.5M364.5 213.5L345.5 219.5M364.5 213.5L362.5 225.5M382.5 218.5L401.5 223.5M382.5 218.5L362.5 225.5M382.5 218.5L381.5 229.5M401.5 223.5L417.5 229.5M401.5 223.5L381.5 229.5M401.5 223.5L396.5 235.5M417.5 229.5L435.5 236.5M417.5 229.5L396.5 235.5M417.5 229.5L416.5 240.5M435.5 236.5L452.5 241.5M435.5 236.5L416.5 240.5M435.5 236.5L433.5 246.5M452.5 241.5L471.5 248.5M452.5 241.5L433.5 246.5M452.5 241.5L452.5 252.5M471.5 248.5L488.5 253.5M471.5 248.5L452.5 252.5M471.5 248.5L468.5 258.5M488.5 253.5L507.5 259.5M488.5 253.5L468.5 258.5M488.5 253.5L488.5 263.5M507.5 259.5L527.5 264.5M507.5 259.5L488.5 263.5M507.5 259.5L507.5 268.5M527.5 264.5L546.5 269.5M527.5 264.5L507.5 268.5M527.5 264.5L527.5 273.5M546.5 269.5L556.5 271.5M546.5 269.5L527.5 273.5M546.5 269.5L547.5 279.5M556.5 271.5L547.5 279.5M289.5 205.5L307.5 210.5M289.5 205.5L279.5 213.5M289.5 205.5L289.5 215.5M307.5 210.5L327.5 215.5M307.5 210.5L289.5 215.5M307.5 210.5L307.5 221.5M327.5 215.5L345.5 219.5M327.5 215.5L307.5 221.5M327.5 215.5L327.5 225.5M345.5 219.5L362.5 225.5M345.5 219.5L327.5 225.5M345.5 219.5L345.5 231.5M362.5 225.5L381.5 229.5M362.5 225.5L345.5 231.5M362.5 225.5L362.5 236.5M381.5 229.5L396.5 235.5M381.5 229.5L362.5 236.5M381.5 229.5L380.5 241.5M396.5 235.5L416.5 240.5M396.5 235.5L380.5 241.5M396.5 235.5L397.5 246.5M416.5 240.5L433.5 246.5M416.5 240.5L397.5 246.5M416.5 240.5L416.5 251.5M433.5 246.5L452.5 252.5M433.5 246.5L416.5 251.5M433.5 246.5L434.5 257.5M452.5 252.5L468.5 258.5M452.5 252.5L434.5 257.5M452.5 252.5L452.5 263.5M468.5 258.5L488.5 263.5M468.5 258.5L452.5 263.5M468.5 258.5L471.5 268.5M488.5 263.5L507.5 268.5M488.5 263.5L471.5 268.5M488.5 263.5L490.5 274.5M507.5 268.5L527.5 273.5M507.5 268.5L490.5 274.5M507.5 268.5L510.5 279.5M527.5 273.5L547.5 279.5M527.5 273.5L510.5 279.5M527.5 273.5L529.5 284.5M547.5 279.5L529.5 284.5M547.5 279.5L537.5 287.5M279.5 213.5L289.5 215.5M279.5 213.5L270.5 221.5M289.5 215.5L307.5 221.5M289.5 215.5L270.5 221.5M289.5 215.5L288.5 226.5M307.5 221.5L327.5 225.5M307.5 221.5L288.5 226.5M307.5 221.5L307.5 232.5M327.5 225.5L345.5 231.5M327.5 225.5L307.5 232.5M327.5 225.5L325.5 237.5M345.5 231.5L362.5 236.5M345.5 231.5L325.5 237.5M345.5 231.5L344.5 242.5M362.5 236.5L380.5 241.5M362.5 236.5L344.5 242.5M362.5 236.5L362.5 247.5M380.5 241.5L397.5 246.5M380.5 241.5L362.5 247.5M380.5 241.5L381.5 253.5M397.5 246.5L416.5 251.5M397.5 246.5L381.5 253.5M397.5 246.5L399.5 258.5M416.5 251.5L434.5 257.5M416.5 251.5L399.5 258.5M416.5 251.5L417.5 263.5M434.5 257.5L452.5 263.5M434.5 257.5L417.5 263.5M434.5 257.5L436.5 269.5M452.5 263.5L471.5 268.5M452.5 263.5L436.5 269.5M452.5 263.5L454.5 274.5M471.5 268.5L490.5 274.5M471.5 268.5L454.5 274.5M471.5 268.5L473.5 279.5M490.5 274.5L510.5 279.5M490.5 274.5L473.5 279.5M490.5 274.5L491.5 284.5M510.5 279.5L529.5 284.5M510.5 279.5L491.5 284.5M510.5 279.5L510.5 290.5M529.5 284.5L537.5 287.5M529.5 284.5L510.5 290.5M529.5 284.5L528.5 295.5M537.5 287.5L528.5 295.5M270.5 221.5L288.5 226.5M288.5 226.5L307.5 232.5M307.5 232.5L325.5 237.5M325.5 237.5L344.5 242.5M344.5 242.5L362.5 247.5M362.5 247.5L381.5 253.5M381.5 253.5L399.5 258.5M399.5 258.5L417.5 263.5M417.5 263.5L436.5 269.5M436.5 269.5L454.5 274.5M454.5 274.5L473.5 279.5M473.5 279.5L491.5 284.5M491.5 284.5L510.5 290.5M510.5 290.5L528.5 295.5" fill="none" stroke="#1070d0" stroke-width="1" shape-rendering="crispEdges"/>
</svg><svg class="abs" style="left:721px;top:90px" width="21" height="467" viewBox="721 90 21 467">
<defs><linearGradient id="turbo" x1="0" y1="0" x2="0" y2="1"><stop offset="0.0000" stop-color="#7a0403"/><stop offset="0.0312" stop-color="#920b01"/><stop offset="0.0625" stop-color="#a91601"/><stop offset="0.0938" stop-color="#be2102"/><stop offset="0.1250" stop-color="#d02f05"/><stop offset="0.1562" stop-color="#df3f08"/><stop offset="0.1875" stop-color="#eb500e"/><stop offset="0.2188" stop-color="#f46617"/><stop offset="0.2500" stop-color="#fb7e21"/><stop offset="0.2812" stop-color="#fe962b"/><stop offset="0.3125" stop-color="#fdac34"/><stop offset="0.3438" stop-color="#f8be39"/><stop offset="0.3750" stop-color="#eecf3a"/><stop offset="0.4062" stop-color="#dfdf37"/><stop offset="0.4375" stop-color="#cdec34"/><stop offset="0.4688" stop-color="#b9f635"/><stop offset="0.5000" stop-color="#a4fc3c"/><stop offset="0.5312" stop-color="#8bff4b"/><stop offset="0.5625" stop-color="#6dfe62"/><stop offset="0.5938" stop-color="#4ef97d"/><stop offset="0.6250" stop-color="#32f298"/><stop offset="0.6562" stop-color="#1fe9af"/><stop offset="0.6875" stop-color="#18ddc2"/><stop offset="0.7188" stop-color="#1ccdd8"/><stop offset="0.7500" stop-color="#28bceb"/><stop offset="0.7812" stop-color="#37a8fa"/><stop offset="0.8125" stop-color="#4294ff"/><stop offset="0.8438" stop-color="#4680f6"/><stop offset="0.8750" stop-color="#466be3"/><stop offset="0.9062" stop-color="#4456c7"/><stop offset="0.9375" stop-color="#4040a2"/><stop offset="0.9688" stop-color="#392a73"/><stop offset="1.0000" stop-color="#30123b"/></linearGradient></defs>
<rect x="722" y="91" width="19" height="465" fill="#ffffff"/>
<rect x="723" y="92" width="17" height="463" fill="#262626"/>
<rect x="724" y="93" width="15" height="461" fill="url(#turbo)"/>
<g fill="#262626"><rect x="735" y="102" width="4" height="1"/><rect x="735" y="253" width="4" height="1"/><rect x="735" y="404" width="4" height="1"/></g>
</svg>
<div class="lbl" style="top:96px">0.015</div>
<div class="lbl" style="top:247px">0.01</div>
<div class="lbl" style="top:397px">0.005</div>
<div class="lbl" style="top:548px">0</div>
</body></html>
